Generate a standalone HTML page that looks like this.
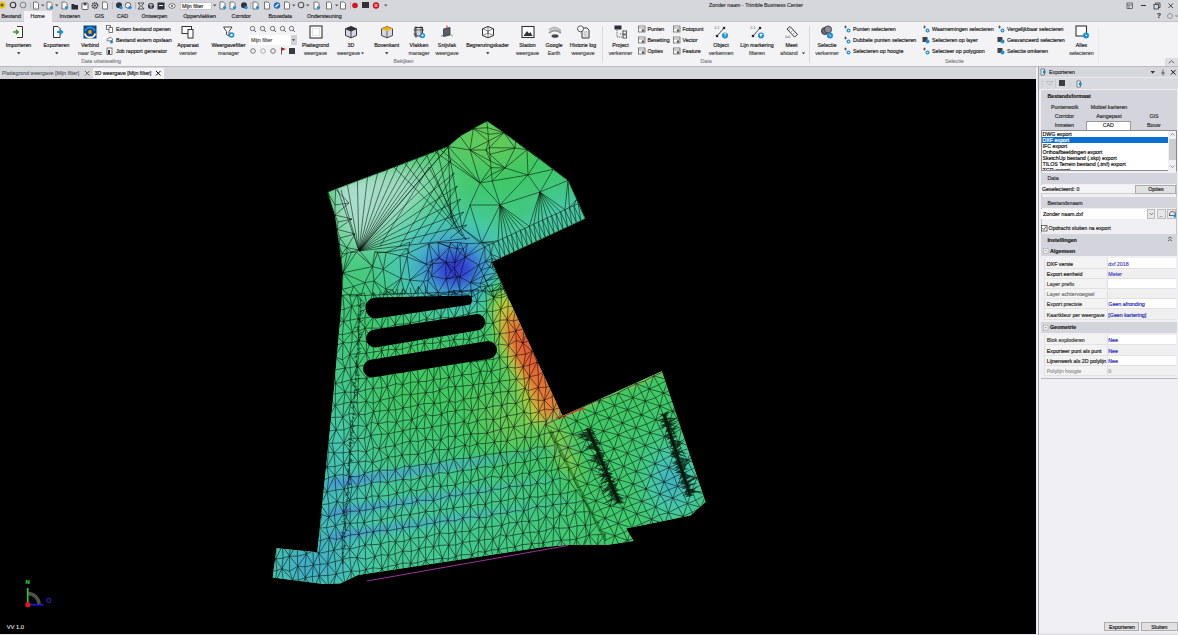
<!DOCTYPE html><html><head><meta charset="utf-8"><style>
html,body{margin:0;padding:0;}
body{width:1178px;height:635px;overflow:hidden;position:relative;background:#d6d7dd;font-family:"Liberation Sans",sans-serif;}
.t{position:absolute;white-space:pre;line-height:8px;height:8px;-webkit-text-stroke:0.18px currentColor;}
.r{position:absolute;}
</style></head><body>

<div class="r" style="left:0px;top:0px;width:1178px;height:22px;background:#d6d7dd;"></div>
<div class="r" style="left:0px;top:21px;width:1178px;height:45px;background:#f3f3f6;"></div>
<div class="r" style="left:0px;top:21px;width:1178px;height:1px;background:#c4c5cc;"></div>
<div class="r" style="left:24px;top:11px;width:28px;height:11px;background:#f3f3f6;"></div>
<div class="r" style="left:0px;top:65.5px;width:1178px;height:1px;background:#c0c1c8;"></div>
<div class="r" style="left:0px;top:66px;width:1038px;height:13px;background:#d6d7dd;"></div>
<div class="r" style="left:93px;top:67.5px;width:71px;height:11.5px;background:#f4f4f7;"></div>
<div class="r" style="left:0px;top:79px;width:1036px;height:555.5px;background:#000;"></div>
<div class="r" style="left:1036px;top:66px;width:2px;height:569px;background:#eeeef2;"></div>
<div class="r" style="left:1038px;top:66px;width:1px;height:569px;background:#a0a1a8;"></div>
<div class="r" style="left:0px;top:634.3px;width:1038px;height:1px;background:#e8e8ec;"></div>
<div class="t" style="left:1.5px;top:12.00px;font-size:5.3px;color:#2a2a2a;">Bestand</div>
<div class="t" style="left:30.6px;top:12.00px;font-size:5.3px;color:#2a2a2a;">Home</div>
<div class="t" style="left:59.6px;top:12.00px;font-size:5.3px;color:#2a2a2a;">Invoeren</div>
<div class="t" style="left:94.8px;top:12.00px;font-size:5.3px;color:#2a2a2a;">GIS</div>
<div class="t" style="left:117px;top:12.00px;font-size:5.3px;color:#2a2a2a;">CAD</div>
<div class="t" style="left:141.4px;top:12.00px;font-size:5.3px;color:#2a2a2a;">Ontwerpen</div>
<div class="t" style="left:183.2px;top:12.00px;font-size:5.3px;color:#2a2a2a;">Oppervlakken</div>
<div class="t" style="left:231.6px;top:12.00px;font-size:5.3px;color:#2a2a2a;">Corridor</div>
<div class="t" style="left:268.5px;top:12.00px;font-size:5.3px;color:#2a2a2a;">Bouwdata</div>
<div class="t" style="left:307px;top:12.00px;font-size:5.3px;color:#2a2a2a;">Ondersteuning</div>
<div class="t" style="left:656px;width:200px;text-align:center;top:1.00px;font-size:5.3px;color:#3a3a3a;">Zonder naam - Trimble Business Center</div>
<svg class="r" style="left:-1px;top:0px;" width="9" height="10" viewBox="0 0 9 10"><circle cx="3" cy="5" r="3.6" fill="#e6c51a"/><circle cx="3" cy="5" r="1.6" fill="#6b5a10"/></svg>
<svg class="r" style="left:9px;top:1px;" width="8" height="8" viewBox="0 0 8 8"><circle cx="4" cy="4" r="2.8" fill="none" stroke="#333" stroke-width="1.1"/></svg>
<svg class="r" style="left:19px;top:1px;" width="8" height="8" viewBox="0 0 8 8"><circle cx="4" cy="4" r="2.8" fill="none" stroke="#888" stroke-width="1.1"/></svg>
<div class="r" style="left:30px;top:2px;width:1px;height:7px;background:#b8b9c0;"></div>
<svg class="r" style="left:31.5px;top:1px;" width="8" height="9" viewBox="0 0 8 9"><path d="M1.5 1H5L6.5 2.5V8H1.5Z" fill="#fff" stroke="#555" stroke-width="0.8"/></svg>
<svg class="r" style="left:41px;top:4px;" width="4" height="3" viewBox="0 0 4 3"><path d="M0 0.5H3.5L1.75 2.5Z" fill="#555"/></svg>
<svg class="r" style="left:46px;top:1px;" width="8" height="9" viewBox="0 0 8 9"><path d="M1 1H4.5L6 2.5V8H1Z" fill="#fff" stroke="#555" stroke-width="0.8"/><circle cx="5.5" cy="6.5" r="1.6" fill="#1a8fd6"/></svg>
<svg class="r" style="left:55px;top:4px;" width="4" height="3" viewBox="0 0 4 3"><path d="M0 0.5H3.5L1.75 2.5Z" fill="#555"/></svg>
<svg class="r" style="left:60.599999999999994px;top:1px;" width="8" height="9" viewBox="0 0 8 9"><path d="M1 1H4.5L6 2.5V8H1Z" fill="#fff" stroke="#555" stroke-width="0.8"/><circle cx="5.5" cy="6.5" r="1.6" fill="#1a8fd6"/></svg>
<svg class="r" style="left:71px;top:2px;" width="8" height="8" viewBox="0 0 8 8"><path d="M0.5 2H3L3.8 3H7V7.5H0.5Z" fill="#2a2c34"/></svg>
<svg class="r" style="left:80.5px;top:1.5px;" width="8" height="8" viewBox="0 0 8 8"><rect x="1" y="1" width="6" height="6.5" rx="0.8" fill="#fff" stroke="#444" stroke-width="0.8"/><rect x="2.5" y="1" width="3" height="2.3" fill="#444"/></svg>
<svg class="r" style="left:90.6px;top:1px;" width="8" height="9" viewBox="0 0 8 9"><circle cx="4" cy="4.5" r="2.6" fill="none" stroke="#333" stroke-width="1.6" stroke-dasharray="1.2 0.6"/><circle cx="4" cy="4.5" r="1" fill="#333"/></svg>
<svg class="r" style="left:100.8px;top:1px;" width="8" height="9" viewBox="0 0 8 9"><path d="M1.5 1H5L6.5 2.5V8H1.5Z" fill="#fff" stroke="#555" stroke-width="0.8"/></svg>
<div class="r" style="left:112px;top:2px;width:1px;height:7px;background:#b8b9c0;"></div>
<svg class="r" style="left:114.6px;top:1px;" width="9" height="9" viewBox="0 0 9 9"><circle cx="4" cy="4.3" r="3" fill="#2d3440"/><circle cx="6" cy="6.5" r="1.7" fill="#1a8fd6"/></svg>
<svg class="r" style="left:124px;top:1px;" width="9" height="9" viewBox="0 0 9 9"><circle cx="4" cy="4.3" r="2.8" fill="#fff" stroke="#444" stroke-width="0.8"/><circle cx="6" cy="6.5" r="1.7" fill="#1a8fd6"/></svg>
<div class="r" style="left:135px;top:2px;width:1px;height:7px;background:#b8b9c0;"></div>
<svg class="r" style="left:137px;top:1.5px;" width="8" height="8" viewBox="0 0 8 8"><path d="M1 1H7L4.5 4L7 7H1L3.5 4Z" fill="#ddd" stroke="#333" stroke-width="0.8"/></svg>
<svg class="r" style="left:147px;top:1.5px;" width="8" height="8" viewBox="0 0 8 8"><circle cx="4" cy="4" r="3" fill="#2d2f38"/><path d="M4 1.5V6.5M2 3H6" stroke="#fff" stroke-width="0.7"/></svg>
<svg class="r" style="left:157.3px;top:1.5px;" width="8" height="8" viewBox="0 0 8 8"><rect x="0.5" y="0.5" width="7" height="7" fill="#2d2f38"/><path d="M2 3.5H6" stroke="#fff" stroke-width="1"/></svg>
<svg class="r" style="left:167.5px;top:1.5px;" width="8" height="8" viewBox="0 0 8 8"><ellipse cx="4" cy="4" rx="3.2" ry="2.3" fill="#fff" stroke="#555" stroke-width="0.8"/><circle cx="4" cy="4" r="1" fill="#555"/></svg>
<div class="r" style="left:180px;top:2px;width:32px;height:8px;background:#fff;border:0.5px solid #c8c8cc;box-sizing:border-box;"></div>
<div class="t" style="left:182px;top:2.00px;font-size:5.3px;color:#333;">Mijn filter</div>
<svg class="r" style="left:213px;top:4px;" width="4" height="3" viewBox="0 0 4 3"><path d="M0 0.5H3.5L1.75 2.5Z" fill="#555"/></svg>
<svg class="r" style="left:219px;top:1px;" width="8" height="9" viewBox="0 0 8 9"><path d="M1 1H4.5L6 2.5V8H1Z" fill="#fff" stroke="#555" stroke-width="0.8"/><circle cx="5.5" cy="6.5" r="1.6" fill="#1a8fd6"/></svg>
<svg class="r" style="left:229px;top:1px;" width="8" height="9" viewBox="0 0 8 9"><path d="M1 1H4.5L6 2.5V8H1Z" fill="#fff" stroke="#555" stroke-width="0.8"/><circle cx="5.5" cy="6.5" r="1.6" fill="#1a8fd6"/></svg>
<svg class="r" style="left:240px;top:1px;" width="9" height="9" viewBox="0 0 9 9"><circle cx="4" cy="4.3" r="3" fill="#2d3440"/><circle cx="6" cy="6.5" r="1.7" fill="#1a8fd6"/></svg>
<div class="r" style="left:250px;top:2px;width:1px;height:7px;background:#b8b9c0;"></div>
<svg class="r" style="left:252px;top:1px;" width="8" height="9" viewBox="0 0 8 9"><path d="M1 1H4.5L6 2.5V8H1Z" fill="#fff" stroke="#555" stroke-width="0.8"/><circle cx="5.5" cy="6.5" r="1.6" fill="#1a8fd6"/></svg>
<svg class="r" style="left:263px;top:1px;" width="8" height="9" viewBox="0 0 8 9"><path d="M1.5 1H5L6.5 2.5V8H1.5Z" fill="#fff" stroke="#555" stroke-width="0.8"/></svg>
<svg class="r" style="left:273px;top:1px;" width="8" height="8" viewBox="0 0 8 8"><circle cx="4" cy="4.5" r="3.2" fill="#1a6fc0"/><path d="M2.5 6L5.5 3" stroke="#fff" stroke-width="1.2"/></svg>
<svg class="r" style="left:283px;top:1px;" width="8" height="9" viewBox="0 0 8 9"><path d="M1.5 1H5L6.5 2.5V8H1.5Z" fill="#fff" stroke="#555" stroke-width="0.8"/></svg>
<svg class="r" style="left:292px;top:4px;" width="4" height="3" viewBox="0 0 4 3"><path d="M0 0.5H3.5L1.75 2.5Z" fill="#555"/></svg>
<svg class="r" style="left:297px;top:1px;" width="8" height="8" viewBox="0 0 8 8"><circle cx="4" cy="4" r="2.8" fill="none" stroke="#555" stroke-width="1.1"/></svg>
<svg class="r" style="left:306px;top:4px;" width="4" height="3" viewBox="0 0 4 3"><path d="M0 0.5H3.5L1.75 2.5Z" fill="#555"/></svg>
<div class="r" style="left:314px;top:2px;width:1px;height:7px;background:#b8b9c0;"></div>
<svg class="r" style="left:313px;top:1px;" width="8" height="9" viewBox="0 0 8 9"><path d="M1 1H4.5L6 2.5V8H1Z" fill="#fff" stroke="#555" stroke-width="0.8"/><circle cx="5.5" cy="6.5" r="1.6" fill="#1a8fd6"/></svg>
<svg class="r" style="left:325px;top:1px;" width="8" height="9" viewBox="0 0 8 9"><path d="M1.5 1H5L6.5 2.5V8H1.5Z" fill="#fff" stroke="#555" stroke-width="0.8"/></svg>
<svg class="r" style="left:335px;top:4px;" width="4" height="3" viewBox="0 0 4 3"><path d="M0 0.5H3.5L1.75 2.5Z" fill="#555"/></svg>
<svg class="r" style="left:339px;top:1px;" width="8" height="9" viewBox="0 0 8 9"><path d="M1.5 1H5L6.5 2.5V8H1.5Z" fill="#fff" stroke="#555" stroke-width="0.8"/></svg>
<div class="r" style="left:350px;top:2px;width:1px;height:7px;background:#b8b9c0;"></div>
<svg class="r" style="left:351px;top:1px;" width="8" height="8" viewBox="0 0 8 8"><circle cx="4" cy="4.5" r="2.8" fill="#d4141e"/></svg>
<div class="r" style="left:361.5px;top:2px;width:7px;height:6px;background:#333;"></div>
<svg class="r" style="left:372px;top:1px;" width="8" height="8" viewBox="0 0 8 8"><circle cx="4" cy="4.5" r="3.2" fill="#d4141e"/><path d="M2.6 3.1L5.4 5.9M5.4 3.1L2.6 5.9" stroke="#fff" stroke-width="0.9"/></svg>
<svg class="r" style="left:384px;top:4px;" width="4" height="3" viewBox="0 0 4 3"><path d="M0 0.5H3.5L1.75 2.5Z" fill="#555"/></svg>
<svg class="r" style="left:1125.5px;top:1.5px;" width="8" height="8" viewBox="0 0 8 8"><rect x="1" y="1" width="5.5" height="5.5" fill="none" stroke="#444" stroke-width="0.7"/><path d="M1 3H6.5M3 3V6.5" stroke="#444" stroke-width="0.6"/></svg>
<div class="r" style="left:1141px;top:5px;width:5px;height:0.8px;background:#333;"></div>
<svg class="r" style="left:1153px;top:1.5px;" width="8" height="8" viewBox="0 0 8 8"><rect x="1" y="2.5" width="4.5" height="4.5" fill="none" stroke="#333" stroke-width="0.8"/><path d="M2.5 2.5V1H7V5.5H5.5" fill="none" stroke="#333" stroke-width="0.8"/></svg>
<svg class="r" style="left:1167px;top:1.5px;" width="8" height="8" viewBox="0 0 8 8"><path d="M1.5 1.5L6 6M6 1.5L1.5 6" stroke="#333" stroke-width="0.9"/></svg>
<div class="t" style="left:1059px;width:200px;text-align:center;top:12.00px;font-size:7px;color:#333;font-weight:bold;">?</div>
<svg class="r" style="left:1166px;top:12px;" width="12" height="8" viewBox="0 0 12 8"><circle cx="4" cy="4" r="2.5" fill="none" stroke="#999" stroke-width="1"/><path d="M9 3.5H11.5L10.25 5Z" fill="#666"/></svg>
<svg class="r" style="left:11.5px;top:24.5px;" width="14" height="14" viewBox="0 0 14 14"><path d="M5 1.5H10.5V12.5H5" fill="#fff" stroke="#333" stroke-width="1"/><path d="M1 7H6M4 4.8L6.3 7L4 9.2" fill="none" stroke="#3f9b2f" stroke-width="1.6"/></svg>
<div class="t" style="left:-81.5px;width:200px;text-align:center;top:41.30px;font-size:5.3px;color:#262626;">Importeren</div>
<svg class="r" style="left:16.75px;top:51.5px;" width="4" height="3" viewBox="0 0 4 3"><path d="M0 0.3H3.5L1.75 2.3Z" fill="#222"/></svg>
<svg class="r" style="left:49.5px;top:24.5px;" width="14" height="14" viewBox="0 0 14 14"><path d="M3.5 1.5H8L10 3.5V12.5H3.5Z" fill="#fff" stroke="#333" stroke-width="1"/><path d="M7 7H12M10 4.8L12.3 7L10 9.2" fill="none" stroke="#1a8fd6" stroke-width="1.8"/></svg>
<div class="t" style="left:-43.5px;width:200px;text-align:center;top:41.30px;font-size:5.3px;color:#262626;">Exporteren</div>
<svg class="r" style="left:54.75px;top:51.5px;" width="4" height="3" viewBox="0 0 4 3"><path d="M0 0.3H3.5L1.75 2.3Z" fill="#222"/></svg>
<svg class="r" style="left:83px;top:24.5px;" width="14" height="14" viewBox="0 0 14 14"><rect x="0.5" y="0.5" width="13" height="13" fill="#0f4d8a"/><path d="M2 8.5A5 4 0 0 0 12 8.5" fill="none" stroke="#fff" stroke-width="1.8"/><path d="M2.5 6A4.5 3.5 0 0 1 11.5 6" fill="none" stroke="#29a3df" stroke-width="1.3"/><circle cx="7" cy="7" r="1.9" fill="#f2a81d"/></svg>
<div class="t" style="left:-10px;width:200px;text-align:center;top:41.30px;font-size:5.3px;color:#262626;">Verbind</div>
<div class="t" style="left:-10px;width:200px;text-align:center;top:48.80px;font-size:5.3px;color:#505050;">naar Sync</div>
<svg class="r" style="left:106px;top:25.3px;" width="8" height="8" viewBox="0 0 8 8"><rect x="0.5" y="0.5" width="4" height="4" fill="#fff" stroke="#444" stroke-width="0.7"/><path d="M3 2.5H6.5V7.5H3Z" fill="#fff" stroke="#444" stroke-width="0.7"/></svg>
<div class="t" style="left:116px;top:25.30px;font-size:5.3px;color:#262626;">Extern bestand openen</div>
<svg class="r" style="left:106px;top:36.2px;" width="8" height="8" viewBox="0 0 8 8"><path d="M1 5Q0.5 2 3 2Q4 0.5 5.5 2Q7 2.5 6.5 4.5Z" fill="#fff" stroke="#555" stroke-width="0.7"/><circle cx="5.5" cy="6" r="1.5" fill="#1a8fd6"/></svg>
<div class="t" style="left:116px;top:36.20px;font-size:5.3px;color:#262626;">Bestand extern opslaan</div>
<svg class="r" style="left:106px;top:47.2px;" width="8" height="8" viewBox="0 0 8 8"><rect x="1" y="1" width="5" height="6.5" fill="#fff" stroke="#444" stroke-width="0.7"/><rect x="2" y="3" width="2" height="4" fill="#333"/></svg>
<div class="t" style="left:116px;top:47.20px;font-size:5.3px;color:#262626;">Job rapport generator</div>
<div class="t" style="left:1px;width:200px;text-align:center;top:57.00px;font-size:5.3px;color:#8a8a90;">Data uitwisseling</div>
<svg class="r" style="left:181px;top:24.5px;" width="14" height="14" viewBox="0 0 14 14"><rect x="1" y="1.5" width="9.5" height="7" fill="#fff" stroke="#333" stroke-width="1"/><rect x="7" y="4.5" width="5" height="8.5" fill="#fff" stroke="#333" stroke-width="1"/></svg>
<div class="t" style="left:88px;width:200px;text-align:center;top:41.30px;font-size:5.3px;color:#262626;">Apparaat</div>
<div class="t" style="left:88px;width:200px;text-align:center;top:48.80px;font-size:5.3px;color:#505050;">venster</div>
<svg class="r" style="left:221.5px;top:24.5px;" width="14" height="14" viewBox="0 0 14 14"><path d="M1.5 2H10L7 6.5V11L4.5 9.5V6.5Z" fill="#fff" stroke="#444" stroke-width="1"/><circle cx="9.5" cy="10" r="2.8" fill="#1a8fd6"/><circle cx="9.5" cy="10" r="1.2" fill="#fff"/></svg>
<div class="t" style="left:128.5px;width:200px;text-align:center;top:41.30px;font-size:5.3px;color:#262626;">Weergavefilter</div>
<div class="t" style="left:128.5px;width:200px;text-align:center;top:48.80px;font-size:5.3px;color:#505050;">manager</div>
<svg class="r" style="left:249px;top:25px;" width="8" height="8" viewBox="0 0 8 8"><circle cx="3.5" cy="3.5" r="2.2" fill="none" stroke="#555" stroke-width="0.8"/><path d="M5 5L7 7" stroke="#555" stroke-width="0.9"/></svg>
<svg class="r" style="left:259px;top:25px;" width="8" height="8" viewBox="0 0 8 8"><circle cx="3.5" cy="3.5" r="2.2" fill="none" stroke="#555" stroke-width="0.8"/><path d="M5 5L7 7" stroke="#555" stroke-width="0.9"/></svg>
<svg class="r" style="left:269px;top:25px;" width="8" height="8" viewBox="0 0 8 8"><circle cx="3.5" cy="3.5" r="2.2" fill="none" stroke="#555" stroke-width="0.8"/><path d="M5 5L7 7" stroke="#555" stroke-width="0.9"/></svg>
<svg class="r" style="left:279px;top:25px;" width="8" height="8" viewBox="0 0 8 8"><circle cx="3.5" cy="3.5" r="2.2" fill="none" stroke="#555" stroke-width="0.8"/><path d="M5 5L7 7" stroke="#555" stroke-width="0.9"/></svg>
<svg class="r" style="left:288px;top:25px;" width="8" height="8" viewBox="0 0 8 8"><circle cx="3.5" cy="3.5" r="2.2" fill="none" stroke="#555" stroke-width="0.8"/><path d="M5 5L7 7" stroke="#555" stroke-width="0.9"/></svg>
<div class="r" style="left:249px;top:35px;width:48px;height:9.5px;background:#fff;"></div>
<div class="r" style="left:291px;top:35px;width:6px;height:9.5px;background:#d0d0d6;"></div>
<svg class="r" style="left:292px;top:38.5px;" width="4" height="3" viewBox="0 0 4 3"><path d="M0 0.3H3L1.5 2Z" fill="#333"/></svg>
<div class="t" style="left:251px;top:35.80px;font-size:5.3px;color:#555;">Mijn filter</div>
<svg class="r" style="left:249px;top:46.5px;" width="8" height="8" viewBox="0 0 8 8"><circle cx="4" cy="4" r="2.3" fill="none" stroke="#555" stroke-width="0.8"/></svg>
<svg class="r" style="left:259px;top:46.5px;" width="8" height="8" viewBox="0 0 8 8"><circle cx="4" cy="4" r="2.3" fill="none" stroke="#999" stroke-width="0.8"/></svg>
<svg class="r" style="left:269px;top:46.5px;" width="8" height="8" viewBox="0 0 8 8"><circle cx="4" cy="4" r="2.3" fill="none" stroke="#555" stroke-width="0.8"/></svg>
<svg class="r" style="left:280px;top:47px;" width="7" height="8" viewBox="0 0 7 8"><path d="M1.5 0.5V7.5" stroke="#333" stroke-width="0.8"/><path d="M1.5 0.5L6 2L1.5 3.8Z" fill="#c0141a"/></svg>
<div class="r" style="left:289px;top:47.5px;width:6px;height:6px;background:#3a3a44;"></div>
<svg class="r" style="left:308.5px;top:24.5px;" width="14" height="14" viewBox="0 0 14 14"><rect x="1" y="1" width="12" height="12" fill="#fff" stroke="#333" stroke-width="1.1"/><path d="M3.5 3.5V10.5H10.5V3.5Z" fill="none" stroke="#888" stroke-width="0.5" stroke-dasharray="1 1"/></svg>
<div class="t" style="left:215.5px;width:200px;text-align:center;top:41.30px;font-size:5.3px;color:#262626;">Plattegrond</div>
<div class="t" style="left:215.5px;width:200px;text-align:center;top:48.80px;font-size:5.3px;color:#505050;">weergave</div>
<svg class="r" style="left:344px;top:24.5px;" width="14" height="14" viewBox="0 0 14 14"><path d="M7 1.5L12.5 3.8V10.5L7 12.8L1.5 10.5V3.8Z" fill="#d6d6e2" stroke="#333" stroke-width="1"/><path d="M1.5 3.8L7 6L12.5 3.8M7 6V12.8" fill="none" stroke="#333" stroke-width="0.9"/><path d="M7 1.5L12.5 3.8L7 6L1.5 3.8Z" fill="#2d2f38"/></svg>
<div class="t" style="left:251px;width:200px;text-align:center;top:41.30px;font-size:5.3px;color:#262626;">3D</div>
<div class="t" style="left:248.5px;width:200px;text-align:center;top:48.80px;font-size:5.3px;color:#505050;">weergave</div>
<svg class="r" style="left:361px;top:51.5px;" width="4" height="3" viewBox="0 0 4 3"><path d="M0 0.5H3L1.5 2.3Z" fill="#222"/></svg>
<svg class="r" style="left:379.7px;top:24.5px;" width="14" height="14" viewBox="0 0 14 14"><path d="M7 1.5L12.5 3.8V10.5L7 12.8L1.5 10.5V3.8Z" fill="#d6d6e2" stroke="#444" stroke-width="1"/><path d="M7 1.5L12.5 3.8L7 6L1.5 3.8Z" fill="#f0b400"/><path d="M7 6V12.8" stroke="#444" stroke-width="0.8"/></svg>
<div class="t" style="left:286.7px;width:200px;text-align:center;top:41.30px;font-size:5.3px;color:#262626;">Bovenkant</div>
<svg class="r" style="left:384.95px;top:51.5px;" width="4" height="3" viewBox="0 0 4 3"><path d="M0 0.3H3.5L1.75 2.3Z" fill="#222"/></svg>
<svg class="r" style="left:412px;top:24.5px;" width="14" height="14" viewBox="0 0 14 14"><rect x="3" y="2.5" width="7.5" height="8.5" fill="#d6d6e2" stroke="#333" stroke-width="1"/><path d="M4 1V13M9 1V13M1.5 5H12M1.5 9H5" stroke="#333" stroke-width="0.7"/><circle cx="10.5" cy="10.5" r="2.6" fill="#1a8fd6"/><circle cx="10.5" cy="10.5" r="1.1" fill="#fff"/></svg>
<div class="t" style="left:319px;width:200px;text-align:center;top:41.30px;font-size:5.3px;color:#262626;">Vlakken</div>
<div class="t" style="left:319px;width:200px;text-align:center;top:48.80px;font-size:5.3px;color:#505050;">manager</div>
<svg class="r" style="left:440px;top:24.5px;" width="14" height="14" viewBox="0 0 14 14"><path d="M3.5 4L10 2.5V10L3.5 11.5Z" fill="#5a5c68" stroke="#333" stroke-width="0.8"/><path d="M7 0.5V3" stroke="#d22" stroke-width="1"/><path d="M1 11.5L3.5 10" stroke="#1a8fd6" stroke-width="1"/><path d="M10.5 9.5L12.5 11" stroke="#3a3" stroke-width="1"/></svg>
<div class="t" style="left:347px;width:200px;text-align:center;top:41.30px;font-size:5.3px;color:#262626;">Snijvlak</div>
<div class="t" style="left:347px;width:200px;text-align:center;top:48.80px;font-size:5.3px;color:#505050;">weergave</div>
<svg class="r" style="left:480.5px;top:24.5px;" width="14" height="14" viewBox="0 0 14 14"><path d="M7 1.5L12.5 3.8V10.5L7 12.8L1.5 10.5V3.8Z" fill="#fff" stroke="#333" stroke-width="1"/><path d="M1.5 3.8L7 6L12.5 3.8M7 6V12.8M1.5 10.5L7 8.2L12.5 10.5M7 1.5V8.2" fill="none" stroke="#333" stroke-width="0.6"/></svg>
<div class="t" style="left:387.5px;width:200px;text-align:center;top:41.30px;font-size:5.3px;color:#262626;">Begrenzingskader</div>
<svg class="r" style="left:485.75px;top:51.5px;" width="4" height="3" viewBox="0 0 4 3"><path d="M0 0.3H3.5L1.75 2.3Z" fill="#222"/></svg>
<svg class="r" style="left:520.5px;top:24.5px;" width="14" height="14" viewBox="0 0 14 14"><rect x="1" y="1.5" width="12" height="11" fill="#fff" stroke="#333" stroke-width="1.1"/><path d="M2.5 11L6 6L8 8.5L9.5 7L11.5 11Z" fill="#2d2f38"/></svg>
<div class="t" style="left:427.5px;width:200px;text-align:center;top:41.30px;font-size:5.3px;color:#262626;">Station</div>
<div class="t" style="left:427.5px;width:200px;text-align:center;top:48.80px;font-size:5.3px;color:#505050;">weergave</div>
<svg class="r" style="left:547px;top:24.5px;" width="16" height="14" viewBox="0 0 16 14"><path d="M2 5Q8 0 14 6" fill="none" stroke="#bbb" stroke-width="2.2"/><path d="M2 8Q8 3 14 8" fill="none" stroke="#999" stroke-width="2"/><ellipse cx="8" cy="11" rx="3.5" ry="1.8" fill="#444"/></svg>
<div class="t" style="left:454px;width:200px;text-align:center;top:41.30px;font-size:5.3px;color:#262626;">Google</div>
<div class="t" style="left:454px;width:200px;text-align:center;top:48.80px;font-size:5.3px;color:#505050;">Earth</div>
<svg class="r" style="left:576px;top:24.5px;" width="16" height="14" viewBox="0 0 16 14"><path d="M6 3H11L13 5V13H6Z" fill="#fff" stroke="#333" stroke-width="1"/><path d="M7.5 7H11.5M7.5 9H11.5M7.5 11H11.5" stroke="#666" stroke-width="0.6"/><circle cx="4.5" cy="3.8" r="3" fill="#fff" stroke="#444" stroke-width="0.9"/></svg>
<div class="t" style="left:483px;width:200px;text-align:center;top:41.30px;font-size:5.3px;color:#262626;">Historie log</div>
<div class="t" style="left:483px;width:200px;text-align:center;top:48.80px;font-size:5.3px;color:#505050;">weergave</div>
<div class="t" style="left:303.5px;width:200px;text-align:center;top:57.00px;font-size:5.3px;color:#8a8a90;">Bekijken</div>
<div class="r" style="left:602px;top:25.5px;width:0.7px;height:37px;background:#d8d8de;"></div>
<svg class="r" style="left:613.5px;top:24.5px;" width="14" height="14" viewBox="0 0 14 14"><rect x="0.5" y="0.5" width="7" height="4" fill="#2d2f38"/><path d="M3 5V12H10M6 9H10V6H8" fill="none" stroke="#333" stroke-width="0.8" stroke-dasharray="1 0.8"/><rect x="9" y="6" width="3.5" height="3" fill="#fff" stroke="#333" stroke-width="0.8"/><rect x="9" y="10" width="3.5" height="3" fill="#fff" stroke="#333" stroke-width="0.8"/></svg>
<div class="t" style="left:520.5px;width:200px;text-align:center;top:41.30px;font-size:5.3px;color:#262626;">Project</div>
<div class="t" style="left:520.5px;width:200px;text-align:center;top:48.80px;font-size:5.3px;color:#505050;">verkenner</div>
<svg class="r" style="left:637.5px;top:25.1px;" width="8" height="8" viewBox="0 0 8 8"><rect x="0.5" y="1" width="6.5" height="6" fill="#fff" stroke="#555" stroke-width="0.7"/><path d="M0.5 3H7" stroke="#555" stroke-width="0.6"/><circle cx="5" cy="5.5" r="1.3" fill="#555"/></svg>
<div class="t" style="left:647.5px;top:25.10px;font-size:5.3px;color:#262626;">Punten</div>
<svg class="r" style="left:637.5px;top:36px;" width="8" height="8" viewBox="0 0 8 8"><rect x="0.5" y="1" width="6.5" height="6" fill="#fff" stroke="#555" stroke-width="0.7"/><path d="M0.5 3H7" stroke="#555" stroke-width="0.6"/><circle cx="5" cy="5.5" r="1.3" fill="#555"/></svg>
<div class="t" style="left:647.5px;top:36.00px;font-size:5.3px;color:#262626;">Besetting</div>
<svg class="r" style="left:637.5px;top:46.8px;" width="8" height="8" viewBox="0 0 8 8"><rect x="0.5" y="1" width="6.5" height="6" fill="#fff" stroke="#555" stroke-width="0.7"/><path d="M0.5 3H7" stroke="#555" stroke-width="0.6"/><circle cx="5" cy="5.5" r="1.3" fill="#555"/></svg>
<div class="t" style="left:647.5px;top:46.80px;font-size:5.3px;color:#262626;">Opties</div>
<svg class="r" style="left:672.5px;top:25.1px;" width="8" height="8" viewBox="0 0 8 8"><rect x="0.5" y="1" width="6.5" height="6" fill="#fff" stroke="#555" stroke-width="0.7"/><path d="M0.5 3H7" stroke="#555" stroke-width="0.6"/><circle cx="5" cy="5.5" r="1.3" fill="#555"/></svg>
<div class="t" style="left:682.5px;top:25.10px;font-size:5.3px;color:#262626;">Fotopunt</div>
<svg class="r" style="left:672.5px;top:36px;" width="8" height="8" viewBox="0 0 8 8"><rect x="0.5" y="1" width="6.5" height="6" fill="#fff" stroke="#555" stroke-width="0.7"/><path d="M0.5 3H7" stroke="#555" stroke-width="0.6"/><circle cx="5" cy="5.5" r="1.3" fill="#555"/></svg>
<div class="t" style="left:682.5px;top:36.00px;font-size:5.3px;color:#262626;">Vector</div>
<svg class="r" style="left:672.5px;top:46.8px;" width="8" height="8" viewBox="0 0 8 8"><rect x="0.5" y="1" width="6.5" height="6" fill="#fff" stroke="#555" stroke-width="0.7"/><path d="M0.5 3H7" stroke="#555" stroke-width="0.6"/><circle cx="5" cy="5.5" r="1.3" fill="#555"/></svg>
<div class="t" style="left:682.5px;top:46.80px;font-size:5.3px;color:#262626;">Feature</div>
<svg class="r" style="left:714px;top:24.5px;" width="15" height="14" viewBox="0 0 15 14"><path d="M3 11L10 3" stroke="#333" stroke-width="0.9"/><circle cx="3" cy="11" r="1.3" fill="#222"/><circle cx="10" cy="3" r="1.3" fill="#222"/><text x="0.5" y="4" font-size="3.5" fill="#555" font-family="Liberation Sans">0.1</text><circle cx="11" cy="10.5" r="3" fill="#1a8fd6"/><text x="9.6" y="12.3" font-size="4.5" font-weight="bold" fill="#fff" font-family="Liberation Sans">?</text></svg>
<div class="t" style="left:621px;width:200px;text-align:center;top:41.30px;font-size:5.3px;color:#262626;">Object</div>
<div class="t" style="left:621px;width:200px;text-align:center;top:48.80px;font-size:5.3px;color:#505050;">verkennen</div>
<svg class="r" style="left:750px;top:24.5px;" width="15" height="14" viewBox="0 0 15 14"><path d="M3 11L10 3" stroke="#333" stroke-width="0.9"/><circle cx="3" cy="11" r="1.3" fill="#222"/><circle cx="10" cy="3" r="1.3" fill="#222"/><text x="0.5" y="4" font-size="3.5" fill="#555" font-family="Liberation Sans">0.1</text><circle cx="11" cy="10.5" r="3" fill="#1a8fd6"/><path d="M9.5 9H12.5L11 11V12.3" fill="#fff" stroke="#fff" stroke-width="0.4"/></svg>
<div class="t" style="left:657px;width:200px;text-align:center;top:41.30px;font-size:5.3px;color:#262626;">Lijn markering</div>
<div class="t" style="left:657px;width:200px;text-align:center;top:48.80px;font-size:5.3px;color:#505050;">filteren</div>
<svg class="r" style="left:784.5px;top:24.5px;" width="14" height="14" viewBox="0 0 14 14"><path d="M2 4L5 1.5L12.5 9.5L9.5 12Z" fill="#fff" stroke="#333" stroke-width="1"/><path d="M4 5L5.5 4M6 7L7.5 6M8 9L9.5 8" stroke="#333" stroke-width="0.6"/><text x="0" y="13" font-size="3" fill="#444" font-family="Liberation Sans">0=0</text></svg>
<div class="t" style="left:691.5px;width:200px;text-align:center;top:41.30px;font-size:5.3px;color:#262626;">Meet</div>
<div class="t" style="left:689.0px;width:200px;text-align:center;top:48.80px;font-size:5.3px;color:#505050;">afstand</div>
<svg class="r" style="left:801.5px;top:51.5px;" width="4" height="3" viewBox="0 0 4 3"><path d="M0 0.5H3L1.5 2.3Z" fill="#222"/></svg>
<div class="t" style="left:606px;width:200px;text-align:center;top:57.00px;font-size:5.3px;color:#8a8a90;">Data</div>
<div class="r" style="left:808.5px;top:25.5px;width:0.7px;height:37px;background:#d8d8de;"></div>
<svg class="r" style="left:820px;top:24.5px;" width="14" height="14" viewBox="0 0 14 14"><circle cx="5" cy="6" r="3.6" fill="#6a6c78" stroke="#333" stroke-width="0.8"/><circle cx="8" cy="4.5" r="3.6" fill="#8a8c98" stroke="#333" stroke-width="0.8"/><circle cx="10" cy="10.5" r="3" fill="#1a8fd6"/><path d="M9 8.8L11.3 11L10 11.3Z" fill="#fff"/></svg>
<div class="t" style="left:727px;width:200px;text-align:center;top:41.30px;font-size:5.3px;color:#262626;">Selectie</div>
<div class="t" style="left:727px;width:200px;text-align:center;top:48.80px;font-size:5.3px;color:#505050;">verkenner</div>
<svg class="r" style="left:843px;top:25.2px;" width="9" height="8" viewBox="0 0 9 8"><path d="M1 2H4M2.5 0.5V3.5" stroke="#333" stroke-width="0.7"/><circle cx="5.5" cy="5.5" r="2" fill="#1a8fd6"/><circle cx="5.5" cy="5.5" r="0.8" fill="#fff"/></svg>
<div class="t" style="left:853px;top:25.20px;font-size:5.3px;color:#262626;">Punten selecteren</div>
<svg class="r" style="left:843px;top:36px;" width="9" height="8" viewBox="0 0 9 8"><path d="M1 2H4M2.5 0.5V3.5" stroke="#333" stroke-width="0.7"/><circle cx="5.5" cy="5.5" r="2" fill="#1a8fd6"/><circle cx="5.5" cy="5.5" r="0.8" fill="#fff"/></svg>
<div class="t" style="left:853px;top:36.00px;font-size:5.3px;color:#262626;">Dubbele punten selecteren</div>
<svg class="r" style="left:843px;top:46.8px;" width="9" height="8" viewBox="0 0 9 8"><path d="M1 2H4M2.5 0.5V3.5" stroke="#333" stroke-width="0.7"/><circle cx="5.5" cy="5.5" r="2" fill="#1a8fd6"/><circle cx="5.5" cy="5.5" r="0.8" fill="#fff"/></svg>
<div class="t" style="left:853px;top:46.80px;font-size:5.3px;color:#262626;">Selecteren op hoogte</div>
<svg class="r" style="left:922px;top:25.2px;" width="9" height="8" viewBox="0 0 9 8"><path d="M1 2H4M2.5 0.5V3.5" stroke="#333" stroke-width="0.7"/><circle cx="5.5" cy="5.5" r="2" fill="#1a8fd6"/><circle cx="5.5" cy="5.5" r="0.8" fill="#fff"/></svg>
<div class="t" style="left:932px;top:25.20px;font-size:5.3px;color:#262626;">Waarnemingen selecteren</div>
<svg class="r" style="left:922px;top:36px;" width="9" height="8" viewBox="0 0 9 8"><rect x="0.5" y="1" width="5" height="5" fill="#444"/><circle cx="5.5" cy="5.5" r="2" fill="#1a8fd6"/></svg>
<div class="t" style="left:932px;top:36.00px;font-size:5.3px;color:#262626;">Selecteren op layer</div>
<svg class="r" style="left:922px;top:46.8px;" width="9" height="8" viewBox="0 0 9 8"><path d="M1 2H4M2.5 0.5V3.5" stroke="#333" stroke-width="0.7"/><circle cx="5.5" cy="5.5" r="2" fill="#1a8fd6"/><circle cx="5.5" cy="5.5" r="0.8" fill="#fff"/></svg>
<div class="t" style="left:932px;top:46.80px;font-size:5.3px;color:#262626;">Selecteer op polygoon</div>
<svg class="r" style="left:997px;top:25.2px;" width="9" height="8" viewBox="0 0 9 8"><path d="M1 2H4M2.5 0.5V3.5" stroke="#333" stroke-width="0.7"/><circle cx="5.5" cy="5.5" r="2" fill="#1a8fd6"/><circle cx="5.5" cy="5.5" r="0.8" fill="#fff"/></svg>
<div class="t" style="left:1007px;top:25.20px;font-size:5.3px;color:#262626;">Vergelijkbaar selecteren</div>
<svg class="r" style="left:997px;top:36px;" width="9" height="8" viewBox="0 0 9 8"><rect x="0.5" y="1" width="5" height="5" fill="#444"/><circle cx="5.5" cy="5.5" r="2" fill="#1a8fd6"/></svg>
<div class="t" style="left:1007px;top:36.00px;font-size:5.3px;color:#262626;">Geavanceerd selecteren</div>
<svg class="r" style="left:997px;top:46.8px;" width="9" height="8" viewBox="0 0 9 8"><rect x="0.5" y="1" width="5" height="5" fill="#444"/><circle cx="5.5" cy="5.5" r="2" fill="#1a8fd6"/></svg>
<div class="t" style="left:1007px;top:46.80px;font-size:5.3px;color:#262626;">Selectie omkeren</div>
<svg class="r" style="left:1074.5px;top:24.5px;" width="14" height="14" viewBox="0 0 14 14"><rect x="1" y="1" width="10.5" height="10" fill="#fff" stroke="#333" stroke-width="1.1"/><circle cx="11" cy="10.5" r="3" fill="#1a8fd6"/><path d="M10 8.8L12.3 11L11 11.3Z" fill="#fff"/></svg>
<div class="t" style="left:981.5px;width:200px;text-align:center;top:41.30px;font-size:5.3px;color:#262626;">Alles</div>
<div class="t" style="left:981.5px;width:200px;text-align:center;top:48.80px;font-size:5.3px;color:#505050;">selecteren</div>
<div class="t" style="left:854.4px;width:200px;text-align:center;top:57.00px;font-size:5.3px;color:#8a8a90;">Selectie</div>
<div class="r" style="left:1098px;top:25.5px;width:0.7px;height:37px;background:#eaeaef;"></div>
<div class="r" style="left:1164.5px;top:58px;width:13.5px;height:7.5px;background:#dcdce2;"></div>
<svg class="r" style="left:1168px;top:59.5px;" width="7" height="4" viewBox="0 0 7 4"><path d="M0.8 3.2L3.5 0.8L6.2 3.2" fill="none" stroke="#444" stroke-width="0.8"/></svg>
<div class="t" style="left:2px;top:69.00px;font-size:5.3px;color:#6a6a70;">Plattegrond weergave [Mijn filter]</div>
<svg class="r" style="left:83.5px;top:70px;" width="7" height="7" viewBox="0 0 7 7"><path d="M1 1L5.5 5.5M5.5 1L1 5.5" stroke="#555" stroke-width="0.9"/></svg>
<div class="t" style="left:94.5px;top:69.00px;font-size:5.3px;color:#222;">3D weergave [Mijn filter]</div>
<svg class="r" style="left:154.5px;top:70px;" width="7" height="7" viewBox="0 0 7 7"><path d="M1 1L5.5 5.5M5.5 1L1 5.5" stroke="#111" stroke-width="1"/></svg>
<div class="r" style="left:1039px;top:66px;width:139px;height:569px;background:#f0f0f4;"></div>
<div class="r" style="left:1039px;top:66px;width:139px;height:11px;background:#d6d7dd;"></div>
<svg class="r" style="left:1039.5px;top:67.5px;" width="7" height="8" viewBox="0 0 7 8"><path d="M1 1H4.5V7H1Z" fill="#fff" stroke="#333" stroke-width="0.6"/><circle cx="4.2" cy="4" r="1.7" fill="#1a8fd6"/></svg>
<div class="t" style="left:1049px;top:67.60px;font-size:5.3px;color:#333;">Exporteren</div>
<svg class="r" style="left:1150px;top:69.5px;" width="6" height="5" viewBox="0 0 6 5"><path d="M0.5 1H5L2.75 3.8Z" fill="#333"/></svg>
<svg class="r" style="left:1160px;top:68.5px;" width="6" height="7" viewBox="0 0 6 7"><path d="M3 0.5V4M1 4H5M3 4V6.5" stroke="#333" stroke-width="0.7"/></svg>
<svg class="r" style="left:1170px;top:68.5px;" width="7" height="7" viewBox="0 0 7 7"><path d="M1 1L5.5 5.5M5.5 1L1 5.5" stroke="#111" stroke-width="1"/></svg>
<div class="r" style="left:1039px;top:77px;width:139px;height:12.5px;background:#d9dae0;"></div>
<div class="r" style="left:1039px;top:77px;width:139px;height:0.8px;background:#e9e9ee;"></div>
<div class="r" style="left:1039px;top:88.6px;width:139px;height:0.8px;background:#eeeef2;"></div>
<svg class="r" style="left:1040.5px;top:78.5px;" width="3" height="9" viewBox="0 0 3 9"><path d="M0.5 0.5V8.5M2 1.5V7.5" stroke="#bbb" stroke-width="0.6" stroke-dasharray="0.8 0.8"/></svg>
<svg class="r" style="left:1069px;top:78.5px;" width="3" height="9" viewBox="0 0 3 9"><path d="M0.5 0.5V8.5M2 1.5V7.5" stroke="#bbb" stroke-width="0.6" stroke-dasharray="0.8 0.8"/></svg>
<svg class="r" style="left:1045.5px;top:79.5px;" width="8" height="7" viewBox="0 0 8 7"><path d="M0.5 1.5H7L3.75 5.5Z" fill="none" stroke="#aaa" stroke-width="0.6"/></svg>
<div class="r" style="left:1055px;top:79px;width:0.6px;height:9px;background:#c8c8ce;"></div>
<div class="r" style="left:1059px;top:80px;width:5.5px;height:6px;background:#3a3c46;"></div>
<svg class="r" style="left:1075.5px;top:79.5px;" width="7" height="8" viewBox="0 0 7 8"><path d="M1 1H4.5V7H1Z" fill="#fff" stroke="#333" stroke-width="0.6"/><circle cx="4.2" cy="4" r="1.7" fill="#1a8fd6"/></svg>
<div class="r" style="left:1041px;top:89.5px;width:136px;height:289px;background:#f0f0f4;border:0.6px solid #c4c5cc;box-sizing:border-box;"></div>
<div class="r" style="left:1041px;top:89.5px;width:136px;height:41px;background:#d4d5dc;"></div>
<div class="t" style="left:1047.4px;top:92.30px;font-size:5.3px;color:#222;font-weight:bold;">Bestandsformaat</div>
<div class="t" style="left:1051px;top:102.80px;font-size:5.3px;color:#333;">Puntenwolk</div>
<div class="t" style="left:1090.8px;top:102.80px;font-size:5.3px;color:#333;">Mobiel karteren</div>
<div class="t" style="left:964.4000000000001px;width:200px;text-align:center;top:112.00px;font-size:5.3px;color:#333;">Corridor</div>
<div class="t" style="left:1009px;width:200px;text-align:center;top:112.00px;font-size:5.3px;color:#333;">Aangepast</div>
<div class="t" style="left:1054px;width:200px;text-align:center;top:112.00px;font-size:5.3px;color:#333;">GIS</div>
<div class="r" style="left:1086px;top:120.6px;width:44.6px;height:9.5px;background:#fff;border:0.6px solid #999;border-bottom:none;box-sizing:border-box;border-radius:1px 1px 0 0;"></div>
<div class="t" style="left:964.4000000000001px;width:200px;text-align:center;top:121.40px;font-size:5.3px;color:#333;">Inmeten</div>
<div class="t" style="left:1008.3px;width:200px;text-align:center;top:121.40px;font-size:5.3px;color:#333;">CAD</div>
<div class="t" style="left:1053.7px;width:200px;text-align:center;top:121.40px;font-size:5.3px;color:#333;">Bouw</div>
<div class="r" style="left:1041px;top:130.3px;width:135.5px;height:40.5px;background:#fff;border:0.6px solid #8a8a90;box-sizing:border-box;"></div>
<div class="r" style="left:1042px;top:137px;width:126px;height:5.8px;background:#0a6fd2;"></div>
<div class="t" style="left:1042.5px;top:130.00px;font-size:5.3px;color:#111;">DWG export</div>
<div class="t" style="left:1042.5px;top:136.00px;font-size:5.3px;color:#fff;">DXF export</div>
<div class="t" style="left:1042.5px;top:142.00px;font-size:5.3px;color:#111;">IFC export</div>
<div class="t" style="left:1042.5px;top:148.00px;font-size:5.3px;color:#111;">Orthoafbeeldingen export</div>
<div class="t" style="left:1042.5px;top:154.00px;font-size:5.3px;color:#111;">SketchUp bestand (.skp) export</div>
<div class="t" style="left:1042.5px;top:160.00px;font-size:5.3px;color:#111;">TILOS Terrein bestand (.tmf) export</div>
<div class="r" style="left:1042px;top:167px;width:120px;height:3.4px;overflow:hidden"><div class="t" style="left:0.5px;top:-1px;font-size:5.3px;color:#111">TGR export</div></div>
<div class="r" style="left:1168px;top:131px;width:8px;height:39.5px;background:#f0f0f0;"></div>
<div class="r" style="left:1169px;top:139px;width:6.5px;height:20.5px;background:#cdcdcd;"></div>
<svg class="r" style="left:1169px;top:132px;" width="7" height="5" viewBox="0 0 7 5"><path d="M1.5 3.5L3.5 1.5L5.5 3.5" fill="none" stroke="#555" stroke-width="0.6"/></svg>
<svg class="r" style="left:1169px;top:163.5px;" width="7" height="5" viewBox="0 0 7 5"><path d="M1.5 1.5L3.5 3.5L5.5 1.5" fill="none" stroke="#555" stroke-width="0.6"/></svg>
<div class="r" style="left:1041px;top:172.5px;width:136px;height:11.5px;background:#d4d5dc;"></div>
<div class="t" style="left:1047.4px;top:174.40px;font-size:5.3px;color:#333;">Data</div>
<div class="r" style="left:1041px;top:184.5px;width:94px;height:9.2px;background:#f4f4f6;border-bottom:0.6px solid #ccc;box-sizing:border-box;"></div>
<div class="t" style="left:1042px;top:185.00px;font-size:5.3px;color:#222;">Geselecteerd: 0</div>
<div class="r" style="left:1135.4px;top:184.5px;width:41px;height:9.2px;background:#e1e1e1;border:0.6px solid #adadad;box-sizing:border-box;"></div>
<div class="t" style="left:1055.9px;width:200px;text-align:center;top:185.20px;font-size:5.3px;color:#222;">Opties</div>
<div class="r" style="left:1041px;top:197.2px;width:136px;height:11.2px;background:#d4d5dc;"></div>
<div class="t" style="left:1047.4px;top:198.60px;font-size:5.3px;color:#333;">Bestandsnaam</div>
<div class="r" style="left:1041px;top:208.7px;width:106px;height:10.3px;background:#fff;"></div>
<div class="t" style="left:1043px;top:210.00px;font-size:5.3px;color:#222;">Zonder naam.dxf</div>
<div class="r" style="left:1147px;top:209px;width:8px;height:10px;background:#e6e6e8;border:0.6px solid #bbb;box-sizing:border-box;"></div>
<svg class="r" style="left:1148.5px;top:212px;" width="5" height="4" viewBox="0 0 5 4"><path d="M0.8 1L2.5 2.8L4.2 1" fill="none" stroke="#444" stroke-width="0.6"/></svg>
<div class="r" style="left:1156.5px;top:209px;width:9px;height:10px;background:#e6e6e8;border:0.6px solid #bbb;box-sizing:border-box;"></div>
<div class="t" style="left:1061px;width:200px;text-align:center;top:211.00px;font-size:5.3px;color:#444;">..</div>
<div class="r" style="left:1166.7px;top:209px;width:9.8px;height:10px;background:#e6e6e8;border:0.6px solid #bbb;box-sizing:border-box;"></div>
<svg class="r" style="left:1167.5px;top:210px;" width="9" height="8" viewBox="0 0 9 8"><path d="M1.5 6Q1 1.5 4.5 1.5Q8 1.5 7.5 5.5H1.5" fill="none" stroke="#333" stroke-width="0.7"/><circle cx="6.8" cy="6" r="1.4" fill="#1a8fd6"/></svg>
<svg class="r" style="left:1041.3px;top:224.6px;" width="7" height="7" viewBox="0 0 7 7"><rect x="0.5" y="0.5" width="5.5" height="5.5" fill="#fff" stroke="#333" stroke-width="0.7"/><path d="M1.5 3.2L2.8 4.6L5.2 1.5" fill="none" stroke="#222" stroke-width="0.8"/></svg>
<div class="t" style="left:1048.6px;top:224.00px;font-size:5.3px;color:#222;">Opdracht sluiten na export</div>
<div class="r" style="left:1041px;top:234px;width:136px;height:11px;background:#d4d5dc;"></div>
<div class="r" style="left:1041px;top:244.6px;width:136px;height:0.8px;background:#b8b9c0;"></div>
<div class="t" style="left:1047.4px;top:235.50px;font-size:5.3px;color:#222;font-weight:bold;">Instellingen</div>
<svg class="r" style="left:1167px;top:236px;" width="6" height="7" viewBox="0 0 6 7"><path d="M1 2.5L3 1L5 2.5M1 5L3 3.5L5 5" fill="none" stroke="#333" stroke-width="0.7"/></svg>
<div class="r" style="left:1041px;top:245.4px;width:136px;height:10.5px;background:#d4d5dc;"></div>
<svg class="r" style="left:1043px;top:247.9px;" width="6" height="6" viewBox="0 0 6 6"><rect x="0.5" y="0.5" width="4.5" height="4.5" fill="#fff" stroke="#999" stroke-width="0.5"/><path d="M1.5 2.75H4" stroke="#333" stroke-width="0.5"/></svg>
<div class="t" style="left:1050px;top:246.60px;font-size:5.3px;color:#222;font-weight:bold;">Algemeen</div>
<div class="r" style="left:1041px;top:255.9px;width:136px;height:66px;background:#f0f0f4;"></div>
<div class="r" style="left:1044.4px;top:258.4px;width:62px;height:10.2px;background:#f3f3f3;border-bottom:0.6px solid #e2e2e2;box-sizing:border-box;"></div>
<div class="r" style="left:1106.5px;top:258.4px;width:69.3px;height:10.2px;background:#ffffff;border-bottom:0.6px solid #e2e2e2;border-left:0.6px solid #e2e2e2;box-sizing:border-box;"></div>
<div class="t" style="left:1046.8px;top:259.50px;font-size:5.3px;color:#222;">DXF versie</div>
<div class="t" style="left:1108.3px;top:259.50px;font-size:5.3px;color:#4a4ac8;">dxf 2018</div>
<div class="r" style="left:1044.4px;top:268.59999999999997px;width:62px;height:10.2px;background:#f3f3f3;border-bottom:0.6px solid #e2e2e2;box-sizing:border-box;"></div>
<div class="r" style="left:1106.5px;top:268.59999999999997px;width:69.3px;height:10.2px;background:#efefef;border-bottom:0.6px solid #e2e2e2;border-left:0.6px solid #e2e2e2;box-sizing:border-box;"></div>
<div class="t" style="left:1046.8px;top:269.70px;font-size:5.3px;color:#222;">Export eenheid</div>
<div class="t" style="left:1108.3px;top:269.70px;font-size:5.3px;color:#4a4ac8;">Meter</div>
<div class="r" style="left:1044.4px;top:278.79999999999995px;width:62px;height:10.2px;background:#f3f3f3;border-bottom:0.6px solid #e2e2e2;box-sizing:border-box;"></div>
<div class="r" style="left:1106.5px;top:278.79999999999995px;width:69.3px;height:10.2px;background:#ffffff;border-bottom:0.6px solid #e2e2e2;border-left:0.6px solid #e2e2e2;box-sizing:border-box;"></div>
<div class="t" style="left:1046.8px;top:279.90px;font-size:5.3px;color:#444;">Layer prefix</div>
<div class="r" style="left:1044.4px;top:289.0px;width:62px;height:10.2px;background:#f3f3f3;border-bottom:0.6px solid #e2e2e2;box-sizing:border-box;"></div>
<div class="r" style="left:1106.5px;top:289.0px;width:69.3px;height:10.2px;background:#efefef;border-bottom:0.6px solid #e2e2e2;border-left:0.6px solid #e2e2e2;box-sizing:border-box;"></div>
<div class="t" style="left:1046.8px;top:290.10px;font-size:5.3px;color:#777;">Layer achtervoegsel</div>
<div class="r" style="left:1044.4px;top:299.2px;width:62px;height:10.2px;background:#f3f3f3;border-bottom:0.6px solid #e2e2e2;box-sizing:border-box;"></div>
<div class="r" style="left:1106.5px;top:299.2px;width:69.3px;height:10.2px;background:#ffffff;border-bottom:0.6px solid #e2e2e2;border-left:0.6px solid #e2e2e2;box-sizing:border-box;"></div>
<div class="t" style="left:1046.8px;top:300.30px;font-size:5.3px;color:#333;">Export precisie</div>
<div class="t" style="left:1108.3px;top:300.30px;font-size:5.3px;color:#2a2ab8;">Geen afronding</div>
<div class="r" style="left:1044.4px;top:309.4px;width:62px;height:10.2px;background:#f3f3f3;border-bottom:0.6px solid #e2e2e2;box-sizing:border-box;"></div>
<div class="r" style="left:1106.5px;top:309.4px;width:69.3px;height:10.2px;background:#efefef;border-bottom:0.6px solid #e2e2e2;border-left:0.6px solid #e2e2e2;box-sizing:border-box;"></div>
<div class="t" style="left:1046.8px;top:310.50px;font-size:5.3px;color:#333;">Kaartkleur per weergave</div>
<div class="t" style="left:1108.3px;top:310.50px;font-size:5.3px;color:#2a2ab8;">[Geen kartering]</div>
<div class="r" style="left:1044.4px;top:258.4px;width:0.6px;height:61.199999999999996px;background:#e0e0e0;"></div>
<div class="r" style="left:1041px;top:322.2px;width:136px;height:10.5px;background:#d4d5dc;"></div>
<svg class="r" style="left:1043px;top:324.7px;" width="6" height="6" viewBox="0 0 6 6"><rect x="0.5" y="0.5" width="4.5" height="4.5" fill="#fff" stroke="#999" stroke-width="0.5"/><path d="M1.5 2.75H4" stroke="#333" stroke-width="0.5"/></svg>
<div class="t" style="left:1050px;top:323.40px;font-size:5.3px;color:#222;font-weight:bold;">Geometrie</div>
<div class="r" style="left:1041px;top:332.7px;width:136px;height:45.5px;background:#f0f0f4;"></div>
<div class="r" style="left:1044.4px;top:335.2px;width:62px;height:10.2px;background:#f3f3f3;border-bottom:0.6px solid #e2e2e2;box-sizing:border-box;"></div>
<div class="r" style="left:1106.5px;top:335.2px;width:69.3px;height:10.2px;background:#ffffff;border-bottom:0.6px solid #e2e2e2;border-left:0.6px solid #e2e2e2;box-sizing:border-box;"></div>
<div class="t" style="left:1046.8px;top:336.30px;font-size:5.3px;color:#444;">Blok exploderen</div>
<div class="t" style="left:1108.3px;top:336.30px;font-size:5.3px;color:#2a2ab8;">Nee</div>
<div class="r" style="left:1044.4px;top:345.4px;width:62px;height:10.2px;background:#f3f3f3;border-bottom:0.6px solid #e2e2e2;box-sizing:border-box;"></div>
<div class="r" style="left:1106.5px;top:345.4px;width:69.3px;height:10.2px;background:#efefef;border-bottom:0.6px solid #e2e2e2;border-left:0.6px solid #e2e2e2;box-sizing:border-box;"></div>
<div class="t" style="left:1046.8px;top:346.50px;font-size:5.3px;color:#222;">Exporteer punt als punt</div>
<div class="t" style="left:1108.3px;top:346.50px;font-size:5.3px;color:#2a2ab8;">Nee</div>
<div class="r" style="left:1044.4px;top:355.59999999999997px;width:62px;height:10.2px;background:#f3f3f3;border-bottom:0.6px solid #e2e2e2;box-sizing:border-box;"></div>
<div class="r" style="left:1106.5px;top:355.59999999999997px;width:69.3px;height:10.2px;background:#ffffff;border-bottom:0.6px solid #e2e2e2;border-left:0.6px solid #e2e2e2;box-sizing:border-box;"></div>
<div class="t" style="left:1046.8px;top:356.70px;font-size:5.3px;color:#222;">Lijnenwerk als 2D polylijn</div>
<div class="t" style="left:1108.3px;top:356.70px;font-size:5.3px;color:#2a2ab8;">Nee</div>
<div class="r" style="left:1044.4px;top:365.8px;width:62px;height:10.2px;background:#f3f3f3;border-bottom:0.6px solid #e2e2e2;box-sizing:border-box;"></div>
<div class="r" style="left:1106.5px;top:365.8px;width:69.3px;height:10.2px;background:#efefef;border-bottom:0.6px solid #e2e2e2;border-left:0.6px solid #e2e2e2;box-sizing:border-box;"></div>
<div class="t" style="left:1046.8px;top:366.90px;font-size:5.3px;color:#999;">Polylijn hoogte</div>
<div class="t" style="left:1108.3px;top:366.90px;font-size:5.3px;color:#999;">0</div>
<div class="r" style="left:1044.4px;top:335.2px;width:0.6px;height:40.8px;background:#e0e0e0;"></div>
<div class="r" style="left:1041px;top:377.6px;width:136px;height:0.8px;background:#b8b9c0;"></div>
<div class="r" style="left:0px;top:65.6px;width:1178px;height:1px;background:#b9bac1;"></div>
<div class="r" style="left:1104.4px;top:622.2px;width:35px;height:9px;background:#e1e1e1;border:0.6px solid #adadad;box-sizing:border-box;"></div>
<div class="t" style="left:1021.9000000000001px;width:200px;text-align:center;top:622.80px;font-size:5.3px;color:#222;">Exporteren</div>
<div class="r" style="left:1141px;top:622.2px;width:36.6px;height:9px;background:#e1e1e1;border:0.6px solid #adadad;box-sizing:border-box;"></div>
<div class="t" style="left:1059.3px;width:200px;text-align:center;top:622.80px;font-size:5.3px;color:#222;">Sluiten</div>
<div class="r" style="left:1039px;top:633px;width:139px;height:2px;background:#e4e4e8;"></div>
<svg class="r" style="left:20px;top:570px;" width="40" height="40" viewBox="0 0 40 40"><path d="M8 23.5A11 11 0 0 1 19 34.5" fill="none" stroke="#505050" stroke-width="3.6"/><path d="M7.7 33V18.5" stroke="#2bd12b" stroke-width="1.6"/><path d="M6.5 19.5L7.7 17.8L8.9 19.5Z" fill="#2bd12b"/><path d="M8 34.7H23.5" stroke="#1a1ad8" stroke-width="1.7"/><rect x="5.3" y="32.2" width="5" height="5" rx="1.6" fill="#e0141a"/></svg>
<div class="t" style="left:-72.3px;width:200px;text-align:center;top:577.60px;font-size:6px;color:#2bd12b;font-weight:bold;">N</div>
<div class="t" style="left:-51.3px;width:200px;text-align:center;top:597.40px;font-size:6.5px;color:#2a2ae0;">O</div>
<div class="t" style="left:6.7px;top:623.30px;font-size:5.8px;color:#d8d8d8;">VV 1.0</div>
<svg class="r" style="left:0;top:0" width="1178" height="635" viewBox="0 0 1178 635">
<defs>
<clipPath id="cp"><polygon points="486.9,121.0 503.9,132.7 538.6,158.2 568.0,180.4 585.3,218.5 491.7,262.0 562.5,416.0 661.8,371.3 705.5,502.0 690.3,515.4 626.0,528.6 633.6,540.9 608.0,544.7 568.4,544.7 540.0,547.5 358.0,575.0 338.9,584.0 323.6,584.0 272.7,577.6 276.5,548.3 317.3,552.2 333.0,400.0 341.4,306.0 343.0,272.8 335.0,215.0 327.6,192.2 448.3,146.5 460.0,136.2"/></clipPath>
<filter id="sm" x="-5%" y="-5%" width="110%" height="110%"><feGaussianBlur stdDeviation="3.5"/></filter>
<filter id="sm2" x="-20%" y="-20%" width="140%" height="140%"><feGaussianBlur stdDeviation="5"/></filter>
<linearGradient id="lg1" x1="0" y1="0" x2="1" y2="0.3"><stop offset="0" stop-color="#b4e0d8"/><stop offset="0.45" stop-color="#a6dcc8" stop-opacity="0.85"/><stop offset="1" stop-color="#7cd0a0" stop-opacity="0"/></linearGradient>
<filter id="sm3" x="-20%" y="-50%" width="140%" height="200%"><feGaussianBlur stdDeviation="2"/></filter>
<linearGradient id="bg1" gradientUnits="userSpaceOnUse" x1="330" y1="0" x2="600" y2="0"><stop offset="0" stop-color="#4a90d8" stop-opacity="0.75"/><stop offset="0.45" stop-color="#4aa0d0" stop-opacity="0.5"/><stop offset="1" stop-color="#48b0c0" stop-opacity="0"/></linearGradient>
</defs>
<g clip-path="url(#cp)">
<rect x="260" y="110" width="460" height="480" fill="#42c850"/>
<g filter="url(#sm)"><rect x="480" y="114" width="6" height="6" fill="#51c95e"/><rect x="486" y="114" width="6" height="6" fill="#52c95e"/><rect x="468" y="120" width="6" height="6" fill="#53c95d"/><rect x="474" y="120" width="6" height="6" fill="#56c95d"/><rect x="480" y="120" width="6" height="6" fill="#57c95c"/><rect x="486" y="120" width="6" height="6" fill="#58c95c"/><rect x="492" y="120" width="6" height="6" fill="#58c95c"/><rect x="498" y="120" width="6" height="6" fill="#56c95c"/><rect x="456" y="126" width="6" height="6" fill="#51c95e"/><rect x="462" y="126" width="6" height="6" fill="#55c95d"/><rect x="468" y="126" width="6" height="6" fill="#58ca5c"/><rect x="474" y="126" width="6" height="6" fill="#5bca5b"/><rect x="480" y="126" width="6" height="6" fill="#5dca5a"/><rect x="486" y="126" width="6" height="6" fill="#5eca5a"/><rect x="492" y="126" width="6" height="6" fill="#5dca5a"/><rect x="498" y="126" width="6" height="6" fill="#5cca5b"/><rect x="504" y="126" width="6" height="6" fill="#59ca5b"/><rect x="450" y="132" width="6" height="6" fill="#50c960"/><rect x="456" y="132" width="6" height="6" fill="#54c95e"/><rect x="462" y="132" width="6" height="6" fill="#58ca5d"/><rect x="468" y="132" width="6" height="6" fill="#5bca5b"/><rect x="474" y="132" width="6" height="6" fill="#5eca5a"/><rect x="480" y="132" width="6" height="6" fill="#61ca59"/><rect x="486" y="132" width="6" height="6" fill="#61ca59"/><rect x="492" y="132" width="6" height="6" fill="#61ca59"/><rect x="498" y="132" width="6" height="6" fill="#5fca5a"/><rect x="504" y="132" width="6" height="6" fill="#5cca5a"/><rect x="510" y="132" width="6" height="6" fill="#59c95c"/><rect x="444" y="138" width="6" height="6" fill="#4ec962"/><rect x="450" y="138" width="6" height="6" fill="#51c961"/><rect x="456" y="138" width="6" height="6" fill="#55ca5f"/><rect x="462" y="138" width="6" height="6" fill="#59ca5d"/><rect x="468" y="138" width="6" height="6" fill="#5dca5c"/><rect x="474" y="138" width="6" height="6" fill="#60ca5a"/><rect x="480" y="138" width="6" height="6" fill="#62ca59"/><rect x="486" y="138" width="6" height="6" fill="#62ca59"/><rect x="492" y="138" width="6" height="6" fill="#62ca59"/><rect x="498" y="138" width="6" height="6" fill="#60ca59"/><rect x="504" y="138" width="6" height="6" fill="#5dca5a"/><rect x="510" y="138" width="6" height="6" fill="#59ca5b"/><rect x="516" y="138" width="6" height="6" fill="#55c95d"/><rect x="522" y="138" width="6" height="6" fill="#51c95e"/><rect x="426" y="144" width="6" height="6" fill="#49c969"/><rect x="432" y="144" width="6" height="6" fill="#4bca68"/><rect x="438" y="144" width="6" height="6" fill="#4dca67"/><rect x="444" y="144" width="6" height="6" fill="#4fca65"/><rect x="450" y="144" width="6" height="6" fill="#52ca64"/><rect x="456" y="144" width="6" height="6" fill="#55ca61"/><rect x="462" y="144" width="6" height="6" fill="#58ca5f"/><rect x="468" y="144" width="6" height="6" fill="#5bca5d"/><rect x="474" y="144" width="6" height="6" fill="#5eca5c"/><rect x="480" y="144" width="6" height="6" fill="#60ca5b"/><rect x="486" y="144" width="6" height="6" fill="#60ca5a"/><rect x="492" y="144" width="6" height="6" fill="#60ca5a"/><rect x="498" y="144" width="6" height="6" fill="#5eca5a"/><rect x="504" y="144" width="6" height="6" fill="#5bca5b"/><rect x="510" y="144" width="6" height="6" fill="#57c95c"/><rect x="516" y="144" width="6" height="6" fill="#53c95d"/><rect x="522" y="144" width="6" height="6" fill="#4fc95e"/><rect x="528" y="144" width="6" height="6" fill="#4cc860"/><rect x="414" y="150" width="6" height="6" fill="#4dcb70"/><rect x="420" y="150" width="6" height="6" fill="#4dcb70"/><rect x="426" y="150" width="6" height="6" fill="#4ecb6f"/><rect x="432" y="150" width="6" height="6" fill="#4fcb6e"/><rect x="438" y="150" width="6" height="6" fill="#50cb6d"/><rect x="444" y="150" width="6" height="6" fill="#51cb6a"/><rect x="450" y="150" width="6" height="6" fill="#52ca68"/><rect x="456" y="150" width="6" height="6" fill="#54ca65"/><rect x="462" y="150" width="6" height="6" fill="#56ca62"/><rect x="468" y="150" width="6" height="6" fill="#58ca60"/><rect x="474" y="150" width="6" height="6" fill="#5aca5e"/><rect x="480" y="150" width="6" height="6" fill="#5bca5d"/><rect x="486" y="150" width="6" height="6" fill="#5bca5c"/><rect x="492" y="150" width="6" height="6" fill="#5bca5b"/><rect x="498" y="150" width="6" height="6" fill="#59ca5c"/><rect x="504" y="150" width="6" height="6" fill="#57c95c"/><rect x="510" y="150" width="6" height="6" fill="#54c95d"/><rect x="516" y="150" width="6" height="6" fill="#50c95e"/><rect x="522" y="150" width="6" height="6" fill="#4cc95f"/><rect x="528" y="150" width="6" height="6" fill="#49c861"/><rect x="534" y="150" width="6" height="6" fill="#46c862"/><rect x="540" y="150" width="6" height="6" fill="#43c862"/><rect x="396" y="156" width="6" height="6" fill="#54cd79"/><rect x="402" y="156" width="6" height="6" fill="#56cd7a"/><rect x="408" y="156" width="6" height="6" fill="#56cd7b"/><rect x="414" y="156" width="6" height="6" fill="#57cd7b"/><rect x="420" y="156" width="6" height="6" fill="#56cd7a"/><rect x="426" y="156" width="6" height="6" fill="#56cd79"/><rect x="432" y="156" width="6" height="6" fill="#55cd77"/><rect x="438" y="156" width="6" height="6" fill="#54cc74"/><rect x="444" y="156" width="6" height="6" fill="#53cc71"/><rect x="450" y="156" width="6" height="6" fill="#52cb6d"/><rect x="456" y="156" width="6" height="6" fill="#52cb69"/><rect x="462" y="156" width="6" height="6" fill="#53ca66"/><rect x="468" y="156" width="6" height="6" fill="#53ca63"/><rect x="474" y="156" width="6" height="6" fill="#54ca61"/><rect x="480" y="156" width="6" height="6" fill="#55c95f"/><rect x="486" y="156" width="6" height="6" fill="#55c95e"/><rect x="492" y="156" width="6" height="6" fill="#54c95e"/><rect x="498" y="156" width="6" height="6" fill="#53c95e"/><rect x="504" y="156" width="6" height="6" fill="#51c95e"/><rect x="510" y="156" width="6" height="6" fill="#4ec95f"/><rect x="516" y="156" width="6" height="6" fill="#4bc860"/><rect x="522" y="156" width="6" height="6" fill="#48c861"/><rect x="528" y="156" width="6" height="6" fill="#45c862"/><rect x="534" y="156" width="6" height="6" fill="#43c863"/><rect x="540" y="156" width="6" height="6" fill="#40c863"/><rect x="546" y="156" width="6" height="6" fill="#40c865"/><rect x="378" y="162" width="6" height="6" fill="#5ace7f"/><rect x="384" y="162" width="6" height="6" fill="#5dcf82"/><rect x="390" y="162" width="6" height="6" fill="#60d084"/><rect x="396" y="162" width="6" height="6" fill="#62d087"/><rect x="402" y="162" width="6" height="6" fill="#64d189"/><rect x="408" y="162" width="6" height="6" fill="#65d18a"/><rect x="414" y="162" width="6" height="6" fill="#65d18a"/><rect x="420" y="162" width="6" height="6" fill="#64d189"/><rect x="426" y="162" width="6" height="6" fill="#61d086"/><rect x="432" y="162" width="6" height="6" fill="#5dcf82"/><rect x="438" y="162" width="6" height="6" fill="#59ce7d"/><rect x="444" y="162" width="6" height="6" fill="#55cd77"/><rect x="450" y="162" width="6" height="6" fill="#52cc72"/><rect x="456" y="162" width="6" height="6" fill="#50cb6d"/><rect x="462" y="162" width="6" height="6" fill="#4eca69"/><rect x="468" y="162" width="6" height="6" fill="#4ec966"/><rect x="474" y="162" width="6" height="6" fill="#4dc963"/><rect x="480" y="162" width="6" height="6" fill="#4dc961"/><rect x="486" y="162" width="6" height="6" fill="#4dc960"/><rect x="492" y="162" width="6" height="6" fill="#4dc960"/><rect x="498" y="162" width="6" height="6" fill="#4cc960"/><rect x="504" y="162" width="6" height="6" fill="#4ac860"/><rect x="510" y="162" width="6" height="6" fill="#48c861"/><rect x="516" y="162" width="6" height="6" fill="#46c861"/><rect x="522" y="162" width="6" height="6" fill="#44c862"/><rect x="528" y="162" width="6" height="6" fill="#41c863"/><rect x="534" y="162" width="6" height="6" fill="#40c864"/><rect x="540" y="162" width="6" height="6" fill="#40c866"/><rect x="546" y="162" width="6" height="6" fill="#40c868"/><rect x="552" y="162" width="6" height="6" fill="#40c869"/><rect x="366" y="168" width="6" height="6" fill="#60d085"/><rect x="372" y="168" width="6" height="6" fill="#64d189"/><rect x="378" y="168" width="6" height="6" fill="#69d28e"/><rect x="384" y="168" width="6" height="6" fill="#6dd392"/><rect x="390" y="168" width="6" height="6" fill="#71d496"/><rect x="396" y="168" width="6" height="6" fill="#74d599"/><rect x="402" y="168" width="6" height="6" fill="#77d59c"/><rect x="408" y="168" width="6" height="6" fill="#77d69c"/><rect x="414" y="168" width="6" height="6" fill="#76d59b"/><rect x="420" y="168" width="6" height="6" fill="#72d498"/><rect x="426" y="168" width="6" height="6" fill="#6dd393"/><rect x="432" y="168" width="6" height="6" fill="#67d18c"/><rect x="438" y="168" width="6" height="6" fill="#5fd085"/><rect x="444" y="168" width="6" height="6" fill="#58ce7d"/><rect x="450" y="168" width="6" height="6" fill="#51cc76"/><rect x="456" y="168" width="6" height="6" fill="#4ccb70"/><rect x="462" y="168" width="6" height="6" fill="#49ca6b"/><rect x="468" y="168" width="6" height="6" fill="#47c968"/><rect x="474" y="168" width="6" height="6" fill="#47c965"/><rect x="480" y="168" width="6" height="6" fill="#46c864"/><rect x="486" y="168" width="6" height="6" fill="#46c863"/><rect x="492" y="168" width="6" height="6" fill="#46c862"/><rect x="498" y="168" width="6" height="6" fill="#45c862"/><rect x="504" y="168" width="6" height="6" fill="#44c862"/><rect x="510" y="168" width="6" height="6" fill="#43c863"/><rect x="516" y="168" width="6" height="6" fill="#41c863"/><rect x="522" y="168" width="6" height="6" fill="#40c864"/><rect x="528" y="168" width="6" height="6" fill="#40c866"/><rect x="534" y="168" width="6" height="6" fill="#40c869"/><rect x="540" y="168" width="6" height="6" fill="#40c86b"/><rect x="546" y="168" width="6" height="6" fill="#40c86c"/><rect x="552" y="168" width="6" height="6" fill="#40c86e"/><rect x="558" y="168" width="6" height="6" fill="#40c86f"/><rect x="564" y="168" width="6" height="6" fill="#41c870"/><rect x="348" y="174" width="6" height="6" fill="#5ccf81"/><rect x="354" y="174" width="6" height="6" fill="#62d087"/><rect x="360" y="174" width="6" height="6" fill="#68d28d"/><rect x="366" y="174" width="6" height="6" fill="#6fd394"/><rect x="372" y="174" width="6" height="6" fill="#75d59a"/><rect x="378" y="174" width="6" height="6" fill="#7bd7a0"/><rect x="384" y="174" width="6" height="6" fill="#81d8a6"/><rect x="390" y="174" width="6" height="6" fill="#86d9ab"/><rect x="396" y="174" width="6" height="6" fill="#89daae"/><rect x="402" y="174" width="6" height="6" fill="#8adab0"/><rect x="408" y="174" width="6" height="6" fill="#89daae"/><rect x="414" y="174" width="6" height="6" fill="#85d9ab"/><rect x="420" y="174" width="6" height="6" fill="#7ed7a4"/><rect x="426" y="174" width="6" height="6" fill="#76d59c"/><rect x="432" y="174" width="6" height="6" fill="#6cd393"/><rect x="438" y="174" width="6" height="6" fill="#62d08a"/><rect x="444" y="174" width="6" height="6" fill="#59ce82"/><rect x="450" y="174" width="6" height="6" fill="#52cc7a"/><rect x="456" y="174" width="6" height="6" fill="#4ccb73"/><rect x="462" y="174" width="6" height="6" fill="#47c96e"/><rect x="468" y="174" width="6" height="6" fill="#44c96b"/><rect x="474" y="174" width="6" height="6" fill="#42c868"/><rect x="480" y="174" width="6" height="6" fill="#41c866"/><rect x="486" y="174" width="6" height="6" fill="#40c865"/><rect x="492" y="174" width="6" height="6" fill="#40c864"/><rect x="498" y="174" width="6" height="6" fill="#40c864"/><rect x="504" y="174" width="6" height="6" fill="#40c865"/><rect x="510" y="174" width="6" height="6" fill="#40c866"/><rect x="516" y="174" width="6" height="6" fill="#40c867"/><rect x="522" y="174" width="6" height="6" fill="#40c869"/><rect x="528" y="174" width="6" height="6" fill="#40c86b"/><rect x="534" y="174" width="6" height="6" fill="#40c86d"/><rect x="540" y="174" width="6" height="6" fill="#41c870"/><rect x="546" y="174" width="6" height="6" fill="#41c872"/><rect x="552" y="174" width="6" height="6" fill="#41c874"/><rect x="558" y="174" width="6" height="6" fill="#41c875"/><rect x="564" y="174" width="6" height="6" fill="#41c876"/><rect x="570" y="174" width="6" height="6" fill="#41c876"/><rect x="330" y="180" width="6" height="6" fill="#53cd79"/><rect x="336" y="180" width="6" height="6" fill="#59ce7f"/><rect x="342" y="180" width="6" height="6" fill="#60d085"/><rect x="348" y="180" width="6" height="6" fill="#68d28d"/><rect x="354" y="180" width="6" height="6" fill="#70d495"/><rect x="360" y="180" width="6" height="6" fill="#78d69d"/><rect x="366" y="180" width="6" height="6" fill="#80d8a5"/><rect x="372" y="180" width="6" height="6" fill="#88daad"/><rect x="378" y="180" width="6" height="6" fill="#90dcb5"/><rect x="384" y="180" width="6" height="6" fill="#96ddbb"/><rect x="390" y="180" width="6" height="6" fill="#9adfbf"/><rect x="396" y="180" width="6" height="6" fill="#9cdfc1"/><rect x="402" y="180" width="6" height="6" fill="#9bdfc0"/><rect x="408" y="180" width="6" height="6" fill="#96ddbb"/><rect x="414" y="180" width="6" height="6" fill="#8edbb4"/><rect x="420" y="180" width="6" height="6" fill="#84d9ab"/><rect x="426" y="180" width="6" height="6" fill="#78d6a1"/><rect x="432" y="180" width="6" height="6" fill="#6cd396"/><rect x="438" y="180" width="6" height="6" fill="#61d08c"/><rect x="444" y="180" width="6" height="6" fill="#58cd83"/><rect x="450" y="180" width="6" height="6" fill="#50cb7c"/><rect x="456" y="180" width="6" height="6" fill="#4aca76"/><rect x="462" y="180" width="6" height="6" fill="#46c972"/><rect x="468" y="180" width="6" height="6" fill="#44c86f"/><rect x="474" y="180" width="6" height="6" fill="#42c86d"/><rect x="480" y="180" width="6" height="6" fill="#41c86b"/><rect x="486" y="180" width="6" height="6" fill="#40c86a"/><rect x="492" y="180" width="6" height="6" fill="#40c869"/><rect x="498" y="180" width="6" height="6" fill="#40c869"/><rect x="504" y="180" width="6" height="6" fill="#40c869"/><rect x="510" y="180" width="6" height="6" fill="#40c86a"/><rect x="516" y="180" width="6" height="6" fill="#40c86b"/><rect x="522" y="180" width="6" height="6" fill="#40c86d"/><rect x="528" y="180" width="6" height="6" fill="#41c870"/><rect x="534" y="180" width="6" height="6" fill="#41c872"/><rect x="540" y="180" width="6" height="6" fill="#41c875"/><rect x="546" y="180" width="6" height="6" fill="#41c878"/><rect x="552" y="180" width="6" height="6" fill="#41c87b"/><rect x="558" y="180" width="6" height="6" fill="#42c87c"/><rect x="564" y="180" width="6" height="6" fill="#42c87d"/><rect x="570" y="180" width="6" height="6" fill="#42c87d"/><rect x="318" y="186" width="6" height="6" fill="#4fcb74"/><rect x="324" y="186" width="6" height="6" fill="#54cd7a"/><rect x="330" y="186" width="6" height="6" fill="#5bce80"/><rect x="336" y="186" width="6" height="6" fill="#62d088"/><rect x="342" y="186" width="6" height="6" fill="#6bd391"/><rect x="348" y="186" width="6" height="6" fill="#75d59a"/><rect x="354" y="186" width="6" height="6" fill="#7ed7a4"/><rect x="360" y="186" width="6" height="6" fill="#89daad"/><rect x="366" y="186" width="6" height="6" fill="#92dcb7"/><rect x="372" y="186" width="6" height="6" fill="#9bdfc0"/><rect x="378" y="186" width="6" height="6" fill="#a3e1c7"/><rect x="384" y="186" width="6" height="6" fill="#a4e1c9"/><rect x="390" y="186" width="6" height="6" fill="#a4e1c9"/><rect x="396" y="186" width="6" height="6" fill="#a4e1c9"/><rect x="402" y="186" width="6" height="6" fill="#a3e1c8"/><rect x="408" y="186" width="6" height="6" fill="#9adec0"/><rect x="414" y="186" width="6" height="6" fill="#8edbb6"/><rect x="420" y="186" width="6" height="6" fill="#81d8ab"/><rect x="426" y="186" width="6" height="6" fill="#74d59f"/><rect x="432" y="186" width="6" height="6" fill="#67d195"/><rect x="438" y="186" width="6" height="6" fill="#5dcf8c"/><rect x="444" y="186" width="6" height="6" fill="#54cc84"/><rect x="450" y="186" width="6" height="6" fill="#4dcb7e"/><rect x="456" y="186" width="6" height="6" fill="#48c97a"/><rect x="462" y="186" width="6" height="6" fill="#45c976"/><rect x="468" y="186" width="6" height="6" fill="#43c873"/><rect x="474" y="186" width="6" height="6" fill="#42c871"/><rect x="480" y="186" width="6" height="6" fill="#41c870"/><rect x="486" y="186" width="6" height="6" fill="#41c86f"/><rect x="492" y="186" width="6" height="6" fill="#41c86e"/><rect x="498" y="186" width="6" height="6" fill="#40c86d"/><rect x="504" y="186" width="6" height="6" fill="#40c86d"/><rect x="510" y="186" width="6" height="6" fill="#40c86e"/><rect x="516" y="186" width="6" height="6" fill="#41c870"/><rect x="522" y="186" width="6" height="6" fill="#41c872"/><rect x="528" y="186" width="6" height="6" fill="#41c875"/><rect x="534" y="186" width="6" height="6" fill="#41c878"/><rect x="540" y="186" width="6" height="6" fill="#42c87c"/><rect x="546" y="186" width="6" height="6" fill="#42c87f"/><rect x="552" y="186" width="6" height="6" fill="#42c882"/><rect x="558" y="186" width="6" height="6" fill="#42c885"/><rect x="564" y="186" width="6" height="6" fill="#42c886"/><rect x="570" y="186" width="6" height="6" fill="#42c886"/><rect x="576" y="186" width="6" height="6" fill="#42c884"/><rect x="324" y="192" width="6" height="6" fill="#5ace80"/><rect x="330" y="192" width="6" height="6" fill="#63d088"/><rect x="336" y="192" width="6" height="6" fill="#6cd392"/><rect x="342" y="192" width="6" height="6" fill="#76d59c"/><rect x="348" y="192" width="6" height="6" fill="#81d8a7"/><rect x="354" y="192" width="6" height="6" fill="#8ddbb2"/><rect x="360" y="192" width="6" height="6" fill="#98debc"/><rect x="366" y="192" width="6" height="6" fill="#a2e0c6"/><rect x="372" y="192" width="6" height="6" fill="#a4e1c9"/><rect x="378" y="192" width="6" height="6" fill="#a4e1c9"/><rect x="384" y="192" width="6" height="6" fill="#a4e1c9"/><rect x="390" y="192" width="6" height="6" fill="#a4e1ca"/><rect x="396" y="192" width="6" height="6" fill="#a5e1ca"/><rect x="402" y="192" width="6" height="6" fill="#a1e0c7"/><rect x="408" y="192" width="6" height="6" fill="#95ddbd"/><rect x="414" y="192" width="6" height="6" fill="#87dab2"/><rect x="420" y="192" width="6" height="6" fill="#79d6a6"/><rect x="426" y="192" width="6" height="6" fill="#6cd39c"/><rect x="432" y="192" width="6" height="6" fill="#61d093"/><rect x="438" y="192" width="6" height="6" fill="#57cd8c"/><rect x="444" y="192" width="6" height="6" fill="#50cb86"/><rect x="450" y="192" width="6" height="6" fill="#4bca81"/><rect x="456" y="192" width="6" height="6" fill="#47c97e"/><rect x="462" y="192" width="6" height="6" fill="#45c87b"/><rect x="468" y="192" width="6" height="6" fill="#43c879"/><rect x="474" y="192" width="6" height="6" fill="#42c877"/><rect x="480" y="192" width="6" height="6" fill="#41c875"/><rect x="486" y="192" width="6" height="6" fill="#41c874"/><rect x="492" y="192" width="6" height="6" fill="#41c873"/><rect x="498" y="192" width="6" height="6" fill="#41c872"/><rect x="504" y="192" width="6" height="6" fill="#41c872"/><rect x="510" y="192" width="6" height="6" fill="#41c873"/><rect x="516" y="192" width="6" height="6" fill="#41c874"/><rect x="522" y="192" width="6" height="6" fill="#41c877"/><rect x="528" y="192" width="6" height="6" fill="#41c87a"/><rect x="534" y="192" width="6" height="6" fill="#42c87e"/><rect x="540" y="192" width="6" height="6" fill="#42c882"/><rect x="546" y="192" width="6" height="6" fill="#43c887"/><rect x="552" y="192" width="6" height="6" fill="#43c88a"/><rect x="558" y="192" width="6" height="6" fill="#43c88d"/><rect x="564" y="192" width="6" height="6" fill="#43c88e"/><rect x="570" y="192" width="6" height="6" fill="#43c88e"/><rect x="576" y="192" width="6" height="6" fill="#43c88c"/><rect x="324" y="198" width="6" height="6" fill="#61d087"/><rect x="330" y="198" width="6" height="6" fill="#6ad290"/><rect x="336" y="198" width="6" height="6" fill="#75d59b"/><rect x="342" y="198" width="6" height="6" fill="#81d8a6"/><rect x="348" y="198" width="6" height="6" fill="#8cdbb2"/><rect x="354" y="198" width="6" height="6" fill="#98debd"/><rect x="360" y="198" width="6" height="6" fill="#a2e1c7"/><rect x="366" y="198" width="6" height="6" fill="#a4e1c9"/><rect x="372" y="198" width="6" height="6" fill="#a4e1c9"/><rect x="378" y="198" width="6" height="6" fill="#a4e1c9"/><rect x="384" y="198" width="6" height="6" fill="#a5e1ca"/><rect x="390" y="198" width="6" height="6" fill="#a5e1ca"/><rect x="396" y="198" width="6" height="6" fill="#a4e1ca"/><rect x="402" y="198" width="6" height="6" fill="#98dec0"/><rect x="408" y="198" width="6" height="6" fill="#8adab6"/><rect x="414" y="198" width="6" height="6" fill="#7dd7ab"/><rect x="420" y="198" width="6" height="6" fill="#6fd3a2"/><rect x="426" y="198" width="6" height="6" fill="#64d09a"/><rect x="432" y="198" width="6" height="6" fill="#5ace93"/><rect x="438" y="198" width="6" height="6" fill="#52cc8e"/><rect x="444" y="198" width="6" height="6" fill="#4dca8a"/><rect x="450" y="198" width="6" height="6" fill="#49c987"/><rect x="456" y="198" width="6" height="6" fill="#46c984"/><rect x="462" y="198" width="6" height="6" fill="#44c882"/><rect x="468" y="198" width="6" height="6" fill="#43c880"/><rect x="474" y="198" width="6" height="6" fill="#42c87e"/><rect x="480" y="198" width="6" height="6" fill="#42c87c"/><rect x="486" y="198" width="6" height="6" fill="#42c87a"/><rect x="492" y="198" width="6" height="6" fill="#41c878"/><rect x="498" y="198" width="6" height="6" fill="#41c877"/><rect x="504" y="198" width="6" height="6" fill="#41c876"/><rect x="510" y="198" width="6" height="6" fill="#41c877"/><rect x="516" y="198" width="6" height="6" fill="#41c879"/><rect x="522" y="198" width="6" height="6" fill="#42c87b"/><rect x="528" y="198" width="6" height="6" fill="#42c87f"/><rect x="534" y="198" width="6" height="6" fill="#42c883"/><rect x="540" y="198" width="6" height="6" fill="#43c888"/><rect x="546" y="198" width="6" height="6" fill="#43c88d"/><rect x="552" y="198" width="6" height="6" fill="#43c891"/><rect x="558" y="198" width="6" height="6" fill="#44c895"/><rect x="564" y="198" width="6" height="6" fill="#44c896"/><rect x="570" y="198" width="6" height="6" fill="#44c896"/><rect x="576" y="198" width="6" height="6" fill="#44c894"/><rect x="582" y="198" width="6" height="6" fill="#43c890"/><rect x="324" y="204" width="6" height="6" fill="#66d18c"/><rect x="330" y="204" width="6" height="6" fill="#70d497"/><rect x="336" y="204" width="6" height="6" fill="#7cd7a2"/><rect x="342" y="204" width="6" height="6" fill="#88daad"/><rect x="348" y="204" width="6" height="6" fill="#94ddb9"/><rect x="354" y="204" width="6" height="6" fill="#9ee0c3"/><rect x="360" y="204" width="6" height="6" fill="#a4e1c9"/><rect x="366" y="204" width="6" height="6" fill="#a4e1c9"/><rect x="372" y="204" width="6" height="6" fill="#a4e1ca"/><rect x="378" y="204" width="6" height="6" fill="#a5e1ca"/><rect x="384" y="204" width="6" height="6" fill="#a5e1cb"/><rect x="390" y="204" width="6" height="6" fill="#a3e1c9"/><rect x="396" y="204" width="6" height="6" fill="#98dec1"/><rect x="402" y="204" width="6" height="6" fill="#8bdab8"/><rect x="408" y="204" width="6" height="6" fill="#7ed7ae"/><rect x="414" y="204" width="6" height="6" fill="#71d4a6"/><rect x="420" y="204" width="6" height="6" fill="#66d19f"/><rect x="426" y="204" width="6" height="6" fill="#5cce9a"/><rect x="432" y="204" width="6" height="6" fill="#55cc96"/><rect x="438" y="204" width="6" height="6" fill="#4fcb93"/><rect x="444" y="204" width="6" height="6" fill="#4bca91"/><rect x="450" y="204" width="6" height="6" fill="#48c98f"/><rect x="456" y="204" width="6" height="6" fill="#46c88d"/><rect x="462" y="204" width="6" height="6" fill="#44c88b"/><rect x="468" y="204" width="6" height="6" fill="#44c888"/><rect x="474" y="204" width="6" height="6" fill="#43c886"/><rect x="480" y="204" width="6" height="6" fill="#42c883"/><rect x="486" y="204" width="6" height="6" fill="#42c881"/><rect x="492" y="204" width="6" height="6" fill="#42c87e"/><rect x="498" y="204" width="6" height="6" fill="#42c87c"/><rect x="504" y="204" width="6" height="6" fill="#42c87b"/><rect x="510" y="204" width="6" height="6" fill="#42c87c"/><rect x="516" y="204" width="6" height="6" fill="#42c87d"/><rect x="522" y="204" width="6" height="6" fill="#42c87f"/><rect x="528" y="204" width="6" height="6" fill="#42c883"/><rect x="534" y="204" width="6" height="6" fill="#43c888"/><rect x="540" y="204" width="6" height="6" fill="#43c88d"/><rect x="546" y="204" width="6" height="6" fill="#44c892"/><rect x="552" y="204" width="6" height="6" fill="#44c897"/><rect x="558" y="204" width="6" height="6" fill="#44c89a"/><rect x="564" y="204" width="6" height="6" fill="#44c89c"/><rect x="570" y="204" width="6" height="6" fill="#44c89c"/><rect x="576" y="204" width="6" height="6" fill="#44c899"/><rect x="582" y="204" width="6" height="6" fill="#44c895"/><rect x="324" y="210" width="6" height="6" fill="#6ad290"/><rect x="330" y="210" width="6" height="6" fill="#74d59b"/><rect x="336" y="210" width="6" height="6" fill="#80d8a6"/><rect x="342" y="210" width="6" height="6" fill="#8bdbb1"/><rect x="348" y="210" width="6" height="6" fill="#96ddbb"/><rect x="354" y="210" width="6" height="6" fill="#9fe0c4"/><rect x="360" y="210" width="6" height="6" fill="#a4e1c9"/><rect x="366" y="210" width="6" height="6" fill="#a4e1ca"/><rect x="372" y="210" width="6" height="6" fill="#a5e1ca"/><rect x="378" y="210" width="6" height="6" fill="#a5e1cb"/><rect x="384" y="210" width="6" height="6" fill="#9fe0c7"/><rect x="390" y="210" width="6" height="6" fill="#95ddc0"/><rect x="396" y="210" width="6" height="6" fill="#8adab8"/><rect x="402" y="210" width="6" height="6" fill="#7ed7b0"/><rect x="408" y="210" width="6" height="6" fill="#72d4aa"/><rect x="414" y="210" width="6" height="6" fill="#68d1a4"/><rect x="420" y="210" width="6" height="6" fill="#5ecfa1"/><rect x="426" y="210" width="6" height="6" fill="#57cd9e"/><rect x="432" y="210" width="6" height="6" fill="#51cb9d"/><rect x="438" y="210" width="6" height="6" fill="#4dca9c"/><rect x="444" y="210" width="6" height="6" fill="#4ac99b"/><rect x="450" y="210" width="6" height="6" fill="#47c89a"/><rect x="456" y="210" width="6" height="6" fill="#46c898"/><rect x="462" y="210" width="6" height="6" fill="#45c896"/><rect x="468" y="210" width="6" height="6" fill="#44c893"/><rect x="474" y="210" width="6" height="6" fill="#44c88f"/><rect x="480" y="210" width="6" height="6" fill="#43c88c"/><rect x="486" y="210" width="6" height="6" fill="#43c888"/><rect x="492" y="210" width="6" height="6" fill="#42c885"/><rect x="498" y="210" width="6" height="6" fill="#42c883"/><rect x="504" y="210" width="6" height="6" fill="#42c881"/><rect x="510" y="210" width="6" height="6" fill="#42c880"/><rect x="516" y="210" width="6" height="6" fill="#42c881"/><rect x="522" y="210" width="6" height="6" fill="#42c883"/><rect x="528" y="210" width="6" height="6" fill="#43c887"/><rect x="534" y="210" width="6" height="6" fill="#43c88b"/><rect x="540" y="210" width="6" height="6" fill="#43c890"/><rect x="546" y="210" width="6" height="6" fill="#44c896"/><rect x="552" y="210" width="6" height="6" fill="#44c89a"/><rect x="558" y="210" width="6" height="6" fill="#44c89e"/><rect x="564" y="210" width="6" height="6" fill="#45c89f"/><rect x="570" y="210" width="6" height="6" fill="#45c89f"/><rect x="576" y="210" width="6" height="6" fill="#44c89c"/><rect x="582" y="210" width="6" height="6" fill="#44c897"/><rect x="330" y="216" width="6" height="6" fill="#76d59d"/><rect x="336" y="216" width="6" height="6" fill="#80d8a7"/><rect x="342" y="216" width="6" height="6" fill="#8adab1"/><rect x="348" y="216" width="6" height="6" fill="#93ddb9"/><rect x="354" y="216" width="6" height="6" fill="#9adec0"/><rect x="360" y="216" width="6" height="6" fill="#9fe0c5"/><rect x="366" y="216" width="6" height="6" fill="#a0e0c6"/><rect x="372" y="216" width="6" height="6" fill="#9edfc5"/><rect x="378" y="216" width="6" height="6" fill="#99dec2"/><rect x="384" y="216" width="6" height="6" fill="#91dcbc"/><rect x="390" y="216" width="6" height="6" fill="#88dab6"/><rect x="396" y="216" width="6" height="6" fill="#7dd7b1"/><rect x="402" y="216" width="6" height="6" fill="#73d4ac"/><rect x="408" y="216" width="6" height="6" fill="#69d1a8"/><rect x="414" y="216" width="6" height="6" fill="#60cfa6"/><rect x="420" y="216" width="6" height="6" fill="#59cda5"/><rect x="426" y="216" width="6" height="6" fill="#53cba6"/><rect x="432" y="216" width="6" height="6" fill="#4fcaa6"/><rect x="438" y="216" width="6" height="6" fill="#4cc9a7"/><rect x="444" y="216" width="6" height="6" fill="#49c9a8"/><rect x="450" y="216" width="6" height="6" fill="#48c8a7"/><rect x="456" y="216" width="6" height="6" fill="#47c8a6"/><rect x="462" y="216" width="6" height="6" fill="#46c8a3"/><rect x="468" y="216" width="6" height="6" fill="#45c89f"/><rect x="474" y="216" width="6" height="6" fill="#45c89b"/><rect x="480" y="216" width="6" height="6" fill="#44c896"/><rect x="486" y="216" width="6" height="6" fill="#44c891"/><rect x="492" y="216" width="6" height="6" fill="#43c88d"/><rect x="498" y="216" width="6" height="6" fill="#43c889"/><rect x="504" y="216" width="6" height="6" fill="#42c886"/><rect x="510" y="216" width="6" height="6" fill="#42c885"/><rect x="516" y="216" width="6" height="6" fill="#42c885"/><rect x="522" y="216" width="6" height="6" fill="#42c886"/><rect x="528" y="216" width="6" height="6" fill="#43c889"/><rect x="534" y="216" width="6" height="6" fill="#43c88d"/><rect x="540" y="216" width="6" height="6" fill="#43c891"/><rect x="546" y="216" width="6" height="6" fill="#44c896"/><rect x="552" y="216" width="6" height="6" fill="#44c89a"/><rect x="558" y="216" width="6" height="6" fill="#44c89e"/><rect x="564" y="216" width="6" height="6" fill="#45c89f"/><rect x="570" y="216" width="6" height="6" fill="#45c89e"/><rect x="576" y="216" width="6" height="6" fill="#44c89c"/><rect x="582" y="216" width="6" height="6" fill="#44c897"/><rect x="588" y="216" width="6" height="6" fill="#43c891"/><rect x="330" y="222" width="6" height="6" fill="#74d59b"/><rect x="336" y="222" width="6" height="6" fill="#7dd7a4"/><rect x="342" y="222" width="6" height="6" fill="#85d9ad"/><rect x="348" y="222" width="6" height="6" fill="#8cdbb4"/><rect x="354" y="222" width="6" height="6" fill="#91dcb9"/><rect x="360" y="222" width="6" height="6" fill="#94ddbb"/><rect x="366" y="222" width="6" height="6" fill="#93ddbc"/><rect x="372" y="222" width="6" height="6" fill="#90dcba"/><rect x="378" y="222" width="6" height="6" fill="#8bdab7"/><rect x="384" y="222" width="6" height="6" fill="#83d8b3"/><rect x="390" y="222" width="6" height="6" fill="#7ad6af"/><rect x="396" y="222" width="6" height="6" fill="#71d4ac"/><rect x="402" y="222" width="6" height="6" fill="#69d1aa"/><rect x="408" y="222" width="6" height="6" fill="#61cfaa"/><rect x="414" y="222" width="6" height="6" fill="#5acdab"/><rect x="420" y="222" width="6" height="6" fill="#55ccad"/><rect x="426" y="222" width="6" height="6" fill="#50caaf"/><rect x="432" y="222" width="6" height="6" fill="#4cc7af"/><rect x="438" y="222" width="6" height="6" fill="#4ac5b0"/><rect x="444" y="222" width="6" height="6" fill="#48c3b0"/><rect x="450" y="222" width="6" height="6" fill="#47c3b0"/><rect x="456" y="222" width="6" height="6" fill="#46c3af"/><rect x="462" y="222" width="6" height="6" fill="#46c4ad"/><rect x="468" y="222" width="6" height="6" fill="#46c6ac"/><rect x="474" y="222" width="6" height="6" fill="#46c8a9"/><rect x="480" y="222" width="6" height="6" fill="#45c8a2"/><rect x="486" y="222" width="6" height="6" fill="#44c89c"/><rect x="492" y="222" width="6" height="6" fill="#44c896"/><rect x="498" y="222" width="6" height="6" fill="#43c890"/><rect x="504" y="222" width="6" height="6" fill="#43c88c"/><rect x="510" y="222" width="6" height="6" fill="#43c889"/><rect x="516" y="222" width="6" height="6" fill="#43c888"/><rect x="522" y="222" width="6" height="6" fill="#43c888"/><rect x="528" y="222" width="6" height="6" fill="#43c88a"/><rect x="534" y="222" width="6" height="6" fill="#43c88d"/><rect x="540" y="222" width="6" height="6" fill="#43c890"/><rect x="546" y="222" width="6" height="6" fill="#44c894"/><rect x="552" y="222" width="6" height="6" fill="#44c898"/><rect x="558" y="222" width="6" height="6" fill="#44c89b"/><rect x="564" y="222" width="6" height="6" fill="#44c89c"/><rect x="570" y="222" width="6" height="6" fill="#44c89b"/><rect x="576" y="222" width="6" height="6" fill="#44c898"/><rect x="582" y="222" width="6" height="6" fill="#44c894"/><rect x="330" y="228" width="6" height="6" fill="#6fd398"/><rect x="336" y="228" width="6" height="6" fill="#77d59f"/><rect x="342" y="228" width="6" height="6" fill="#7dd7a6"/><rect x="348" y="228" width="6" height="6" fill="#83d8ab"/><rect x="354" y="228" width="6" height="6" fill="#86d9af"/><rect x="360" y="228" width="6" height="6" fill="#87d9b1"/><rect x="366" y="228" width="6" height="6" fill="#85d9b1"/><rect x="372" y="228" width="6" height="6" fill="#82d8b0"/><rect x="378" y="228" width="6" height="6" fill="#7cd7ae"/><rect x="384" y="228" width="6" height="6" fill="#76d5ab"/><rect x="390" y="228" width="6" height="6" fill="#6ed3aa"/><rect x="396" y="228" width="6" height="6" fill="#67d1aa"/><rect x="402" y="228" width="6" height="6" fill="#60cfab"/><rect x="408" y="228" width="6" height="6" fill="#5acdae"/><rect x="414" y="228" width="6" height="6" fill="#55cbb1"/><rect x="420" y="228" width="6" height="6" fill="#50c7b2"/><rect x="426" y="228" width="6" height="6" fill="#4cc3b4"/><rect x="432" y="228" width="6" height="6" fill="#49c0b5"/><rect x="438" y="228" width="6" height="6" fill="#47bdb7"/><rect x="444" y="228" width="6" height="6" fill="#46bbb8"/><rect x="450" y="228" width="6" height="6" fill="#45bab8"/><rect x="456" y="228" width="6" height="6" fill="#44bab7"/><rect x="462" y="228" width="6" height="6" fill="#44bcb6"/><rect x="468" y="228" width="6" height="6" fill="#44beb3"/><rect x="474" y="228" width="6" height="6" fill="#45c1b0"/><rect x="480" y="228" width="6" height="6" fill="#45c5ac"/><rect x="486" y="228" width="6" height="6" fill="#45c8a8"/><rect x="492" y="228" width="6" height="6" fill="#45c89f"/><rect x="498" y="228" width="6" height="6" fill="#44c898"/><rect x="504" y="228" width="6" height="6" fill="#43c892"/><rect x="510" y="228" width="6" height="6" fill="#43c88d"/><rect x="516" y="228" width="6" height="6" fill="#43c88a"/><rect x="522" y="228" width="6" height="6" fill="#43c889"/><rect x="528" y="228" width="6" height="6" fill="#43c88a"/><rect x="534" y="228" width="6" height="6" fill="#43c88b"/><rect x="540" y="228" width="6" height="6" fill="#43c88e"/><rect x="546" y="228" width="6" height="6" fill="#43c891"/><rect x="552" y="228" width="6" height="6" fill="#44c893"/><rect x="558" y="228" width="6" height="6" fill="#44c895"/><rect x="564" y="228" width="6" height="6" fill="#44c896"/><rect x="570" y="228" width="6" height="6" fill="#44c895"/><rect x="330" y="234" width="6" height="6" fill="#69d292"/><rect x="336" y="234" width="6" height="6" fill="#6fd398"/><rect x="342" y="234" width="6" height="6" fill="#74d59e"/><rect x="348" y="234" width="6" height="6" fill="#77d5a2"/><rect x="354" y="234" width="6" height="6" fill="#79d6a4"/><rect x="360" y="234" width="6" height="6" fill="#79d6a6"/><rect x="366" y="234" width="6" height="6" fill="#77d5a6"/><rect x="372" y="234" width="6" height="6" fill="#74d4a6"/><rect x="378" y="234" width="6" height="6" fill="#6fd3a6"/><rect x="384" y="234" width="6" height="6" fill="#6ad2a6"/><rect x="390" y="234" width="6" height="6" fill="#64d0a7"/><rect x="396" y="234" width="6" height="6" fill="#5ecea9"/><rect x="402" y="234" width="6" height="6" fill="#59cdae"/><rect x="408" y="234" width="6" height="6" fill="#55cab2"/><rect x="414" y="234" width="6" height="6" fill="#50c5b4"/><rect x="420" y="234" width="6" height="6" fill="#4cc0b7"/><rect x="426" y="234" width="6" height="6" fill="#49bbba"/><rect x="432" y="234" width="6" height="6" fill="#46b6bd"/><rect x="438" y="234" width="6" height="6" fill="#45b2c0"/><rect x="444" y="234" width="6" height="6" fill="#43b0c2"/><rect x="450" y="234" width="6" height="6" fill="#43aec3"/><rect x="456" y="234" width="6" height="6" fill="#42afc3"/><rect x="462" y="234" width="6" height="6" fill="#42b1c0"/><rect x="468" y="234" width="6" height="6" fill="#43b5bd"/><rect x="474" y="234" width="6" height="6" fill="#43b9b8"/><rect x="480" y="234" width="6" height="6" fill="#44beb3"/><rect x="486" y="234" width="6" height="6" fill="#45c3ae"/><rect x="492" y="234" width="6" height="6" fill="#45c7aa"/><rect x="498" y="234" width="6" height="6" fill="#45c8a0"/><rect x="504" y="234" width="6" height="6" fill="#44c898"/><rect x="510" y="234" width="6" height="6" fill="#43c891"/><rect x="516" y="234" width="6" height="6" fill="#43c88d"/><rect x="522" y="234" width="6" height="6" fill="#43c88a"/><rect x="528" y="234" width="6" height="6" fill="#43c889"/><rect x="534" y="234" width="6" height="6" fill="#43c889"/><rect x="540" y="234" width="6" height="6" fill="#43c88a"/><rect x="546" y="234" width="6" height="6" fill="#43c88b"/><rect x="552" y="234" width="6" height="6" fill="#43c88d"/><rect x="558" y="234" width="6" height="6" fill="#43c88e"/><rect x="330" y="240" width="6" height="6" fill="#61d08c"/><rect x="336" y="240" width="6" height="6" fill="#66d191"/><rect x="342" y="240" width="6" height="6" fill="#69d295"/><rect x="348" y="240" width="6" height="6" fill="#6bd298"/><rect x="354" y="240" width="6" height="6" fill="#6cd39a"/><rect x="360" y="240" width="6" height="6" fill="#6cd29c"/><rect x="366" y="240" width="6" height="6" fill="#6ad29d"/><rect x="372" y="240" width="6" height="6" fill="#67d19e"/><rect x="378" y="240" width="6" height="6" fill="#63d09f"/><rect x="384" y="240" width="6" height="6" fill="#5fcfa1"/><rect x="390" y="240" width="6" height="6" fill="#5bcea5"/><rect x="396" y="240" width="6" height="6" fill="#57ccaa"/><rect x="402" y="240" width="6" height="6" fill="#53cab1"/><rect x="408" y="240" width="6" height="6" fill="#4fc5b3"/><rect x="414" y="240" width="6" height="6" fill="#4cbfb7"/><rect x="420" y="240" width="6" height="6" fill="#48b9bc"/><rect x="426" y="240" width="6" height="6" fill="#46b2c1"/><rect x="432" y="240" width="6" height="6" fill="#44acc7"/><rect x="438" y="240" width="6" height="6" fill="#42a6cc"/><rect x="444" y="240" width="6" height="6" fill="#41a2d0"/><rect x="450" y="240" width="6" height="6" fill="#40a0d2"/><rect x="456" y="240" width="6" height="6" fill="#40a0d1"/><rect x="462" y="240" width="6" height="6" fill="#40a3ce"/><rect x="468" y="240" width="6" height="6" fill="#41a9c8"/><rect x="474" y="240" width="6" height="6" fill="#42afc2"/><rect x="480" y="240" width="6" height="6" fill="#43b6bb"/><rect x="486" y="240" width="6" height="6" fill="#44bdb4"/><rect x="492" y="240" width="6" height="6" fill="#45c3ae"/><rect x="498" y="240" width="6" height="6" fill="#45c8a8"/><rect x="504" y="240" width="6" height="6" fill="#44c89d"/><rect x="510" y="240" width="6" height="6" fill="#44c895"/><rect x="516" y="240" width="6" height="6" fill="#43c88e"/><rect x="522" y="240" width="6" height="6" fill="#43c88a"/><rect x="528" y="240" width="6" height="6" fill="#43c887"/><rect x="534" y="240" width="6" height="6" fill="#42c886"/><rect x="540" y="240" width="6" height="6" fill="#42c886"/><rect x="546" y="240" width="6" height="6" fill="#42c886"/><rect x="330" y="246" width="6" height="6" fill="#5ace86"/><rect x="336" y="246" width="6" height="6" fill="#5dcf8a"/><rect x="342" y="246" width="6" height="6" fill="#5fcf8d"/><rect x="348" y="246" width="6" height="6" fill="#61d090"/><rect x="354" y="246" width="6" height="6" fill="#61d092"/><rect x="360" y="246" width="6" height="6" fill="#60cf93"/><rect x="366" y="246" width="6" height="6" fill="#5ecf95"/><rect x="372" y="246" width="6" height="6" fill="#5cce97"/><rect x="378" y="246" width="6" height="6" fill="#59cd9a"/><rect x="384" y="246" width="6" height="6" fill="#57cc9f"/><rect x="390" y="246" width="6" height="6" fill="#54cca4"/><rect x="396" y="246" width="6" height="6" fill="#51cbac"/><rect x="402" y="246" width="6" height="6" fill="#4ec6b1"/><rect x="408" y="246" width="6" height="6" fill="#4bc0b6"/><rect x="414" y="246" width="6" height="6" fill="#48b9bb"/><rect x="420" y="246" width="6" height="6" fill="#45b1c2"/><rect x="426" y="246" width="6" height="6" fill="#43a8ca"/><rect x="432" y="246" width="6" height="6" fill="#419fd2"/><rect x="438" y="246" width="6" height="6" fill="#3e8fd2"/><rect x="444" y="246" width="6" height="6" fill="#3c83d2"/><rect x="450" y="246" width="6" height="6" fill="#3b7dd2"/><rect x="456" y="246" width="6" height="6" fill="#3b7fd2"/><rect x="462" y="246" width="6" height="6" fill="#3c87d2"/><rect x="468" y="246" width="6" height="6" fill="#3e96d2"/><rect x="474" y="246" width="6" height="6" fill="#40a4cd"/><rect x="480" y="246" width="6" height="6" fill="#42adc4"/><rect x="486" y="246" width="6" height="6" fill="#43b6bb"/><rect x="492" y="246" width="6" height="6" fill="#44beb3"/><rect x="498" y="246" width="6" height="6" fill="#45c5ac"/><rect x="504" y="246" width="6" height="6" fill="#45c8a3"/><rect x="510" y="246" width="6" height="6" fill="#44c898"/><rect x="516" y="246" width="6" height="6" fill="#43c890"/><rect x="522" y="246" width="6" height="6" fill="#43c88a"/><rect x="528" y="246" width="6" height="6" fill="#42c886"/><rect x="336" y="252" width="6" height="6" fill="#55cd84"/><rect x="342" y="252" width="6" height="6" fill="#57cd86"/><rect x="348" y="252" width="6" height="6" fill="#57cd88"/><rect x="354" y="252" width="6" height="6" fill="#57cd8a"/><rect x="360" y="252" width="6" height="6" fill="#57cd8c"/><rect x="366" y="252" width="6" height="6" fill="#55cd8f"/><rect x="372" y="252" width="6" height="6" fill="#54cc92"/><rect x="378" y="252" width="6" height="6" fill="#52cb97"/><rect x="384" y="252" width="6" height="6" fill="#50cb9d"/><rect x="390" y="252" width="6" height="6" fill="#4ecaa4"/><rect x="396" y="252" width="6" height="6" fill="#4dc9ae"/><rect x="402" y="252" width="6" height="6" fill="#4ac3b2"/><rect x="408" y="252" width="6" height="6" fill="#48bcb8"/><rect x="414" y="252" width="6" height="6" fill="#45b4bf"/><rect x="420" y="252" width="6" height="6" fill="#43aac9"/><rect x="426" y="252" width="6" height="6" fill="#409dd2"/><rect x="432" y="252" width="6" height="6" fill="#3d86d2"/><rect x="438" y="252" width="6" height="6" fill="#3a72d2"/><rect x="444" y="252" width="6" height="6" fill="#3762d2"/><rect x="450" y="252" width="6" height="6" fill="#365ad2"/><rect x="456" y="252" width="6" height="6" fill="#365cd2"/><rect x="462" y="252" width="6" height="6" fill="#3867d2"/><rect x="468" y="252" width="6" height="6" fill="#3a79d2"/><rect x="474" y="252" width="6" height="6" fill="#3d91d2"/><rect x="480" y="252" width="6" height="6" fill="#40a4cd"/><rect x="486" y="252" width="6" height="6" fill="#42b0c1"/><rect x="492" y="252" width="6" height="6" fill="#43bab7"/><rect x="498" y="252" width="6" height="6" fill="#45c2af"/><rect x="504" y="252" width="6" height="6" fill="#45c8a7"/><rect x="510" y="252" width="6" height="6" fill="#44c89a"/><rect x="516" y="252" width="6" height="6" fill="#43c891"/><rect x="336" y="258" width="6" height="6" fill="#4fcb7f"/><rect x="342" y="258" width="6" height="6" fill="#50cb81"/><rect x="348" y="258" width="6" height="6" fill="#50cb83"/><rect x="354" y="258" width="6" height="6" fill="#50cb85"/><rect x="360" y="258" width="6" height="6" fill="#4fcb87"/><rect x="366" y="258" width="6" height="6" fill="#4ecb8a"/><rect x="372" y="258" width="6" height="6" fill="#4dca8e"/><rect x="378" y="258" width="6" height="6" fill="#4cca94"/><rect x="384" y="258" width="6" height="6" fill="#4bc99b"/><rect x="390" y="258" width="6" height="6" fill="#4bc9a4"/><rect x="396" y="258" width="6" height="6" fill="#4ac7ad"/><rect x="402" y="258" width="6" height="6" fill="#48c1b2"/><rect x="408" y="258" width="6" height="6" fill="#46b9ba"/><rect x="414" y="258" width="6" height="6" fill="#44b0c2"/><rect x="420" y="258" width="6" height="6" fill="#41a4cd"/><rect x="426" y="258" width="6" height="6" fill="#3e8fd2"/><rect x="432" y="258" width="6" height="6" fill="#3a73d2"/><rect x="438" y="258" width="6" height="6" fill="#365ad2"/><rect x="444" y="258" width="6" height="6" fill="#3347d2"/><rect x="450" y="258" width="6" height="6" fill="#323dd2"/><rect x="456" y="258" width="6" height="6" fill="#323fd2"/><rect x="462" y="258" width="6" height="6" fill="#344cd2"/><rect x="468" y="258" width="6" height="6" fill="#3762d2"/><rect x="474" y="258" width="6" height="6" fill="#3b7ed2"/><rect x="480" y="258" width="6" height="6" fill="#3f9bd2"/><rect x="486" y="258" width="6" height="6" fill="#41abc6"/><rect x="492" y="258" width="6" height="6" fill="#43b6bb"/><rect x="498" y="258" width="6" height="6" fill="#44c0b1"/><rect x="504" y="258" width="6" height="6" fill="#45c7aa"/><rect x="336" y="264" width="6" height="6" fill="#4aca7c"/><rect x="342" y="264" width="6" height="6" fill="#4aca7d"/><rect x="348" y="264" width="6" height="6" fill="#4aca7f"/><rect x="354" y="264" width="6" height="6" fill="#4aca81"/><rect x="360" y="264" width="6" height="6" fill="#4aca83"/><rect x="366" y="264" width="6" height="6" fill="#49c987"/><rect x="372" y="264" width="6" height="6" fill="#49c98b"/><rect x="378" y="264" width="6" height="6" fill="#49c991"/><rect x="384" y="264" width="6" height="6" fill="#48c999"/><rect x="390" y="264" width="6" height="6" fill="#48c8a2"/><rect x="396" y="264" width="6" height="6" fill="#48c7ac"/><rect x="402" y="264" width="6" height="6" fill="#46c0b2"/><rect x="408" y="264" width="6" height="6" fill="#45b8ba"/><rect x="414" y="264" width="6" height="6" fill="#43aec4"/><rect x="420" y="264" width="6" height="6" fill="#40a2d0"/><rect x="426" y="264" width="6" height="6" fill="#3d88d2"/><rect x="432" y="264" width="6" height="6" fill="#386ad2"/><rect x="438" y="264" width="6" height="6" fill="#344ed2"/><rect x="444" y="264" width="6" height="6" fill="#323cd2"/><rect x="450" y="264" width="6" height="6" fill="#323cd2"/><rect x="456" y="264" width="6" height="6" fill="#323cd2"/><rect x="462" y="264" width="6" height="6" fill="#323ed2"/><rect x="468" y="264" width="6" height="6" fill="#3556d2"/><rect x="474" y="264" width="6" height="6" fill="#3974d2"/><rect x="480" y="264" width="6" height="6" fill="#3e94d2"/><rect x="486" y="264" width="6" height="6" fill="#41a9c8"/><rect x="492" y="264" width="6" height="6" fill="#43b5bc"/><rect x="498" y="264" width="6" height="6" fill="#45c2af"/><rect x="336" y="270" width="6" height="6" fill="#46c979"/><rect x="342" y="270" width="6" height="6" fill="#47c97b"/><rect x="348" y="270" width="6" height="6" fill="#47c97c"/><rect x="354" y="270" width="6" height="6" fill="#47c97e"/><rect x="360" y="270" width="6" height="6" fill="#46c980"/><rect x="366" y="270" width="6" height="6" fill="#46c984"/><rect x="372" y="270" width="6" height="6" fill="#46c888"/><rect x="378" y="270" width="6" height="6" fill="#46c88e"/><rect x="384" y="270" width="6" height="6" fill="#46c896"/><rect x="390" y="270" width="6" height="6" fill="#46c8a0"/><rect x="396" y="270" width="6" height="6" fill="#47c7ab"/><rect x="402" y="270" width="6" height="6" fill="#45c1b1"/><rect x="408" y="270" width="6" height="6" fill="#44b9b8"/><rect x="414" y="270" width="6" height="6" fill="#42afc2"/><rect x="420" y="270" width="6" height="6" fill="#40a3ce"/><rect x="426" y="270" width="6" height="6" fill="#3d8bd2"/><rect x="432" y="270" width="6" height="6" fill="#396dd2"/><rect x="438" y="270" width="6" height="6" fill="#3552d2"/><rect x="444" y="270" width="6" height="6" fill="#323dd2"/><rect x="450" y="270" width="6" height="6" fill="#323cd2"/><rect x="456" y="270" width="6" height="6" fill="#323cd2"/><rect x="462" y="270" width="6" height="6" fill="#3241d2"/><rect x="468" y="270" width="6" height="6" fill="#3659d2"/><rect x="474" y="270" width="6" height="6" fill="#3a78d2"/><rect x="480" y="270" width="6" height="6" fill="#3e97d2"/><rect x="486" y="270" width="6" height="6" fill="#41adc4"/><rect x="492" y="270" width="6" height="6" fill="#44bdb4"/><rect x="498" y="270" width="6" height="6" fill="#45c8a2"/><rect x="336" y="276" width="6" height="6" fill="#44c878"/><rect x="342" y="276" width="6" height="6" fill="#44c879"/><rect x="348" y="276" width="6" height="6" fill="#44c87a"/><rect x="354" y="276" width="6" height="6" fill="#44c87c"/><rect x="360" y="276" width="6" height="6" fill="#44c87e"/><rect x="366" y="276" width="6" height="6" fill="#44c881"/><rect x="372" y="276" width="6" height="6" fill="#44c885"/><rect x="378" y="276" width="6" height="6" fill="#44c88b"/><rect x="384" y="276" width="6" height="6" fill="#45c892"/><rect x="390" y="276" width="6" height="6" fill="#45c89b"/><rect x="396" y="276" width="6" height="6" fill="#46c8a7"/><rect x="402" y="276" width="6" height="6" fill="#45c3ae"/><rect x="408" y="276" width="6" height="6" fill="#44bcb5"/><rect x="414" y="276" width="6" height="6" fill="#43b3be"/><rect x="420" y="276" width="6" height="6" fill="#41a8c9"/><rect x="426" y="276" width="6" height="6" fill="#3e97d2"/><rect x="432" y="276" width="6" height="6" fill="#3b7dd2"/><rect x="438" y="276" width="6" height="6" fill="#3764d2"/><rect x="444" y="276" width="6" height="6" fill="#3551d2"/><rect x="450" y="276" width="6" height="6" fill="#3348d2"/><rect x="456" y="276" width="6" height="6" fill="#3349d2"/><rect x="462" y="276" width="6" height="6" fill="#3556d2"/><rect x="468" y="276" width="6" height="6" fill="#386cd2"/><rect x="474" y="276" width="6" height="6" fill="#3c8ad2"/><rect x="480" y="276" width="6" height="6" fill="#41a7ca"/><rect x="486" y="276" width="6" height="6" fill="#43b8b9"/><rect x="492" y="276" width="6" height="6" fill="#45c7aa"/><rect x="498" y="276" width="6" height="6" fill="#43c887"/><rect x="504" y="276" width="6" height="6" fill="#40c86a"/><rect x="336" y="282" width="6" height="6" fill="#43c877"/><rect x="342" y="282" width="6" height="6" fill="#43c878"/><rect x="348" y="282" width="6" height="6" fill="#43c879"/><rect x="354" y="282" width="6" height="6" fill="#43c87a"/><rect x="360" y="282" width="6" height="6" fill="#43c87c"/><rect x="366" y="282" width="6" height="6" fill="#43c87f"/><rect x="372" y="282" width="6" height="6" fill="#43c882"/><rect x="378" y="282" width="6" height="6" fill="#43c887"/><rect x="384" y="282" width="6" height="6" fill="#44c88e"/><rect x="390" y="282" width="6" height="6" fill="#44c896"/><rect x="396" y="282" width="6" height="6" fill="#45c8a0"/><rect x="402" y="282" width="6" height="6" fill="#46c6ab"/><rect x="408" y="282" width="6" height="6" fill="#45c0b1"/><rect x="414" y="282" width="6" height="6" fill="#43b9b8"/><rect x="420" y="282" width="6" height="6" fill="#42b0c2"/><rect x="426" y="282" width="6" height="6" fill="#40a5cc"/><rect x="432" y="282" width="6" height="6" fill="#3e95d2"/><rect x="438" y="282" width="6" height="6" fill="#3b81d2"/><rect x="444" y="282" width="6" height="6" fill="#3972d2"/><rect x="450" y="282" width="6" height="6" fill="#386ad2"/><rect x="456" y="282" width="6" height="6" fill="#386cd2"/><rect x="462" y="282" width="6" height="6" fill="#3a76d2"/><rect x="468" y="282" width="6" height="6" fill="#3c88d2"/><rect x="474" y="282" width="6" height="6" fill="#40a1d0"/><rect x="480" y="282" width="6" height="6" fill="#43b4bd"/><rect x="486" y="282" width="6" height="6" fill="#45c5ac"/><rect x="492" y="282" width="6" height="6" fill="#43c889"/><rect x="498" y="282" width="6" height="6" fill="#40c867"/><rect x="504" y="282" width="6" height="6" fill="#5cca5a"/><rect x="336" y="288" width="6" height="6" fill="#42c877"/><rect x="342" y="288" width="6" height="6" fill="#42c878"/><rect x="348" y="288" width="6" height="6" fill="#42c878"/><rect x="354" y="288" width="6" height="6" fill="#42c879"/><rect x="360" y="288" width="6" height="6" fill="#42c87a"/><rect x="366" y="288" width="6" height="6" fill="#42c87c"/><rect x="372" y="288" width="6" height="6" fill="#42c87f"/><rect x="378" y="288" width="6" height="6" fill="#43c884"/><rect x="384" y="288" width="6" height="6" fill="#43c889"/><rect x="390" y="288" width="6" height="6" fill="#44c890"/><rect x="396" y="288" width="6" height="6" fill="#44c899"/><rect x="402" y="288" width="6" height="6" fill="#45c8a3"/><rect x="408" y="288" width="6" height="6" fill="#45c5ac"/><rect x="414" y="288" width="6" height="6" fill="#44bfb2"/><rect x="420" y="288" width="6" height="6" fill="#43b8b9"/><rect x="426" y="288" width="6" height="6" fill="#42b0c1"/><rect x="432" y="288" width="6" height="6" fill="#41a8c9"/><rect x="438" y="288" width="6" height="6" fill="#40a1d0"/><rect x="444" y="288" width="6" height="6" fill="#3e98d2"/><rect x="450" y="288" width="6" height="6" fill="#3e92d2"/><rect x="456" y="288" width="6" height="6" fill="#3e93d2"/><rect x="462" y="288" width="6" height="6" fill="#3f9cd2"/><rect x="468" y="288" width="6" height="6" fill="#40a4cd"/><rect x="474" y="288" width="6" height="6" fill="#42aec3"/><rect x="480" y="288" width="6" height="6" fill="#44bfb2"/><rect x="486" y="288" width="6" height="6" fill="#43c88c"/><rect x="492" y="288" width="6" height="6" fill="#40c867"/><rect x="498" y="288" width="6" height="6" fill="#64ca58"/><rect x="504" y="288" width="6" height="6" fill="#84cd4e"/><rect x="336" y="294" width="6" height="6" fill="#42c878"/><rect x="342" y="294" width="6" height="6" fill="#42c878"/><rect x="348" y="294" width="6" height="6" fill="#42c878"/><rect x="354" y="294" width="6" height="6" fill="#42c878"/><rect x="360" y="294" width="6" height="6" fill="#42c879"/><rect x="366" y="294" width="6" height="6" fill="#42c87a"/><rect x="372" y="294" width="6" height="6" fill="#42c87c"/><rect x="378" y="294" width="6" height="6" fill="#42c880"/><rect x="384" y="294" width="6" height="6" fill="#42c884"/><rect x="390" y="294" width="6" height="6" fill="#43c88a"/><rect x="396" y="294" width="6" height="6" fill="#43c891"/><rect x="402" y="294" width="6" height="6" fill="#44c899"/><rect x="408" y="294" width="6" height="6" fill="#45c8a3"/><rect x="414" y="294" width="6" height="6" fill="#45c6ab"/><rect x="420" y="294" width="6" height="6" fill="#44c1b0"/><rect x="426" y="294" width="6" height="6" fill="#44bbb6"/><rect x="432" y="294" width="6" height="6" fill="#43b6bb"/><rect x="438" y="294" width="6" height="6" fill="#42b1c0"/><rect x="444" y="294" width="6" height="6" fill="#42adc4"/><rect x="450" y="294" width="6" height="6" fill="#41abc6"/><rect x="456" y="294" width="6" height="6" fill="#41acc5"/><rect x="462" y="294" width="6" height="6" fill="#42afc2"/><rect x="468" y="294" width="6" height="6" fill="#42b3be"/><rect x="474" y="294" width="6" height="6" fill="#43bab7"/><rect x="480" y="294" width="6" height="6" fill="#45c6ab"/><rect x="486" y="294" width="6" height="6" fill="#40c86e"/><rect x="492" y="294" width="6" height="6" fill="#64ca58"/><rect x="498" y="294" width="6" height="6" fill="#8cce4b"/><rect x="504" y="294" width="6" height="6" fill="#afd040"/><rect x="510" y="294" width="6" height="6" fill="#bdd13c"/><rect x="336" y="300" width="6" height="6" fill="#41c878"/><rect x="342" y="300" width="6" height="6" fill="#41c878"/><rect x="348" y="300" width="6" height="6" fill="#41c878"/><rect x="354" y="300" width="6" height="6" fill="#41c877"/><rect x="360" y="300" width="6" height="6" fill="#41c877"/><rect x="366" y="300" width="6" height="6" fill="#41c878"/><rect x="372" y="300" width="6" height="6" fill="#41c879"/><rect x="378" y="300" width="6" height="6" fill="#42c87c"/><rect x="384" y="300" width="6" height="6" fill="#42c87f"/><rect x="390" y="300" width="6" height="6" fill="#42c884"/><rect x="396" y="300" width="6" height="6" fill="#43c889"/><rect x="402" y="300" width="6" height="6" fill="#43c88f"/><rect x="408" y="300" width="6" height="6" fill="#44c896"/><rect x="414" y="300" width="6" height="6" fill="#45c89f"/><rect x="420" y="300" width="6" height="6" fill="#45c8a8"/><rect x="426" y="300" width="6" height="6" fill="#45c5ac"/><rect x="432" y="300" width="6" height="6" fill="#45c1b0"/><rect x="438" y="300" width="6" height="6" fill="#44beb3"/><rect x="444" y="300" width="6" height="6" fill="#44bcb5"/><rect x="450" y="300" width="6" height="6" fill="#44bbb6"/><rect x="456" y="300" width="6" height="6" fill="#44bbb6"/><rect x="462" y="300" width="6" height="6" fill="#44bdb4"/><rect x="468" y="300" width="6" height="6" fill="#44c0b1"/><rect x="474" y="300" width="6" height="6" fill="#45c4ad"/><rect x="480" y="300" width="6" height="6" fill="#45c89f"/><rect x="486" y="300" width="6" height="6" fill="#44c862"/><rect x="492" y="300" width="6" height="6" fill="#88cd4c"/><rect x="498" y="300" width="6" height="6" fill="#a6d043"/><rect x="504" y="300" width="6" height="6" fill="#bed13b"/><rect x="510" y="300" width="6" height="6" fill="#c3c43b"/><rect x="336" y="306" width="6" height="6" fill="#41c879"/><rect x="342" y="306" width="6" height="6" fill="#41c878"/><rect x="348" y="306" width="6" height="6" fill="#41c878"/><rect x="354" y="306" width="6" height="6" fill="#41c877"/><rect x="360" y="306" width="6" height="6" fill="#41c876"/><rect x="366" y="306" width="6" height="6" fill="#41c876"/><rect x="372" y="306" width="6" height="6" fill="#41c877"/><rect x="378" y="306" width="6" height="6" fill="#41c878"/><rect x="384" y="306" width="6" height="6" fill="#42c87b"/><rect x="390" y="306" width="6" height="6" fill="#42c87e"/><rect x="396" y="306" width="6" height="6" fill="#42c882"/><rect x="402" y="306" width="6" height="6" fill="#43c887"/><rect x="408" y="306" width="6" height="6" fill="#43c88c"/><rect x="414" y="306" width="6" height="6" fill="#43c891"/><rect x="420" y="306" width="6" height="6" fill="#44c897"/><rect x="426" y="306" width="6" height="6" fill="#44c89e"/><rect x="432" y="306" width="6" height="6" fill="#45c8a3"/><rect x="438" y="306" width="6" height="6" fill="#45c8a8"/><rect x="444" y="306" width="6" height="6" fill="#45c7aa"/><rect x="450" y="306" width="6" height="6" fill="#45c6ab"/><rect x="456" y="306" width="6" height="6" fill="#45c7aa"/><rect x="462" y="306" width="6" height="6" fill="#45c8a9"/><rect x="468" y="306" width="6" height="6" fill="#45c8a4"/><rect x="474" y="306" width="6" height="6" fill="#44c89d"/><rect x="480" y="306" width="6" height="6" fill="#44c893"/><rect x="486" y="306" width="6" height="6" fill="#40c86b"/><rect x="492" y="306" width="6" height="6" fill="#8fce4a"/><rect x="498" y="306" width="6" height="6" fill="#b5d13e"/><rect x="504" y="306" width="6" height="6" fill="#c5c13b"/><rect x="510" y="306" width="6" height="6" fill="#cdae3a"/><rect x="516" y="306" width="6" height="6" fill="#d3a239"/><rect x="336" y="312" width="6" height="6" fill="#41c87a"/><rect x="342" y="312" width="6" height="6" fill="#41c879"/><rect x="348" y="312" width="6" height="6" fill="#41c878"/><rect x="354" y="312" width="6" height="6" fill="#41c876"/><rect x="360" y="312" width="6" height="6" fill="#41c875"/><rect x="366" y="312" width="6" height="6" fill="#41c874"/><rect x="372" y="312" width="6" height="6" fill="#41c874"/><rect x="378" y="312" width="6" height="6" fill="#41c875"/><rect x="384" y="312" width="6" height="6" fill="#41c877"/><rect x="390" y="312" width="6" height="6" fill="#41c879"/><rect x="396" y="312" width="6" height="6" fill="#42c87c"/><rect x="402" y="312" width="6" height="6" fill="#42c87f"/><rect x="408" y="312" width="6" height="6" fill="#42c883"/><rect x="414" y="312" width="6" height="6" fill="#43c887"/><rect x="420" y="312" width="6" height="6" fill="#43c88b"/><rect x="426" y="312" width="6" height="6" fill="#43c88f"/><rect x="432" y="312" width="6" height="6" fill="#43c892"/><rect x="438" y="312" width="6" height="6" fill="#44c895"/><rect x="444" y="312" width="6" height="6" fill="#44c897"/><rect x="450" y="312" width="6" height="6" fill="#44c897"/><rect x="456" y="312" width="6" height="6" fill="#44c897"/><rect x="462" y="312" width="6" height="6" fill="#44c895"/><rect x="468" y="312" width="6" height="6" fill="#43c891"/><rect x="474" y="312" width="6" height="6" fill="#43c88d"/><rect x="480" y="312" width="6" height="6" fill="#43c888"/><rect x="486" y="312" width="6" height="6" fill="#41c873"/><rect x="492" y="312" width="6" height="6" fill="#89cd4c"/><rect x="498" y="312" width="6" height="6" fill="#c2c83b"/><rect x="504" y="312" width="6" height="6" fill="#cdaf3a"/><rect x="510" y="312" width="6" height="6" fill="#d69a38"/><rect x="516" y="312" width="6" height="6" fill="#dc8d38"/><rect x="336" y="318" width="6" height="6" fill="#42c87b"/><rect x="342" y="318" width="6" height="6" fill="#41c87a"/><rect x="348" y="318" width="6" height="6" fill="#41c878"/><rect x="354" y="318" width="6" height="6" fill="#41c876"/><rect x="360" y="318" width="6" height="6" fill="#41c874"/><rect x="366" y="318" width="6" height="6" fill="#41c873"/><rect x="372" y="318" width="6" height="6" fill="#41c872"/><rect x="378" y="318" width="6" height="6" fill="#41c872"/><rect x="384" y="318" width="6" height="6" fill="#41c873"/><rect x="390" y="318" width="6" height="6" fill="#41c874"/><rect x="396" y="318" width="6" height="6" fill="#41c876"/><rect x="402" y="318" width="6" height="6" fill="#41c879"/><rect x="408" y="318" width="6" height="6" fill="#42c87b"/><rect x="414" y="318" width="6" height="6" fill="#42c87e"/><rect x="420" y="318" width="6" height="6" fill="#42c881"/><rect x="426" y="318" width="6" height="6" fill="#42c883"/><rect x="432" y="318" width="6" height="6" fill="#42c885"/><rect x="438" y="318" width="6" height="6" fill="#43c887"/><rect x="444" y="318" width="6" height="6" fill="#43c888"/><rect x="450" y="318" width="6" height="6" fill="#43c888"/><rect x="456" y="318" width="6" height="6" fill="#43c888"/><rect x="462" y="318" width="6" height="6" fill="#42c886"/><rect x="468" y="318" width="6" height="6" fill="#42c884"/><rect x="474" y="318" width="6" height="6" fill="#42c882"/><rect x="480" y="318" width="6" height="6" fill="#42c87c"/><rect x="486" y="318" width="6" height="6" fill="#40c86e"/><rect x="492" y="318" width="6" height="6" fill="#73cc53"/><rect x="498" y="318" width="6" height="6" fill="#c6be3a"/><rect x="504" y="318" width="6" height="6" fill="#d49e39"/><rect x="510" y="318" width="6" height="6" fill="#de8937"/><rect x="516" y="318" width="6" height="6" fill="#e57937"/><rect x="522" y="318" width="6" height="6" fill="#e57336"/><rect x="330" y="324" width="6" height="6" fill="#42c87d"/><rect x="336" y="324" width="6" height="6" fill="#42c87d"/><rect x="342" y="324" width="6" height="6" fill="#42c87b"/><rect x="348" y="324" width="6" height="6" fill="#41c879"/><rect x="354" y="324" width="6" height="6" fill="#41c876"/><rect x="360" y="324" width="6" height="6" fill="#41c874"/><rect x="366" y="324" width="6" height="6" fill="#41c872"/><rect x="372" y="324" width="6" height="6" fill="#41c871"/><rect x="378" y="324" width="6" height="6" fill="#41c870"/><rect x="384" y="324" width="6" height="6" fill="#41c870"/><rect x="390" y="324" width="6" height="6" fill="#41c871"/><rect x="396" y="324" width="6" height="6" fill="#41c872"/><rect x="402" y="324" width="6" height="6" fill="#41c874"/><rect x="408" y="324" width="6" height="6" fill="#41c875"/><rect x="414" y="324" width="6" height="6" fill="#41c877"/><rect x="420" y="324" width="6" height="6" fill="#41c879"/><rect x="426" y="324" width="6" height="6" fill="#41c87b"/><rect x="432" y="324" width="6" height="6" fill="#42c87c"/><rect x="438" y="324" width="6" height="6" fill="#42c87d"/><rect x="444" y="324" width="6" height="6" fill="#42c87e"/><rect x="450" y="324" width="6" height="6" fill="#42c87e"/><rect x="456" y="324" width="6" height="6" fill="#42c87d"/><rect x="462" y="324" width="6" height="6" fill="#42c87c"/><rect x="468" y="324" width="6" height="6" fill="#42c87b"/><rect x="474" y="324" width="6" height="6" fill="#41c879"/><rect x="480" y="324" width="6" height="6" fill="#41c873"/><rect x="486" y="324" width="6" height="6" fill="#40c868"/><rect x="492" y="324" width="6" height="6" fill="#61ca59"/><rect x="498" y="324" width="6" height="6" fill="#c4c43b"/><rect x="504" y="324" width="6" height="6" fill="#db9038"/><rect x="510" y="324" width="6" height="6" fill="#e57937"/><rect x="516" y="324" width="6" height="6" fill="#e56e36"/><rect x="522" y="324" width="6" height="6" fill="#e46935"/><rect x="330" y="330" width="6" height="6" fill="#42c87f"/><rect x="336" y="330" width="6" height="6" fill="#42c87e"/><rect x="342" y="330" width="6" height="6" fill="#42c87c"/><rect x="348" y="330" width="6" height="6" fill="#41c879"/><rect x="354" y="330" width="6" height="6" fill="#41c877"/><rect x="360" y="330" width="6" height="6" fill="#41c874"/><rect x="366" y="330" width="6" height="6" fill="#41c871"/><rect x="372" y="330" width="6" height="6" fill="#41c86f"/><rect x="378" y="330" width="6" height="6" fill="#40c86e"/><rect x="384" y="330" width="6" height="6" fill="#40c86e"/><rect x="390" y="330" width="6" height="6" fill="#40c86e"/><rect x="396" y="330" width="6" height="6" fill="#40c86e"/><rect x="402" y="330" width="6" height="6" fill="#41c86f"/><rect x="408" y="330" width="6" height="6" fill="#41c871"/><rect x="414" y="330" width="6" height="6" fill="#41c872"/><rect x="420" y="330" width="6" height="6" fill="#41c873"/><rect x="426" y="330" width="6" height="6" fill="#41c874"/><rect x="432" y="330" width="6" height="6" fill="#41c875"/><rect x="438" y="330" width="6" height="6" fill="#41c876"/><rect x="444" y="330" width="6" height="6" fill="#41c876"/><rect x="450" y="330" width="6" height="6" fill="#41c876"/><rect x="456" y="330" width="6" height="6" fill="#41c876"/><rect x="462" y="330" width="6" height="6" fill="#41c875"/><rect x="468" y="330" width="6" height="6" fill="#41c874"/><rect x="474" y="330" width="6" height="6" fill="#41c873"/><rect x="480" y="330" width="6" height="6" fill="#41c872"/><rect x="486" y="330" width="6" height="6" fill="#40c863"/><rect x="492" y="330" width="6" height="6" fill="#5aca5b"/><rect x="498" y="330" width="6" height="6" fill="#aed040"/><rect x="504" y="330" width="6" height="6" fill="#de8837"/><rect x="510" y="330" width="6" height="6" fill="#e57136"/><rect x="516" y="330" width="6" height="6" fill="#e46735"/><rect x="522" y="330" width="6" height="6" fill="#e36034"/><rect x="528" y="330" width="6" height="6" fill="#e35f34"/><rect x="330" y="336" width="6" height="6" fill="#42c880"/><rect x="336" y="336" width="6" height="6" fill="#42c87f"/><rect x="342" y="336" width="6" height="6" fill="#42c87d"/><rect x="348" y="336" width="6" height="6" fill="#41c87a"/><rect x="354" y="336" width="6" height="6" fill="#41c877"/><rect x="360" y="336" width="6" height="6" fill="#41c874"/><rect x="366" y="336" width="6" height="6" fill="#41c871"/><rect x="372" y="336" width="6" height="6" fill="#40c86f"/><rect x="378" y="336" width="6" height="6" fill="#40c86d"/><rect x="384" y="336" width="6" height="6" fill="#40c86c"/><rect x="390" y="336" width="6" height="6" fill="#40c86c"/><rect x="396" y="336" width="6" height="6" fill="#40c86c"/><rect x="402" y="336" width="6" height="6" fill="#40c86c"/><rect x="408" y="336" width="6" height="6" fill="#40c86d"/><rect x="414" y="336" width="6" height="6" fill="#40c86e"/><rect x="420" y="336" width="6" height="6" fill="#40c86f"/><rect x="426" y="336" width="6" height="6" fill="#41c86f"/><rect x="432" y="336" width="6" height="6" fill="#41c870"/><rect x="438" y="336" width="6" height="6" fill="#41c870"/><rect x="444" y="336" width="6" height="6" fill="#41c871"/><rect x="450" y="336" width="6" height="6" fill="#41c871"/><rect x="456" y="336" width="6" height="6" fill="#41c870"/><rect x="462" y="336" width="6" height="6" fill="#41c870"/><rect x="468" y="336" width="6" height="6" fill="#41c86f"/><rect x="474" y="336" width="6" height="6" fill="#40c86e"/><rect x="480" y="336" width="6" height="6" fill="#40c86d"/><rect x="486" y="336" width="6" height="6" fill="#43c863"/><rect x="492" y="336" width="6" height="6" fill="#59ca5b"/><rect x="498" y="336" width="6" height="6" fill="#8dce4b"/><rect x="504" y="336" width="6" height="6" fill="#da9138"/><rect x="510" y="336" width="6" height="6" fill="#e46d35"/><rect x="516" y="336" width="6" height="6" fill="#e46435"/><rect x="522" y="336" width="6" height="6" fill="#e35d34"/><rect x="528" y="336" width="6" height="6" fill="#e35c34"/><rect x="330" y="342" width="6" height="6" fill="#42c882"/><rect x="336" y="342" width="6" height="6" fill="#42c881"/><rect x="342" y="342" width="6" height="6" fill="#42c87f"/><rect x="348" y="342" width="6" height="6" fill="#42c87b"/><rect x="354" y="342" width="6" height="6" fill="#41c878"/><rect x="360" y="342" width="6" height="6" fill="#41c874"/><rect x="366" y="342" width="6" height="6" fill="#41c871"/><rect x="372" y="342" width="6" height="6" fill="#40c86e"/><rect x="378" y="342" width="6" height="6" fill="#40c86c"/><rect x="384" y="342" width="6" height="6" fill="#40c86b"/><rect x="390" y="342" width="6" height="6" fill="#40c86a"/><rect x="396" y="342" width="6" height="6" fill="#40c86a"/><rect x="402" y="342" width="6" height="6" fill="#40c86a"/><rect x="408" y="342" width="6" height="6" fill="#40c86a"/><rect x="414" y="342" width="6" height="6" fill="#40c86b"/><rect x="420" y="342" width="6" height="6" fill="#40c86b"/><rect x="426" y="342" width="6" height="6" fill="#40c86c"/><rect x="432" y="342" width="6" height="6" fill="#40c86c"/><rect x="438" y="342" width="6" height="6" fill="#40c86c"/><rect x="444" y="342" width="6" height="6" fill="#40c86c"/><rect x="450" y="342" width="6" height="6" fill="#40c86c"/><rect x="456" y="342" width="6" height="6" fill="#40c86c"/><rect x="462" y="342" width="6" height="6" fill="#40c86c"/><rect x="468" y="342" width="6" height="6" fill="#40c86c"/><rect x="474" y="342" width="6" height="6" fill="#40c86b"/><rect x="480" y="342" width="6" height="6" fill="#40c86a"/><rect x="486" y="342" width="6" height="6" fill="#40c86a"/><rect x="492" y="342" width="6" height="6" fill="#57c95c"/><rect x="498" y="342" width="6" height="6" fill="#79cc51"/><rect x="504" y="342" width="6" height="6" fill="#c8b93a"/><rect x="510" y="342" width="6" height="6" fill="#e56f36"/><rect x="516" y="342" width="6" height="6" fill="#e46435"/><rect x="522" y="342" width="6" height="6" fill="#e35d34"/><rect x="528" y="342" width="6" height="6" fill="#e35a34"/><rect x="534" y="342" width="6" height="6" fill="#e35a34"/><rect x="330" y="348" width="6" height="6" fill="#42c884"/><rect x="336" y="348" width="6" height="6" fill="#42c883"/><rect x="342" y="348" width="6" height="6" fill="#42c880"/><rect x="348" y="348" width="6" height="6" fill="#42c87d"/><rect x="354" y="348" width="6" height="6" fill="#41c879"/><rect x="360" y="348" width="6" height="6" fill="#41c875"/><rect x="366" y="348" width="6" height="6" fill="#41c871"/><rect x="372" y="348" width="6" height="6" fill="#40c86e"/><rect x="378" y="348" width="6" height="6" fill="#40c86c"/><rect x="384" y="348" width="6" height="6" fill="#40c86a"/><rect x="390" y="348" width="6" height="6" fill="#40c869"/><rect x="396" y="348" width="6" height="6" fill="#40c868"/><rect x="402" y="348" width="6" height="6" fill="#40c868"/><rect x="408" y="348" width="6" height="6" fill="#40c868"/><rect x="414" y="348" width="6" height="6" fill="#40c868"/><rect x="420" y="348" width="6" height="6" fill="#40c869"/><rect x="426" y="348" width="6" height="6" fill="#40c869"/><rect x="432" y="348" width="6" height="6" fill="#40c869"/><rect x="438" y="348" width="6" height="6" fill="#40c869"/><rect x="444" y="348" width="6" height="6" fill="#40c86a"/><rect x="450" y="348" width="6" height="6" fill="#40c869"/><rect x="456" y="348" width="6" height="6" fill="#40c869"/><rect x="462" y="348" width="6" height="6" fill="#40c869"/><rect x="468" y="348" width="6" height="6" fill="#40c869"/><rect x="474" y="348" width="6" height="6" fill="#40c868"/><rect x="480" y="348" width="6" height="6" fill="#40c868"/><rect x="486" y="348" width="6" height="6" fill="#40c867"/><rect x="492" y="348" width="6" height="6" fill="#50c95e"/><rect x="498" y="348" width="6" height="6" fill="#69cb56"/><rect x="504" y="348" width="6" height="6" fill="#a5d043"/><rect x="510" y="348" width="6" height="6" fill="#e37d37"/><rect x="516" y="348" width="6" height="6" fill="#e46635"/><rect x="522" y="348" width="6" height="6" fill="#e35f34"/><rect x="528" y="348" width="6" height="6" fill="#e35a34"/><rect x="534" y="348" width="6" height="6" fill="#e35b34"/><rect x="330" y="354" width="6" height="6" fill="#42c886"/><rect x="336" y="354" width="6" height="6" fill="#42c884"/><rect x="342" y="354" width="6" height="6" fill="#42c882"/><rect x="348" y="354" width="6" height="6" fill="#42c87e"/><rect x="354" y="354" width="6" height="6" fill="#41c87a"/><rect x="360" y="354" width="6" height="6" fill="#41c875"/><rect x="366" y="354" width="6" height="6" fill="#41c871"/><rect x="372" y="354" width="6" height="6" fill="#40c86e"/><rect x="378" y="354" width="6" height="6" fill="#40c86b"/><rect x="384" y="354" width="6" height="6" fill="#40c869"/><rect x="390" y="354" width="6" height="6" fill="#40c868"/><rect x="396" y="354" width="6" height="6" fill="#40c867"/><rect x="402" y="354" width="6" height="6" fill="#40c867"/><rect x="408" y="354" width="6" height="6" fill="#40c867"/><rect x="414" y="354" width="6" height="6" fill="#40c867"/><rect x="420" y="354" width="6" height="6" fill="#40c867"/><rect x="426" y="354" width="6" height="6" fill="#40c867"/><rect x="432" y="354" width="6" height="6" fill="#40c867"/><rect x="438" y="354" width="6" height="6" fill="#40c867"/><rect x="444" y="354" width="6" height="6" fill="#40c867"/><rect x="450" y="354" width="6" height="6" fill="#40c867"/><rect x="456" y="354" width="6" height="6" fill="#40c867"/><rect x="462" y="354" width="6" height="6" fill="#40c867"/><rect x="468" y="354" width="6" height="6" fill="#40c867"/><rect x="474" y="354" width="6" height="6" fill="#40c866"/><rect x="480" y="354" width="6" height="6" fill="#40c866"/><rect x="486" y="354" width="6" height="6" fill="#40c866"/><rect x="492" y="354" width="6" height="6" fill="#4ac860"/><rect x="498" y="354" width="6" height="6" fill="#5fca5a"/><rect x="504" y="354" width="6" height="6" fill="#83cd4e"/><rect x="510" y="354" width="6" height="6" fill="#d0a839"/><rect x="516" y="354" width="6" height="6" fill="#e46b35"/><rect x="522" y="354" width="6" height="6" fill="#e36234"/><rect x="528" y="354" width="6" height="6" fill="#e35d34"/><rect x="534" y="354" width="6" height="6" fill="#e35c34"/><rect x="540" y="354" width="6" height="6" fill="#e35e34"/><rect x="330" y="360" width="6" height="6" fill="#43c888"/><rect x="336" y="360" width="6" height="6" fill="#42c886"/><rect x="342" y="360" width="6" height="6" fill="#42c883"/><rect x="348" y="360" width="6" height="6" fill="#42c87f"/><rect x="354" y="360" width="6" height="6" fill="#41c87b"/><rect x="360" y="360" width="6" height="6" fill="#41c876"/><rect x="366" y="360" width="6" height="6" fill="#41c872"/><rect x="372" y="360" width="6" height="6" fill="#40c86e"/><rect x="378" y="360" width="6" height="6" fill="#40c86b"/><rect x="384" y="360" width="6" height="6" fill="#40c869"/><rect x="390" y="360" width="6" height="6" fill="#40c868"/><rect x="396" y="360" width="6" height="6" fill="#40c867"/><rect x="402" y="360" width="6" height="6" fill="#40c866"/><rect x="408" y="360" width="6" height="6" fill="#40c866"/><rect x="414" y="360" width="6" height="6" fill="#40c866"/><rect x="420" y="360" width="6" height="6" fill="#40c866"/><rect x="426" y="360" width="6" height="6" fill="#40c866"/><rect x="432" y="360" width="6" height="6" fill="#40c866"/><rect x="438" y="360" width="6" height="6" fill="#40c866"/><rect x="444" y="360" width="6" height="6" fill="#40c866"/><rect x="450" y="360" width="6" height="6" fill="#40c866"/><rect x="456" y="360" width="6" height="6" fill="#40c866"/><rect x="462" y="360" width="6" height="6" fill="#40c865"/><rect x="468" y="360" width="6" height="6" fill="#40c865"/><rect x="474" y="360" width="6" height="6" fill="#40c865"/><rect x="480" y="360" width="6" height="6" fill="#40c864"/><rect x="486" y="360" width="6" height="6" fill="#40c864"/><rect x="492" y="360" width="6" height="6" fill="#40c864"/><rect x="498" y="360" width="6" height="6" fill="#56c95c"/><rect x="504" y="360" width="6" height="6" fill="#71cb54"/><rect x="510" y="360" width="6" height="6" fill="#b2d13f"/><rect x="516" y="360" width="6" height="6" fill="#e57736"/><rect x="522" y="360" width="6" height="6" fill="#e46735"/><rect x="528" y="360" width="6" height="6" fill="#e36234"/><rect x="534" y="360" width="6" height="6" fill="#e35f34"/><rect x="540" y="360" width="6" height="6" fill="#e36134"/><rect x="330" y="366" width="6" height="6" fill="#43c88a"/><rect x="336" y="366" width="6" height="6" fill="#43c888"/><rect x="342" y="366" width="6" height="6" fill="#42c885"/><rect x="348" y="366" width="6" height="6" fill="#42c881"/><rect x="354" y="366" width="6" height="6" fill="#42c87c"/><rect x="360" y="366" width="6" height="6" fill="#41c877"/><rect x="366" y="366" width="6" height="6" fill="#41c872"/><rect x="372" y="366" width="6" height="6" fill="#40c86e"/><rect x="378" y="366" width="6" height="6" fill="#40c86b"/><rect x="384" y="366" width="6" height="6" fill="#40c869"/><rect x="390" y="366" width="6" height="6" fill="#40c867"/><rect x="396" y="366" width="6" height="6" fill="#40c866"/><rect x="402" y="366" width="6" height="6" fill="#40c865"/><rect x="408" y="366" width="6" height="6" fill="#40c865"/><rect x="414" y="366" width="6" height="6" fill="#40c865"/><rect x="420" y="366" width="6" height="6" fill="#40c865"/><rect x="426" y="366" width="6" height="6" fill="#40c865"/><rect x="432" y="366" width="6" height="6" fill="#40c865"/><rect x="438" y="366" width="6" height="6" fill="#40c865"/><rect x="444" y="366" width="6" height="6" fill="#40c865"/><rect x="450" y="366" width="6" height="6" fill="#40c865"/><rect x="456" y="366" width="6" height="6" fill="#40c864"/><rect x="462" y="366" width="6" height="6" fill="#40c864"/><rect x="468" y="366" width="6" height="6" fill="#40c864"/><rect x="474" y="366" width="6" height="6" fill="#40c863"/><rect x="480" y="366" width="6" height="6" fill="#40c863"/><rect x="486" y="366" width="6" height="6" fill="#41c863"/><rect x="492" y="366" width="6" height="6" fill="#42c863"/><rect x="498" y="366" width="6" height="6" fill="#50c95e"/><rect x="504" y="366" width="6" height="6" fill="#65ca58"/><rect x="510" y="366" width="6" height="6" fill="#8bce4b"/><rect x="516" y="366" width="6" height="6" fill="#d3a039"/><rect x="522" y="366" width="6" height="6" fill="#e56e36"/><rect x="528" y="366" width="6" height="6" fill="#e46735"/><rect x="534" y="366" width="6" height="6" fill="#e46435"/><rect x="540" y="366" width="6" height="6" fill="#e46535"/><rect x="648" y="366" width="6" height="6" fill="#d99538"/><rect x="654" y="366" width="6" height="6" fill="#d89638"/><rect x="660" y="366" width="6" height="6" fill="#40c864"/><rect x="330" y="372" width="6" height="6" fill="#43c88b"/><rect x="336" y="372" width="6" height="6" fill="#43c88a"/><rect x="342" y="372" width="6" height="6" fill="#42c886"/><rect x="348" y="372" width="6" height="6" fill="#42c882"/><rect x="354" y="372" width="6" height="6" fill="#42c87d"/><rect x="360" y="372" width="6" height="6" fill="#41c878"/><rect x="366" y="372" width="6" height="6" fill="#41c873"/><rect x="372" y="372" width="6" height="6" fill="#40c86f"/><rect x="378" y="372" width="6" height="6" fill="#40c86b"/><rect x="384" y="372" width="6" height="6" fill="#40c869"/><rect x="390" y="372" width="6" height="6" fill="#40c867"/><rect x="396" y="372" width="6" height="6" fill="#40c866"/><rect x="402" y="372" width="6" height="6" fill="#40c865"/><rect x="408" y="372" width="6" height="6" fill="#40c865"/><rect x="414" y="372" width="6" height="6" fill="#40c865"/><rect x="420" y="372" width="6" height="6" fill="#40c864"/><rect x="426" y="372" width="6" height="6" fill="#40c864"/><rect x="432" y="372" width="6" height="6" fill="#40c864"/><rect x="438" y="372" width="6" height="6" fill="#40c864"/><rect x="444" y="372" width="6" height="6" fill="#40c864"/><rect x="450" y="372" width="6" height="6" fill="#40c864"/><rect x="456" y="372" width="6" height="6" fill="#40c863"/><rect x="462" y="372" width="6" height="6" fill="#40c863"/><rect x="468" y="372" width="6" height="6" fill="#41c863"/><rect x="474" y="372" width="6" height="6" fill="#42c863"/><rect x="480" y="372" width="6" height="6" fill="#42c863"/><rect x="486" y="372" width="6" height="6" fill="#43c862"/><rect x="492" y="372" width="6" height="6" fill="#44c862"/><rect x="498" y="372" width="6" height="6" fill="#45c862"/><rect x="504" y="372" width="6" height="6" fill="#5dca5a"/><rect x="510" y="372" width="6" height="6" fill="#79cc51"/><rect x="516" y="372" width="6" height="6" fill="#bcd13c"/><rect x="522" y="372" width="6" height="6" fill="#e47b37"/><rect x="528" y="372" width="6" height="6" fill="#e46d35"/><rect x="534" y="372" width="6" height="6" fill="#e46a35"/><rect x="540" y="372" width="6" height="6" fill="#e46835"/><rect x="546" y="372" width="6" height="6" fill="#e46b35"/><rect x="636" y="372" width="6" height="6" fill="#d89538"/><rect x="642" y="372" width="6" height="6" fill="#d89738"/><rect x="648" y="372" width="6" height="6" fill="#40c864"/><rect x="654" y="372" width="6" height="6" fill="#40c865"/><rect x="660" y="372" width="6" height="6" fill="#40c865"/><rect x="666" y="372" width="6" height="6" fill="#40c865"/><rect x="330" y="378" width="6" height="6" fill="#43c88d"/><rect x="336" y="378" width="6" height="6" fill="#43c88b"/><rect x="342" y="378" width="6" height="6" fill="#43c888"/><rect x="348" y="378" width="6" height="6" fill="#42c883"/><rect x="354" y="378" width="6" height="6" fill="#42c87e"/><rect x="360" y="378" width="6" height="6" fill="#41c879"/><rect x="366" y="378" width="6" height="6" fill="#41c874"/><rect x="372" y="378" width="6" height="6" fill="#41c86f"/><rect x="378" y="378" width="6" height="6" fill="#40c86c"/><rect x="384" y="378" width="6" height="6" fill="#40c869"/><rect x="390" y="378" width="6" height="6" fill="#40c867"/><rect x="396" y="378" width="6" height="6" fill="#40c866"/><rect x="402" y="378" width="6" height="6" fill="#40c865"/><rect x="408" y="378" width="6" height="6" fill="#40c864"/><rect x="414" y="378" width="6" height="6" fill="#40c864"/><rect x="420" y="378" width="6" height="6" fill="#40c864"/><rect x="426" y="378" width="6" height="6" fill="#40c864"/><rect x="432" y="378" width="6" height="6" fill="#40c864"/><rect x="438" y="378" width="6" height="6" fill="#40c864"/><rect x="444" y="378" width="6" height="6" fill="#40c863"/><rect x="450" y="378" width="6" height="6" fill="#40c863"/><rect x="456" y="378" width="6" height="6" fill="#41c863"/><rect x="462" y="378" width="6" height="6" fill="#41c863"/><rect x="468" y="378" width="6" height="6" fill="#42c863"/><rect x="474" y="378" width="6" height="6" fill="#44c862"/><rect x="480" y="378" width="6" height="6" fill="#45c862"/><rect x="486" y="378" width="6" height="6" fill="#46c861"/><rect x="492" y="378" width="6" height="6" fill="#47c861"/><rect x="498" y="378" width="6" height="6" fill="#48c861"/><rect x="504" y="378" width="6" height="6" fill="#59ca5b"/><rect x="510" y="378" width="6" height="6" fill="#6fcb55"/><rect x="516" y="378" width="6" height="6" fill="#96ce48"/><rect x="522" y="378" width="6" height="6" fill="#d49e39"/><rect x="528" y="378" width="6" height="6" fill="#e57436"/><rect x="534" y="378" width="6" height="6" fill="#e57036"/><rect x="540" y="378" width="6" height="6" fill="#e46d35"/><rect x="546" y="378" width="6" height="6" fill="#e56f36"/><rect x="624" y="378" width="6" height="6" fill="#d89538"/><rect x="630" y="378" width="6" height="6" fill="#d79738"/><rect x="636" y="378" width="6" height="6" fill="#40c864"/><rect x="642" y="378" width="6" height="6" fill="#40c865"/><rect x="648" y="378" width="6" height="6" fill="#40c865"/><rect x="654" y="378" width="6" height="6" fill="#40c865"/><rect x="660" y="378" width="6" height="6" fill="#40c865"/><rect x="666" y="378" width="6" height="6" fill="#40c866"/><rect x="330" y="384" width="6" height="6" fill="#43c88f"/><rect x="336" y="384" width="6" height="6" fill="#43c88d"/><rect x="342" y="384" width="6" height="6" fill="#43c88a"/><rect x="348" y="384" width="6" height="6" fill="#42c885"/><rect x="354" y="384" width="6" height="6" fill="#42c87f"/><rect x="360" y="384" width="6" height="6" fill="#41c879"/><rect x="366" y="384" width="6" height="6" fill="#41c874"/><rect x="372" y="384" width="6" height="6" fill="#41c870"/><rect x="378" y="384" width="6" height="6" fill="#40c86c"/><rect x="384" y="384" width="6" height="6" fill="#40c869"/><rect x="390" y="384" width="6" height="6" fill="#40c867"/><rect x="396" y="384" width="6" height="6" fill="#40c866"/><rect x="402" y="384" width="6" height="6" fill="#40c865"/><rect x="408" y="384" width="6" height="6" fill="#40c864"/><rect x="414" y="384" width="6" height="6" fill="#40c864"/><rect x="420" y="384" width="6" height="6" fill="#40c864"/><rect x="426" y="384" width="6" height="6" fill="#40c864"/><rect x="432" y="384" width="6" height="6" fill="#40c863"/><rect x="438" y="384" width="6" height="6" fill="#40c863"/><rect x="444" y="384" width="6" height="6" fill="#40c863"/><rect x="450" y="384" width="6" height="6" fill="#41c863"/><rect x="456" y="384" width="6" height="6" fill="#42c863"/><rect x="462" y="384" width="6" height="6" fill="#43c862"/><rect x="468" y="384" width="6" height="6" fill="#44c862"/><rect x="474" y="384" width="6" height="6" fill="#46c861"/><rect x="480" y="384" width="6" height="6" fill="#48c861"/><rect x="486" y="384" width="6" height="6" fill="#4ac860"/><rect x="492" y="384" width="6" height="6" fill="#4cc860"/><rect x="498" y="384" width="6" height="6" fill="#4dc95f"/><rect x="504" y="384" width="6" height="6" fill="#4ec95f"/><rect x="510" y="384" width="6" height="6" fill="#69cb56"/><rect x="516" y="384" width="6" height="6" fill="#84cd4e"/><rect x="522" y="384" width="6" height="6" fill="#c1cb3b"/><rect x="528" y="384" width="6" height="6" fill="#e08337"/><rect x="534" y="384" width="6" height="6" fill="#e57536"/><rect x="540" y="384" width="6" height="6" fill="#e57336"/><rect x="546" y="384" width="6" height="6" fill="#e57236"/><rect x="552" y="384" width="6" height="6" fill="#e57636"/><rect x="612" y="384" width="6" height="6" fill="#d89538"/><rect x="618" y="384" width="6" height="6" fill="#40c864"/><rect x="624" y="384" width="6" height="6" fill="#40c864"/><rect x="630" y="384" width="6" height="6" fill="#40c864"/><rect x="636" y="384" width="6" height="6" fill="#40c865"/><rect x="642" y="384" width="6" height="6" fill="#40c865"/><rect x="648" y="384" width="6" height="6" fill="#40c865"/><rect x="654" y="384" width="6" height="6" fill="#40c866"/><rect x="660" y="384" width="6" height="6" fill="#40c866"/><rect x="666" y="384" width="6" height="6" fill="#40c866"/><rect x="324" y="390" width="6" height="6" fill="#43c891"/><rect x="330" y="390" width="6" height="6" fill="#43c891"/><rect x="336" y="390" width="6" height="6" fill="#43c88f"/><rect x="342" y="390" width="6" height="6" fill="#43c88b"/><rect x="348" y="390" width="6" height="6" fill="#42c886"/><rect x="354" y="390" width="6" height="6" fill="#42c880"/><rect x="360" y="390" width="6" height="6" fill="#41c87a"/><rect x="366" y="390" width="6" height="6" fill="#41c875"/><rect x="372" y="390" width="6" height="6" fill="#41c870"/><rect x="378" y="390" width="6" height="6" fill="#40c86c"/><rect x="384" y="390" width="6" height="6" fill="#40c869"/><rect x="390" y="390" width="6" height="6" fill="#40c867"/><rect x="396" y="390" width="6" height="6" fill="#40c866"/><rect x="402" y="390" width="6" height="6" fill="#40c865"/><rect x="408" y="390" width="6" height="6" fill="#40c864"/><rect x="414" y="390" width="6" height="6" fill="#40c864"/><rect x="420" y="390" width="6" height="6" fill="#40c864"/><rect x="426" y="390" width="6" height="6" fill="#40c863"/><rect x="432" y="390" width="6" height="6" fill="#40c863"/><rect x="438" y="390" width="6" height="6" fill="#40c863"/><rect x="444" y="390" width="6" height="6" fill="#41c863"/><rect x="450" y="390" width="6" height="6" fill="#42c863"/><rect x="456" y="390" width="6" height="6" fill="#43c862"/><rect x="462" y="390" width="6" height="6" fill="#45c862"/><rect x="468" y="390" width="6" height="6" fill="#47c861"/><rect x="474" y="390" width="6" height="6" fill="#49c860"/><rect x="480" y="390" width="6" height="6" fill="#4cc860"/><rect x="486" y="390" width="6" height="6" fill="#4ec95f"/><rect x="492" y="390" width="6" height="6" fill="#51c95e"/><rect x="498" y="390" width="6" height="6" fill="#53c95d"/><rect x="504" y="390" width="6" height="6" fill="#54c95d"/><rect x="510" y="390" width="6" height="6" fill="#66cb57"/><rect x="516" y="390" width="6" height="6" fill="#7ccc50"/><rect x="522" y="390" width="6" height="6" fill="#a2cf44"/><rect x="528" y="390" width="6" height="6" fill="#d49e39"/><rect x="534" y="390" width="6" height="6" fill="#e37e37"/><rect x="540" y="390" width="6" height="6" fill="#e57736"/><rect x="546" y="390" width="6" height="6" fill="#e57536"/><rect x="552" y="390" width="6" height="6" fill="#e57937"/><rect x="594" y="390" width="6" height="6" fill="#d99338"/><rect x="600" y="390" width="6" height="6" fill="#d89538"/><rect x="606" y="390" width="6" height="6" fill="#40c864"/><rect x="612" y="390" width="6" height="6" fill="#40c864"/><rect x="618" y="390" width="6" height="6" fill="#40c864"/><rect x="624" y="390" width="6" height="6" fill="#40c864"/><rect x="630" y="390" width="6" height="6" fill="#40c865"/><rect x="636" y="390" width="6" height="6" fill="#40c865"/><rect x="642" y="390" width="6" height="6" fill="#40c866"/><rect x="648" y="390" width="6" height="6" fill="#40c866"/><rect x="654" y="390" width="6" height="6" fill="#40c867"/><rect x="660" y="390" width="6" height="6" fill="#40c867"/><rect x="666" y="390" width="6" height="6" fill="#40c868"/><rect x="672" y="390" width="6" height="6" fill="#40c868"/><rect x="324" y="396" width="6" height="6" fill="#44c893"/><rect x="330" y="396" width="6" height="6" fill="#44c893"/><rect x="336" y="396" width="6" height="6" fill="#43c890"/><rect x="342" y="396" width="6" height="6" fill="#43c88d"/><rect x="348" y="396" width="6" height="6" fill="#43c887"/><rect x="354" y="396" width="6" height="6" fill="#42c881"/><rect x="360" y="396" width="6" height="6" fill="#42c87b"/><rect x="366" y="396" width="6" height="6" fill="#41c875"/><rect x="372" y="396" width="6" height="6" fill="#41c871"/><rect x="378" y="396" width="6" height="6" fill="#40c86d"/><rect x="384" y="396" width="6" height="6" fill="#40c869"/><rect x="390" y="396" width="6" height="6" fill="#40c867"/><rect x="396" y="396" width="6" height="6" fill="#40c866"/><rect x="402" y="396" width="6" height="6" fill="#40c865"/><rect x="408" y="396" width="6" height="6" fill="#40c864"/><rect x="414" y="396" width="6" height="6" fill="#40c864"/><rect x="420" y="396" width="6" height="6" fill="#40c864"/><rect x="426" y="396" width="6" height="6" fill="#40c863"/><rect x="432" y="396" width="6" height="6" fill="#40c863"/><rect x="438" y="396" width="6" height="6" fill="#41c863"/><rect x="444" y="396" width="6" height="6" fill="#42c863"/><rect x="450" y="396" width="6" height="6" fill="#43c862"/><rect x="456" y="396" width="6" height="6" fill="#44c862"/><rect x="462" y="396" width="6" height="6" fill="#47c861"/><rect x="468" y="396" width="6" height="6" fill="#49c860"/><rect x="474" y="396" width="6" height="6" fill="#4cc95f"/><rect x="480" y="396" width="6" height="6" fill="#50c95e"/><rect x="486" y="396" width="6" height="6" fill="#53c95d"/><rect x="492" y="396" width="6" height="6" fill="#56c95c"/><rect x="498" y="396" width="6" height="6" fill="#59ca5b"/><rect x="504" y="396" width="6" height="6" fill="#5bca5b"/><rect x="510" y="396" width="6" height="6" fill="#5cca5a"/><rect x="516" y="396" width="6" height="6" fill="#78cc52"/><rect x="522" y="396" width="6" height="6" fill="#92ce49"/><rect x="528" y="396" width="6" height="6" fill="#c4c23b"/><rect x="534" y="396" width="6" height="6" fill="#dd8a38"/><rect x="540" y="396" width="6" height="6" fill="#e27f37"/><rect x="546" y="396" width="6" height="6" fill="#e47b37"/><rect x="552" y="396" width="6" height="6" fill="#e37d37"/><rect x="558" y="396" width="6" height="6" fill="#e08337"/><rect x="582" y="396" width="6" height="6" fill="#da9238"/><rect x="588" y="396" width="6" height="6" fill="#d89538"/><rect x="594" y="396" width="6" height="6" fill="#40c863"/><rect x="600" y="396" width="6" height="6" fill="#40c863"/><rect x="606" y="396" width="6" height="6" fill="#40c864"/><rect x="612" y="396" width="6" height="6" fill="#40c864"/><rect x="618" y="396" width="6" height="6" fill="#40c864"/><rect x="624" y="396" width="6" height="6" fill="#40c865"/><rect x="630" y="396" width="6" height="6" fill="#40c865"/><rect x="636" y="396" width="6" height="6" fill="#40c866"/><rect x="642" y="396" width="6" height="6" fill="#40c867"/><rect x="648" y="396" width="6" height="6" fill="#40c867"/><rect x="654" y="396" width="6" height="6" fill="#40c868"/><rect x="660" y="396" width="6" height="6" fill="#40c869"/><rect x="666" y="396" width="6" height="6" fill="#40c869"/><rect x="672" y="396" width="6" height="6" fill="#40c869"/><rect x="324" y="402" width="6" height="6" fill="#44c897"/><rect x="330" y="402" width="6" height="6" fill="#44c897"/><rect x="336" y="402" width="6" height="6" fill="#44c894"/><rect x="342" y="402" width="6" height="6" fill="#43c890"/><rect x="348" y="402" width="6" height="6" fill="#43c88b"/><rect x="354" y="402" width="6" height="6" fill="#42c885"/><rect x="360" y="402" width="6" height="6" fill="#42c87e"/><rect x="366" y="402" width="6" height="6" fill="#41c878"/><rect x="372" y="402" width="6" height="6" fill="#41c873"/><rect x="378" y="402" width="6" height="6" fill="#41c86f"/><rect x="384" y="402" width="6" height="6" fill="#40c86c"/><rect x="390" y="402" width="6" height="6" fill="#40c86a"/><rect x="396" y="402" width="6" height="6" fill="#40c868"/><rect x="402" y="402" width="6" height="6" fill="#40c867"/><rect x="408" y="402" width="6" height="6" fill="#40c867"/><rect x="414" y="402" width="6" height="6" fill="#40c866"/><rect x="420" y="402" width="6" height="6" fill="#40c866"/><rect x="426" y="402" width="6" height="6" fill="#40c865"/><rect x="432" y="402" width="6" height="6" fill="#40c865"/><rect x="438" y="402" width="6" height="6" fill="#40c864"/><rect x="444" y="402" width="6" height="6" fill="#40c864"/><rect x="450" y="402" width="6" height="6" fill="#41c863"/><rect x="456" y="402" width="6" height="6" fill="#43c862"/><rect x="462" y="402" width="6" height="6" fill="#46c861"/><rect x="468" y="402" width="6" height="6" fill="#49c860"/><rect x="474" y="402" width="6" height="6" fill="#4dc95f"/><rect x="480" y="402" width="6" height="6" fill="#51c95e"/><rect x="486" y="402" width="6" height="6" fill="#56c95c"/><rect x="492" y="402" width="6" height="6" fill="#5aca5b"/><rect x="498" y="402" width="6" height="6" fill="#5dca5a"/><rect x="504" y="402" width="6" height="6" fill="#60ca59"/><rect x="510" y="402" width="6" height="6" fill="#61ca59"/><rect x="516" y="402" width="6" height="6" fill="#74cc53"/><rect x="522" y="402" width="6" height="6" fill="#89cd4c"/><rect x="528" y="402" width="6" height="6" fill="#aed040"/><rect x="534" y="402" width="6" height="6" fill="#d49f39"/><rect x="540" y="402" width="6" height="6" fill="#df8637"/><rect x="546" y="402" width="6" height="6" fill="#e18137"/><rect x="552" y="402" width="6" height="6" fill="#e28037"/><rect x="558" y="402" width="6" height="6" fill="#df8737"/><rect x="570" y="402" width="6" height="6" fill="#da9038"/><rect x="576" y="402" width="6" height="6" fill="#d99438"/><rect x="582" y="402" width="6" height="6" fill="#41c863"/><rect x="588" y="402" width="6" height="6" fill="#40c863"/><rect x="594" y="402" width="6" height="6" fill="#40c863"/><rect x="600" y="402" width="6" height="6" fill="#40c864"/><rect x="606" y="402" width="6" height="6" fill="#40c864"/><rect x="612" y="402" width="6" height="6" fill="#40c864"/><rect x="618" y="402" width="6" height="6" fill="#40c865"/><rect x="624" y="402" width="6" height="6" fill="#40c865"/><rect x="630" y="402" width="6" height="6" fill="#40c866"/><rect x="636" y="402" width="6" height="6" fill="#40c867"/><rect x="642" y="402" width="6" height="6" fill="#40c868"/><rect x="648" y="402" width="6" height="6" fill="#40c869"/><rect x="654" y="402" width="6" height="6" fill="#40c86a"/><rect x="660" y="402" width="6" height="6" fill="#40c86a"/><rect x="666" y="402" width="6" height="6" fill="#40c86b"/><rect x="672" y="402" width="6" height="6" fill="#40c86b"/><rect x="324" y="408" width="6" height="6" fill="#44c89b"/><rect x="330" y="408" width="6" height="6" fill="#44c89b"/><rect x="336" y="408" width="6" height="6" fill="#44c899"/><rect x="342" y="408" width="6" height="6" fill="#44c894"/><rect x="348" y="408" width="6" height="6" fill="#43c88f"/><rect x="354" y="408" width="6" height="6" fill="#43c888"/><rect x="360" y="408" width="6" height="6" fill="#42c882"/><rect x="366" y="408" width="6" height="6" fill="#42c87c"/><rect x="372" y="408" width="6" height="6" fill="#41c877"/><rect x="378" y="408" width="6" height="6" fill="#41c872"/><rect x="384" y="408" width="6" height="6" fill="#40c86f"/><rect x="390" y="408" width="6" height="6" fill="#40c86d"/><rect x="396" y="408" width="6" height="6" fill="#40c86b"/><rect x="402" y="408" width="6" height="6" fill="#40c86a"/><rect x="408" y="408" width="6" height="6" fill="#40c869"/><rect x="414" y="408" width="6" height="6" fill="#40c869"/><rect x="420" y="408" width="6" height="6" fill="#40c869"/><rect x="426" y="408" width="6" height="6" fill="#40c868"/><rect x="432" y="408" width="6" height="6" fill="#40c868"/><rect x="438" y="408" width="6" height="6" fill="#40c867"/><rect x="444" y="408" width="6" height="6" fill="#40c866"/><rect x="450" y="408" width="6" height="6" fill="#40c864"/><rect x="456" y="408" width="6" height="6" fill="#41c863"/><rect x="462" y="408" width="6" height="6" fill="#45c862"/><rect x="468" y="408" width="6" height="6" fill="#49c861"/><rect x="474" y="408" width="6" height="6" fill="#4dc95f"/><rect x="480" y="408" width="6" height="6" fill="#52c95e"/><rect x="486" y="408" width="6" height="6" fill="#58c95c"/><rect x="492" y="408" width="6" height="6" fill="#5dca5a"/><rect x="498" y="408" width="6" height="6" fill="#61ca59"/><rect x="504" y="408" width="6" height="6" fill="#64ca58"/><rect x="510" y="408" width="6" height="6" fill="#65cb57"/><rect x="516" y="408" width="6" height="6" fill="#65cb57"/><rect x="522" y="408" width="6" height="6" fill="#82cd4e"/><rect x="528" y="408" width="6" height="6" fill="#9ccf46"/><rect x="534" y="408" width="6" height="6" fill="#c7bd3a"/><rect x="540" y="408" width="6" height="6" fill="#db8f38"/><rect x="546" y="408" width="6" height="6" fill="#df8537"/><rect x="552" y="408" width="6" height="6" fill="#e08437"/><rect x="558" y="408" width="6" height="6" fill="#de8937"/><rect x="564" y="408" width="6" height="6" fill="#db9038"/><rect x="570" y="408" width="6" height="6" fill="#44c862"/><rect x="576" y="408" width="6" height="6" fill="#42c863"/><rect x="582" y="408" width="6" height="6" fill="#40c863"/><rect x="588" y="408" width="6" height="6" fill="#40c863"/><rect x="594" y="408" width="6" height="6" fill="#40c864"/><rect x="600" y="408" width="6" height="6" fill="#40c864"/><rect x="606" y="408" width="6" height="6" fill="#40c865"/><rect x="612" y="408" width="6" height="6" fill="#40c865"/><rect x="618" y="408" width="6" height="6" fill="#40c865"/><rect x="624" y="408" width="6" height="6" fill="#40c866"/><rect x="630" y="408" width="6" height="6" fill="#40c867"/><rect x="636" y="408" width="6" height="6" fill="#40c868"/><rect x="642" y="408" width="6" height="6" fill="#40c869"/><rect x="648" y="408" width="6" height="6" fill="#40c86a"/><rect x="654" y="408" width="6" height="6" fill="#40c86b"/><rect x="660" y="408" width="6" height="6" fill="#40c86d"/><rect x="666" y="408" width="6" height="6" fill="#40c86d"/><rect x="672" y="408" width="6" height="6" fill="#40c86e"/><rect x="678" y="408" width="6" height="6" fill="#40c86e"/><rect x="324" y="414" width="6" height="6" fill="#45c89f"/><rect x="330" y="414" width="6" height="6" fill="#45c89f"/><rect x="336" y="414" width="6" height="6" fill="#44c89d"/><rect x="342" y="414" width="6" height="6" fill="#44c898"/><rect x="348" y="414" width="6" height="6" fill="#44c893"/><rect x="354" y="414" width="6" height="6" fill="#43c88c"/><rect x="360" y="414" width="6" height="6" fill="#42c885"/><rect x="366" y="414" width="6" height="6" fill="#42c87f"/><rect x="372" y="414" width="6" height="6" fill="#41c87a"/><rect x="378" y="414" width="6" height="6" fill="#41c875"/><rect x="384" y="414" width="6" height="6" fill="#41c872"/><rect x="390" y="414" width="6" height="6" fill="#41c870"/><rect x="396" y="414" width="6" height="6" fill="#40c86e"/><rect x="402" y="414" width="6" height="6" fill="#40c86d"/><rect x="408" y="414" width="6" height="6" fill="#40c86c"/><rect x="414" y="414" width="6" height="6" fill="#40c86c"/><rect x="420" y="414" width="6" height="6" fill="#40c86b"/><rect x="426" y="414" width="6" height="6" fill="#40c86b"/><rect x="432" y="414" width="6" height="6" fill="#40c86a"/><rect x="438" y="414" width="6" height="6" fill="#40c86a"/><rect x="444" y="414" width="6" height="6" fill="#40c868"/><rect x="450" y="414" width="6" height="6" fill="#40c866"/><rect x="456" y="414" width="6" height="6" fill="#40c864"/><rect x="462" y="414" width="6" height="6" fill="#43c862"/><rect x="468" y="414" width="6" height="6" fill="#47c861"/><rect x="474" y="414" width="6" height="6" fill="#4dc95f"/><rect x="480" y="414" width="6" height="6" fill="#52c95e"/><rect x="486" y="414" width="6" height="6" fill="#58c95c"/><rect x="492" y="414" width="6" height="6" fill="#5eca5a"/><rect x="498" y="414" width="6" height="6" fill="#63ca58"/><rect x="504" y="414" width="6" height="6" fill="#66cb57"/><rect x="510" y="414" width="6" height="6" fill="#68cb57"/><rect x="516" y="414" width="6" height="6" fill="#68cb57"/><rect x="522" y="414" width="6" height="6" fill="#7bcc51"/><rect x="528" y="414" width="6" height="6" fill="#90ce4a"/><rect x="534" y="414" width="6" height="6" fill="#b6d13e"/><rect x="540" y="414" width="6" height="6" fill="#d59e39"/><rect x="546" y="414" width="6" height="6" fill="#de8837"/><rect x="552" y="414" width="6" height="6" fill="#5dca5a"/><rect x="558" y="414" width="6" height="6" fill="#51c95e"/><rect x="564" y="414" width="6" height="6" fill="#49c861"/><rect x="570" y="414" width="6" height="6" fill="#44c862"/><rect x="576" y="414" width="6" height="6" fill="#41c863"/><rect x="582" y="414" width="6" height="6" fill="#40c863"/><rect x="588" y="414" width="6" height="6" fill="#40c864"/><rect x="594" y="414" width="6" height="6" fill="#40c865"/><rect x="600" y="414" width="6" height="6" fill="#40c865"/><rect x="606" y="414" width="6" height="6" fill="#40c865"/><rect x="612" y="414" width="6" height="6" fill="#40c866"/><rect x="618" y="414" width="6" height="6" fill="#40c866"/><rect x="624" y="414" width="6" height="6" fill="#40c867"/><rect x="630" y="414" width="6" height="6" fill="#40c868"/><rect x="636" y="414" width="6" height="6" fill="#40c869"/><rect x="642" y="414" width="6" height="6" fill="#40c86a"/><rect x="648" y="414" width="6" height="6" fill="#40c86c"/><rect x="654" y="414" width="6" height="6" fill="#40c86e"/><rect x="660" y="414" width="6" height="6" fill="#41c86f"/><rect x="666" y="414" width="6" height="6" fill="#41c871"/><rect x="672" y="414" width="6" height="6" fill="#41c871"/><rect x="678" y="414" width="6" height="6" fill="#41c871"/><rect x="324" y="420" width="6" height="6" fill="#45c8a3"/><rect x="330" y="420" width="6" height="6" fill="#45c8a3"/><rect x="336" y="420" width="6" height="6" fill="#45c8a1"/><rect x="342" y="420" width="6" height="6" fill="#44c89c"/><rect x="348" y="420" width="6" height="6" fill="#44c896"/><rect x="354" y="420" width="6" height="6" fill="#43c890"/><rect x="360" y="420" width="6" height="6" fill="#43c889"/><rect x="366" y="420" width="6" height="6" fill="#42c882"/><rect x="372" y="420" width="6" height="6" fill="#42c87d"/><rect x="378" y="420" width="6" height="6" fill="#41c878"/><rect x="384" y="420" width="6" height="6" fill="#41c875"/><rect x="390" y="420" width="6" height="6" fill="#41c872"/><rect x="396" y="420" width="6" height="6" fill="#41c871"/><rect x="402" y="420" width="6" height="6" fill="#41c870"/><rect x="408" y="420" width="6" height="6" fill="#40c86f"/><rect x="414" y="420" width="6" height="6" fill="#40c86e"/><rect x="420" y="420" width="6" height="6" fill="#40c86e"/><rect x="426" y="420" width="6" height="6" fill="#40c86e"/><rect x="432" y="420" width="6" height="6" fill="#40c86d"/><rect x="438" y="420" width="6" height="6" fill="#40c86c"/><rect x="444" y="420" width="6" height="6" fill="#40c86b"/><rect x="450" y="420" width="6" height="6" fill="#40c869"/><rect x="456" y="420" width="6" height="6" fill="#40c866"/><rect x="462" y="420" width="6" height="6" fill="#40c863"/><rect x="468" y="420" width="6" height="6" fill="#45c862"/><rect x="474" y="420" width="6" height="6" fill="#4bc860"/><rect x="480" y="420" width="6" height="6" fill="#51c95e"/><rect x="486" y="420" width="6" height="6" fill="#57c95c"/><rect x="492" y="420" width="6" height="6" fill="#5dca5a"/><rect x="498" y="420" width="6" height="6" fill="#62ca58"/><rect x="504" y="420" width="6" height="6" fill="#66cb57"/><rect x="510" y="420" width="6" height="6" fill="#68cb57"/><rect x="516" y="420" width="6" height="6" fill="#68cb57"/><rect x="522" y="420" width="6" height="6" fill="#73cc53"/><rect x="528" y="420" width="6" height="6" fill="#84cd4e"/><rect x="534" y="420" width="6" height="6" fill="#a0cf45"/><rect x="540" y="420" width="6" height="6" fill="#69cb56"/><rect x="546" y="420" width="6" height="6" fill="#6ccb55"/><rect x="552" y="420" width="6" height="6" fill="#67cb57"/><rect x="558" y="420" width="6" height="6" fill="#59ca5b"/><rect x="564" y="420" width="6" height="6" fill="#4cc860"/><rect x="570" y="420" width="6" height="6" fill="#44c862"/><rect x="576" y="420" width="6" height="6" fill="#41c863"/><rect x="582" y="420" width="6" height="6" fill="#40c864"/><rect x="588" y="420" width="6" height="6" fill="#40c865"/><rect x="594" y="420" width="6" height="6" fill="#40c865"/><rect x="600" y="420" width="6" height="6" fill="#40c866"/><rect x="606" y="420" width="6" height="6" fill="#40c866"/><rect x="612" y="420" width="6" height="6" fill="#40c866"/><rect x="618" y="420" width="6" height="6" fill="#40c867"/><rect x="624" y="420" width="6" height="6" fill="#40c868"/><rect x="630" y="420" width="6" height="6" fill="#40c869"/><rect x="636" y="420" width="6" height="6" fill="#40c86a"/><rect x="642" y="420" width="6" height="6" fill="#40c86c"/><rect x="648" y="420" width="6" height="6" fill="#40c86e"/><rect x="654" y="420" width="6" height="6" fill="#41c871"/><rect x="660" y="420" width="6" height="6" fill="#41c873"/><rect x="666" y="420" width="6" height="6" fill="#41c874"/><rect x="672" y="420" width="6" height="6" fill="#41c875"/><rect x="678" y="420" width="6" height="6" fill="#41c875"/><rect x="324" y="426" width="6" height="6" fill="#45c8a7"/><rect x="330" y="426" width="6" height="6" fill="#45c8a7"/><rect x="336" y="426" width="6" height="6" fill="#45c8a5"/><rect x="342" y="426" width="6" height="6" fill="#45c8a0"/><rect x="348" y="426" width="6" height="6" fill="#44c89a"/><rect x="354" y="426" width="6" height="6" fill="#44c893"/><rect x="360" y="426" width="6" height="6" fill="#43c88c"/><rect x="366" y="426" width="6" height="6" fill="#42c886"/><rect x="372" y="426" width="6" height="6" fill="#42c880"/><rect x="378" y="426" width="6" height="6" fill="#42c87b"/><rect x="384" y="426" width="6" height="6" fill="#41c878"/><rect x="390" y="426" width="6" height="6" fill="#41c875"/><rect x="396" y="426" width="6" height="6" fill="#41c874"/><rect x="402" y="426" width="6" height="6" fill="#41c872"/><rect x="408" y="426" width="6" height="6" fill="#41c872"/><rect x="414" y="426" width="6" height="6" fill="#41c871"/><rect x="420" y="426" width="6" height="6" fill="#41c871"/><rect x="426" y="426" width="6" height="6" fill="#41c870"/><rect x="432" y="426" width="6" height="6" fill="#41c870"/><rect x="438" y="426" width="6" height="6" fill="#40c86f"/><rect x="444" y="426" width="6" height="6" fill="#40c86d"/><rect x="450" y="426" width="6" height="6" fill="#40c86b"/><rect x="456" y="426" width="6" height="6" fill="#40c869"/><rect x="462" y="426" width="6" height="6" fill="#40c865"/><rect x="468" y="426" width="6" height="6" fill="#42c863"/><rect x="474" y="426" width="6" height="6" fill="#48c861"/><rect x="480" y="426" width="6" height="6" fill="#4ec95f"/><rect x="486" y="426" width="6" height="6" fill="#54c95d"/><rect x="492" y="426" width="6" height="6" fill="#5aca5b"/><rect x="498" y="426" width="6" height="6" fill="#60ca59"/><rect x="504" y="426" width="6" height="6" fill="#63ca58"/><rect x="510" y="426" width="6" height="6" fill="#65cb57"/><rect x="516" y="426" width="6" height="6" fill="#66cb57"/><rect x="522" y="426" width="6" height="6" fill="#64ca58"/><rect x="528" y="426" width="6" height="6" fill="#62ca59"/><rect x="534" y="426" width="6" height="6" fill="#61ca59"/><rect x="540" y="426" width="6" height="6" fill="#67cb57"/><rect x="546" y="426" width="6" height="6" fill="#70cb54"/><rect x="552" y="426" width="6" height="6" fill="#71cb54"/><rect x="558" y="426" width="6" height="6" fill="#64ca58"/><rect x="564" y="426" width="6" height="6" fill="#51c95e"/><rect x="570" y="426" width="6" height="6" fill="#45c862"/><rect x="576" y="426" width="6" height="6" fill="#40c863"/><rect x="582" y="426" width="6" height="6" fill="#40c865"/><rect x="588" y="426" width="6" height="6" fill="#40c865"/><rect x="594" y="426" width="6" height="6" fill="#40c866"/><rect x="600" y="426" width="6" height="6" fill="#40c866"/><rect x="606" y="426" width="6" height="6" fill="#40c867"/><rect x="612" y="426" width="6" height="6" fill="#40c867"/><rect x="618" y="426" width="6" height="6" fill="#40c868"/><rect x="624" y="426" width="6" height="6" fill="#40c869"/><rect x="630" y="426" width="6" height="6" fill="#40c86a"/><rect x="636" y="426" width="6" height="6" fill="#40c86c"/><rect x="642" y="426" width="6" height="6" fill="#40c86e"/><rect x="648" y="426" width="6" height="6" fill="#41c871"/><rect x="654" y="426" width="6" height="6" fill="#41c874"/><rect x="660" y="426" width="6" height="6" fill="#41c877"/><rect x="666" y="426" width="6" height="6" fill="#41c879"/><rect x="672" y="426" width="6" height="6" fill="#41c87a"/><rect x="678" y="426" width="6" height="6" fill="#41c87a"/><rect x="684" y="426" width="6" height="6" fill="#41c879"/><rect x="324" y="432" width="6" height="6" fill="#45c7aa"/><rect x="330" y="432" width="6" height="6" fill="#45c7aa"/><rect x="336" y="432" width="6" height="6" fill="#45c8a8"/><rect x="342" y="432" width="6" height="6" fill="#45c8a4"/><rect x="348" y="432" width="6" height="6" fill="#44c89e"/><rect x="354" y="432" width="6" height="6" fill="#44c897"/><rect x="360" y="432" width="6" height="6" fill="#43c890"/><rect x="366" y="432" width="6" height="6" fill="#43c889"/><rect x="372" y="432" width="6" height="6" fill="#42c883"/><rect x="378" y="432" width="6" height="6" fill="#42c87e"/><rect x="384" y="432" width="6" height="6" fill="#41c87b"/><rect x="390" y="432" width="6" height="6" fill="#41c878"/><rect x="396" y="432" width="6" height="6" fill="#41c876"/><rect x="402" y="432" width="6" height="6" fill="#41c875"/><rect x="408" y="432" width="6" height="6" fill="#41c875"/><rect x="414" y="432" width="6" height="6" fill="#41c874"/><rect x="420" y="432" width="6" height="6" fill="#41c874"/><rect x="426" y="432" width="6" height="6" fill="#41c873"/><rect x="432" y="432" width="6" height="6" fill="#41c873"/><rect x="438" y="432" width="6" height="6" fill="#41c872"/><rect x="444" y="432" width="6" height="6" fill="#41c870"/><rect x="450" y="432" width="6" height="6" fill="#40c86e"/><rect x="456" y="432" width="6" height="6" fill="#40c86c"/><rect x="462" y="432" width="6" height="6" fill="#40c868"/><rect x="468" y="432" width="6" height="6" fill="#40c864"/><rect x="474" y="432" width="6" height="6" fill="#44c862"/><rect x="480" y="432" width="6" height="6" fill="#4ac860"/><rect x="486" y="432" width="6" height="6" fill="#50c95e"/><rect x="492" y="432" width="6" height="6" fill="#56c95d"/><rect x="498" y="432" width="6" height="6" fill="#5aca5b"/><rect x="504" y="432" width="6" height="6" fill="#5eca5a"/><rect x="510" y="432" width="6" height="6" fill="#60ca59"/><rect x="516" y="432" width="6" height="6" fill="#60ca59"/><rect x="522" y="432" width="6" height="6" fill="#5fca59"/><rect x="528" y="432" width="6" height="6" fill="#5dca5a"/><rect x="534" y="432" width="6" height="6" fill="#5cca5b"/><rect x="540" y="432" width="6" height="6" fill="#61ca59"/><rect x="546" y="432" width="6" height="6" fill="#6ecb55"/><rect x="552" y="432" width="6" height="6" fill="#79cc51"/><rect x="558" y="432" width="6" height="6" fill="#70cb54"/><rect x="564" y="432" width="6" height="6" fill="#5bca5b"/><rect x="570" y="432" width="6" height="6" fill="#48c861"/><rect x="576" y="432" width="6" height="6" fill="#40c863"/><rect x="582" y="432" width="6" height="6" fill="#40c865"/><rect x="588" y="432" width="6" height="6" fill="#40c866"/><rect x="594" y="432" width="6" height="6" fill="#40c867"/><rect x="600" y="432" width="6" height="6" fill="#40c867"/><rect x="606" y="432" width="6" height="6" fill="#40c867"/><rect x="612" y="432" width="6" height="6" fill="#40c868"/><rect x="618" y="432" width="6" height="6" fill="#40c869"/><rect x="624" y="432" width="6" height="6" fill="#40c86a"/><rect x="630" y="432" width="6" height="6" fill="#40c86c"/><rect x="636" y="432" width="6" height="6" fill="#40c86e"/><rect x="642" y="432" width="6" height="6" fill="#41c871"/><rect x="648" y="432" width="6" height="6" fill="#41c875"/><rect x="654" y="432" width="6" height="6" fill="#41c879"/><rect x="660" y="432" width="6" height="6" fill="#42c87d"/><rect x="666" y="432" width="6" height="6" fill="#42c880"/><rect x="672" y="432" width="6" height="6" fill="#42c881"/><rect x="678" y="432" width="6" height="6" fill="#42c880"/><rect x="684" y="432" width="6" height="6" fill="#42c87e"/><rect x="324" y="438" width="6" height="6" fill="#45c6ab"/><rect x="330" y="438" width="6" height="6" fill="#45c6ab"/><rect x="336" y="438" width="6" height="6" fill="#45c6ab"/><rect x="342" y="438" width="6" height="6" fill="#45c8a7"/><rect x="348" y="438" width="6" height="6" fill="#45c8a1"/><rect x="354" y="438" width="6" height="6" fill="#44c89a"/><rect x="360" y="438" width="6" height="6" fill="#44c893"/><rect x="366" y="438" width="6" height="6" fill="#43c88c"/><rect x="372" y="438" width="6" height="6" fill="#42c886"/><rect x="378" y="438" width="6" height="6" fill="#42c881"/><rect x="384" y="438" width="6" height="6" fill="#42c87e"/><rect x="390" y="438" width="6" height="6" fill="#42c87b"/><rect x="396" y="438" width="6" height="6" fill="#41c879"/><rect x="402" y="438" width="6" height="6" fill="#41c878"/><rect x="408" y="438" width="6" height="6" fill="#41c877"/><rect x="414" y="438" width="6" height="6" fill="#41c877"/><rect x="420" y="438" width="6" height="6" fill="#41c877"/><rect x="426" y="438" width="6" height="6" fill="#41c876"/><rect x="432" y="438" width="6" height="6" fill="#41c876"/><rect x="438" y="438" width="6" height="6" fill="#41c875"/><rect x="444" y="438" width="6" height="6" fill="#41c873"/><rect x="450" y="438" width="6" height="6" fill="#41c871"/><rect x="456" y="438" width="6" height="6" fill="#40c86f"/><rect x="462" y="438" width="6" height="6" fill="#40c86c"/><rect x="468" y="438" width="6" height="6" fill="#40c868"/><rect x="474" y="438" width="6" height="6" fill="#40c864"/><rect x="480" y="438" width="6" height="6" fill="#44c862"/><rect x="486" y="438" width="6" height="6" fill="#4ac860"/><rect x="492" y="438" width="6" height="6" fill="#4fc95f"/><rect x="498" y="438" width="6" height="6" fill="#53c95d"/><rect x="504" y="438" width="6" height="6" fill="#57c95c"/><rect x="510" y="438" width="6" height="6" fill="#59ca5b"/><rect x="516" y="438" width="6" height="6" fill="#59ca5b"/><rect x="522" y="438" width="6" height="6" fill="#58c95c"/><rect x="528" y="438" width="6" height="6" fill="#56c95c"/><rect x="534" y="438" width="6" height="6" fill="#54c95d"/><rect x="540" y="438" width="6" height="6" fill="#58c95c"/><rect x="546" y="438" width="6" height="6" fill="#67cb57"/><rect x="552" y="438" width="6" height="6" fill="#7acc51"/><rect x="558" y="438" width="6" height="6" fill="#7bcc50"/><rect x="564" y="438" width="6" height="6" fill="#67cb57"/><rect x="570" y="438" width="6" height="6" fill="#4ec95f"/><rect x="576" y="438" width="6" height="6" fill="#40c863"/><rect x="582" y="438" width="6" height="6" fill="#40c867"/><rect x="588" y="438" width="6" height="6" fill="#40c868"/><rect x="594" y="438" width="6" height="6" fill="#40c869"/><rect x="600" y="438" width="6" height="6" fill="#40c869"/><rect x="606" y="438" width="6" height="6" fill="#40c86a"/><rect x="612" y="438" width="6" height="6" fill="#40c86a"/><rect x="618" y="438" width="6" height="6" fill="#40c86b"/><rect x="624" y="438" width="6" height="6" fill="#40c86c"/><rect x="630" y="438" width="6" height="6" fill="#40c86e"/><rect x="636" y="438" width="6" height="6" fill="#41c870"/><rect x="642" y="438" width="6" height="6" fill="#41c874"/><rect x="648" y="438" width="6" height="6" fill="#41c879"/><rect x="654" y="438" width="6" height="6" fill="#42c87f"/><rect x="660" y="438" width="6" height="6" fill="#42c884"/><rect x="666" y="438" width="6" height="6" fill="#43c888"/><rect x="672" y="438" width="6" height="6" fill="#43c889"/><rect x="678" y="438" width="6" height="6" fill="#43c888"/><rect x="684" y="438" width="6" height="6" fill="#42c885"/><rect x="324" y="444" width="6" height="6" fill="#45c4ad"/><rect x="330" y="444" width="6" height="6" fill="#45c4ad"/><rect x="336" y="444" width="6" height="6" fill="#45c5ac"/><rect x="342" y="444" width="6" height="6" fill="#45c7aa"/><rect x="348" y="444" width="6" height="6" fill="#45c8a5"/><rect x="354" y="444" width="6" height="6" fill="#44c89d"/><rect x="360" y="444" width="6" height="6" fill="#44c896"/><rect x="366" y="444" width="6" height="6" fill="#43c88f"/><rect x="372" y="444" width="6" height="6" fill="#43c889"/><rect x="378" y="444" width="6" height="6" fill="#42c884"/><rect x="384" y="444" width="6" height="6" fill="#42c881"/><rect x="390" y="444" width="6" height="6" fill="#42c87e"/><rect x="396" y="444" width="6" height="6" fill="#42c87c"/><rect x="402" y="444" width="6" height="6" fill="#42c87b"/><rect x="408" y="444" width="6" height="6" fill="#41c87a"/><rect x="414" y="444" width="6" height="6" fill="#41c87a"/><rect x="420" y="444" width="6" height="6" fill="#41c879"/><rect x="426" y="444" width="6" height="6" fill="#41c879"/><rect x="432" y="444" width="6" height="6" fill="#41c879"/><rect x="438" y="444" width="6" height="6" fill="#41c878"/><rect x="444" y="444" width="6" height="6" fill="#41c877"/><rect x="450" y="444" width="6" height="6" fill="#41c875"/><rect x="456" y="444" width="6" height="6" fill="#41c872"/><rect x="462" y="444" width="6" height="6" fill="#41c870"/><rect x="468" y="444" width="6" height="6" fill="#40c86d"/><rect x="474" y="444" width="6" height="6" fill="#40c869"/><rect x="480" y="444" width="6" height="6" fill="#40c865"/><rect x="486" y="444" width="6" height="6" fill="#42c863"/><rect x="492" y="444" width="6" height="6" fill="#47c861"/><rect x="498" y="444" width="6" height="6" fill="#4bc860"/><rect x="504" y="444" width="6" height="6" fill="#4ec95f"/><rect x="510" y="444" width="6" height="6" fill="#50c95e"/><rect x="516" y="444" width="6" height="6" fill="#50c95e"/><rect x="522" y="444" width="6" height="6" fill="#4fc95f"/><rect x="528" y="444" width="6" height="6" fill="#4dc95f"/><rect x="534" y="444" width="6" height="6" fill="#4bc860"/><rect x="540" y="444" width="6" height="6" fill="#4dc95f"/><rect x="546" y="444" width="6" height="6" fill="#59ca5b"/><rect x="552" y="444" width="6" height="6" fill="#6fcb54"/><rect x="558" y="444" width="6" height="6" fill="#7dcc50"/><rect x="564" y="444" width="6" height="6" fill="#6fcb54"/><rect x="570" y="444" width="6" height="6" fill="#54c95d"/><rect x="576" y="444" width="6" height="6" fill="#40c864"/><rect x="582" y="444" width="6" height="6" fill="#40c86a"/><rect x="588" y="444" width="6" height="6" fill="#40c86b"/><rect x="594" y="444" width="6" height="6" fill="#40c86a"/><rect x="600" y="444" width="6" height="6" fill="#40c86a"/><rect x="606" y="444" width="6" height="6" fill="#40c86a"/><rect x="612" y="444" width="6" height="6" fill="#40c86a"/><rect x="618" y="444" width="6" height="6" fill="#40c86b"/><rect x="624" y="444" width="6" height="6" fill="#40c86c"/><rect x="630" y="444" width="6" height="6" fill="#40c86f"/><rect x="636" y="444" width="6" height="6" fill="#41c872"/><rect x="642" y="444" width="6" height="6" fill="#41c877"/><rect x="648" y="444" width="6" height="6" fill="#42c87e"/><rect x="654" y="444" width="6" height="6" fill="#42c886"/><rect x="660" y="444" width="6" height="6" fill="#43c88e"/><rect x="666" y="444" width="6" height="6" fill="#44c893"/><rect x="672" y="444" width="6" height="6" fill="#44c894"/><rect x="678" y="444" width="6" height="6" fill="#43c891"/><rect x="684" y="444" width="6" height="6" fill="#43c88c"/><rect x="690" y="444" width="6" height="6" fill="#43c887"/><rect x="318" y="450" width="6" height="6" fill="#45c4ad"/><rect x="324" y="450" width="6" height="6" fill="#45c3ae"/><rect x="330" y="450" width="6" height="6" fill="#45c3ae"/><rect x="336" y="450" width="6" height="6" fill="#45c4ad"/><rect x="342" y="450" width="6" height="6" fill="#45c6ab"/><rect x="348" y="450" width="6" height="6" fill="#45c8a8"/><rect x="354" y="450" width="6" height="6" fill="#45c8a0"/><rect x="360" y="450" width="6" height="6" fill="#44c899"/><rect x="366" y="450" width="6" height="6" fill="#43c892"/><rect x="372" y="450" width="6" height="6" fill="#43c88c"/><rect x="378" y="450" width="6" height="6" fill="#43c887"/><rect x="384" y="450" width="6" height="6" fill="#42c883"/><rect x="390" y="450" width="6" height="6" fill="#42c881"/><rect x="396" y="450" width="6" height="6" fill="#42c87f"/><rect x="402" y="450" width="6" height="6" fill="#42c87e"/><rect x="408" y="450" width="6" height="6" fill="#42c87d"/><rect x="414" y="450" width="6" height="6" fill="#42c87d"/><rect x="420" y="450" width="6" height="6" fill="#42c87c"/><rect x="426" y="450" width="6" height="6" fill="#42c87c"/><rect x="432" y="450" width="6" height="6" fill="#42c87c"/><rect x="438" y="450" width="6" height="6" fill="#42c87b"/><rect x="444" y="450" width="6" height="6" fill="#41c87a"/><rect x="450" y="450" width="6" height="6" fill="#41c878"/><rect x="456" y="450" width="6" height="6" fill="#41c876"/><rect x="462" y="450" width="6" height="6" fill="#41c874"/><rect x="468" y="450" width="6" height="6" fill="#41c871"/><rect x="474" y="450" width="6" height="6" fill="#40c86e"/><rect x="480" y="450" width="6" height="6" fill="#40c86b"/><rect x="486" y="450" width="6" height="6" fill="#40c868"/><rect x="492" y="450" width="6" height="6" fill="#40c866"/><rect x="498" y="450" width="6" height="6" fill="#40c864"/><rect x="504" y="450" width="6" height="6" fill="#40c863"/><rect x="510" y="450" width="6" height="6" fill="#40c863"/><rect x="516" y="450" width="6" height="6" fill="#40c864"/><rect x="522" y="450" width="6" height="6" fill="#40c865"/><rect x="528" y="450" width="6" height="6" fill="#40c867"/><rect x="534" y="450" width="6" height="6" fill="#40c868"/><rect x="540" y="450" width="6" height="6" fill="#40c866"/><rect x="546" y="450" width="6" height="6" fill="#47c861"/><rect x="552" y="450" width="6" height="6" fill="#5fca5a"/><rect x="558" y="450" width="6" height="6" fill="#78cc52"/><rect x="564" y="450" width="6" height="6" fill="#79cc51"/><rect x="570" y="450" width="6" height="6" fill="#61ca59"/><rect x="576" y="450" width="6" height="6" fill="#48c861"/><rect x="582" y="450" width="6" height="6" fill="#40c866"/><rect x="588" y="450" width="6" height="6" fill="#40c869"/><rect x="594" y="450" width="6" height="6" fill="#40c869"/><rect x="600" y="450" width="6" height="6" fill="#40c869"/><rect x="606" y="450" width="6" height="6" fill="#40c869"/><rect x="612" y="450" width="6" height="6" fill="#40c86a"/><rect x="618" y="450" width="6" height="6" fill="#40c86b"/><rect x="624" y="450" width="6" height="6" fill="#40c86d"/><rect x="630" y="450" width="6" height="6" fill="#41c870"/><rect x="636" y="450" width="6" height="6" fill="#41c874"/><rect x="642" y="450" width="6" height="6" fill="#42c87b"/><rect x="648" y="450" width="6" height="6" fill="#42c884"/><rect x="654" y="450" width="6" height="6" fill="#43c88f"/><rect x="660" y="450" width="6" height="6" fill="#44c89a"/><rect x="666" y="450" width="6" height="6" fill="#45c8a0"/><rect x="672" y="450" width="6" height="6" fill="#45c8a2"/><rect x="678" y="450" width="6" height="6" fill="#44c89d"/><rect x="684" y="450" width="6" height="6" fill="#44c895"/><rect x="690" y="450" width="6" height="6" fill="#43c88d"/><rect x="318" y="456" width="6" height="6" fill="#45c3ae"/><rect x="324" y="456" width="6" height="6" fill="#45c2af"/><rect x="330" y="456" width="6" height="6" fill="#45c2af"/><rect x="336" y="456" width="6" height="6" fill="#45c3ae"/><rect x="342" y="456" width="6" height="6" fill="#45c5ac"/><rect x="348" y="456" width="6" height="6" fill="#45c7aa"/><rect x="354" y="456" width="6" height="6" fill="#45c8a3"/><rect x="360" y="456" width="6" height="6" fill="#44c89c"/><rect x="366" y="456" width="6" height="6" fill="#44c895"/><rect x="372" y="456" width="6" height="6" fill="#43c88f"/><rect x="378" y="456" width="6" height="6" fill="#43c88a"/><rect x="384" y="456" width="6" height="6" fill="#42c886"/><rect x="390" y="456" width="6" height="6" fill="#42c884"/><rect x="396" y="456" width="6" height="6" fill="#42c882"/><rect x="402" y="456" width="6" height="6" fill="#42c881"/><rect x="408" y="456" width="6" height="6" fill="#42c880"/><rect x="414" y="456" width="6" height="6" fill="#42c87f"/><rect x="420" y="456" width="6" height="6" fill="#42c87f"/><rect x="426" y="456" width="6" height="6" fill="#42c87f"/><rect x="432" y="456" width="6" height="6" fill="#42c87f"/><rect x="438" y="456" width="6" height="6" fill="#42c87f"/><rect x="444" y="456" width="6" height="6" fill="#42c87e"/><rect x="450" y="456" width="6" height="6" fill="#42c87e"/><rect x="456" y="456" width="6" height="6" fill="#42c87e"/><rect x="462" y="456" width="6" height="6" fill="#42c87e"/><rect x="468" y="456" width="6" height="6" fill="#42c87e"/><rect x="474" y="456" width="6" height="6" fill="#42c87e"/><rect x="480" y="456" width="6" height="6" fill="#42c87d"/><rect x="486" y="456" width="6" height="6" fill="#42c87c"/><rect x="492" y="456" width="6" height="6" fill="#41c87a"/><rect x="498" y="456" width="6" height="6" fill="#41c878"/><rect x="504" y="456" width="6" height="6" fill="#41c874"/><rect x="510" y="456" width="6" height="6" fill="#41c871"/><rect x="516" y="456" width="6" height="6" fill="#40c86e"/><rect x="522" y="456" width="6" height="6" fill="#40c86b"/><rect x="528" y="456" width="6" height="6" fill="#40c869"/><rect x="534" y="456" width="6" height="6" fill="#40c868"/><rect x="540" y="456" width="6" height="6" fill="#40c867"/><rect x="546" y="456" width="6" height="6" fill="#42c863"/><rect x="552" y="456" width="6" height="6" fill="#55c95d"/><rect x="558" y="456" width="6" height="6" fill="#70cb54"/><rect x="564" y="456" width="6" height="6" fill="#7ccc50"/><rect x="570" y="456" width="6" height="6" fill="#6ccb55"/><rect x="576" y="456" width="6" height="6" fill="#51c95e"/><rect x="582" y="456" width="6" height="6" fill="#40c864"/><rect x="588" y="456" width="6" height="6" fill="#40c869"/><rect x="594" y="456" width="6" height="6" fill="#40c86a"/><rect x="600" y="456" width="6" height="6" fill="#40c86a"/><rect x="606" y="456" width="6" height="6" fill="#40c86a"/><rect x="612" y="456" width="6" height="6" fill="#40c86b"/><rect x="618" y="456" width="6" height="6" fill="#40c86c"/><rect x="624" y="456" width="6" height="6" fill="#40c86e"/><rect x="630" y="456" width="6" height="6" fill="#41c871"/><rect x="636" y="456" width="6" height="6" fill="#41c877"/><rect x="642" y="456" width="6" height="6" fill="#42c87f"/><rect x="648" y="456" width="6" height="6" fill="#43c88b"/><rect x="654" y="456" width="6" height="6" fill="#44c89a"/><rect x="660" y="456" width="6" height="6" fill="#45c8a7"/><rect x="666" y="456" width="6" height="6" fill="#45c5ac"/><rect x="672" y="456" width="6" height="6" fill="#45c5ac"/><rect x="678" y="456" width="6" height="6" fill="#45c7aa"/><rect x="684" y="456" width="6" height="6" fill="#45c8a0"/><rect x="690" y="456" width="6" height="6" fill="#44c894"/><rect x="318" y="462" width="6" height="6" fill="#45c2af"/><rect x="324" y="462" width="6" height="6" fill="#44c1b0"/><rect x="330" y="462" width="6" height="6" fill="#44c1b0"/><rect x="336" y="462" width="6" height="6" fill="#45c2af"/><rect x="342" y="462" width="6" height="6" fill="#45c3ae"/><rect x="348" y="462" width="6" height="6" fill="#45c6ab"/><rect x="354" y="462" width="6" height="6" fill="#45c8a6"/><rect x="360" y="462" width="6" height="6" fill="#45c89f"/><rect x="366" y="462" width="6" height="6" fill="#44c898"/><rect x="372" y="462" width="6" height="6" fill="#43c892"/><rect x="378" y="462" width="6" height="6" fill="#43c88d"/><rect x="384" y="462" width="6" height="6" fill="#43c889"/><rect x="390" y="462" width="6" height="6" fill="#43c887"/><rect x="396" y="462" width="6" height="6" fill="#42c885"/><rect x="402" y="462" width="6" height="6" fill="#42c885"/><rect x="408" y="462" width="6" height="6" fill="#42c886"/><rect x="414" y="462" width="6" height="6" fill="#43c887"/><rect x="420" y="462" width="6" height="6" fill="#43c889"/><rect x="426" y="462" width="6" height="6" fill="#43c88c"/><rect x="432" y="462" width="6" height="6" fill="#43c890"/><rect x="438" y="462" width="6" height="6" fill="#44c893"/><rect x="444" y="462" width="6" height="6" fill="#44c895"/><rect x="450" y="462" width="6" height="6" fill="#44c896"/><rect x="456" y="462" width="6" height="6" fill="#44c895"/><rect x="462" y="462" width="6" height="6" fill="#44c893"/><rect x="468" y="462" width="6" height="6" fill="#43c88e"/><rect x="474" y="462" width="6" height="6" fill="#43c889"/><rect x="480" y="462" width="6" height="6" fill="#42c883"/><rect x="486" y="462" width="6" height="6" fill="#42c87d"/><rect x="492" y="462" width="6" height="6" fill="#41c877"/><rect x="498" y="462" width="6" height="6" fill="#41c873"/><rect x="504" y="462" width="6" height="6" fill="#41c86f"/><rect x="510" y="462" width="6" height="6" fill="#40c86d"/><rect x="516" y="462" width="6" height="6" fill="#40c86b"/><rect x="522" y="462" width="6" height="6" fill="#40c86b"/><rect x="528" y="462" width="6" height="6" fill="#40c86a"/><rect x="534" y="462" width="6" height="6" fill="#40c86a"/><rect x="540" y="462" width="6" height="6" fill="#40c86a"/><rect x="546" y="462" width="6" height="6" fill="#40c868"/><rect x="552" y="462" width="6" height="6" fill="#47c861"/><rect x="558" y="462" width="6" height="6" fill="#5fca5a"/><rect x="564" y="462" width="6" height="6" fill="#73cc53"/><rect x="570" y="462" width="6" height="6" fill="#6fcb54"/><rect x="576" y="462" width="6" height="6" fill="#57c95c"/><rect x="582" y="462" width="6" height="6" fill="#42c863"/><rect x="588" y="462" width="6" height="6" fill="#40c869"/><rect x="594" y="462" width="6" height="6" fill="#40c86a"/><rect x="600" y="462" width="6" height="6" fill="#40c86b"/><rect x="606" y="462" width="6" height="6" fill="#40c86b"/><rect x="612" y="462" width="6" height="6" fill="#40c86c"/><rect x="618" y="462" width="6" height="6" fill="#40c86d"/><rect x="624" y="462" width="6" height="6" fill="#41c86f"/><rect x="630" y="462" width="6" height="6" fill="#41c873"/><rect x="636" y="462" width="6" height="6" fill="#41c879"/><rect x="642" y="462" width="6" height="6" fill="#42c883"/><rect x="648" y="462" width="6" height="6" fill="#44c892"/><rect x="654" y="462" width="6" height="6" fill="#45c8a4"/><rect x="660" y="462" width="6" height="6" fill="#45c3ae"/><rect x="666" y="462" width="6" height="6" fill="#44bfb2"/><rect x="672" y="462" width="6" height="6" fill="#44beb3"/><rect x="678" y="462" width="6" height="6" fill="#45c2af"/><rect x="684" y="462" width="6" height="6" fill="#45c8a9"/><rect x="690" y="462" width="6" height="6" fill="#44c89b"/><rect x="696" y="462" width="6" height="6" fill="#43c88e"/><rect x="318" y="468" width="6" height="6" fill="#44c0b1"/><rect x="324" y="468" width="6" height="6" fill="#44bfb2"/><rect x="330" y="468" width="6" height="6" fill="#44bfb2"/><rect x="336" y="468" width="6" height="6" fill="#44c0b1"/><rect x="342" y="468" width="6" height="6" fill="#45c2af"/><rect x="348" y="468" width="6" height="6" fill="#45c5ac"/><rect x="354" y="468" width="6" height="6" fill="#45c7aa"/><rect x="360" y="468" width="6" height="6" fill="#45c8a3"/><rect x="366" y="468" width="6" height="6" fill="#44c89d"/><rect x="372" y="468" width="6" height="6" fill="#44c899"/><rect x="378" y="468" width="6" height="6" fill="#44c897"/><rect x="384" y="468" width="6" height="6" fill="#44c897"/><rect x="390" y="468" width="6" height="6" fill="#44c898"/><rect x="396" y="468" width="6" height="6" fill="#44c89c"/><rect x="402" y="468" width="6" height="6" fill="#45c89f"/><rect x="408" y="468" width="6" height="6" fill="#45c8a2"/><rect x="414" y="468" width="6" height="6" fill="#45c8a4"/><rect x="420" y="468" width="6" height="6" fill="#45c8a4"/><rect x="426" y="468" width="6" height="6" fill="#45c8a2"/><rect x="432" y="468" width="6" height="6" fill="#45c89f"/><rect x="438" y="468" width="6" height="6" fill="#44c89a"/><rect x="444" y="468" width="6" height="6" fill="#44c893"/><rect x="450" y="468" width="6" height="6" fill="#43c88d"/><rect x="456" y="468" width="6" height="6" fill="#43c888"/><rect x="462" y="468" width="6" height="6" fill="#42c884"/><rect x="468" y="468" width="6" height="6" fill="#42c880"/><rect x="474" y="468" width="6" height="6" fill="#42c87d"/><rect x="480" y="468" width="6" height="6" fill="#41c87a"/><rect x="486" y="468" width="6" height="6" fill="#41c878"/><rect x="492" y="468" width="6" height="6" fill="#41c876"/><rect x="498" y="468" width="6" height="6" fill="#41c874"/><rect x="504" y="468" width="6" height="6" fill="#41c872"/><rect x="510" y="468" width="6" height="6" fill="#41c871"/><rect x="516" y="468" width="6" height="6" fill="#41c870"/><rect x="522" y="468" width="6" height="6" fill="#41c86f"/><rect x="528" y="468" width="6" height="6" fill="#40c86f"/><rect x="534" y="468" width="6" height="6" fill="#40c86f"/><rect x="540" y="468" width="6" height="6" fill="#40c86f"/><rect x="546" y="468" width="6" height="6" fill="#40c86d"/><rect x="552" y="468" width="6" height="6" fill="#40c867"/><rect x="558" y="468" width="6" height="6" fill="#4dc95f"/><rect x="564" y="468" width="6" height="6" fill="#62ca58"/><rect x="570" y="468" width="6" height="6" fill="#69cb56"/><rect x="576" y="468" width="6" height="6" fill="#59ca5b"/><rect x="582" y="468" width="6" height="6" fill="#44c862"/><rect x="588" y="468" width="6" height="6" fill="#40c869"/><rect x="594" y="468" width="6" height="6" fill="#40c86c"/><rect x="600" y="468" width="6" height="6" fill="#40c86d"/><rect x="606" y="468" width="6" height="6" fill="#40c86d"/><rect x="612" y="468" width="6" height="6" fill="#40c86e"/><rect x="618" y="468" width="6" height="6" fill="#40c86f"/><rect x="624" y="468" width="6" height="6" fill="#41c871"/><rect x="630" y="468" width="6" height="6" fill="#41c875"/><rect x="636" y="468" width="6" height="6" fill="#42c87b"/><rect x="642" y="468" width="6" height="6" fill="#43c887"/><rect x="648" y="468" width="6" height="6" fill="#44c898"/><rect x="654" y="468" width="6" height="6" fill="#45c6ab"/><rect x="660" y="468" width="6" height="6" fill="#44beb3"/><rect x="666" y="468" width="6" height="6" fill="#43b9b8"/><rect x="672" y="468" width="6" height="6" fill="#43b9b8"/><rect x="678" y="468" width="6" height="6" fill="#44beb3"/><rect x="684" y="468" width="6" height="6" fill="#45c4ad"/><rect x="690" y="468" width="6" height="6" fill="#45c8a0"/><rect x="696" y="468" width="6" height="6" fill="#43c892"/><rect x="318" y="474" width="6" height="6" fill="#44bfb2"/><rect x="324" y="474" width="6" height="6" fill="#44beb3"/><rect x="330" y="474" width="6" height="6" fill="#44bdb4"/><rect x="336" y="474" width="6" height="6" fill="#44bdb4"/><rect x="342" y="474" width="6" height="6" fill="#44beb3"/><rect x="348" y="474" width="6" height="6" fill="#44bfb2"/><rect x="354" y="474" width="6" height="6" fill="#44c0b1"/><rect x="360" y="474" width="6" height="6" fill="#44c0b1"/><rect x="366" y="474" width="6" height="6" fill="#45c1b0"/><rect x="372" y="474" width="6" height="6" fill="#45c2af"/><rect x="378" y="474" width="6" height="6" fill="#45c3ae"/><rect x="384" y="474" width="6" height="6" fill="#45c5ac"/><rect x="390" y="474" width="6" height="6" fill="#45c7aa"/><rect x="396" y="474" width="6" height="6" fill="#45c8a6"/><rect x="402" y="474" width="6" height="6" fill="#45c89f"/><rect x="408" y="474" width="6" height="6" fill="#44c899"/><rect x="414" y="474" width="6" height="6" fill="#44c894"/><rect x="420" y="474" width="6" height="6" fill="#43c88f"/><rect x="426" y="474" width="6" height="6" fill="#43c88c"/><rect x="432" y="474" width="6" height="6" fill="#43c88a"/><rect x="438" y="474" width="6" height="6" fill="#43c888"/><rect x="444" y="474" width="6" height="6" fill="#43c887"/><rect x="450" y="474" width="6" height="6" fill="#42c885"/><rect x="456" y="474" width="6" height="6" fill="#42c883"/><rect x="462" y="474" width="6" height="6" fill="#42c882"/><rect x="468" y="474" width="6" height="6" fill="#42c880"/><rect x="474" y="474" width="6" height="6" fill="#42c87f"/><rect x="480" y="474" width="6" height="6" fill="#42c87d"/><rect x="486" y="474" width="6" height="6" fill="#42c87b"/><rect x="492" y="474" width="6" height="6" fill="#41c87a"/><rect x="498" y="474" width="6" height="6" fill="#41c878"/><rect x="504" y="474" width="6" height="6" fill="#41c877"/><rect x="510" y="474" width="6" height="6" fill="#41c876"/><rect x="516" y="474" width="6" height="6" fill="#41c875"/><rect x="522" y="474" width="6" height="6" fill="#41c874"/><rect x="528" y="474" width="6" height="6" fill="#41c874"/><rect x="534" y="474" width="6" height="6" fill="#41c874"/><rect x="540" y="474" width="6" height="6" fill="#41c874"/><rect x="546" y="474" width="6" height="6" fill="#41c873"/><rect x="552" y="474" width="6" height="6" fill="#41c871"/><rect x="558" y="474" width="6" height="6" fill="#40c868"/><rect x="564" y="474" width="6" height="6" fill="#4cc95f"/><rect x="570" y="474" width="6" height="6" fill="#59ca5b"/><rect x="576" y="474" width="6" height="6" fill="#54c95d"/><rect x="582" y="474" width="6" height="6" fill="#44c862"/><rect x="588" y="474" width="6" height="6" fill="#40c86a"/><rect x="594" y="474" width="6" height="6" fill="#40c86d"/><rect x="600" y="474" width="6" height="6" fill="#40c86d"/><rect x="606" y="474" width="6" height="6" fill="#40c86d"/><rect x="612" y="474" width="6" height="6" fill="#40c86d"/><rect x="618" y="474" width="6" height="6" fill="#40c86e"/><rect x="624" y="474" width="6" height="6" fill="#41c870"/><rect x="630" y="474" width="6" height="6" fill="#41c874"/><rect x="636" y="474" width="6" height="6" fill="#42c87b"/><rect x="642" y="474" width="6" height="6" fill="#43c888"/><rect x="648" y="474" width="6" height="6" fill="#44c89b"/><rect x="654" y="474" width="6" height="6" fill="#45c4ad"/><rect x="660" y="474" width="6" height="6" fill="#44bbb6"/><rect x="666" y="474" width="6" height="6" fill="#43b6bb"/><rect x="672" y="474" width="6" height="6" fill="#43b6bb"/><rect x="678" y="474" width="6" height="6" fill="#44bbb6"/><rect x="684" y="474" width="6" height="6" fill="#45c2af"/><rect x="690" y="474" width="6" height="6" fill="#45c8a3"/><rect x="696" y="474" width="6" height="6" fill="#44c894"/><rect x="318" y="480" width="6" height="6" fill="#43b7ba"/><rect x="324" y="480" width="6" height="6" fill="#43b4bd"/><rect x="330" y="480" width="6" height="6" fill="#42b3be"/><rect x="336" y="480" width="6" height="6" fill="#42b3be"/><rect x="342" y="480" width="6" height="6" fill="#43b4bd"/><rect x="348" y="480" width="6" height="6" fill="#43b7ba"/><rect x="354" y="480" width="6" height="6" fill="#44bbb6"/><rect x="360" y="480" width="6" height="6" fill="#44bfb2"/><rect x="366" y="480" width="6" height="6" fill="#45c4ad"/><rect x="372" y="480" width="6" height="6" fill="#45c8a8"/><rect x="378" y="480" width="6" height="6" fill="#45c89f"/><rect x="384" y="480" width="6" height="6" fill="#44c898"/><rect x="390" y="480" width="6" height="6" fill="#44c893"/><rect x="396" y="480" width="6" height="6" fill="#43c88f"/><rect x="402" y="480" width="6" height="6" fill="#43c88d"/><rect x="408" y="480" width="6" height="6" fill="#43c88c"/><rect x="414" y="480" width="6" height="6" fill="#43c88b"/><rect x="420" y="480" width="6" height="6" fill="#43c88b"/><rect x="426" y="480" width="6" height="6" fill="#43c88a"/><rect x="432" y="480" width="6" height="6" fill="#43c88a"/><rect x="438" y="480" width="6" height="6" fill="#43c88a"/><rect x="444" y="480" width="6" height="6" fill="#43c889"/><rect x="450" y="480" width="6" height="6" fill="#43c887"/><rect x="456" y="480" width="6" height="6" fill="#42c886"/><rect x="462" y="480" width="6" height="6" fill="#42c885"/><rect x="468" y="480" width="6" height="6" fill="#42c883"/><rect x="474" y="480" width="6" height="6" fill="#42c882"/><rect x="480" y="480" width="6" height="6" fill="#42c881"/><rect x="486" y="480" width="6" height="6" fill="#42c880"/><rect x="492" y="480" width="6" height="6" fill="#42c87f"/><rect x="498" y="480" width="6" height="6" fill="#42c87f"/><rect x="504" y="480" width="6" height="6" fill="#42c87f"/><rect x="510" y="480" width="6" height="6" fill="#42c87f"/><rect x="516" y="480" width="6" height="6" fill="#42c87f"/><rect x="522" y="480" width="6" height="6" fill="#42c87f"/><rect x="528" y="480" width="6" height="6" fill="#42c87f"/><rect x="534" y="480" width="6" height="6" fill="#42c87e"/><rect x="540" y="480" width="6" height="6" fill="#42c87d"/><rect x="546" y="480" width="6" height="6" fill="#41c87a"/><rect x="552" y="480" width="6" height="6" fill="#41c877"/><rect x="558" y="480" width="6" height="6" fill="#41c871"/><rect x="564" y="480" width="6" height="6" fill="#40c865"/><rect x="570" y="480" width="6" height="6" fill="#4dc95f"/><rect x="576" y="480" width="6" height="6" fill="#50c95e"/><rect x="582" y="480" width="6" height="6" fill="#46c861"/><rect x="588" y="480" width="6" height="6" fill="#40c867"/><rect x="594" y="480" width="6" height="6" fill="#40c86b"/><rect x="600" y="480" width="6" height="6" fill="#40c86c"/><rect x="606" y="480" width="6" height="6" fill="#40c86c"/><rect x="612" y="480" width="6" height="6" fill="#40c86d"/><rect x="618" y="480" width="6" height="6" fill="#40c86e"/><rect x="624" y="480" width="6" height="6" fill="#41c870"/><rect x="630" y="480" width="6" height="6" fill="#41c874"/><rect x="636" y="480" width="6" height="6" fill="#42c87c"/><rect x="642" y="480" width="6" height="6" fill="#43c889"/><rect x="648" y="480" width="6" height="6" fill="#44c89c"/><rect x="654" y="480" width="6" height="6" fill="#45c3ae"/><rect x="660" y="480" width="6" height="6" fill="#44bbb6"/><rect x="666" y="480" width="6" height="6" fill="#43b5bc"/><rect x="672" y="480" width="6" height="6" fill="#43b5bc"/><rect x="678" y="480" width="6" height="6" fill="#43bab7"/><rect x="684" y="480" width="6" height="6" fill="#45c2af"/><rect x="690" y="480" width="6" height="6" fill="#45c8a4"/><rect x="696" y="480" width="6" height="6" fill="#44c894"/><rect x="702" y="480" width="6" height="6" fill="#43c888"/><rect x="318" y="486" width="6" height="6" fill="#43b5bc"/><rect x="324" y="486" width="6" height="6" fill="#43b6bb"/><rect x="330" y="486" width="6" height="6" fill="#43b7ba"/><rect x="336" y="486" width="6" height="6" fill="#43bab7"/><rect x="342" y="486" width="6" height="6" fill="#44bdb4"/><rect x="348" y="486" width="6" height="6" fill="#44c0b1"/><rect x="354" y="486" width="6" height="6" fill="#45c4ad"/><rect x="360" y="486" width="6" height="6" fill="#45c7aa"/><rect x="366" y="486" width="6" height="6" fill="#45c8a4"/><rect x="372" y="486" width="6" height="6" fill="#44c89d"/><rect x="378" y="486" width="6" height="6" fill="#44c898"/><rect x="384" y="486" width="6" height="6" fill="#44c894"/><rect x="390" y="486" width="6" height="6" fill="#43c892"/><rect x="396" y="486" width="6" height="6" fill="#43c890"/><rect x="402" y="486" width="6" height="6" fill="#43c88f"/><rect x="408" y="486" width="6" height="6" fill="#43c88e"/><rect x="414" y="486" width="6" height="6" fill="#43c88e"/><rect x="420" y="486" width="6" height="6" fill="#43c88d"/><rect x="426" y="486" width="6" height="6" fill="#43c88d"/><rect x="432" y="486" width="6" height="6" fill="#43c88d"/><rect x="438" y="486" width="6" height="6" fill="#43c88e"/><rect x="444" y="486" width="6" height="6" fill="#43c88d"/><rect x="450" y="486" width="6" height="6" fill="#43c88d"/><rect x="456" y="486" width="6" height="6" fill="#43c88d"/><rect x="462" y="486" width="6" height="6" fill="#43c88e"/><rect x="468" y="486" width="6" height="6" fill="#43c88f"/><rect x="474" y="486" width="6" height="6" fill="#43c890"/><rect x="480" y="486" width="6" height="6" fill="#43c891"/><rect x="486" y="486" width="6" height="6" fill="#43c891"/><rect x="492" y="486" width="6" height="6" fill="#43c890"/><rect x="498" y="486" width="6" height="6" fill="#43c88e"/><rect x="504" y="486" width="6" height="6" fill="#43c88c"/><rect x="510" y="486" width="6" height="6" fill="#43c888"/><rect x="516" y="486" width="6" height="6" fill="#42c885"/><rect x="522" y="486" width="6" height="6" fill="#42c881"/><rect x="528" y="486" width="6" height="6" fill="#42c87e"/><rect x="534" y="486" width="6" height="6" fill="#42c87b"/><rect x="540" y="486" width="6" height="6" fill="#41c879"/><rect x="546" y="486" width="6" height="6" fill="#41c877"/><rect x="552" y="486" width="6" height="6" fill="#41c875"/><rect x="558" y="486" width="6" height="6" fill="#41c871"/><rect x="564" y="486" width="6" height="6" fill="#40c86b"/><rect x="570" y="486" width="6" height="6" fill="#41c863"/><rect x="576" y="486" width="6" height="6" fill="#48c861"/><rect x="582" y="486" width="6" height="6" fill="#44c862"/><rect x="588" y="486" width="6" height="6" fill="#40c867"/><rect x="594" y="486" width="6" height="6" fill="#40c86b"/><rect x="600" y="486" width="6" height="6" fill="#40c86d"/><rect x="606" y="486" width="6" height="6" fill="#40c86d"/><rect x="612" y="486" width="6" height="6" fill="#40c86d"/><rect x="618" y="486" width="6" height="6" fill="#40c86e"/><rect x="624" y="486" width="6" height="6" fill="#41c871"/><rect x="630" y="486" width="6" height="6" fill="#41c875"/><rect x="636" y="486" width="6" height="6" fill="#42c87b"/><rect x="642" y="486" width="6" height="6" fill="#43c888"/><rect x="648" y="486" width="6" height="6" fill="#44c89a"/><rect x="654" y="486" width="6" height="6" fill="#45c5ac"/><rect x="660" y="486" width="6" height="6" fill="#44bcb5"/><rect x="666" y="486" width="6" height="6" fill="#43b7ba"/><rect x="672" y="486" width="6" height="6" fill="#43b7ba"/><rect x="678" y="486" width="6" height="6" fill="#44bcb5"/><rect x="684" y="486" width="6" height="6" fill="#45c3ae"/><rect x="690" y="486" width="6" height="6" fill="#45c8a2"/><rect x="696" y="486" width="6" height="6" fill="#44c892"/><rect x="702" y="486" width="6" height="6" fill="#43c887"/><rect x="318" y="492" width="6" height="6" fill="#44bcb5"/><rect x="324" y="492" width="6" height="6" fill="#44bbb6"/><rect x="330" y="492" width="6" height="6" fill="#44bcb5"/><rect x="336" y="492" width="6" height="6" fill="#44bdb4"/><rect x="342" y="492" width="6" height="6" fill="#44beb3"/><rect x="348" y="492" width="6" height="6" fill="#45c1b0"/><rect x="354" y="492" width="6" height="6" fill="#45c4ad"/><rect x="360" y="492" width="6" height="6" fill="#45c6ab"/><rect x="366" y="492" width="6" height="6" fill="#45c8a5"/><rect x="372" y="492" width="6" height="6" fill="#45c89f"/><rect x="378" y="492" width="6" height="6" fill="#44c89b"/><rect x="384" y="492" width="6" height="6" fill="#44c897"/><rect x="390" y="492" width="6" height="6" fill="#44c895"/><rect x="396" y="492" width="6" height="6" fill="#44c893"/><rect x="402" y="492" width="6" height="6" fill="#44c893"/><rect x="408" y="492" width="6" height="6" fill="#44c894"/><rect x="414" y="492" width="6" height="6" fill="#44c895"/><rect x="420" y="492" width="6" height="6" fill="#44c897"/><rect x="426" y="492" width="6" height="6" fill="#44c89b"/><rect x="432" y="492" width="6" height="6" fill="#45c89e"/><rect x="438" y="492" width="6" height="6" fill="#45c8a2"/><rect x="444" y="492" width="6" height="6" fill="#45c8a4"/><rect x="450" y="492" width="6" height="6" fill="#45c8a5"/><rect x="456" y="492" width="6" height="6" fill="#45c8a4"/><rect x="462" y="492" width="6" height="6" fill="#45c8a1"/><rect x="468" y="492" width="6" height="6" fill="#44c89e"/><rect x="474" y="492" width="6" height="6" fill="#44c899"/><rect x="480" y="492" width="6" height="6" fill="#44c894"/><rect x="486" y="492" width="6" height="6" fill="#43c88e"/><rect x="492" y="492" width="6" height="6" fill="#43c88a"/><rect x="498" y="492" width="6" height="6" fill="#42c886"/><rect x="504" y="492" width="6" height="6" fill="#42c883"/><rect x="510" y="492" width="6" height="6" fill="#42c880"/><rect x="516" y="492" width="6" height="6" fill="#42c87e"/><rect x="522" y="492" width="6" height="6" fill="#42c87d"/><rect x="528" y="492" width="6" height="6" fill="#42c87b"/><rect x="534" y="492" width="6" height="6" fill="#41c87a"/><rect x="540" y="492" width="6" height="6" fill="#41c879"/><rect x="546" y="492" width="6" height="6" fill="#41c877"/><rect x="552" y="492" width="6" height="6" fill="#41c876"/><rect x="558" y="492" width="6" height="6" fill="#41c874"/><rect x="564" y="492" width="6" height="6" fill="#41c871"/><rect x="570" y="492" width="6" height="6" fill="#40c86b"/><rect x="576" y="492" width="6" height="6" fill="#40c866"/><rect x="582" y="492" width="6" height="6" fill="#40c865"/><rect x="588" y="492" width="6" height="6" fill="#40c869"/><rect x="594" y="492" width="6" height="6" fill="#40c86d"/><rect x="600" y="492" width="6" height="6" fill="#40c86e"/><rect x="606" y="492" width="6" height="6" fill="#40c86f"/><rect x="612" y="492" width="6" height="6" fill="#40c86f"/><rect x="618" y="492" width="6" height="6" fill="#41c86f"/><rect x="624" y="492" width="6" height="6" fill="#41c871"/><rect x="630" y="492" width="6" height="6" fill="#41c874"/><rect x="636" y="492" width="6" height="6" fill="#41c87a"/><rect x="642" y="492" width="6" height="6" fill="#42c885"/><rect x="648" y="492" width="6" height="6" fill="#44c895"/><rect x="654" y="492" width="6" height="6" fill="#45c8a9"/><rect x="660" y="492" width="6" height="6" fill="#44c0b1"/><rect x="666" y="492" width="6" height="6" fill="#44bcb5"/><rect x="672" y="492" width="6" height="6" fill="#44bbb6"/><rect x="678" y="492" width="6" height="6" fill="#44bfb2"/><rect x="684" y="492" width="6" height="6" fill="#45c6ab"/><rect x="690" y="492" width="6" height="6" fill="#44c89d"/><rect x="696" y="492" width="6" height="6" fill="#43c88f"/><rect x="702" y="492" width="6" height="6" fill="#42c885"/><rect x="318" y="498" width="6" height="6" fill="#44bcb5"/><rect x="324" y="498" width="6" height="6" fill="#44bbb6"/><rect x="330" y="498" width="6" height="6" fill="#44bbb6"/><rect x="336" y="498" width="6" height="6" fill="#44bcb5"/><rect x="342" y="498" width="6" height="6" fill="#44beb3"/><rect x="348" y="498" width="6" height="6" fill="#44c0b1"/><rect x="354" y="498" width="6" height="6" fill="#45c3ae"/><rect x="360" y="498" width="6" height="6" fill="#45c5ac"/><rect x="366" y="498" width="6" height="6" fill="#45c7aa"/><rect x="372" y="498" width="6" height="6" fill="#45c8a6"/><rect x="378" y="498" width="6" height="6" fill="#45c8a4"/><rect x="384" y="498" width="6" height="6" fill="#45c8a4"/><rect x="390" y="498" width="6" height="6" fill="#45c8a6"/><rect x="396" y="498" width="6" height="6" fill="#45c8a9"/><rect x="402" y="498" width="6" height="6" fill="#45c6ab"/><rect x="408" y="498" width="6" height="6" fill="#45c5ac"/><rect x="414" y="498" width="6" height="6" fill="#45c4ad"/><rect x="420" y="498" width="6" height="6" fill="#45c4ad"/><rect x="426" y="498" width="6" height="6" fill="#45c5ac"/><rect x="432" y="498" width="6" height="6" fill="#45c6ab"/><rect x="438" y="498" width="6" height="6" fill="#45c8a7"/><rect x="444" y="498" width="6" height="6" fill="#45c8a1"/><rect x="450" y="498" width="6" height="6" fill="#44c89b"/><rect x="456" y="498" width="6" height="6" fill="#44c896"/><rect x="462" y="498" width="6" height="6" fill="#43c891"/><rect x="468" y="498" width="6" height="6" fill="#43c88e"/><rect x="474" y="498" width="6" height="6" fill="#43c88b"/><rect x="480" y="498" width="6" height="6" fill="#43c889"/><rect x="486" y="498" width="6" height="6" fill="#43c887"/><rect x="492" y="498" width="6" height="6" fill="#42c885"/><rect x="498" y="498" width="6" height="6" fill="#42c884"/><rect x="504" y="498" width="6" height="6" fill="#42c882"/><rect x="510" y="498" width="6" height="6" fill="#42c881"/><rect x="516" y="498" width="6" height="6" fill="#42c880"/><rect x="522" y="498" width="6" height="6" fill="#42c87e"/><rect x="528" y="498" width="6" height="6" fill="#42c87d"/><rect x="534" y="498" width="6" height="6" fill="#42c87d"/><rect x="540" y="498" width="6" height="6" fill="#42c87c"/><rect x="546" y="498" width="6" height="6" fill="#42c87b"/><rect x="552" y="498" width="6" height="6" fill="#41c87a"/><rect x="558" y="498" width="6" height="6" fill="#41c879"/><rect x="564" y="498" width="6" height="6" fill="#41c877"/><rect x="570" y="498" width="6" height="6" fill="#41c874"/><rect x="576" y="498" width="6" height="6" fill="#40c86f"/><rect x="582" y="498" width="6" height="6" fill="#40c86c"/><rect x="588" y="498" width="6" height="6" fill="#40c86d"/><rect x="594" y="498" width="6" height="6" fill="#40c86e"/><rect x="600" y="498" width="6" height="6" fill="#40c86f"/><rect x="606" y="498" width="6" height="6" fill="#40c86e"/><rect x="612" y="498" width="6" height="6" fill="#40c86e"/><rect x="618" y="498" width="6" height="6" fill="#40c86e"/><rect x="624" y="498" width="6" height="6" fill="#41c870"/><rect x="630" y="498" width="6" height="6" fill="#41c872"/><rect x="636" y="498" width="6" height="6" fill="#41c877"/><rect x="642" y="498" width="6" height="6" fill="#42c881"/><rect x="648" y="498" width="6" height="6" fill="#43c88e"/><rect x="654" y="498" width="6" height="6" fill="#45c89f"/><rect x="660" y="498" width="6" height="6" fill="#45c5ac"/><rect x="666" y="498" width="6" height="6" fill="#45c1b0"/><rect x="672" y="498" width="6" height="6" fill="#45c1b0"/><rect x="678" y="498" width="6" height="6" fill="#45c4ad"/><rect x="684" y="498" width="6" height="6" fill="#45c8a4"/><rect x="690" y="498" width="6" height="6" fill="#44c897"/><rect x="696" y="498" width="6" height="6" fill="#43c88b"/><rect x="702" y="498" width="6" height="6" fill="#42c883"/><rect x="708" y="498" width="6" height="6" fill="#42c87c"/><rect x="312" y="504" width="6" height="6" fill="#44beb3"/><rect x="318" y="504" width="6" height="6" fill="#44bcb5"/><rect x="324" y="504" width="6" height="6" fill="#44bbb6"/><rect x="330" y="504" width="6" height="6" fill="#44bab7"/><rect x="336" y="504" width="6" height="6" fill="#44bab7"/><rect x="342" y="504" width="6" height="6" fill="#44bbb6"/><rect x="348" y="504" width="6" height="6" fill="#44bcb5"/><rect x="354" y="504" width="6" height="6" fill="#44bcb5"/><rect x="360" y="504" width="6" height="6" fill="#44bdb4"/><rect x="366" y="504" width="6" height="6" fill="#44bdb4"/><rect x="372" y="504" width="6" height="6" fill="#44beb3"/><rect x="378" y="504" width="6" height="6" fill="#44bfb2"/><rect x="384" y="504" width="6" height="6" fill="#44c1b0"/><rect x="390" y="504" width="6" height="6" fill="#45c3ae"/><rect x="396" y="504" width="6" height="6" fill="#45c5ac"/><rect x="402" y="504" width="6" height="6" fill="#45c7aa"/><rect x="408" y="504" width="6" height="6" fill="#45c8a4"/><rect x="414" y="504" width="6" height="6" fill="#45c89e"/><rect x="420" y="504" width="6" height="6" fill="#44c89a"/><rect x="426" y="504" width="6" height="6" fill="#44c897"/><rect x="432" y="504" width="6" height="6" fill="#44c895"/><rect x="438" y="504" width="6" height="6" fill="#44c893"/><rect x="444" y="504" width="6" height="6" fill="#43c891"/><rect x="450" y="504" width="6" height="6" fill="#43c88f"/><rect x="456" y="504" width="6" height="6" fill="#43c88e"/><rect x="462" y="504" width="6" height="6" fill="#43c88c"/><rect x="468" y="504" width="6" height="6" fill="#43c88b"/><rect x="474" y="504" width="6" height="6" fill="#43c88a"/><rect x="480" y="504" width="6" height="6" fill="#43c889"/><rect x="486" y="504" width="6" height="6" fill="#43c888"/><rect x="492" y="504" width="6" height="6" fill="#43c887"/><rect x="498" y="504" width="6" height="6" fill="#43c887"/><rect x="504" y="504" width="6" height="6" fill="#43c887"/><rect x="510" y="504" width="6" height="6" fill="#43c887"/><rect x="516" y="504" width="6" height="6" fill="#43c887"/><rect x="522" y="504" width="6" height="6" fill="#42c886"/><rect x="528" y="504" width="6" height="6" fill="#42c885"/><rect x="534" y="504" width="6" height="6" fill="#42c884"/><rect x="540" y="504" width="6" height="6" fill="#42c882"/><rect x="546" y="504" width="6" height="6" fill="#42c880"/><rect x="552" y="504" width="6" height="6" fill="#42c87d"/><rect x="558" y="504" width="6" height="6" fill="#41c87a"/><rect x="564" y="504" width="6" height="6" fill="#41c877"/><rect x="570" y="504" width="6" height="6" fill="#41c874"/><rect x="576" y="504" width="6" height="6" fill="#41c870"/><rect x="582" y="504" width="6" height="6" fill="#40c86d"/><rect x="588" y="504" width="6" height="6" fill="#40c86c"/><rect x="594" y="504" width="6" height="6" fill="#40c86c"/><rect x="600" y="504" width="6" height="6" fill="#40c86d"/><rect x="606" y="504" width="6" height="6" fill="#40c86d"/><rect x="612" y="504" width="6" height="6" fill="#40c86d"/><rect x="618" y="504" width="6" height="6" fill="#40c86d"/><rect x="624" y="504" width="6" height="6" fill="#40c86f"/><rect x="630" y="504" width="6" height="6" fill="#41c871"/><rect x="636" y="504" width="6" height="6" fill="#41c875"/><rect x="642" y="504" width="6" height="6" fill="#42c87d"/><rect x="648" y="504" width="6" height="6" fill="#43c887"/><rect x="654" y="504" width="6" height="6" fill="#44c894"/><rect x="660" y="504" width="6" height="6" fill="#45c8a1"/><rect x="666" y="504" width="6" height="6" fill="#45c8a9"/><rect x="672" y="504" width="6" height="6" fill="#45c8a9"/><rect x="678" y="504" width="6" height="6" fill="#45c8a4"/><rect x="684" y="504" width="6" height="6" fill="#44c89a"/><rect x="690" y="504" width="6" height="6" fill="#43c88f"/><rect x="696" y="504" width="6" height="6" fill="#43c887"/><rect x="702" y="504" width="6" height="6" fill="#42c880"/><rect x="312" y="510" width="6" height="6" fill="#43b9b8"/><rect x="318" y="510" width="6" height="6" fill="#43b6bb"/><rect x="324" y="510" width="6" height="6" fill="#42b3be"/><rect x="330" y="510" width="6" height="6" fill="#42b1c0"/><rect x="336" y="510" width="6" height="6" fill="#42b1c0"/><rect x="342" y="510" width="6" height="6" fill="#42b2bf"/><rect x="348" y="510" width="6" height="6" fill="#43b5bc"/><rect x="354" y="510" width="6" height="6" fill="#43b9b8"/><rect x="360" y="510" width="6" height="6" fill="#44bdb4"/><rect x="366" y="510" width="6" height="6" fill="#45c1b0"/><rect x="372" y="510" width="6" height="6" fill="#45c5ac"/><rect x="378" y="510" width="6" height="6" fill="#45c8a6"/><rect x="384" y="510" width="6" height="6" fill="#45c89f"/><rect x="390" y="510" width="6" height="6" fill="#44c89a"/><rect x="396" y="510" width="6" height="6" fill="#44c897"/><rect x="402" y="510" width="6" height="6" fill="#44c895"/><rect x="408" y="510" width="6" height="6" fill="#44c894"/><rect x="414" y="510" width="6" height="6" fill="#44c893"/><rect x="420" y="510" width="6" height="6" fill="#44c893"/><rect x="426" y="510" width="6" height="6" fill="#44c893"/><rect x="432" y="510" width="6" height="6" fill="#44c893"/><rect x="438" y="510" width="6" height="6" fill="#44c893"/><rect x="444" y="510" width="6" height="6" fill="#43c892"/><rect x="450" y="510" width="6" height="6" fill="#43c892"/><rect x="456" y="510" width="6" height="6" fill="#43c892"/><rect x="462" y="510" width="6" height="6" fill="#44c893"/><rect x="468" y="510" width="6" height="6" fill="#44c894"/><rect x="474" y="510" width="6" height="6" fill="#44c895"/><rect x="480" y="510" width="6" height="6" fill="#44c895"/><rect x="486" y="510" width="6" height="6" fill="#44c896"/><rect x="492" y="510" width="6" height="6" fill="#44c895"/><rect x="498" y="510" width="6" height="6" fill="#44c893"/><rect x="504" y="510" width="6" height="6" fill="#43c891"/><rect x="510" y="510" width="6" height="6" fill="#43c88d"/><rect x="516" y="510" width="6" height="6" fill="#43c889"/><rect x="522" y="510" width="6" height="6" fill="#42c885"/><rect x="528" y="510" width="6" height="6" fill="#42c882"/><rect x="534" y="510" width="6" height="6" fill="#42c87f"/><rect x="540" y="510" width="6" height="6" fill="#42c87c"/><rect x="546" y="510" width="6" height="6" fill="#41c87a"/><rect x="552" y="510" width="6" height="6" fill="#41c878"/><rect x="558" y="510" width="6" height="6" fill="#41c876"/><rect x="564" y="510" width="6" height="6" fill="#41c875"/><rect x="570" y="510" width="6" height="6" fill="#41c873"/><rect x="576" y="510" width="6" height="6" fill="#41c871"/><rect x="582" y="510" width="6" height="6" fill="#40c86e"/><rect x="588" y="510" width="6" height="6" fill="#40c86d"/><rect x="594" y="510" width="6" height="6" fill="#40c86d"/><rect x="600" y="510" width="6" height="6" fill="#40c86d"/><rect x="606" y="510" width="6" height="6" fill="#40c86d"/><rect x="612" y="510" width="6" height="6" fill="#40c86c"/><rect x="618" y="510" width="6" height="6" fill="#40c86d"/><rect x="624" y="510" width="6" height="6" fill="#40c86e"/><rect x="630" y="510" width="6" height="6" fill="#41c86f"/><rect x="636" y="510" width="6" height="6" fill="#41c872"/><rect x="642" y="510" width="6" height="6" fill="#41c878"/><rect x="648" y="510" width="6" height="6" fill="#42c881"/><rect x="654" y="510" width="6" height="6" fill="#43c88a"/><rect x="660" y="510" width="6" height="6" fill="#44c893"/><rect x="666" y="510" width="6" height="6" fill="#44c899"/><rect x="672" y="510" width="6" height="6" fill="#44c89a"/><rect x="678" y="510" width="6" height="6" fill="#44c896"/><rect x="684" y="510" width="6" height="6" fill="#43c890"/><rect x="690" y="510" width="6" height="6" fill="#43c888"/><rect x="696" y="510" width="6" height="6" fill="#42c882"/><rect x="312" y="516" width="6" height="6" fill="#43b5bc"/><rect x="318" y="516" width="6" height="6" fill="#43b5bc"/><rect x="324" y="516" width="6" height="6" fill="#43b5bc"/><rect x="330" y="516" width="6" height="6" fill="#43b7ba"/><rect x="336" y="516" width="6" height="6" fill="#43b9b8"/><rect x="342" y="516" width="6" height="6" fill="#44bcb5"/><rect x="348" y="516" width="6" height="6" fill="#44c0b1"/><rect x="354" y="516" width="6" height="6" fill="#45c3ae"/><rect x="360" y="516" width="6" height="6" fill="#45c6ab"/><rect x="366" y="516" width="6" height="6" fill="#45c8a7"/><rect x="372" y="516" width="6" height="6" fill="#45c8a1"/><rect x="378" y="516" width="6" height="6" fill="#44c89c"/><rect x="384" y="516" width="6" height="6" fill="#44c899"/><rect x="390" y="516" width="6" height="6" fill="#44c897"/><rect x="396" y="516" width="6" height="6" fill="#44c896"/><rect x="402" y="516" width="6" height="6" fill="#44c895"/><rect x="408" y="516" width="6" height="6" fill="#44c896"/><rect x="414" y="516" width="6" height="6" fill="#44c897"/><rect x="420" y="516" width="6" height="6" fill="#44c89a"/><rect x="426" y="516" width="6" height="6" fill="#44c89d"/><rect x="432" y="516" width="6" height="6" fill="#45c8a1"/><rect x="438" y="516" width="6" height="6" fill="#45c8a4"/><rect x="444" y="516" width="6" height="6" fill="#45c8a6"/><rect x="450" y="516" width="6" height="6" fill="#45c8a7"/><rect x="456" y="516" width="6" height="6" fill="#45c8a6"/><rect x="462" y="516" width="6" height="6" fill="#45c8a4"/><rect x="468" y="516" width="6" height="6" fill="#45c8a0"/><rect x="474" y="516" width="6" height="6" fill="#44c89b"/><rect x="480" y="516" width="6" height="6" fill="#44c896"/><rect x="486" y="516" width="6" height="6" fill="#43c891"/><rect x="492" y="516" width="6" height="6" fill="#43c88c"/><rect x="498" y="516" width="6" height="6" fill="#43c888"/><rect x="504" y="516" width="6" height="6" fill="#42c885"/><rect x="510" y="516" width="6" height="6" fill="#42c883"/><rect x="516" y="516" width="6" height="6" fill="#42c880"/><rect x="522" y="516" width="6" height="6" fill="#42c87f"/><rect x="528" y="516" width="6" height="6" fill="#42c87d"/><rect x="534" y="516" width="6" height="6" fill="#42c87c"/><rect x="540" y="516" width="6" height="6" fill="#41c87a"/><rect x="546" y="516" width="6" height="6" fill="#41c879"/><rect x="552" y="516" width="6" height="6" fill="#41c877"/><rect x="558" y="516" width="6" height="6" fill="#41c876"/><rect x="564" y="516" width="6" height="6" fill="#41c875"/><rect x="570" y="516" width="6" height="6" fill="#41c873"/><rect x="576" y="516" width="6" height="6" fill="#41c871"/><rect x="582" y="516" width="6" height="6" fill="#41c870"/><rect x="588" y="516" width="6" height="6" fill="#40c86e"/><rect x="594" y="516" width="6" height="6" fill="#40c86d"/><rect x="600" y="516" width="6" height="6" fill="#40c86d"/><rect x="606" y="516" width="6" height="6" fill="#40c86c"/><rect x="612" y="516" width="6" height="6" fill="#40c86c"/><rect x="618" y="516" width="6" height="6" fill="#40c86c"/><rect x="624" y="516" width="6" height="6" fill="#40c86d"/><rect x="630" y="516" width="6" height="6" fill="#40c86e"/><rect x="636" y="516" width="6" height="6" fill="#41c870"/><rect x="642" y="516" width="6" height="6" fill="#41c875"/><rect x="648" y="516" width="6" height="6" fill="#41c87b"/><rect x="654" y="516" width="6" height="6" fill="#42c881"/><rect x="660" y="516" width="6" height="6" fill="#43c888"/><rect x="666" y="516" width="6" height="6" fill="#43c88c"/><rect x="672" y="516" width="6" height="6" fill="#43c88d"/><rect x="678" y="516" width="6" height="6" fill="#43c88b"/><rect x="684" y="516" width="6" height="6" fill="#43c887"/><rect x="690" y="516" width="6" height="6" fill="#42c882"/><rect x="312" y="522" width="6" height="6" fill="#44beb3"/><rect x="318" y="522" width="6" height="6" fill="#44bdb4"/><rect x="324" y="522" width="6" height="6" fill="#44bcb5"/><rect x="330" y="522" width="6" height="6" fill="#44bcb5"/><rect x="336" y="522" width="6" height="6" fill="#44bdb4"/><rect x="342" y="522" width="6" height="6" fill="#44bfb2"/><rect x="348" y="522" width="6" height="6" fill="#45c1b0"/><rect x="354" y="522" width="6" height="6" fill="#45c4ad"/><rect x="360" y="522" width="6" height="6" fill="#45c6ab"/><rect x="366" y="522" width="6" height="6" fill="#45c8a8"/><rect x="372" y="522" width="6" height="6" fill="#45c8a5"/><rect x="378" y="522" width="6" height="6" fill="#45c8a3"/><rect x="384" y="522" width="6" height="6" fill="#45c8a3"/><rect x="390" y="522" width="6" height="6" fill="#45c8a5"/><rect x="396" y="522" width="6" height="6" fill="#45c8a9"/><rect x="402" y="522" width="6" height="6" fill="#45c6ab"/><rect x="408" y="522" width="6" height="6" fill="#45c5ac"/><rect x="414" y="522" width="6" height="6" fill="#45c4ad"/><rect x="420" y="522" width="6" height="6" fill="#45c4ad"/><rect x="426" y="522" width="6" height="6" fill="#45c5ac"/><rect x="432" y="522" width="6" height="6" fill="#45c6ab"/><rect x="438" y="522" width="6" height="6" fill="#45c8a7"/><rect x="444" y="522" width="6" height="6" fill="#45c8a1"/><rect x="450" y="522" width="6" height="6" fill="#44c89b"/><rect x="456" y="522" width="6" height="6" fill="#44c896"/><rect x="462" y="522" width="6" height="6" fill="#43c891"/><rect x="468" y="522" width="6" height="6" fill="#43c88e"/><rect x="474" y="522" width="6" height="6" fill="#43c88b"/><rect x="480" y="522" width="6" height="6" fill="#43c889"/><rect x="486" y="522" width="6" height="6" fill="#43c887"/><rect x="492" y="522" width="6" height="6" fill="#42c885"/><rect x="498" y="522" width="6" height="6" fill="#42c884"/><rect x="504" y="522" width="6" height="6" fill="#42c883"/><rect x="510" y="522" width="6" height="6" fill="#42c881"/><rect x="516" y="522" width="6" height="6" fill="#42c880"/><rect x="522" y="522" width="6" height="6" fill="#42c87e"/><rect x="528" y="522" width="6" height="6" fill="#42c87d"/><rect x="534" y="522" width="6" height="6" fill="#42c87c"/><rect x="540" y="522" width="6" height="6" fill="#41c87a"/><rect x="546" y="522" width="6" height="6" fill="#41c879"/><rect x="552" y="522" width="6" height="6" fill="#41c877"/><rect x="558" y="522" width="6" height="6" fill="#41c876"/><rect x="564" y="522" width="6" height="6" fill="#41c875"/><rect x="570" y="522" width="6" height="6" fill="#41c873"/><rect x="576" y="522" width="6" height="6" fill="#41c872"/><rect x="582" y="522" width="6" height="6" fill="#41c870"/><rect x="588" y="522" width="6" height="6" fill="#40c86f"/><rect x="594" y="522" width="6" height="6" fill="#40c86e"/><rect x="600" y="522" width="6" height="6" fill="#40c86d"/><rect x="606" y="522" width="6" height="6" fill="#40c86c"/><rect x="612" y="522" width="6" height="6" fill="#40c86c"/><rect x="618" y="522" width="6" height="6" fill="#40c86c"/><rect x="624" y="522" width="6" height="6" fill="#40c86c"/><rect x="630" y="522" width="6" height="6" fill="#40c86d"/><rect x="636" y="522" width="6" height="6" fill="#40c86e"/><rect x="642" y="522" width="6" height="6" fill="#41c871"/><rect x="648" y="522" width="6" height="6" fill="#41c876"/><rect x="654" y="522" width="6" height="6" fill="#41c87b"/><rect x="660" y="522" width="6" height="6" fill="#42c87f"/><rect x="666" y="522" width="6" height="6" fill="#42c882"/><rect x="672" y="522" width="6" height="6" fill="#42c883"/><rect x="312" y="528" width="6" height="6" fill="#44beb3"/><rect x="318" y="528" width="6" height="6" fill="#44bdb4"/><rect x="324" y="528" width="6" height="6" fill="#44bcb5"/><rect x="330" y="528" width="6" height="6" fill="#44bbb6"/><rect x="336" y="528" width="6" height="6" fill="#44bcb5"/><rect x="342" y="528" width="6" height="6" fill="#44bcb5"/><rect x="348" y="528" width="6" height="6" fill="#44bdb4"/><rect x="354" y="528" width="6" height="6" fill="#44bdb4"/><rect x="360" y="528" width="6" height="6" fill="#44beb3"/><rect x="366" y="528" width="6" height="6" fill="#44beb3"/><rect x="372" y="528" width="6" height="6" fill="#44bfb2"/><rect x="378" y="528" width="6" height="6" fill="#44bfb2"/><rect x="384" y="528" width="6" height="6" fill="#45c1b0"/><rect x="390" y="528" width="6" height="6" fill="#45c3ae"/><rect x="396" y="528" width="6" height="6" fill="#45c5ac"/><rect x="402" y="528" width="6" height="6" fill="#45c7aa"/><rect x="408" y="528" width="6" height="6" fill="#45c8a4"/><rect x="414" y="528" width="6" height="6" fill="#45c89e"/><rect x="420" y="528" width="6" height="6" fill="#44c89a"/><rect x="426" y="528" width="6" height="6" fill="#44c897"/><rect x="432" y="528" width="6" height="6" fill="#44c895"/><rect x="438" y="528" width="6" height="6" fill="#44c893"/><rect x="444" y="528" width="6" height="6" fill="#43c891"/><rect x="450" y="528" width="6" height="6" fill="#43c88f"/><rect x="456" y="528" width="6" height="6" fill="#43c88e"/><rect x="462" y="528" width="6" height="6" fill="#43c88c"/><rect x="468" y="528" width="6" height="6" fill="#43c88b"/><rect x="474" y="528" width="6" height="6" fill="#43c88a"/><rect x="480" y="528" width="6" height="6" fill="#43c888"/><rect x="486" y="528" width="6" height="6" fill="#43c887"/><rect x="492" y="528" width="6" height="6" fill="#42c885"/><rect x="498" y="528" width="6" height="6" fill="#42c884"/><rect x="504" y="528" width="6" height="6" fill="#42c883"/><rect x="510" y="528" width="6" height="6" fill="#42c881"/><rect x="516" y="528" width="6" height="6" fill="#42c880"/><rect x="522" y="528" width="6" height="6" fill="#42c87e"/><rect x="528" y="528" width="6" height="6" fill="#42c87d"/><rect x="534" y="528" width="6" height="6" fill="#42c87c"/><rect x="540" y="528" width="6" height="6" fill="#41c87a"/><rect x="546" y="528" width="6" height="6" fill="#41c879"/><rect x="552" y="528" width="6" height="6" fill="#41c877"/><rect x="558" y="528" width="6" height="6" fill="#41c876"/><rect x="564" y="528" width="6" height="6" fill="#41c875"/><rect x="570" y="528" width="6" height="6" fill="#41c873"/><rect x="576" y="528" width="6" height="6" fill="#41c872"/><rect x="582" y="528" width="6" height="6" fill="#41c870"/><rect x="588" y="528" width="6" height="6" fill="#40c86f"/><rect x="594" y="528" width="6" height="6" fill="#40c86e"/><rect x="600" y="528" width="6" height="6" fill="#40c86d"/><rect x="606" y="528" width="6" height="6" fill="#40c86c"/><rect x="612" y="528" width="6" height="6" fill="#40c86b"/><rect x="618" y="528" width="6" height="6" fill="#40c86b"/><rect x="624" y="528" width="6" height="6" fill="#40c86b"/><rect x="630" y="528" width="6" height="6" fill="#40c86b"/><rect x="636" y="528" width="6" height="6" fill="#40c86c"/><rect x="642" y="528" width="6" height="6" fill="#40c86f"/><rect x="312" y="534" width="6" height="6" fill="#43b7ba"/><rect x="318" y="534" width="6" height="6" fill="#43b5bc"/><rect x="324" y="534" width="6" height="6" fill="#42b2bf"/><rect x="330" y="534" width="6" height="6" fill="#42b1c0"/><rect x="336" y="534" width="6" height="6" fill="#42b2bf"/><rect x="342" y="534" width="6" height="6" fill="#42b3be"/><rect x="348" y="534" width="6" height="6" fill="#43b6bb"/><rect x="354" y="534" width="6" height="6" fill="#43bab7"/><rect x="360" y="534" width="6" height="6" fill="#44beb3"/><rect x="366" y="534" width="6" height="6" fill="#45c2af"/><rect x="372" y="534" width="6" height="6" fill="#45c6ab"/><rect x="378" y="534" width="6" height="6" fill="#45c8a5"/><rect x="384" y="534" width="6" height="6" fill="#45c89f"/><rect x="390" y="534" width="6" height="6" fill="#44c89a"/><rect x="396" y="534" width="6" height="6" fill="#44c897"/><rect x="402" y="534" width="6" height="6" fill="#44c895"/><rect x="408" y="534" width="6" height="6" fill="#44c893"/><rect x="414" y="534" width="6" height="6" fill="#44c893"/><rect x="420" y="534" width="6" height="6" fill="#44c892"/><rect x="426" y="534" width="6" height="6" fill="#44c892"/><rect x="432" y="534" width="6" height="6" fill="#44c892"/><rect x="438" y="534" width="6" height="6" fill="#43c892"/><rect x="444" y="534" width="6" height="6" fill="#43c891"/><rect x="450" y="534" width="6" height="6" fill="#43c88f"/><rect x="456" y="534" width="6" height="6" fill="#43c88e"/><rect x="462" y="534" width="6" height="6" fill="#43c88c"/><rect x="468" y="534" width="6" height="6" fill="#43c88b"/><rect x="474" y="534" width="6" height="6" fill="#43c88a"/><rect x="480" y="534" width="6" height="6" fill="#43c888"/><rect x="486" y="534" width="6" height="6" fill="#43c887"/><rect x="492" y="534" width="6" height="6" fill="#42c885"/><rect x="498" y="534" width="6" height="6" fill="#42c884"/><rect x="504" y="534" width="6" height="6" fill="#42c883"/><rect x="510" y="534" width="6" height="6" fill="#42c881"/><rect x="516" y="534" width="6" height="6" fill="#42c880"/><rect x="522" y="534" width="6" height="6" fill="#42c87e"/><rect x="528" y="534" width="6" height="6" fill="#42c87d"/><rect x="534" y="534" width="6" height="6" fill="#42c87c"/><rect x="540" y="534" width="6" height="6" fill="#41c87a"/><rect x="546" y="534" width="6" height="6" fill="#41c879"/><rect x="552" y="534" width="6" height="6" fill="#41c877"/><rect x="558" y="534" width="6" height="6" fill="#41c876"/><rect x="564" y="534" width="6" height="6" fill="#41c875"/><rect x="570" y="534" width="6" height="6" fill="#41c873"/><rect x="576" y="534" width="6" height="6" fill="#41c872"/><rect x="582" y="534" width="6" height="6" fill="#41c870"/><rect x="588" y="534" width="6" height="6" fill="#40c86f"/><rect x="594" y="534" width="6" height="6" fill="#40c86e"/><rect x="600" y="534" width="6" height="6" fill="#40c86d"/><rect x="606" y="534" width="6" height="6" fill="#40c86c"/><rect x="612" y="534" width="6" height="6" fill="#40c86b"/><rect x="618" y="534" width="6" height="6" fill="#40c86a"/><rect x="624" y="534" width="6" height="6" fill="#40c86a"/><rect x="630" y="534" width="6" height="6" fill="#40c86a"/><rect x="636" y="534" width="6" height="6" fill="#40c86b"/><rect x="270" y="540" width="6" height="6" fill="#45c6ab"/><rect x="276" y="540" width="6" height="6" fill="#45c2af"/><rect x="282" y="540" width="6" height="6" fill="#44beb3"/><rect x="288" y="540" width="6" height="6" fill="#43bab7"/><rect x="312" y="540" width="6" height="6" fill="#42b0c1"/><rect x="318" y="540" width="6" height="6" fill="#42b1c0"/><rect x="324" y="540" width="6" height="6" fill="#42b3be"/><rect x="330" y="540" width="6" height="6" fill="#43b6bb"/><rect x="336" y="540" width="6" height="6" fill="#43b9b8"/><rect x="342" y="540" width="6" height="6" fill="#44bdb4"/><rect x="348" y="540" width="6" height="6" fill="#44c0b1"/><rect x="354" y="540" width="6" height="6" fill="#45c4ad"/><rect x="360" y="540" width="6" height="6" fill="#45c7aa"/><rect x="366" y="540" width="6" height="6" fill="#45c8a5"/><rect x="372" y="540" width="6" height="6" fill="#45c8a0"/><rect x="378" y="540" width="6" height="6" fill="#44c89b"/><rect x="384" y="540" width="6" height="6" fill="#44c898"/><rect x="390" y="540" width="6" height="6" fill="#44c896"/><rect x="396" y="540" width="6" height="6" fill="#44c894"/><rect x="402" y="540" width="6" height="6" fill="#44c893"/><rect x="408" y="540" width="6" height="6" fill="#44c893"/><rect x="414" y="540" width="6" height="6" fill="#44c893"/><rect x="420" y="540" width="6" height="6" fill="#44c892"/><rect x="426" y="540" width="6" height="6" fill="#44c892"/><rect x="432" y="540" width="6" height="6" fill="#44c892"/><rect x="438" y="540" width="6" height="6" fill="#43c892"/><rect x="444" y="540" width="6" height="6" fill="#43c891"/><rect x="450" y="540" width="6" height="6" fill="#43c88f"/><rect x="456" y="540" width="6" height="6" fill="#43c88e"/><rect x="462" y="540" width="6" height="6" fill="#43c88c"/><rect x="468" y="540" width="6" height="6" fill="#43c88b"/><rect x="474" y="540" width="6" height="6" fill="#43c88a"/><rect x="480" y="540" width="6" height="6" fill="#43c888"/><rect x="486" y="540" width="6" height="6" fill="#43c887"/><rect x="492" y="540" width="6" height="6" fill="#42c885"/><rect x="498" y="540" width="6" height="6" fill="#42c884"/><rect x="504" y="540" width="6" height="6" fill="#42c883"/><rect x="510" y="540" width="6" height="6" fill="#42c881"/><rect x="516" y="540" width="6" height="6" fill="#42c880"/><rect x="522" y="540" width="6" height="6" fill="#42c87e"/><rect x="528" y="540" width="6" height="6" fill="#42c87d"/><rect x="534" y="540" width="6" height="6" fill="#42c87c"/><rect x="540" y="540" width="6" height="6" fill="#41c87a"/><rect x="546" y="540" width="6" height="6" fill="#41c879"/><rect x="552" y="540" width="6" height="6" fill="#41c877"/><rect x="558" y="540" width="6" height="6" fill="#41c876"/><rect x="564" y="540" width="6" height="6" fill="#41c875"/><rect x="570" y="540" width="6" height="6" fill="#41c873"/><rect x="576" y="540" width="6" height="6" fill="#41c872"/><rect x="582" y="540" width="6" height="6" fill="#41c870"/><rect x="588" y="540" width="6" height="6" fill="#40c86f"/><rect x="594" y="540" width="6" height="6" fill="#40c86e"/><rect x="600" y="540" width="6" height="6" fill="#40c86d"/><rect x="606" y="540" width="6" height="6" fill="#40c86c"/><rect x="612" y="540" width="6" height="6" fill="#40c86b"/><rect x="618" y="540" width="6" height="6" fill="#40c86a"/><rect x="624" y="540" width="6" height="6" fill="#40c869"/><rect x="630" y="540" width="6" height="6" fill="#40c869"/><rect x="636" y="540" width="6" height="6" fill="#40c869"/><rect x="270" y="546" width="6" height="6" fill="#44bfb2"/><rect x="276" y="546" width="6" height="6" fill="#44bcb5"/><rect x="282" y="546" width="6" height="6" fill="#43bab7"/><rect x="288" y="546" width="6" height="6" fill="#43b7ba"/><rect x="294" y="546" width="6" height="6" fill="#43b6bb"/><rect x="300" y="546" width="6" height="6" fill="#43b4bd"/><rect x="306" y="546" width="6" height="6" fill="#43b4bd"/><rect x="312" y="546" width="6" height="6" fill="#43b4bd"/><rect x="318" y="546" width="6" height="6" fill="#43b5bc"/><rect x="324" y="546" width="6" height="6" fill="#43b7ba"/><rect x="330" y="546" width="6" height="6" fill="#43b9b8"/><rect x="336" y="546" width="6" height="6" fill="#44bcb5"/><rect x="342" y="546" width="6" height="6" fill="#44beb3"/><rect x="348" y="546" width="6" height="6" fill="#45c2af"/><rect x="354" y="546" width="6" height="6" fill="#45c4ad"/><rect x="360" y="546" width="6" height="6" fill="#45c7aa"/><rect x="366" y="546" width="6" height="6" fill="#45c8a4"/><rect x="372" y="546" width="6" height="6" fill="#45c89f"/><rect x="378" y="546" width="6" height="6" fill="#44c89b"/><rect x="384" y="546" width="6" height="6" fill="#44c898"/><rect x="390" y="546" width="6" height="6" fill="#44c896"/><rect x="396" y="546" width="6" height="6" fill="#44c894"/><rect x="402" y="546" width="6" height="6" fill="#44c893"/><rect x="408" y="546" width="6" height="6" fill="#44c893"/><rect x="414" y="546" width="6" height="6" fill="#44c893"/><rect x="420" y="546" width="6" height="6" fill="#44c892"/><rect x="426" y="546" width="6" height="6" fill="#44c892"/><rect x="432" y="546" width="6" height="6" fill="#44c892"/><rect x="438" y="546" width="6" height="6" fill="#43c892"/><rect x="444" y="546" width="6" height="6" fill="#43c891"/><rect x="450" y="546" width="6" height="6" fill="#43c88f"/><rect x="456" y="546" width="6" height="6" fill="#43c88e"/><rect x="462" y="546" width="6" height="6" fill="#43c88c"/><rect x="468" y="546" width="6" height="6" fill="#43c88b"/><rect x="474" y="546" width="6" height="6" fill="#43c88a"/><rect x="480" y="546" width="6" height="6" fill="#43c888"/><rect x="486" y="546" width="6" height="6" fill="#43c887"/><rect x="492" y="546" width="6" height="6" fill="#42c885"/><rect x="498" y="546" width="6" height="6" fill="#42c884"/><rect x="504" y="546" width="6" height="6" fill="#42c883"/><rect x="510" y="546" width="6" height="6" fill="#42c881"/><rect x="516" y="546" width="6" height="6" fill="#42c880"/><rect x="522" y="546" width="6" height="6" fill="#42c87e"/><rect x="528" y="546" width="6" height="6" fill="#42c87d"/><rect x="534" y="546" width="6" height="6" fill="#42c87c"/><rect x="540" y="546" width="6" height="6" fill="#41c87a"/><rect x="546" y="546" width="6" height="6" fill="#41c879"/><rect x="552" y="546" width="6" height="6" fill="#41c877"/><rect x="558" y="546" width="6" height="6" fill="#41c876"/><rect x="564" y="546" width="6" height="6" fill="#41c875"/><rect x="570" y="546" width="6" height="6" fill="#41c873"/><rect x="576" y="546" width="6" height="6" fill="#41c872"/><rect x="582" y="546" width="6" height="6" fill="#41c870"/><rect x="588" y="546" width="6" height="6" fill="#40c86f"/><rect x="594" y="546" width="6" height="6" fill="#40c86e"/><rect x="600" y="546" width="6" height="6" fill="#40c86d"/><rect x="606" y="546" width="6" height="6" fill="#40c86b"/><rect x="612" y="546" width="6" height="6" fill="#40c86a"/><rect x="618" y="546" width="6" height="6" fill="#40c869"/><rect x="270" y="552" width="6" height="6" fill="#45c2af"/><rect x="276" y="552" width="6" height="6" fill="#44beb3"/><rect x="282" y="552" width="6" height="6" fill="#43bab7"/><rect x="288" y="552" width="6" height="6" fill="#43b6bb"/><rect x="294" y="552" width="6" height="6" fill="#42b3be"/><rect x="300" y="552" width="6" height="6" fill="#42b1c0"/><rect x="306" y="552" width="6" height="6" fill="#42b0c1"/><rect x="312" y="552" width="6" height="6" fill="#42b0c1"/><rect x="318" y="552" width="6" height="6" fill="#42b2bf"/><rect x="324" y="552" width="6" height="6" fill="#43b4bd"/><rect x="330" y="552" width="6" height="6" fill="#43b7ba"/><rect x="336" y="552" width="6" height="6" fill="#44bab7"/><rect x="342" y="552" width="6" height="6" fill="#44beb3"/><rect x="348" y="552" width="6" height="6" fill="#45c1b0"/><rect x="354" y="552" width="6" height="6" fill="#45c4ad"/><rect x="360" y="552" width="6" height="6" fill="#45c7aa"/><rect x="366" y="552" width="6" height="6" fill="#45c8a4"/><rect x="372" y="552" width="6" height="6" fill="#45c89f"/><rect x="378" y="552" width="6" height="6" fill="#44c89b"/><rect x="384" y="552" width="6" height="6" fill="#44c898"/><rect x="390" y="552" width="6" height="6" fill="#44c896"/><rect x="396" y="552" width="6" height="6" fill="#44c894"/><rect x="402" y="552" width="6" height="6" fill="#44c893"/><rect x="408" y="552" width="6" height="6" fill="#44c893"/><rect x="414" y="552" width="6" height="6" fill="#44c893"/><rect x="420" y="552" width="6" height="6" fill="#44c892"/><rect x="426" y="552" width="6" height="6" fill="#44c892"/><rect x="432" y="552" width="6" height="6" fill="#44c892"/><rect x="438" y="552" width="6" height="6" fill="#43c892"/><rect x="444" y="552" width="6" height="6" fill="#43c891"/><rect x="450" y="552" width="6" height="6" fill="#43c88f"/><rect x="456" y="552" width="6" height="6" fill="#43c88e"/><rect x="462" y="552" width="6" height="6" fill="#43c88c"/><rect x="468" y="552" width="6" height="6" fill="#43c88b"/><rect x="474" y="552" width="6" height="6" fill="#43c88a"/><rect x="480" y="552" width="6" height="6" fill="#43c888"/><rect x="486" y="552" width="6" height="6" fill="#43c887"/><rect x="492" y="552" width="6" height="6" fill="#42c885"/><rect x="498" y="552" width="6" height="6" fill="#42c884"/><rect x="504" y="552" width="6" height="6" fill="#42c883"/><rect x="510" y="552" width="6" height="6" fill="#42c881"/><rect x="516" y="552" width="6" height="6" fill="#42c880"/><rect x="522" y="552" width="6" height="6" fill="#42c87e"/><rect x="528" y="552" width="6" height="6" fill="#42c87d"/><rect x="534" y="552" width="6" height="6" fill="#42c87c"/><rect x="270" y="558" width="6" height="6" fill="#44c0b1"/><rect x="276" y="558" width="6" height="6" fill="#44bbb6"/><rect x="282" y="558" width="6" height="6" fill="#43b7ba"/><rect x="288" y="558" width="6" height="6" fill="#42b2bf"/><rect x="294" y="558" width="6" height="6" fill="#42afc2"/><rect x="300" y="558" width="6" height="6" fill="#42adc4"/><rect x="306" y="558" width="6" height="6" fill="#41acc5"/><rect x="312" y="558" width="6" height="6" fill="#42adc4"/><rect x="318" y="558" width="6" height="6" fill="#42afc2"/><rect x="324" y="558" width="6" height="6" fill="#42b2bf"/><rect x="330" y="558" width="6" height="6" fill="#43b6bb"/><rect x="336" y="558" width="6" height="6" fill="#43bab7"/><rect x="342" y="558" width="6" height="6" fill="#44beb3"/><rect x="348" y="558" width="6" height="6" fill="#45c1b0"/><rect x="354" y="558" width="6" height="6" fill="#45c5ac"/><rect x="360" y="558" width="6" height="6" fill="#45c7aa"/><rect x="366" y="558" width="6" height="6" fill="#45c8a3"/><rect x="372" y="558" width="6" height="6" fill="#45c89e"/><rect x="378" y="558" width="6" height="6" fill="#44c89a"/><rect x="384" y="558" width="6" height="6" fill="#44c898"/><rect x="390" y="558" width="6" height="6" fill="#44c896"/><rect x="396" y="558" width="6" height="6" fill="#44c894"/><rect x="402" y="558" width="6" height="6" fill="#44c893"/><rect x="408" y="558" width="6" height="6" fill="#44c893"/><rect x="414" y="558" width="6" height="6" fill="#44c892"/><rect x="420" y="558" width="6" height="6" fill="#44c892"/><rect x="426" y="558" width="6" height="6" fill="#44c892"/><rect x="432" y="558" width="6" height="6" fill="#44c892"/><rect x="438" y="558" width="6" height="6" fill="#43c892"/><rect x="444" y="558" width="6" height="6" fill="#43c891"/><rect x="450" y="558" width="6" height="6" fill="#43c88f"/><rect x="456" y="558" width="6" height="6" fill="#43c88e"/><rect x="462" y="558" width="6" height="6" fill="#43c88c"/><rect x="468" y="558" width="6" height="6" fill="#43c88b"/><rect x="474" y="558" width="6" height="6" fill="#43c88a"/><rect x="480" y="558" width="6" height="6" fill="#43c888"/><rect x="486" y="558" width="6" height="6" fill="#43c887"/><rect x="492" y="558" width="6" height="6" fill="#42c885"/><rect x="270" y="564" width="6" height="6" fill="#44c0b1"/><rect x="276" y="564" width="6" height="6" fill="#44bbb6"/><rect x="282" y="564" width="6" height="6" fill="#43b6bb"/><rect x="288" y="564" width="6" height="6" fill="#42b2bf"/><rect x="294" y="564" width="6" height="6" fill="#42afc2"/><rect x="300" y="564" width="6" height="6" fill="#41adc4"/><rect x="306" y="564" width="6" height="6" fill="#41acc5"/><rect x="312" y="564" width="6" height="6" fill="#42adc4"/><rect x="318" y="564" width="6" height="6" fill="#42b0c1"/><rect x="324" y="564" width="6" height="6" fill="#42b3be"/><rect x="330" y="564" width="6" height="6" fill="#43b6bb"/><rect x="336" y="564" width="6" height="6" fill="#44bab7"/><rect x="342" y="564" width="6" height="6" fill="#44beb3"/><rect x="348" y="564" width="6" height="6" fill="#45c2af"/><rect x="354" y="564" width="6" height="6" fill="#45c5ac"/><rect x="360" y="564" width="6" height="6" fill="#45c8a9"/><rect x="366" y="564" width="6" height="6" fill="#45c8a3"/><rect x="372" y="564" width="6" height="6" fill="#44c89e"/><rect x="378" y="564" width="6" height="6" fill="#44c89a"/><rect x="384" y="564" width="6" height="6" fill="#44c897"/><rect x="390" y="564" width="6" height="6" fill="#44c895"/><rect x="396" y="564" width="6" height="6" fill="#44c894"/><rect x="402" y="564" width="6" height="6" fill="#44c893"/><rect x="408" y="564" width="6" height="6" fill="#44c893"/><rect x="414" y="564" width="6" height="6" fill="#44c892"/><rect x="420" y="564" width="6" height="6" fill="#44c892"/><rect x="426" y="564" width="6" height="6" fill="#44c892"/><rect x="432" y="564" width="6" height="6" fill="#44c892"/><rect x="438" y="564" width="6" height="6" fill="#43c892"/><rect x="444" y="564" width="6" height="6" fill="#43c891"/><rect x="450" y="564" width="6" height="6" fill="#43c88f"/><rect x="264" y="570" width="6" height="6" fill="#45c6ab"/><rect x="270" y="570" width="6" height="6" fill="#45c2af"/><rect x="276" y="570" width="6" height="6" fill="#44bdb4"/><rect x="282" y="570" width="6" height="6" fill="#43b9b8"/><rect x="288" y="570" width="6" height="6" fill="#43b5bc"/><rect x="294" y="570" width="6" height="6" fill="#42b2bf"/><rect x="300" y="570" width="6" height="6" fill="#42b0c1"/><rect x="306" y="570" width="6" height="6" fill="#42b0c1"/><rect x="312" y="570" width="6" height="6" fill="#42b1c0"/><rect x="318" y="570" width="6" height="6" fill="#42b3be"/><rect x="324" y="570" width="6" height="6" fill="#43b5bc"/><rect x="330" y="570" width="6" height="6" fill="#43b8b9"/><rect x="336" y="570" width="6" height="6" fill="#44bcb5"/><rect x="342" y="570" width="6" height="6" fill="#44bfb2"/><rect x="348" y="570" width="6" height="6" fill="#45c3ae"/><rect x="354" y="570" width="6" height="6" fill="#45c6ab"/><rect x="360" y="570" width="6" height="6" fill="#45c8a7"/><rect x="366" y="570" width="6" height="6" fill="#45c8a2"/><rect x="372" y="570" width="6" height="6" fill="#44c89d"/><rect x="378" y="570" width="6" height="6" fill="#44c89a"/><rect x="384" y="570" width="6" height="6" fill="#44c897"/><rect x="390" y="570" width="6" height="6" fill="#44c895"/><rect x="396" y="570" width="6" height="6" fill="#44c894"/><rect x="402" y="570" width="6" height="6" fill="#44c893"/><rect x="408" y="570" width="6" height="6" fill="#44c893"/><rect x="414" y="570" width="6" height="6" fill="#44c892"/><rect x="264" y="576" width="6" height="6" fill="#45c8a8"/><rect x="270" y="576" width="6" height="6" fill="#45c5ac"/><rect x="276" y="576" width="6" height="6" fill="#45c2af"/><rect x="282" y="576" width="6" height="6" fill="#44beb3"/><rect x="288" y="576" width="6" height="6" fill="#44bbb6"/><rect x="294" y="576" width="6" height="6" fill="#43b8b9"/><rect x="300" y="576" width="6" height="6" fill="#43b7ba"/><rect x="306" y="576" width="6" height="6" fill="#43b6bb"/><rect x="312" y="576" width="6" height="6" fill="#43b6bb"/><rect x="318" y="576" width="6" height="6" fill="#43b7ba"/><rect x="324" y="576" width="6" height="6" fill="#43b9b8"/><rect x="330" y="576" width="6" height="6" fill="#44bcb5"/><rect x="336" y="576" width="6" height="6" fill="#44beb3"/><rect x="342" y="576" width="6" height="6" fill="#45c1b0"/><rect x="348" y="576" width="6" height="6" fill="#45c4ad"/><rect x="354" y="576" width="6" height="6" fill="#45c7aa"/><rect x="360" y="576" width="6" height="6" fill="#45c8a6"/><rect x="366" y="576" width="6" height="6" fill="#45c8a1"/><rect x="372" y="576" width="6" height="6" fill="#44c89c"/><rect x="276" y="582" width="6" height="6" fill="#45c6ab"/><rect x="282" y="582" width="6" height="6" fill="#45c4ad"/><rect x="288" y="582" width="6" height="6" fill="#45c1b0"/><rect x="294" y="582" width="6" height="6" fill="#44bfb2"/><rect x="300" y="582" width="6" height="6" fill="#44bdb4"/><rect x="306" y="582" width="6" height="6" fill="#44bcb5"/><rect x="312" y="582" width="6" height="6" fill="#44bcb5"/><rect x="318" y="582" width="6" height="6" fill="#44bcb5"/><rect x="324" y="582" width="6" height="6" fill="#44bdb4"/><rect x="330" y="582" width="6" height="6" fill="#44bfb2"/><rect x="336" y="582" width="6" height="6" fill="#45c1b0"/><rect x="342" y="582" width="6" height="6" fill="#45c3ae"/><rect x="348" y="582" width="6" height="6" fill="#45c5ac"/><rect x="324" y="588" width="6" height="6" fill="#45c1b0"/><rect x="330" y="588" width="6" height="6" fill="#45c2af"/><rect x="336" y="588" width="6" height="6" fill="#45c3ae"/></g>
<g filter="url(#sm2)"><polygon points="334,186 438,160 362,252" fill="url(#lg1)"/><polygon points="590,216 493,264 490,236 575,196" fill="#4cc8a8" opacity="0.7"/></g>
<g filter="url(#sm3)" fill="none" stroke="url(#bg1)"><path d="M330,484 L600,443" stroke-width="9"/><path d="M330,513 L600,472" stroke-width="6"/><path d="M330,537 L600,496" stroke-width="6"/></g>
<path d="M503.8 288.6L503.5 287.7M400.0 164.8L408.1 161.7M505.1 255.8L497.6 274.8M327.6 192.2L339.0 243.9M491.0 167.7L480.0 183.0M351.7 183.1L354.4 182.0M569.4 207.6L576.4 222.6M498.1 240.8L505.1 255.8M488.1 134.3L473.4 128.6M451.4 270.8L446.0 262.2M486.9 121.0L367.8 177.0M501.2 283.2L488.5 286.2M448.3 146.5L470.0 150.0M463.2 249.0L456.9 248.6M481.7 242.5L470.0 205.0M542.6 220.1L540.0 192.0M556.0 213.9L563.0 228.9M520.4 230.4L515.9 232.5M439.3 258.0L432.7 263.8M341.4 306.0L339.0 243.9M515.0 148.0L527.0 149.7M383.9 170.9L381.2 171.9M394.9 293.2L394.0 294.2M578.3 203.5L580.8 220.6M465.2 257.3L467.3 243.7M500.6 257.9L496.8 272.6M496.8 272.6L486.0 280.9M342.0 254.0L341.0 258.4M327.6 192.2L340.0 321.7M416.1 158.7L460.0 136.2M486.9 121.0L487.5 127.7M347.1 253.2L346.7 247.6M490.9 254.2L493.6 242.9M490.4 161.0L470.0 150.0M538.2 222.1L545.2 237.1M449.3 247.2L438.1 242.7M560.5 211.8L540.0 192.0M430.3 265.3L432.7 263.8M439.3 258.0L428.8 243.7M487.5 127.7L503.9 132.7M491.0 167.7L491.6 174.3M372.5 266.6L359.0 250.0M564.9 209.7L571.9 224.7M484.7 247.0L478.7 265.0M432.7 263.8L445.7 262.5M531.8 243.4L527.4 245.4M547.1 218.0L549.6 235.1M438.3 297.1L438.0 292.5M480.0 183.0L434.9 151.6M392.4 290.0L394.0 294.2M515.5 141.2L538.6 158.2M470.5 282.5L471.0 291.2M375.9 173.9L473.4 128.6M509.5 253.7L498.7 277.9M480.0 183.0L500.0 205.0M449.3 247.2L439.3 258.0M439.3 258.0L446.0 262.2M573.8 205.6L576.6 199.4M481.1 270.3L483.6 275.6M531.8 243.4L509.4 300.5M485.9 281.2L480.4 283.3M578.3 203.5L573.8 205.6M507.0 236.6L502.5 238.7M489.3 147.7L503.9 132.7M401.0 278.4L405.0 293.8M381.2 171.9L473.4 128.6M465.2 257.3L454.9 262.7M485.3 261.7L491.7 262.0M432.2 152.6L460.0 136.2M492.2 181.0L500.0 205.0M356.4 252.2L359.0 250.0M377.6 252.7L374.8 251.8M432.7 263.8L431.6 276.1M514.0 251.6L509.5 253.7M341.0 258.4L339.0 243.9M459.8 277.1L478.7 265.0M470.0 150.0L473.4 128.6M564.9 209.7L560.5 211.8M490.4 161.0L491.0 167.7M503.8 288.6L505.3 293.9M409.9 280.1L428.5 269.4M536.3 241.3L515.3 309.8M440.3 149.5L460.0 136.2M485.9 281.2L486.0 280.9M394.9 293.2L392.4 290.0M394.0 294.2L405.0 293.8M500.6 257.9L496.2 259.9M433.3 295.0L438.0 292.5M490.9 291.6L493.3 296.9M528.0 175.0L500.0 205.0M514.0 251.6L503.5 287.7M340.0 238.0L337.0 229.4M465.2 257.3L463.2 249.0M405.0 293.8L416.0 293.4M489.2 244.9L484.7 247.0M524.8 228.4L531.8 243.4M500.0 205.0L470.0 205.0M502.5 238.7L500.0 205.0M456.7 293.8L447.9 295.0M374.8 251.8L386.1 252.4M481.7 242.5L493.6 242.9M449.1 246.5L450.8 242.6M547.1 218.0L542.6 220.1M392.4 290.0L388.4 292.4M471.0 291.2L482.0 290.7M359.8 180.0L367.8 177.0M409.7 242.0L408.2 253.1M439.3 258.0L432.0 260.4M459.8 277.1L465.2 257.3M515.5 141.2L527.0 149.7M489.8 267.0L481.1 270.3M533.7 224.2L536.3 241.3M554.1 233.0L515.3 309.8M338.0 222.0L337.0 229.4M409.9 280.1L416.0 293.4M343.0 272.8L341.0 258.4M438.1 242.7L428.8 243.7M489.8 154.3L486.0 150.0M507.0 236.6L514.0 251.6M408.1 161.7L416.1 158.7M470.5 282.5L481.1 270.3M437.7 298.9L427.0 292.9M374.0 281.0L383.0 294.7M492.2 181.0L528.0 175.0M456.7 293.8L472.2 296.8M470.5 282.5L480.4 283.3M408.2 253.1L428.8 243.7M350.0 296.0L342.2 289.4M472.2 296.8L482.0 290.7M470.0 150.0L486.0 150.0M491.8 258.3L491.7 262.0M503.8 288.6L490.9 291.6M407.2 248.5L408.2 253.1M430.3 265.3L432.0 260.4M558.6 230.9L521.2 326.2M364.9 282.6L372.0 295.1M515.9 232.5L518.4 249.6M433.3 295.0L427.0 292.9M489.8 154.3L505.0 168.0M454.9 262.7L446.0 262.2M454.9 262.7L454.4 268.3M558.6 230.9L554.1 233.0M352.0 219.0L335.0 215.0M573.8 205.6L576.4 222.6M486.9 121.0L473.4 128.6M450.8 242.6L457.9 242.4M498.7 277.9L488.5 286.2M480.4 283.3L488.5 286.2M496.8 272.6L497.6 274.8M567.5 226.8L571.9 224.7M327.6 192.2L335.0 205.0M426.2 264.3L428.8 243.7M514.0 251.6L501.2 283.2M480.2 243.1L481.7 242.5M460.0 136.2L473.4 128.6M459.8 277.1L456.9 277.2M549.6 235.1L515.3 309.8M392.0 167.8L460.0 136.2M353.6 286.4L361.0 295.6M489.8 267.0L492.9 267.3M533.7 224.2L529.3 226.3M346.7 247.6L342.0 254.0M440.3 149.5L480.0 183.0M522.9 247.5L503.8 288.6M540.7 239.2L536.3 241.3M496.2 259.9L492.9 267.3M446.0 262.2L454.4 268.3M432.2 152.6L434.9 151.6M374.0 281.0L372.0 295.1M493.6 242.9L500.6 257.9M486.0 280.9L497.6 274.8M527.4 245.4L522.9 247.5M472.2 296.8L471.0 291.2M392.0 167.8L394.7 166.8M501.2 283.2L503.5 287.7M564.9 209.7L540.0 192.0M551.6 215.9L558.6 230.9M364.9 282.6L361.0 295.6M346.7 247.6L359.0 250.0M449.3 247.2L454.9 262.7M515.9 232.5L511.4 234.6M522.9 247.5L508.7 299.2M401.0 278.4L392.4 290.0M538.6 158.2L568.0 180.4M585.3 218.5L580.8 220.6M502.5 238.7L505.1 255.8M374.0 281.0L364.9 282.6M483.6 275.6L486.0 280.9M374.0 281.0L385.7 289.1M482.0 290.7L488.5 286.2M408.2 253.1L407.0 256.8M335.6 189.2L341.0 187.1M573.8 205.6L569.4 207.6M386.1 252.4L400.0 255.7M451.4 270.8L454.4 268.3M424.2 155.6L421.5 156.7M498.7 277.9L501.2 283.2M488.1 134.3L488.7 141.0M490.9 254.2L491.8 258.3M491.6 174.3L505.0 168.0M560.5 211.8L563.0 228.9M350.0 296.0L361.0 295.6M509.5 253.7L505.1 255.8M470.0 150.0L480.0 183.0M488.7 141.0L473.4 128.6M456.9 248.6L457.9 242.4M505.1 255.8L496.8 272.6M346.7 247.6L340.0 238.0M533.7 224.2L540.7 239.2M347.1 253.2L341.0 258.4M351.5 252.1L356.4 252.2M401.0 278.4L407.0 256.8M416.0 293.4L427.0 292.9M423.6 281.3L427.0 292.9M388.4 292.4L383.0 294.7M490.9 254.2L485.3 261.7M528.0 175.0L553.3 169.3M426.2 264.3L432.0 260.4M427.0 292.9L438.0 292.5M426.2 264.3L407.0 256.8M485.3 261.7L478.7 265.0M487.5 127.7L488.1 134.3M460.7 242.9L456.9 248.6M542.6 220.1L545.2 237.1M335.0 205.0L335.0 215.0M428.0 280.4L423.6 281.3M383.3 269.4L372.5 266.6M563.0 228.9L527.1 339.0M438.1 242.7L449.1 246.5M456.9 248.6L454.9 262.7M489.3 147.7L515.0 148.0M449.3 247.2L456.9 248.6M569.4 207.6L571.9 224.7M374.0 281.0L383.3 269.4M538.6 158.2L553.3 169.3M529.3 226.3L531.8 243.4M456.9 277.2L455.5 275.3M538.2 222.1L540.0 192.0M446.2 279.1L449.0 292.0M339.0 243.9L337.0 229.4M491.0 167.7L470.0 150.0M408.2 253.1L426.2 264.3M502.5 238.7L498.1 240.8M490.9 291.6L503.5 287.7M491.6 174.3L492.2 181.0M507.0 236.6L500.0 205.0M426.2 264.3L430.3 265.3M351.5 252.1L359.0 250.0M451.4 270.8L445.7 262.5M491.6 174.3L480.0 183.0M359.8 180.0L354.4 182.0M489.8 267.0L491.7 262.0M560.5 211.8L556.0 213.9M578.3 203.5L576.6 199.4M481.7 242.5L500.0 205.0M490.9 254.2L484.7 247.0M520.4 230.4L527.4 245.4M488.1 134.3L503.9 132.7M515.0 148.0L515.5 141.2M485.3 261.7L491.8 258.3M347.1 253.2L343.0 272.8M438.1 242.7L450.8 242.6M488.7 141.0L486.0 150.0M449.3 247.2L446.0 262.2M428.5 269.4L431.6 276.1M503.9 132.7L538.6 158.2M511.4 234.6L514.0 251.6M423.6 281.3L416.0 293.4M342.2 289.4L339.0 243.9M480.1 286.8L488.5 286.2M528.0 175.0L538.6 158.2M491.7 262.0L492.7 262.0M554.1 233.0L549.6 235.1M524.8 228.4L500.0 205.0M540.7 239.2L515.3 309.8M424.2 155.6L460.0 136.2M385.7 289.1L383.0 294.7M383.3 269.4L401.0 278.4M563.0 228.9L521.2 326.2M356.4 252.2L372.5 266.6M335.0 205.0L349.0 203.0M485.3 261.7L489.8 267.0M459.8 277.1L454.4 268.3M505.0 168.0L528.0 175.0M388.4 292.4L385.7 289.1M533.7 224.2L540.0 192.0M529.3 226.3L524.8 228.4M460.3 252.9L454.9 262.7M338.0 222.0L352.0 219.0M446.2 279.1L438.0 292.5M502.5 238.7L509.5 253.7M540.0 192.0L500.0 205.0M347.1 253.2L351.5 252.1M470.5 282.5L460.0 291.6M490.9 254.2L496.2 259.9M505.3 293.9L493.3 296.9M367.8 177.0L375.9 173.9M439.3 258.0L445.7 262.5M515.0 148.0L503.9 132.7M527.0 149.7L538.6 158.2M372.5 266.6L343.0 272.8M478.7 265.0L481.1 270.3M578.3 203.5L585.3 218.5M383.9 170.9L473.4 128.6M505.0 168.0L515.0 148.0M455.5 275.3L446.2 279.1M460.3 252.9L463.2 249.0M496.8 272.6L483.6 275.6M511.4 234.6L507.0 236.6M485.3 261.7L484.7 247.0M551.6 215.9L540.0 192.0M327.6 192.2L335.0 215.0M528.0 175.0L527.0 149.7M377.6 252.7L386.1 252.4M498.1 240.8L500.6 257.9M456.7 293.8L460.0 291.6M470.0 150.0L460.0 136.2M481.7 242.5L484.7 247.0M335.6 189.2L335.0 205.0M501.2 283.2L490.9 291.6M424.2 155.6L432.2 152.6M465.2 257.3L478.7 265.0M463.2 249.0L467.3 243.7M489.3 147.7L489.8 154.3M481.7 242.5L462.0 228.0M490.4 161.0L486.0 150.0M556.0 213.9L558.6 230.9M372.0 295.1L383.0 294.7M430.3 265.3L428.5 269.4M480.2 243.1L484.7 247.0M491.8 258.3L492.7 262.0M340.0 238.0L339.0 243.9M527.4 245.4L508.7 299.2M465.2 257.3L480.2 243.1M407.2 248.5L400.0 255.7M356.4 252.2L343.0 272.8M480.2 243.1L462.0 228.0M529.3 226.3L536.3 241.3M421.5 156.7L460.0 136.2M460.3 252.9L456.9 248.6M455.5 275.3L454.4 268.3M377.6 252.7L383.3 269.4M465.2 257.3L454.4 268.3M451.4 270.8L455.5 275.3M447.9 295.0L449.0 292.0M492.7 262.0L492.9 267.3M547.1 218.0L554.1 233.0M346.7 247.6L339.0 243.9M374.8 251.8L372.5 266.6M522.9 247.5L518.4 249.6M463.2 249.0L460.7 242.9M409.9 280.1L405.0 293.8M488.7 141.0L489.3 147.7M490.4 161.0L505.0 168.0M538.2 222.1L540.7 239.2M383.9 170.9L460.0 136.2M580.8 220.6L576.4 222.6M439.9 298.4L438.0 292.5M486.0 280.9L488.5 286.2M408.2 253.1L400.0 255.7M498.1 240.8L493.6 242.9M456.7 293.8L449.0 292.0M540.0 192.0L568.0 180.4M392.4 290.0L385.7 289.1M470.5 282.5L480.1 286.8M440.3 149.5L434.9 151.6M375.9 173.9L381.2 171.9M448.3 146.5L480.0 183.0M409.7 242.0L386.1 252.4M485.9 281.2L483.6 275.6M556.0 213.9L551.6 215.9M509.5 253.7L501.2 283.2M460.3 252.9L465.2 257.3M401.0 278.4L400.0 255.7M352.0 219.0L337.0 229.4M564.9 209.7L568.0 180.4M456.9 277.2L460.0 291.6M511.4 234.6L500.0 205.0M447.9 295.0L438.0 292.5M518.4 249.6L503.5 287.7M481.7 242.5L498.1 240.8M487.5 127.7L473.4 128.6M503.8 288.6L508.7 299.2M353.6 286.4L350.0 296.0M361.0 295.6L372.0 295.1M409.9 280.1L423.6 281.3M486.9 121.0L503.9 132.7M407.2 248.5L386.1 252.4M400.0 164.8L460.0 136.2M576.4 222.6L571.9 224.7M446.0 262.2L445.7 262.5M340.0 321.7L339.0 243.9M568.0 180.4L576.6 199.4M524.8 228.4L527.4 245.4M470.5 282.5L478.7 265.0M340.0 238.0L355.0 234.0M407.0 256.8L400.0 255.7M482.0 290.7L493.3 296.9M492.2 181.0L505.0 168.0M450.8 242.6L456.9 248.6M327.6 192.2L335.6 189.2M529.3 226.3L500.0 205.0M465.2 257.3L484.7 247.0M426.2 264.3L428.5 269.4M540.0 192.0L553.3 169.3M438.0 292.5L449.0 292.0M567.5 226.8L527.1 339.0M481.7 242.5L489.2 244.9M409.9 280.1L401.0 278.4M480.1 286.8L482.0 290.7M472.2 296.8L460.0 291.6M459.8 277.1L470.5 282.5M491.8 258.3L496.2 259.9M585.3 218.5L576.6 199.4M364.9 282.6L372.5 266.6M515.9 232.5L522.9 247.5M489.8 267.0L483.6 275.6M346.7 247.6L355.0 234.0M459.8 277.1L455.5 275.3M400.0 164.8L394.7 166.8M480.0 183.0L470.0 205.0M401.0 278.4L385.7 289.1M383.9 170.9L392.0 167.8M507.0 236.6L509.5 253.7M470.5 282.5L483.6 275.6M553.3 169.3L568.0 180.4M573.8 205.6L580.8 220.6M431.6 276.1L438.0 292.5M337.0 229.4L335.0 215.0M456.9 277.2L449.0 292.0M498.7 277.9L486.0 280.9M549.6 235.1L545.2 237.1M343.7 186.1L341.0 187.1M564.9 209.7L567.5 226.8M439.3 258.0L438.1 242.7M428.0 280.4L438.0 292.5M503.8 288.6L493.3 296.9M567.5 226.8L563.0 228.9M394.9 293.2L401.0 278.4M440.3 149.5L448.3 146.5M353.6 286.4L343.0 272.8M496.2 259.9L492.7 262.0M556.0 213.9L540.0 192.0M524.8 228.4L520.4 230.4M374.0 281.0L372.5 266.6M505.0 168.0L527.0 149.7M488.7 141.0L503.9 132.7M492.2 181.0L480.0 183.0M542.6 220.1L538.2 222.1M480.1 286.8L471.0 291.2M489.3 147.7L486.0 150.0M480.4 283.3L480.1 286.8M489.8 267.0L496.8 272.6M338.0 222.0L335.0 215.0M518.4 249.6L514.0 251.6M364.9 282.6L343.0 272.8M489.8 154.3L515.0 148.0M456.9 277.2L446.2 279.1M394.7 166.8L460.0 136.2M496.2 259.9L496.8 272.6M527.4 245.4L509.4 300.5M536.3 241.3L531.8 243.4M346.7 247.6L351.5 252.1M448.3 146.5L460.0 136.2M560.5 211.8L567.5 226.8M409.9 280.1L407.0 256.8M428.0 280.4L427.0 292.9M551.6 215.9L554.1 233.0M353.6 286.4L342.2 289.4M349.0 203.0L335.0 215.0M342.2 289.4L341.0 258.4M351.5 252.1L343.0 272.8M492.9 267.3L496.8 272.6M431.6 276.1L445.7 262.5M482.0 290.7L490.9 291.6M529.3 226.3L540.0 192.0M542.6 220.1L549.6 235.1M498.1 240.8L500.0 205.0M428.0 280.4L428.5 269.4M383.3 269.4L400.0 255.7M364.9 282.6L353.6 286.4M489.8 154.3L490.4 161.0M505.1 255.8L498.7 277.9M488.5 286.2L490.9 291.6M569.4 207.6L576.6 199.4M383.0 294.7L394.0 294.2M520.4 230.4L500.0 205.0M540.0 192.0L528.0 175.0M485.3 261.7L481.1 270.3M480.4 283.3L483.6 275.6M335.6 189.2L349.0 203.0M493.6 242.9L489.2 244.9M460.7 242.9L467.3 243.7M480.2 243.1L467.3 243.7M409.9 280.1L426.2 264.3M343.7 186.1L351.7 183.1M428.0 280.4L431.6 276.1M490.9 254.2L489.2 244.9M531.8 243.4L515.3 309.8M460.0 291.6L471.0 291.2M449.3 247.2L449.1 246.5M551.6 215.9L547.1 218.0M503.9 132.7L515.5 141.2M428.5 269.4L432.7 263.8M428.5 269.4L423.6 281.3M446.2 279.1L445.7 262.5M511.4 234.6L518.4 249.6M554.1 233.0L521.2 326.2M342.2 289.4L343.0 272.8M355.0 234.0L337.0 229.4M327.6 192.2L337.0 229.4M416.1 158.7L421.5 156.7M491.0 167.7L505.0 168.0M569.4 207.6L564.9 209.7M432.0 260.4L432.7 263.8M486.9 121.0L375.9 173.9M377.6 252.7L372.5 266.6M505.1 255.8L500.6 257.9M460.7 242.9L457.9 242.4M498.7 277.9L497.6 274.8M545.2 237.1L540.7 239.2M383.3 269.4L385.7 289.1M520.4 230.4L522.9 247.5M547.1 218.0L540.0 192.0M462.0 228.0L470.0 205.0M488.7 141.0L470.0 150.0M394.9 293.2L405.0 293.8M449.3 247.2L450.8 242.6M545.2 237.1L515.3 309.8M569.4 207.6L568.0 180.4M408.1 161.7L460.0 136.2M446.2 279.1L431.6 276.1M459.8 277.1L460.0 291.6M563.0 228.9L558.6 230.9M515.9 232.5L500.0 205.0M347.1 253.2L342.0 254.0M342.0 254.0L339.0 243.9M388.4 292.4L394.0 294.2M522.9 247.5L503.5 287.7M449.0 292.0L460.0 291.6M451.4 270.8L446.2 279.1M434.9 151.6L460.0 136.2M491.7 262.0L492.9 267.3M432.0 260.4L428.8 243.7M383.3 269.4L386.1 252.4M485.9 281.2L488.5 286.2M490.9 254.2L500.6 257.9M538.2 222.1L533.7 224.2M267.2 594.7L276.3 595.7M267.2 594.7L267.8 584.4M267.2 594.7L274.9 582.8M267.8 584.4L274.9 582.8M267.8 584.4L269.1 572.1M274.9 582.8L269.1 572.1M269.1 572.1L276.9 570.5M269.1 572.1L267.4 559.2M269.1 572.1L275.7 558.9M267.4 559.2L275.7 558.9M267.4 559.2L268.7 549.6M275.7 558.9L268.7 549.6M268.7 549.6L276.1 546.5M268.7 549.6L268.3 534.8M268.7 549.6L275.3 535.1M268.3 534.8L275.3 535.1M268.3 534.8L267.0 525.6M275.3 535.1L267.0 525.6M267.0 525.6L275.6 522.0M267.0 525.6L268.2 510.3M267.0 525.6L276.4 509.6M268.2 510.3L276.4 509.6M268.2 510.3L267.9 498.8M276.4 509.6L267.9 498.8M267.9 498.8L274.3 497.6M267.9 498.8L267.4 487.5M267.9 498.8L276.5 486.5M267.4 487.5L276.5 486.5M267.4 487.5L267.3 476.6M276.5 486.5L267.3 476.6M267.3 476.6L274.5 473.7M267.3 476.6L267.9 463.4M267.3 476.6L275.9 461.8M267.9 463.4L275.9 461.8M267.9 463.4L268.4 452.8M275.9 461.8L268.4 452.8M268.4 452.8L274.2 451.5M268.4 452.8L266.4 439.7M268.4 452.8L274.3 438.6M266.4 439.7L274.3 438.6M266.4 439.7L267.0 427.8M274.3 438.6L267.0 427.8M267.0 427.8L275.5 426.4M267.0 427.8L266.7 416.0M267.0 427.8L275.4 416.2M266.7 416.0L275.4 416.2M266.7 416.0L268.0 403.7M275.4 416.2L268.0 403.7M268.0 403.7L275.0 401.6M268.0 403.7L267.0 391.6M268.0 403.7L273.7 390.7M267.0 391.6L273.7 390.7M267.0 391.6L266.9 378.6M273.7 390.7L266.9 378.6M266.9 378.6L275.1 379.1M266.9 378.6L268.2 366.9M266.9 378.6L275.0 366.4M268.2 366.9L275.0 366.4M268.2 366.9L269.2 356.7M275.0 366.4L269.2 356.7M269.2 356.7L274.8 354.4M269.2 356.7L266.0 344.3M269.2 356.7L275.7 342.5M266.0 344.3L275.7 342.5M266.0 344.3L266.9 332.0M275.7 342.5L266.9 332.0M266.9 332.0L275.6 332.8M266.9 332.0L268.0 318.0M266.9 332.0L276.0 317.3M268.0 318.0L276.0 317.3M268.0 318.0L267.8 307.7M276.0 317.3L267.8 307.7M267.8 307.7L277.2 307.2M267.8 307.7L269.0 294.8M267.8 307.7L274.6 295.8M276.3 595.7L284.9 592.5M276.3 595.7L274.9 582.8M284.9 592.5L274.9 582.8M274.9 582.8L283.3 581.4M274.9 582.8L276.9 570.5M274.9 582.8L281.9 568.7M276.9 570.5L281.9 568.7M276.9 570.5L275.7 558.9M281.9 568.7L275.7 558.9M275.7 558.9L283.0 558.2M275.7 558.9L276.1 546.5M275.7 558.9L282.5 545.8M276.1 546.5L282.5 545.8M276.1 546.5L275.3 535.1M282.5 545.8L275.3 535.1M275.3 535.1L283.7 534.0M275.3 535.1L275.6 522.0M275.3 535.1L283.9 522.2M275.6 522.0L283.9 522.2M275.6 522.0L276.4 509.6M283.9 522.2L276.4 509.6M276.4 509.6L283.5 511.6M276.4 509.6L274.3 497.6M276.4 509.6L283.6 497.9M274.3 497.6L283.6 497.9M274.3 497.6L276.5 486.5M283.6 497.9L276.5 486.5M276.5 486.5L283.7 484.8M276.5 486.5L274.5 473.7M276.5 486.5L282.7 474.5M274.5 473.7L282.7 474.5M274.5 473.7L275.9 461.8M282.7 474.5L275.9 461.8M275.9 461.8L283.6 463.3M275.9 461.8L274.2 451.5M275.9 461.8L283.0 448.3M274.2 451.5L283.0 448.3M274.2 451.5L274.3 438.6M283.0 448.3L274.3 438.6M274.3 438.6L284.9 438.8M274.3 438.6L275.5 426.4M274.3 438.6L281.9 427.1M275.5 426.4L281.9 427.1M275.5 426.4L275.4 416.2M281.9 427.1L275.4 416.2M275.4 416.2L283.0 411.9M275.4 416.2L275.0 401.6M275.4 416.2L282.6 401.2M275.0 401.6L282.6 401.2M275.0 401.6L273.7 390.7M282.6 401.2L273.7 390.7M273.7 390.7L284.6 389.0M273.7 390.7L275.1 379.1M273.7 390.7L282.7 377.5M275.1 379.1L282.7 377.5M275.1 379.1L275.0 366.4M282.7 377.5L275.0 366.4M275.0 366.4L282.6 364.8M275.0 366.4L274.8 354.4M275.0 366.4L283.2 354.8M274.8 354.4L283.2 354.8M274.8 354.4L275.7 342.5M283.2 354.8L275.7 342.5M275.7 342.5L283.6 340.8M275.7 342.5L275.6 332.8M275.7 342.5L281.9 329.9M275.6 332.8L281.9 329.9M275.6 332.8L276.0 317.3M281.9 329.9L276.0 317.3M276.0 317.3L282.3 317.1M276.0 317.3L277.2 307.2M276.0 317.3L281.3 307.7M277.2 307.2L281.3 307.7M277.2 307.2L274.6 295.8M281.3 307.7L274.6 295.8M284.9 592.5L290.4 594.5M284.9 592.5L283.3 581.4M284.9 592.5L292.7 580.1M283.3 581.4L292.7 580.1M283.3 581.4L281.9 568.7M292.7 580.1L281.9 568.7M281.9 568.7L289.6 571.3M281.9 568.7L283.0 558.2M281.9 568.7L289.5 556.1M283.0 558.2L289.5 556.1M283.0 558.2L282.5 545.8M289.5 556.1L282.5 545.8M282.5 545.8L290.5 545.1M282.5 545.8L283.7 534.0M282.5 545.8L291.5 533.0M283.7 534.0L291.5 533.0M283.7 534.0L283.9 522.2M291.5 533.0L283.9 522.2M283.9 522.2L289.6 521.1M283.9 522.2L283.5 511.6M283.9 522.2L290.7 510.5M283.5 511.6L290.7 510.5M283.5 511.6L283.6 497.9M290.7 510.5L283.6 497.9M283.6 497.9L290.5 495.3M283.6 497.9L283.7 484.8M283.6 497.9L289.5 486.1M283.7 484.8L289.5 486.1M283.7 484.8L282.7 474.5M289.5 486.1L282.7 474.5M282.7 474.5L290.0 470.5M282.7 474.5L283.6 463.3M282.7 474.5L289.9 460.6M283.6 463.3L289.9 460.6M283.6 463.3L283.0 448.3M289.9 460.6L283.0 448.3M283.0 448.3L291.7 447.6M283.0 448.3L284.9 438.8M283.0 448.3L291.2 437.4M284.9 438.8L291.2 437.4M284.9 438.8L281.9 427.1M291.2 437.4L281.9 427.1M281.9 427.1L289.8 424.4M281.9 427.1L283.0 411.9M281.9 427.1L292.3 414.3M283.0 411.9L292.3 414.3M283.0 411.9L282.6 401.2M292.3 414.3L282.6 401.2M282.6 401.2L291.4 401.0M282.6 401.2L284.6 389.0M282.6 401.2L291.6 388.5M284.6 389.0L291.6 388.5M284.6 389.0L282.7 377.5M291.6 388.5L282.7 377.5M282.7 377.5L290.4 375.8M282.7 377.5L282.6 364.8M282.7 377.5L290.5 364.5M282.6 364.8L290.5 364.5M282.6 364.8L283.2 354.8M290.5 364.5L283.2 354.8M283.2 354.8L293.3 352.4M283.2 354.8L283.6 340.8M283.2 354.8L291.8 341.9M283.6 340.8L291.8 341.9M283.6 340.8L281.9 329.9M291.8 341.9L281.9 329.9M281.9 329.9L290.3 329.8M281.9 329.9L282.3 317.1M281.9 329.9L288.3 316.7M282.3 317.1L288.3 316.7M282.3 317.1L281.3 307.7M288.3 316.7L281.3 307.7M281.3 307.7L291.4 302.2M281.3 307.7L283.9 292.8M281.3 307.7L289.3 293.7M290.4 594.5L297.9 592.8M290.4 594.5L292.7 580.1M297.9 592.8L292.7 580.1M292.7 580.1L298.3 580.1M292.7 580.1L289.6 571.3M292.7 580.1L297.8 566.2M289.6 571.3L297.8 566.2M289.6 571.3L289.5 556.1M297.8 566.2L289.5 556.1M289.5 556.1L297.3 556.2M289.5 556.1L290.5 545.1M289.5 556.1L298.1 542.6M290.5 545.1L298.1 542.6M290.5 545.1L291.5 533.0M298.1 542.6L291.5 533.0M291.5 533.0L296.4 531.6M291.5 533.0L289.6 521.1M291.5 533.0L297.7 519.1M289.6 521.1L297.7 519.1M289.6 521.1L290.7 510.5M297.7 519.1L290.7 510.5M290.7 510.5L297.7 507.8M290.7 510.5L290.5 495.3M290.7 510.5L298.3 496.5M290.5 495.3L298.3 496.5M290.5 495.3L289.5 486.1M298.3 496.5L289.5 486.1M289.5 486.1L298.9 484.8M289.5 486.1L290.0 470.5M289.5 486.1L298.8 471.2M290.0 470.5L298.8 471.2M290.0 470.5L289.9 460.6M298.8 471.2L289.9 460.6M289.9 460.6L297.9 460.0M289.9 460.6L291.7 447.6M289.9 460.6L297.7 448.0M291.7 447.6L297.7 448.0M291.7 447.6L291.2 437.4M297.7 448.0L291.2 437.4M291.2 437.4L299.2 434.7M291.2 437.4L289.8 424.4M291.2 437.4L296.2 424.7M289.8 424.4L296.2 424.7M289.8 424.4L292.3 414.3M296.2 424.7L292.3 414.3M292.3 414.3L298.0 412.2M292.3 414.3L291.4 401.0M292.3 414.3L296.7 401.2M291.4 401.0L296.7 401.2M291.4 401.0L291.6 388.5M296.7 401.2L291.6 388.5M291.6 388.5L298.7 387.4M291.6 388.5L290.4 375.8M291.6 388.5L297.6 375.6M290.4 375.8L297.6 375.6M290.4 375.8L290.5 364.5M297.6 375.6L290.5 364.5M290.5 364.5L297.8 363.2M290.5 364.5L293.3 352.4M290.5 364.5L296.9 352.8M293.3 352.4L296.9 352.8M293.3 352.4L291.8 341.9M296.9 352.8L291.8 341.9M291.8 341.9L298.0 339.6M291.8 341.9L290.3 329.8M291.8 341.9L298.1 325.1M290.3 329.8L298.1 325.1M290.3 329.8L288.3 316.7M298.1 325.1L288.3 316.7M288.3 316.7L298.5 315.2M288.3 316.7L291.4 302.2M288.3 316.7L297.7 303.6M291.4 302.2L297.7 303.6M291.4 302.2L289.3 293.7M297.7 303.6L289.3 293.7M297.9 592.8L304.4 591.6M297.9 592.8L298.3 580.1M297.9 592.8L305.4 577.7M298.3 580.1L305.4 577.7M298.3 580.1L297.8 566.2M305.4 577.7L297.8 566.2M297.8 566.2L304.9 566.8M297.8 566.2L297.3 556.2M297.8 566.2L306.4 554.2M297.3 556.2L306.4 554.2M297.3 556.2L298.1 542.6M306.4 554.2L298.1 542.6M298.1 542.6L306.4 544.5M298.1 542.6L296.4 531.6M298.1 542.6L305.3 529.2M296.4 531.6L305.3 529.2M296.4 531.6L297.7 519.1M305.3 529.2L297.7 519.1M297.7 519.1L304.4 517.0M297.7 519.1L297.7 507.8M297.7 519.1L304.9 505.7M297.7 507.8L304.9 505.7M297.7 507.8L298.3 496.5M304.9 505.7L298.3 496.5M298.3 496.5L304.2 494.9M298.3 496.5L298.9 484.8M298.3 496.5L302.9 481.1M298.9 484.8L302.9 481.1M298.9 484.8L298.8 471.2M302.9 481.1L298.8 471.2M298.8 471.2L307.5 471.4M298.8 471.2L297.9 460.0M298.8 471.2L306.0 458.8M297.9 460.0L306.0 458.8M297.9 460.0L297.7 448.0M306.0 458.8L297.7 448.0M297.7 448.0L307.3 446.9M297.7 448.0L299.2 434.7M297.7 448.0L305.6 433.1M299.2 434.7L305.6 433.1M299.2 434.7L296.2 424.7M305.6 433.1L296.2 424.7M296.2 424.7L305.4 421.6M296.2 424.7L298.0 412.2M296.2 424.7L304.8 409.7M298.0 412.2L304.8 409.7M298.0 412.2L296.7 401.2M304.8 409.7L296.7 401.2M296.7 401.2L305.5 398.0M296.7 401.2L298.7 387.4M296.7 401.2L306.4 385.0M298.7 387.4L306.4 385.0M298.7 387.4L297.6 375.6M306.4 385.0L297.6 375.6M297.6 375.6L305.3 376.2M297.6 375.6L297.8 363.2M297.6 375.6L305.5 363.6M297.8 363.2L305.5 363.6M297.8 363.2L296.9 352.8M305.5 363.6L296.9 352.8M296.9 352.8L306.6 351.7M296.9 352.8L298.0 339.6M296.9 352.8L306.2 337.0M298.0 339.6L306.2 337.0M298.0 339.6L298.1 325.1M306.2 337.0L298.1 325.1M298.1 325.1L305.2 326.0M298.1 325.1L298.5 315.2M298.1 325.1L304.0 313.9M298.5 315.2L304.0 313.9M298.5 315.2L297.7 303.6M304.0 313.9L297.7 303.6M297.7 303.6L304.2 300.7M297.7 303.6L297.0 292.3M297.7 303.6L305.7 290.3M304.4 591.6L313.5 589.6M304.4 591.6L305.4 577.7M313.5 589.6L305.4 577.7M305.4 577.7L312.3 576.6M305.4 577.7L304.9 566.8M305.4 577.7L313.4 565.1M304.9 566.8L313.4 565.1M304.9 566.8L306.4 554.2M313.4 565.1L306.4 554.2M306.4 554.2L313.0 550.8M306.4 554.2L306.4 544.5M306.4 554.2L310.3 541.6M306.4 544.5L310.3 541.6M306.4 544.5L305.3 529.2M310.3 541.6L305.3 529.2M305.3 529.2L313.3 530.6M305.3 529.2L304.4 517.0M305.3 529.2L313.7 517.5M304.4 517.0L313.7 517.5M304.4 517.0L304.9 505.7M313.7 517.5L304.9 505.7M304.9 505.7L313.0 503.8M304.9 505.7L304.2 494.9M304.9 505.7L313.9 492.6M304.2 494.9L313.9 492.6M304.2 494.9L302.9 481.1M313.9 492.6L302.9 481.1M302.9 481.1L313.5 481.5M302.9 481.1L307.5 471.4M302.9 481.1L313.3 470.1M307.5 471.4L313.3 470.1M307.5 471.4L306.0 458.8M313.3 470.1L306.0 458.8M306.0 458.8L312.5 456.9M306.0 458.8L307.3 446.9M306.0 458.8L312.1 444.9M307.3 446.9L312.1 444.9M307.3 446.9L305.6 433.1M312.1 444.9L305.6 433.1M305.6 433.1L314.7 432.9M305.6 433.1L305.4 421.6M305.6 433.1L314.2 422.1M305.4 421.6L314.2 422.1M305.4 421.6L304.8 409.7M314.2 422.1L304.8 409.7M304.8 409.7L313.7 410.1M304.8 409.7L305.5 398.0M304.8 409.7L312.0 397.6M305.5 398.0L312.0 397.6M305.5 398.0L306.4 385.0M312.0 397.6L306.4 385.0M306.4 385.0L314.6 384.6M306.4 385.0L305.3 376.2M306.4 385.0L313.0 372.6M305.3 376.2L313.0 372.6M305.3 376.2L305.5 363.6M313.0 372.6L305.5 363.6M305.5 363.6L313.3 360.2M305.5 363.6L306.6 351.7M305.5 363.6L314.6 348.9M306.6 351.7L314.6 348.9M306.6 351.7L306.2 337.0M314.6 348.9L306.2 337.0M306.2 337.0L311.5 339.0M306.2 337.0L305.2 326.0M306.2 337.0L314.0 325.8M305.2 326.0L314.0 325.8M305.2 326.0L304.0 313.9M314.0 325.8L304.0 313.9M304.0 313.9L313.5 312.9M304.0 313.9L304.2 300.7M304.0 313.9L312.8 302.0M304.2 300.7L312.8 302.0M312.8 302.0L305.7 290.3M313.5 589.6L321.2 588.8M313.5 589.6L312.3 576.6M313.5 589.6L319.2 575.8M312.3 576.6L319.2 575.8M312.3 576.6L313.4 565.1M319.2 575.8L313.4 565.1M313.4 565.1L320.0 564.3M313.4 565.1L313.0 550.8M313.4 565.1L318.8 553.4M313.0 550.8L318.8 553.4M313.0 550.8L310.3 541.6M318.8 553.4L310.3 541.6M310.3 541.6L320.8 540.6M310.3 541.6L313.3 530.6M310.3 541.6L319.3 528.1M313.3 530.6L319.3 528.1M313.3 530.6L313.7 517.5M319.3 528.1L313.7 517.5M313.7 517.5L321.8 514.6M313.7 517.5L313.0 503.8M313.7 517.5L320.8 504.8M313.0 503.8L320.8 504.8M313.0 503.8L313.9 492.6M320.8 504.8L313.9 492.6M313.9 492.6L319.8 492.9M313.9 492.6L313.5 481.5M313.9 492.6L320.2 481.4M313.5 481.5L320.2 481.4M313.5 481.5L313.3 470.1M320.2 481.4L313.3 470.1M313.3 470.1L321.0 468.3M313.3 470.1L312.5 456.9M313.3 470.1L322.5 457.0M312.5 456.9L322.5 457.0M312.5 456.9L312.1 444.9M322.5 457.0L312.1 444.9M312.1 444.9L321.8 442.9M312.1 444.9L314.7 432.9M312.1 444.9L319.9 433.0M314.7 432.9L319.9 433.0M314.7 432.9L314.2 422.1M319.9 433.0L314.2 422.1M314.2 422.1L321.4 420.1M314.2 422.1L313.7 410.1M314.2 422.1L321.3 407.1M313.7 410.1L321.3 407.1M313.7 410.1L312.0 397.6M321.3 407.1L312.0 397.6M312.0 397.6L320.7 395.0M312.0 397.6L314.6 384.6M312.0 397.6L320.8 383.6M314.6 384.6L320.8 383.6M314.6 384.6L313.0 372.6M320.8 383.6L313.0 372.6M313.0 372.6L319.9 372.2M313.0 372.6L313.3 360.2M313.0 372.6L322.3 359.1M313.3 360.2L322.3 359.1M313.3 360.2L314.6 348.9M322.3 359.1L314.6 348.9M314.6 348.9L319.9 349.2M314.6 348.9L311.5 339.0M314.6 348.9L320.1 337.9M311.5 339.0L320.1 337.9M311.5 339.0L314.0 325.8M320.1 337.9L314.0 325.8M314.0 325.8L320.7 324.2M314.0 325.8L313.5 312.9M314.0 325.8L320.9 313.9M313.5 312.9L320.9 313.9M313.5 312.9L312.8 302.0M320.9 313.9L312.8 302.0M312.8 302.0L321.2 300.6M312.8 302.0L313.9 290.2M321.2 588.8L328.4 586.3M321.2 588.8L319.2 575.8M328.4 586.3L319.2 575.8M319.2 575.8L327.8 575.5M319.2 575.8L320.0 564.3M319.2 575.8L327.7 563.6M320.0 564.3L327.7 563.6M320.0 564.3L318.8 553.4M327.7 563.6L318.8 553.4M318.8 553.4L328.5 551.4M318.8 553.4L320.8 540.6M318.8 553.4L329.3 537.5M320.8 540.6L329.3 537.5M320.8 540.6L319.3 528.1M329.3 537.5L319.3 528.1M319.3 528.1L326.4 527.6M319.3 528.1L321.8 514.6M319.3 528.1L328.9 517.0M321.8 514.6L328.9 517.0M321.8 514.6L320.8 504.8M328.9 517.0L320.8 504.8M320.8 504.8L328.8 503.8M320.8 504.8L319.8 492.9M320.8 504.8L327.1 491.8M319.8 492.9L327.1 491.8M319.8 492.9L320.2 481.4M327.1 491.8L320.2 481.4M320.2 481.4L328.7 477.9M320.2 481.4L321.0 468.3M320.2 481.4L327.1 466.9M321.0 468.3L327.1 466.9M321.0 468.3L322.5 457.0M327.1 466.9L322.5 457.0M322.5 457.0L328.3 452.1M322.5 457.0L321.8 442.9M322.5 457.0L328.1 443.2M321.8 442.9L328.1 443.2M321.8 442.9L319.9 433.0M328.1 443.2L319.9 433.0M319.9 433.0L327.8 431.3M319.9 433.0L321.4 420.1M319.9 433.0L328.5 418.0M321.4 420.1L328.5 418.0M321.4 420.1L321.3 407.1M328.5 418.0L321.3 407.1M321.3 407.1L328.4 406.7M321.3 407.1L320.7 395.0M321.3 407.1L327.1 395.2M320.7 395.0L327.1 395.2M320.7 395.0L320.8 383.6M327.1 395.2L320.8 383.6M320.8 383.6L329.5 381.5M320.8 383.6L319.9 372.2M320.8 383.6L326.3 369.3M319.9 372.2L326.3 369.3M319.9 372.2L322.3 359.1M326.3 369.3L322.3 359.1M322.3 359.1L330.0 358.7M322.3 359.1L319.9 349.2M322.3 359.1L327.9 346.2M319.9 349.2L327.9 346.2M319.9 349.2L320.1 337.9M327.9 346.2L320.1 337.9M320.1 337.9L327.1 333.0M320.1 337.9L320.7 324.2M320.1 337.9L328.2 323.3M320.7 324.2L328.2 323.3M320.7 324.2L320.9 313.9M328.2 323.3L320.9 313.9M320.9 313.9L326.0 310.0M320.9 313.9L321.2 300.6M320.9 313.9L327.3 299.0M321.2 300.6L327.3 299.0M328.4 586.3L333.5 584.0M328.4 586.3L327.8 575.5M328.4 586.3L336.2 574.2M327.8 575.5L336.2 574.2M327.8 575.5L327.7 563.6M336.2 574.2L327.7 563.6M327.7 563.6L335.2 561.5M327.7 563.6L328.5 551.4M327.7 563.6L333.8 550.2M328.5 551.4L333.8 550.2M328.5 551.4L329.3 537.5M333.8 550.2L329.3 537.5M329.3 537.5L336.5 539.5M329.3 537.5L326.4 527.6M329.3 537.5L335.5 525.7M326.4 527.6L335.5 525.7M326.4 527.6L328.9 517.0M335.5 525.7L328.9 517.0M328.9 517.0L334.4 515.1M328.9 517.0L328.8 503.8M328.9 517.0L337.2 501.3M328.8 503.8L337.2 501.3M328.8 503.8L327.1 491.8M337.2 501.3L327.1 491.8M327.1 491.8L335.8 490.0M327.1 491.8L328.7 477.9M327.1 491.8L334.9 475.4M328.7 477.9L334.9 475.4M328.7 477.9L327.1 466.9M334.9 475.4L327.1 466.9M327.1 466.9L335.1 466.5M327.1 466.9L328.3 452.1M327.1 466.9L334.1 453.0M328.3 452.1L334.1 453.0M328.3 452.1L328.1 443.2M334.1 453.0L328.1 443.2M328.1 443.2L332.2 443.2M328.1 443.2L327.8 431.3M328.1 443.2L336.0 429.9M327.8 431.3L336.0 429.9M327.8 431.3L328.5 418.0M336.0 429.9L328.5 418.0M328.5 418.0L335.2 417.2M328.5 418.0L328.4 406.7M328.5 418.0L335.4 405.6M328.4 406.7L335.4 405.6M328.4 406.7L327.1 395.2M335.4 405.6L327.1 395.2M327.1 395.2L335.3 393.8M327.1 395.2L329.5 381.5M327.1 395.2L335.6 383.4M329.5 381.5L335.6 383.4M329.5 381.5L326.3 369.3M335.6 383.4L326.3 369.3M326.3 369.3L334.1 370.1M326.3 369.3L330.0 358.7M326.3 369.3L334.9 356.7M330.0 358.7L334.9 356.7M330.0 358.7L327.9 346.2M334.9 356.7L327.9 346.2M327.9 346.2L333.1 346.5M327.9 346.2L327.1 333.0M327.9 346.2L334.5 333.1M327.1 333.0L334.5 333.1M327.1 333.0L328.2 323.3M334.5 333.1L328.2 323.3M328.2 323.3L336.0 320.8M328.2 323.3L326.0 310.0M328.2 323.3L335.5 309.8M326.0 310.0L335.5 309.8M326.0 310.0L327.3 299.0M335.5 309.8L327.3 299.0M327.3 299.0L336.3 298.9M333.5 584.0L345.0 584.0M333.5 584.0L336.2 574.2M345.0 584.0L336.2 574.2M336.2 574.2L343.2 572.3M336.2 574.2L335.2 561.5M336.2 574.2L342.4 559.6M335.2 561.5L342.4 559.6M335.2 561.5L333.8 550.2M342.4 559.6L333.8 550.2M333.8 550.2L342.4 548.7M333.8 550.2L336.5 539.5M333.8 550.2L342.2 537.6M336.5 539.5L342.2 537.6M336.5 539.5L335.5 525.7M342.2 537.6L335.5 525.7M335.5 525.7L344.5 523.2M335.5 525.7L334.4 515.1M335.5 525.7L343.8 512.9M334.4 515.1L343.8 512.9M334.4 515.1L337.2 501.3M343.8 512.9L337.2 501.3M337.2 501.3L343.2 503.2M337.2 501.3L335.8 490.0M337.2 501.3L344.2 489.1M335.8 490.0L344.2 489.1M335.8 490.0L334.9 475.4M344.2 489.1L334.9 475.4M334.9 475.4L343.2 474.6M334.9 475.4L335.1 466.5M334.9 475.4L343.8 464.0M335.1 466.5L343.8 464.0M335.1 466.5L334.1 453.0M343.8 464.0L334.1 453.0M334.1 453.0L343.2 452.8M334.1 453.0L332.2 443.2M334.1 453.0L344.0 442.8M332.2 443.2L344.0 442.8M332.2 443.2L336.0 429.9M344.0 442.8L336.0 429.9M336.0 429.9L344.0 430.0M336.0 429.9L335.2 417.2M336.0 429.9L342.8 417.2M335.2 417.2L342.8 417.2M335.2 417.2L335.4 405.6M342.8 417.2L335.4 405.6M335.4 405.6L343.8 403.3M335.4 405.6L335.3 393.8M335.4 405.6L345.0 392.0M335.3 393.8L345.0 392.0M335.3 393.8L335.6 383.4M345.0 392.0L335.6 383.4M335.6 383.4L341.7 382.4M335.6 383.4L334.1 370.1M335.6 383.4L345.1 368.0M334.1 370.1L345.1 368.0M334.1 370.1L334.9 356.7M345.1 368.0L334.9 356.7M334.9 356.7L342.4 359.9M334.9 356.7L333.1 346.5M334.9 356.7L343.1 342.8M333.1 346.5L343.1 342.8M333.1 346.5L334.5 333.1M343.1 342.8L334.5 333.1M334.5 333.1L342.4 334.8M334.5 333.1L336.0 320.8M334.5 333.1L343.7 321.5M336.0 320.8L343.7 321.5M336.0 320.8L335.5 309.8M343.7 321.5L335.5 309.8M335.5 309.8L344.2 309.4M335.5 309.8L336.3 298.9M335.5 309.8L342.7 295.2M336.3 298.9L342.7 295.2M345.0 584.0L350.7 585.3M345.0 584.0L343.2 572.3M345.0 584.0L351.3 570.9M343.2 572.3L351.3 570.9M343.2 572.3L342.4 559.6M351.3 570.9L342.4 559.6M342.4 559.6L349.8 557.6M342.4 559.6L342.4 548.7M342.4 559.6L349.7 549.2M342.4 548.7L349.7 549.2M342.4 548.7L342.2 537.6M349.7 549.2L342.2 537.6M342.2 537.6L350.4 534.8M342.2 537.6L344.5 523.2M342.2 537.6L349.9 523.5M344.5 523.2L349.9 523.5M344.5 523.2L343.8 512.9M349.9 523.5L343.8 512.9M343.8 512.9L350.4 511.3M343.8 512.9L343.2 503.2M343.8 512.9L349.7 500.3M343.2 503.2L349.7 500.3M343.2 503.2L344.2 489.1M349.7 500.3L344.2 489.1M344.2 489.1L352.0 487.1M344.2 489.1L343.2 474.6M344.2 489.1L350.0 476.8M343.2 474.6L350.0 476.8M343.2 474.6L343.8 464.0M350.0 476.8L343.8 464.0M343.8 464.0L349.0 463.0M343.8 464.0L343.2 452.8M343.8 464.0L350.1 451.8M343.2 452.8L350.1 451.8M343.2 452.8L344.0 442.8M350.1 451.8L344.0 442.8M344.0 442.8L350.2 438.7M344.0 442.8L344.0 430.0M344.0 442.8L350.8 426.4M344.0 430.0L350.8 426.4M344.0 430.0L342.8 417.2M350.8 426.4L342.8 417.2M342.8 417.2L348.8 413.6M342.8 417.2L343.8 403.3M342.8 417.2L351.2 401.9M343.8 403.3L351.2 401.9M343.8 403.3L345.0 392.0M351.2 401.9L345.0 392.0M345.0 392.0L350.9 392.3M345.0 392.0L341.7 382.4M345.0 392.0L351.3 379.5M341.7 382.4L351.3 379.5M341.7 382.4L345.1 368.0M351.3 379.5L345.1 368.0M345.1 368.0L350.0 367.7M345.1 368.0L342.4 359.9M345.1 368.0L349.9 354.3M342.4 359.9L349.9 354.3M342.4 359.9L343.1 342.8M349.9 354.3L343.1 342.8M343.1 342.8L351.8 342.7M343.1 342.8L342.4 334.8M343.1 342.8L352.3 332.1M342.4 334.8L352.3 332.1M342.4 334.8L343.7 321.5M352.3 332.1L343.7 321.5M343.7 321.5L350.0 320.1M343.7 321.5L344.2 309.4M343.7 321.5L351.7 306.2M344.2 309.4L351.7 306.2M344.2 309.4L342.7 295.2M351.7 306.2L342.7 295.2M342.7 295.2L349.6 294.6M350.7 585.3L358.3 582.8M350.7 585.3L351.3 570.9M358.3 582.8L351.3 570.9M351.3 570.9L359.7 571.3M351.3 570.9L349.8 557.6M351.3 570.9L357.0 557.5M349.8 557.6L357.0 557.5M349.8 557.6L349.7 549.2M357.0 557.5L349.7 549.2M349.7 549.2L359.4 546.7M349.7 549.2L350.4 534.8M349.7 549.2L358.9 534.4M350.4 534.8L358.9 534.4M350.4 534.8L349.9 523.5M358.9 534.4L349.9 523.5M349.9 523.5L357.1 522.8M349.9 523.5L350.4 511.3M349.9 523.5L359.6 510.9M350.4 511.3L359.6 510.9M350.4 511.3L349.7 500.3M359.6 510.9L349.7 500.3M349.7 500.3L356.9 498.3M349.7 500.3L352.0 487.1M349.7 500.3L357.6 486.7M352.0 487.1L357.6 486.7M352.0 487.1L350.0 476.8M357.6 486.7L350.0 476.8M350.0 476.8L359.1 476.6M350.0 476.8L349.0 463.0M350.0 476.8L358.3 462.2M349.0 463.0L358.3 462.2M349.0 463.0L350.1 451.8M358.3 462.2L350.1 451.8M350.1 451.8L358.2 450.6M350.1 451.8L350.2 438.7M350.1 451.8L357.7 438.6M350.2 438.7L357.7 438.6M350.2 438.7L350.8 426.4M357.7 438.6L350.8 426.4M350.8 426.4L358.1 425.4M350.8 426.4L348.8 413.6M350.8 426.4L358.6 414.2M348.8 413.6L358.6 414.2M348.8 413.6L351.2 401.9M358.6 414.2L351.2 401.9M351.2 401.9L357.1 403.1M351.2 401.9L350.9 392.3M351.2 401.9L357.6 392.3M350.9 392.3L357.6 392.3M350.9 392.3L351.3 379.5M357.6 392.3L351.3 379.5M351.3 379.5L358.6 378.7M351.3 379.5L350.0 367.7M351.3 379.5L357.3 366.2M350.0 367.7L357.3 366.2M350.0 367.7L349.9 354.3M357.3 366.2L349.9 354.3M349.9 354.3L358.9 353.9M349.9 354.3L351.8 342.7M349.9 354.3L358.8 340.5M351.8 342.7L358.8 340.5M351.8 342.7L352.3 332.1M358.8 340.5L352.3 332.1M352.3 332.1L358.3 331.4M352.3 332.1L350.0 320.1M352.3 332.1L358.4 318.6M350.0 320.1L358.4 318.6M350.0 320.1L351.7 306.2M358.4 318.6L351.7 306.2M351.7 306.2L359.1 305.7M351.7 306.2L349.6 294.6M351.7 306.2L357.1 294.7M349.6 294.6L357.1 294.7M358.3 582.8L364.4 580.6M358.3 582.8L359.7 571.3M358.3 582.8L366.0 569.5M359.7 571.3L366.0 569.5M359.7 571.3L357.0 557.5M366.0 569.5L357.0 557.5M357.0 557.5L365.6 559.1M357.0 557.5L359.4 546.7M357.0 557.5L365.1 545.1M359.4 546.7L365.1 545.1M359.4 546.7L358.9 534.4M365.1 545.1L358.9 534.4M358.9 534.4L366.9 532.3M358.9 534.4L357.1 522.8M358.9 534.4L364.0 522.8M357.1 522.8L364.0 522.8M357.1 522.8L359.6 510.9M364.0 522.8L359.6 510.9M359.6 510.9L365.9 510.1M359.6 510.9L356.9 498.3M359.6 510.9L366.2 498.4M356.9 498.3L366.2 498.4M356.9 498.3L357.6 486.7M366.2 498.4L357.6 486.7M357.6 486.7L365.1 485.4M357.6 486.7L359.1 476.6M357.6 486.7L364.5 473.6M359.1 476.6L364.5 473.6M359.1 476.6L358.3 462.2M364.5 473.6L358.3 462.2M358.3 462.2L365.8 461.0M358.3 462.2L358.2 450.6M358.3 462.2L366.3 452.4M358.2 450.6L366.3 452.4M358.2 450.6L357.7 438.6M366.3 452.4L357.7 438.6M357.7 438.6L364.5 438.3M357.7 438.6L358.1 425.4M357.7 438.6L366.6 426.6M358.1 425.4L366.6 426.6M358.1 425.4L358.6 414.2M366.6 426.6L358.6 414.2M358.6 414.2L364.8 414.7M358.6 414.2L357.1 403.1M358.6 414.2L366.3 401.4M357.1 403.1L366.3 401.4M357.1 403.1L357.6 392.3M366.3 401.4L357.6 392.3M357.6 392.3L365.3 389.8M357.6 392.3L358.6 378.7M357.6 392.3L366.6 378.4M358.6 378.7L366.6 378.4M358.6 378.7L357.3 366.2M366.6 378.4L357.3 366.2M357.3 366.2L367.9 365.2M357.3 366.2L358.9 353.9M357.3 366.2L366.3 353.1M358.9 353.9L366.3 353.1M358.9 353.9L358.8 340.5M366.3 353.1L358.8 340.5M358.8 340.5L366.4 341.7M358.8 340.5L358.3 331.4M358.8 340.5L365.1 328.2M358.3 331.4L365.1 328.2M358.3 331.4L358.4 318.6M365.1 328.2L358.4 318.6M358.4 318.6L364.9 317.8M358.4 318.6L359.1 305.7M358.4 318.6L367.1 306.3M359.1 305.7L367.1 306.3M359.1 305.7L357.1 294.7M367.1 306.3L357.1 294.7M357.1 294.7L364.5 293.0M364.4 580.6L373.4 579.0M364.4 580.6L366.0 569.5M373.4 579.0L366.0 569.5M366.0 569.5L372.9 567.9M366.0 569.5L365.6 559.1M366.0 569.5L374.9 556.7M365.6 559.1L374.9 556.7M365.6 559.1L365.1 545.1M374.9 556.7L365.1 545.1M365.1 545.1L371.1 544.7M365.1 545.1L366.9 532.3M365.1 545.1L373.4 532.0M366.9 532.3L373.4 532.0M366.9 532.3L364.0 522.8M373.4 532.0L364.0 522.8M364.0 522.8L372.6 520.8M364.0 522.8L365.9 510.1M364.0 522.8L373.6 508.6M365.9 510.1L373.6 508.6M365.9 510.1L366.2 498.4M373.6 508.6L366.2 498.4M366.2 498.4L371.9 495.9M366.2 498.4L365.1 485.4M366.2 498.4L371.4 482.7M365.1 485.4L371.4 482.7M365.1 485.4L364.5 473.6M371.4 482.7L364.5 473.6M364.5 473.6L372.4 471.1M364.5 473.6L365.8 461.0M364.5 473.6L372.5 462.6M365.8 461.0L372.5 462.6M365.8 461.0L366.3 452.4M372.5 462.6L366.3 452.4M366.3 452.4L373.4 447.3M366.3 452.4L364.5 438.3M366.3 452.4L370.7 435.3M364.5 438.3L370.7 435.3M364.5 438.3L366.6 426.6M370.7 435.3L366.6 426.6M366.6 426.6L371.5 421.9M366.6 426.6L364.8 414.7M366.6 426.6L373.6 411.6M364.8 414.7L373.6 411.6M364.8 414.7L366.3 401.4M373.6 411.6L366.3 401.4M366.3 401.4L373.3 403.2M366.3 401.4L365.3 389.8M366.3 401.4L373.1 388.2M365.3 389.8L373.1 388.2M365.3 389.8L366.6 378.4M373.1 388.2L366.6 378.4M366.6 378.4L373.2 375.9M366.6 378.4L367.9 365.2M366.6 378.4L372.0 363.9M367.9 365.2L372.0 363.9M367.9 365.2L366.3 353.1M372.0 363.9L366.3 353.1M366.3 353.1L374.0 351.9M366.3 353.1L366.4 341.7M366.3 353.1L371.5 338.9M366.4 341.7L371.5 338.9M366.4 341.7L365.1 328.2M371.5 338.9L365.1 328.2M365.1 328.2L371.9 328.1M365.1 328.2L364.9 317.8M365.1 328.2L373.4 316.6M364.9 317.8L373.4 316.6M364.9 317.8L367.1 306.3M373.4 316.6L367.1 306.3M367.1 306.3L374.1 303.9M367.1 306.3L364.5 293.0M367.1 306.3L373.7 292.5M373.4 579.0L380.6 578.7M373.4 579.0L372.9 567.9M373.4 579.0L382.0 568.7M372.9 567.9L382.0 568.7M372.9 567.9L374.9 556.7M382.0 568.7L374.9 556.7M374.9 556.7L381.2 554.7M374.9 556.7L371.1 544.7M374.9 556.7L380.6 544.2M371.1 544.7L380.6 544.2M371.1 544.7L373.4 532.0M380.6 544.2L373.4 532.0M373.4 532.0L379.7 530.3M373.4 532.0L372.6 520.8M373.4 532.0L381.3 519.9M372.6 520.8L381.3 519.9M372.6 520.8L373.6 508.6M381.3 519.9L373.6 508.6M373.6 508.6L380.3 506.8M373.6 508.6L371.9 495.9M373.6 508.6L378.5 496.3M371.9 495.9L378.5 496.3M371.9 495.9L371.4 482.7M378.5 496.3L371.4 482.7M371.4 482.7L380.4 481.7M371.4 482.7L372.4 471.1M371.4 482.7L379.4 470.2M372.4 471.1L379.4 470.2M372.4 471.1L372.5 462.6M379.4 470.2L372.5 462.6M372.5 462.6L382.2 459.8M372.5 462.6L373.4 447.3M372.5 462.6L379.2 449.0M373.4 447.3L379.2 449.0M373.4 447.3L370.7 435.3M379.2 449.0L370.7 435.3M370.7 435.3L381.8 434.1M370.7 435.3L371.5 421.9M370.7 435.3L377.8 424.1M371.5 421.9L377.8 424.1M371.5 421.9L373.6 411.6M377.8 424.1L373.6 411.6M373.6 411.6L379.9 411.0M373.6 411.6L373.3 403.2M373.6 411.6L380.0 400.4M373.3 403.2L380.0 400.4M373.3 403.2L373.1 388.2M380.0 400.4L373.1 388.2M373.1 388.2L382.0 387.9M373.1 388.2L373.2 375.9M373.1 388.2L380.3 375.4M373.2 375.9L380.3 375.4M373.2 375.9L372.0 363.9M380.3 375.4L372.0 363.9M372.0 363.9L381.1 361.6M372.0 363.9L374.0 351.9M372.0 363.9L381.7 350.8M374.0 351.9L381.7 350.8M374.0 351.9L371.5 338.9M381.7 350.8L371.5 338.9M371.5 338.9L380.8 339.3M371.5 338.9L371.9 328.1M371.5 338.9L381.4 328.2M371.9 328.1L381.4 328.2M371.9 328.1L373.4 316.6M381.4 328.2L373.4 316.6M373.4 316.6L382.7 314.8M373.4 316.6L374.1 303.9M373.4 316.6L379.6 303.3M374.1 303.9L379.6 303.3M374.1 303.9L373.7 292.5M379.6 303.3L373.7 292.5M380.6 578.7L387.7 577.4M380.6 578.7L382.0 568.7M387.7 577.4L382.0 568.7M382.0 568.7L388.1 566.4M382.0 568.7L381.2 554.7M382.0 568.7L388.3 555.4M381.2 554.7L388.3 555.4M381.2 554.7L380.6 544.2M388.3 555.4L380.6 544.2M380.6 544.2L389.0 541.4M380.6 544.2L379.7 530.3M380.6 544.2L387.3 530.9M379.7 530.3L387.3 530.9M379.7 530.3L381.3 519.9M387.3 530.9L381.3 519.9M381.3 519.9L387.3 518.2M381.3 519.9L380.3 506.8M381.3 519.9L388.5 507.1M380.3 506.8L388.5 507.1M380.3 506.8L378.5 496.3M388.5 507.1L378.5 496.3M378.5 496.3L388.6 495.5M378.5 496.3L380.4 481.7M378.5 496.3L387.6 482.7M380.4 481.7L387.6 482.7M380.4 481.7L379.4 470.2M387.6 482.7L379.4 470.2M379.4 470.2L387.4 470.2M379.4 470.2L382.2 459.8M379.4 470.2L388.2 457.1M382.2 459.8L388.2 457.1M382.2 459.8L379.2 449.0M388.2 457.1L379.2 449.0M379.2 449.0L385.4 447.0M379.2 449.0L381.8 434.1M379.2 449.0L388.4 434.2M381.8 434.1L388.4 434.2M381.8 434.1L377.8 424.1M388.4 434.2L377.8 424.1M377.8 424.1L387.3 421.7M377.8 424.1L379.9 411.0M377.8 424.1L388.5 410.1M379.9 411.0L388.5 410.1M379.9 411.0L380.0 400.4M388.5 410.1L380.0 400.4M380.0 400.4L389.2 398.2M380.0 400.4L382.0 387.9M380.0 400.4L387.2 386.7M382.0 387.9L387.2 386.7M382.0 387.9L380.3 375.4M387.2 386.7L380.3 375.4M380.3 375.4L387.4 374.3M380.3 375.4L381.1 361.6M380.3 375.4L386.2 361.7M381.1 361.6L386.2 361.7M381.1 361.6L381.7 350.8M386.2 361.7L381.7 350.8M381.7 350.8L388.6 349.4M381.7 350.8L380.8 339.3M381.7 350.8L388.0 338.6M380.8 339.3L388.0 338.6M380.8 339.3L381.4 328.2M388.0 338.6L381.4 328.2M381.4 328.2L388.1 327.8M381.4 328.2L382.7 314.8M381.4 328.2L387.8 313.8M382.7 314.8L387.8 313.8M382.7 314.8L379.6 303.3M387.8 313.8L379.6 303.3M379.6 303.3L387.9 300.1M379.6 303.3L379.9 292.0M379.6 303.3L386.5 290.6M387.7 577.4L396.1 578.1M387.7 577.4L388.1 566.4M387.7 577.4L396.6 564.9M388.1 566.4L396.6 564.9M388.1 566.4L388.3 555.4M396.6 564.9L388.3 555.4M388.3 555.4L395.0 553.9M388.3 555.4L389.0 541.4M388.3 555.4L395.6 541.9M389.0 541.4L395.6 541.9M389.0 541.4L387.3 530.9M395.6 541.9L387.3 530.9M387.3 530.9L396.9 529.1M387.3 530.9L387.3 518.2M387.3 530.9L394.7 516.7M387.3 518.2L394.7 516.7M387.3 518.2L388.5 507.1M394.7 516.7L388.5 507.1M388.5 507.1L396.4 504.7M388.5 507.1L388.6 495.5M388.5 507.1L396.8 493.0M388.6 495.5L396.8 493.0M388.6 495.5L387.6 482.7M396.8 493.0L387.6 482.7M387.6 482.7L395.7 480.3M387.6 482.7L387.4 470.2M387.6 482.7L395.5 470.1M387.4 470.2L395.5 470.1M387.4 470.2L388.2 457.1M395.5 470.1L388.2 457.1M388.2 457.1L395.2 456.6M388.2 457.1L385.4 447.0M388.2 457.1L394.8 445.7M385.4 447.0L394.8 445.7M385.4 447.0L388.4 434.2M394.8 445.7L388.4 434.2M388.4 434.2L394.1 432.3M388.4 434.2L387.3 421.7M388.4 434.2L396.5 422.4M387.3 421.7L396.5 422.4M387.3 421.7L388.5 410.1M396.5 422.4L388.5 410.1M388.5 410.1L395.4 409.9M388.5 410.1L389.2 398.2M388.5 410.1L393.6 397.7M389.2 398.2L393.6 397.7M389.2 398.2L387.2 386.7M393.6 397.7L387.2 386.7M387.2 386.7L395.9 383.7M387.2 386.7L387.4 374.3M387.2 386.7L393.8 372.4M387.4 374.3L393.8 372.4M387.4 374.3L386.2 361.7M393.8 372.4L386.2 361.7M386.2 361.7L395.8 361.3M386.2 361.7L388.6 349.4M386.2 361.7L395.7 349.7M388.6 349.4L395.7 349.7M388.6 349.4L388.0 338.6M395.7 349.7L388.0 338.6M388.0 338.6L396.3 335.5M388.0 338.6L388.1 327.8M388.0 338.6L395.2 324.4M388.1 327.8L395.2 324.4M388.1 327.8L387.8 313.8M395.2 324.4L387.8 313.8M387.8 313.8L396.6 312.4M387.8 313.8L387.9 300.1M387.8 313.8L396.6 301.0M387.9 300.1L396.6 301.0M387.9 300.1L386.5 290.6M396.6 301.0L386.5 290.6M396.1 578.1L403.8 575.6M396.1 578.1L396.6 564.9M403.8 575.6L396.6 564.9M396.6 564.9L402.8 563.0M396.6 564.9L395.0 553.9M396.6 564.9L402.8 551.0M395.0 553.9L402.8 551.0M395.0 553.9L395.6 541.9M402.8 551.0L395.6 541.9M395.6 541.9L404.3 541.4M395.6 541.9L396.9 529.1M395.6 541.9L402.8 527.8M396.9 529.1L402.8 527.8M396.9 529.1L394.7 516.7M402.8 527.8L394.7 516.7M394.7 516.7L401.1 515.3M394.7 516.7L396.4 504.7M394.7 516.7L403.4 504.1M396.4 504.7L403.4 504.1M396.4 504.7L396.8 493.0M403.4 504.1L396.8 493.0M396.8 493.0L403.2 492.6M396.8 493.0L395.7 480.3M396.8 493.0L403.1 479.4M395.7 480.3L403.1 479.4M395.7 480.3L395.5 470.1M403.1 479.4L395.5 470.1M395.5 470.1L404.6 465.9M395.5 470.1L395.2 456.6M395.5 470.1L401.9 455.0M395.2 456.6L401.9 455.0M395.2 456.6L394.8 445.7M401.9 455.0L394.8 445.7M394.8 445.7L402.3 443.0M394.8 445.7L394.1 432.3M394.8 445.7L402.8 431.1M394.1 432.3L402.8 431.1M394.1 432.3L396.5 422.4M402.8 431.1L396.5 422.4M396.5 422.4L403.0 420.4M396.5 422.4L395.4 409.9M396.5 422.4L403.0 407.9M395.4 409.9L403.0 407.9M395.4 409.9L393.6 397.7M403.0 407.9L393.6 397.7M393.6 397.7L402.1 394.6M393.6 397.7L395.9 383.7M393.6 397.7L402.7 384.7M395.9 383.7L402.7 384.7M395.9 383.7L393.8 372.4M402.7 384.7L393.8 372.4M393.8 372.4L403.4 372.8M393.8 372.4L395.8 361.3M393.8 372.4L404.0 360.9M395.8 361.3L404.0 360.9M395.8 361.3L395.7 349.7M404.0 360.9L395.7 349.7M395.7 349.7L402.2 349.0M395.7 349.7L396.3 335.5M395.7 349.7L403.8 337.8M396.3 335.5L403.8 337.8M396.3 335.5L395.2 324.4M403.8 337.8L395.2 324.4M395.2 324.4L403.6 324.1M395.2 324.4L396.6 312.4M395.2 324.4L402.9 311.9M396.6 312.4L402.9 311.9M396.6 312.4L396.6 301.0M402.9 311.9L396.6 301.0M396.6 301.0L401.4 299.5M396.6 301.0L397.9 288.9M396.6 301.0L403.0 288.7M403.8 575.6L409.5 576.1M403.8 575.6L402.8 563.0M403.8 575.6L410.7 563.4M402.8 563.0L410.7 563.4M402.8 563.0L402.8 551.0M410.7 563.4L402.8 551.0M402.8 551.0L411.4 551.4M402.8 551.0L404.3 541.4M402.8 551.0L410.3 538.5M404.3 541.4L410.3 538.5M404.3 541.4L402.8 527.8M410.3 538.5L402.8 527.8M402.8 527.8L409.0 526.8M402.8 527.8L401.1 515.3M402.8 527.8L410.0 514.6M401.1 515.3L410.0 514.6M401.1 515.3L403.4 504.1M410.0 514.6L403.4 504.1M403.4 504.1L412.4 503.3M403.4 504.1L403.2 492.6M403.4 504.1L410.6 489.3M403.2 492.6L410.6 489.3M403.2 492.6L403.1 479.4M410.6 489.3L403.1 479.4M403.1 479.4L411.2 480.1M403.1 479.4L404.6 465.9M403.1 479.4L409.7 467.1M404.6 465.9L409.7 467.1M404.6 465.9L401.9 455.0M409.7 467.1L401.9 455.0M401.9 455.0L410.0 454.5M401.9 455.0L402.3 443.0M401.9 455.0L410.2 441.0M402.3 443.0L410.2 441.0M402.3 443.0L402.8 431.1M410.2 441.0L402.8 431.1M402.8 431.1L410.0 429.0M402.8 431.1L403.0 420.4M402.8 431.1L411.9 419.7M403.0 420.4L411.9 419.7M403.0 420.4L403.0 407.9M411.9 419.7L403.0 407.9M403.0 407.9L410.6 406.9M403.0 407.9L402.1 394.6M403.0 407.9L410.6 394.8M402.1 394.6L410.6 394.8M402.1 394.6L402.7 384.7M410.6 394.8L402.7 384.7M402.7 384.7L410.7 382.4M402.7 384.7L403.4 372.8M402.7 384.7L410.3 369.3M403.4 372.8L410.3 369.3M403.4 372.8L404.0 360.9M410.3 369.3L404.0 360.9M404.0 360.9L409.5 358.0M404.0 360.9L402.2 349.0M404.0 360.9L410.7 346.3M402.2 349.0L410.7 346.3M402.2 349.0L403.8 337.8M410.7 346.3L403.8 337.8M403.8 337.8L412.4 334.5M403.8 337.8L403.6 324.1M403.8 337.8L410.2 323.1M403.6 324.1L410.2 323.1M403.6 324.1L402.9 311.9M410.2 323.1L402.9 311.9M402.9 311.9L411.5 312.5M402.9 311.9L401.4 299.5M402.9 311.9L411.5 298.1M401.4 299.5L411.5 298.1M401.4 299.5L403.0 288.7M411.5 298.1L403.0 288.7M409.5 576.1L418.7 570.7M409.5 576.1L410.7 563.4M418.7 570.7L410.7 563.4M410.7 563.4L417.6 562.7M410.7 563.4L411.4 551.4M410.7 563.4L419.0 549.0M411.4 551.4L419.0 549.0M411.4 551.4L410.3 538.5M419.0 549.0L410.3 538.5M410.3 538.5L418.7 537.6M410.3 538.5L409.0 526.8M410.3 538.5L417.8 526.6M409.0 526.8L417.8 526.6M409.0 526.8L410.0 514.6M417.8 526.6L410.0 514.6M410.0 514.6L419.1 513.0M410.0 514.6L412.4 503.3M410.0 514.6L417.1 500.3M412.4 503.3L417.1 500.3M412.4 503.3L410.6 489.3M417.1 500.3L410.6 489.3M410.6 489.3L416.6 490.8M410.6 489.3L411.2 480.1M410.6 489.3L419.9 477.7M411.2 480.1L419.9 477.7M411.2 480.1L409.7 467.1M419.9 477.7L409.7 467.1M409.7 467.1L419.1 464.9M409.7 467.1L410.0 454.5M409.7 467.1L418.0 454.4M410.0 454.5L418.0 454.4M410.0 454.5L410.2 441.0M418.0 454.4L410.2 441.0M410.2 441.0L418.3 441.5M410.2 441.0L410.0 429.0M410.2 441.0L416.4 428.1M410.0 429.0L416.4 428.1M410.0 429.0L411.9 419.7M416.4 428.1L411.9 419.7M411.9 419.7L417.6 417.0M411.9 419.7L410.6 406.9M411.9 419.7L418.0 404.9M410.6 406.9L418.0 404.9M410.6 406.9L410.6 394.8M418.0 404.9L410.6 394.8M410.6 394.8L417.8 393.6M410.6 394.8L410.7 382.4M410.6 394.8L418.5 381.6M410.7 382.4L418.5 381.6M410.7 382.4L410.3 369.3M418.5 381.6L410.3 369.3M410.3 369.3L417.5 369.3M410.3 369.3L409.5 358.0M410.3 369.3L418.9 357.3M409.5 358.0L418.9 357.3M409.5 358.0L410.7 346.3M418.9 357.3L410.7 346.3M410.7 346.3L417.1 344.6M410.7 346.3L412.4 334.5M410.7 346.3L418.3 334.1M412.4 334.5L418.3 334.1M412.4 334.5L410.2 323.1M418.3 334.1L410.2 323.1M410.2 323.1L419.2 321.2M410.2 323.1L411.5 312.5M410.2 323.1L419.4 309.2M411.5 312.5L419.4 309.2M411.5 312.5L411.5 298.1M419.4 309.2L411.5 298.1M411.5 298.1L417.8 297.0M411.5 298.1L410.3 287.7M411.5 298.1L418.5 286.6M418.7 570.7L426.5 572.4M418.7 570.7L417.6 562.7M418.7 570.7L425.8 560.2M417.6 562.7L425.8 560.2M417.6 562.7L419.0 549.0M425.8 560.2L419.0 549.0M419.0 549.0L425.4 547.1M419.0 549.0L418.7 537.6M419.0 549.0L426.4 537.0M418.7 537.6L426.4 537.0M418.7 537.6L417.8 526.6M426.4 537.0L417.8 526.6M417.8 526.6L426.9 523.8M417.8 526.6L419.1 513.0M417.8 526.6L425.6 511.5M419.1 513.0L425.6 511.5M419.1 513.0L417.1 500.3M425.6 511.5L417.1 500.3M417.1 500.3L425.8 500.3M417.1 500.3L416.6 490.8M417.1 500.3L426.2 488.3M416.6 490.8L426.2 488.3M416.6 490.8L419.9 477.7M426.2 488.3L419.9 477.7M419.9 477.7L426.1 475.9M419.9 477.7L419.1 464.9M419.9 477.7L426.1 464.1M419.1 464.9L426.1 464.1M419.1 464.9L418.0 454.4M426.1 464.1L418.0 454.4M418.0 454.4L425.1 452.5M418.0 454.4L418.3 441.5M418.0 454.4L425.9 439.0M418.3 441.5L425.9 439.0M418.3 441.5L416.4 428.1M425.9 439.0L416.4 428.1M416.4 428.1L424.1 428.6M416.4 428.1L417.6 417.0M416.4 428.1L425.5 414.4M417.6 417.0L425.5 414.4M417.6 417.0L418.0 404.9M425.5 414.4L418.0 404.9M418.0 404.9L423.9 403.7M418.0 404.9L417.8 393.6M418.0 404.9L425.8 392.6M417.8 393.6L425.8 392.6M417.8 393.6L418.5 381.6M425.8 392.6L418.5 381.6M418.5 381.6L426.5 381.5M418.5 381.6L417.5 369.3M418.5 381.6L427.8 367.0M417.5 369.3L427.8 367.0M417.5 369.3L418.9 357.3M427.8 367.0L418.9 357.3M418.9 357.3L425.5 357.4M418.9 357.3L417.1 344.6M418.9 357.3L424.3 343.0M417.1 344.6L424.3 343.0M417.1 344.6L418.3 334.1M424.3 343.0L418.3 334.1M418.3 334.1L425.7 333.5M418.3 334.1L419.2 321.2M418.3 334.1L426.7 318.7M419.2 321.2L426.7 318.7M419.2 321.2L419.4 309.2M426.7 318.7L419.4 309.2M419.4 309.2L424.3 308.3M419.4 309.2L417.8 297.0M419.4 309.2L425.0 296.7M417.8 297.0L425.0 296.7M417.8 297.0L418.5 286.6M425.0 296.7L418.5 286.6M426.5 572.4L434.4 571.5M426.5 572.4L425.8 560.2M434.4 571.5L425.8 560.2M425.8 560.2L433.7 559.4M425.8 560.2L425.4 547.1M425.8 560.2L433.6 546.9M425.4 547.1L433.6 546.9M425.4 547.1L426.4 537.0M433.6 546.9L426.4 537.0M426.4 537.0L434.7 534.4M426.4 537.0L426.9 523.8M426.4 537.0L434.7 523.1M426.9 523.8L434.7 523.1M426.9 523.8L425.6 511.5M434.7 523.1L425.6 511.5M425.6 511.5L433.9 511.4M425.6 511.5L425.8 500.3M425.6 511.5L433.5 500.7M425.8 500.3L433.5 500.7M425.8 500.3L426.2 488.3M433.5 500.7L426.2 488.3M426.2 488.3L433.2 486.4M426.2 488.3L426.1 475.9M426.2 488.3L433.3 475.9M426.1 475.9L433.3 475.9M426.1 475.9L426.1 464.1M433.3 475.9L426.1 464.1M426.1 464.1L430.7 464.3M426.1 464.1L425.1 452.5M426.1 464.1L434.1 449.6M425.1 452.5L434.1 449.6M425.1 452.5L425.9 439.0M434.1 449.6L425.9 439.0M425.9 439.0L432.9 440.1M425.9 439.0L424.1 428.6M425.9 439.0L431.9 426.9M424.1 428.6L431.9 426.9M424.1 428.6L425.5 414.4M431.9 426.9L425.5 414.4M425.5 414.4L432.7 415.9M425.5 414.4L423.9 403.7M425.5 414.4L434.1 403.3M423.9 403.7L434.1 403.3M423.9 403.7L425.8 392.6M434.1 403.3L425.8 392.6M425.8 392.6L433.1 392.2M425.8 392.6L426.5 381.5M425.8 392.6L433.6 379.2M426.5 381.5L433.6 379.2M426.5 381.5L427.8 367.0M433.6 379.2L427.8 367.0M427.8 367.0L434.4 365.9M427.8 367.0L425.5 357.4M427.8 367.0L433.2 354.9M425.5 357.4L433.2 354.9M425.5 357.4L424.3 343.0M433.2 354.9L424.3 343.0M424.3 343.0L432.6 343.5M424.3 343.0L425.7 333.5M424.3 343.0L433.1 333.7M425.7 333.5L433.1 333.7M425.7 333.5L426.7 318.7M433.1 333.7L426.7 318.7M426.7 318.7L433.7 319.6M426.7 318.7L424.3 308.3M426.7 318.7L434.7 308.3M424.3 308.3L434.7 308.3M424.3 308.3L425.0 296.7M434.7 308.3L425.0 296.7M425.0 296.7L431.2 295.4M425.0 296.7L425.7 286.1M434.4 571.5L441.4 570.2M434.4 571.5L433.7 559.4M434.4 571.5L442.3 558.1M433.7 559.4L442.3 558.1M433.7 559.4L433.6 546.9M442.3 558.1L433.6 546.9M433.6 546.9L438.6 545.4M433.6 546.9L434.7 534.4M433.6 546.9L439.6 532.8M434.7 534.4L439.6 532.8M434.7 534.4L434.7 523.1M439.6 532.8L434.7 523.1M434.7 523.1L439.8 521.5M434.7 523.1L433.9 511.4M434.7 523.1L440.2 509.6M433.9 511.4L440.2 509.6M433.9 511.4L433.5 500.7M440.2 509.6L433.5 500.7M433.5 500.7L440.9 498.6M433.5 500.7L433.2 486.4M433.5 500.7L440.7 486.3M433.2 486.4L440.7 486.3M433.2 486.4L433.3 475.9M440.7 486.3L433.3 475.9M433.3 475.9L438.7 472.5M433.3 475.9L430.7 464.3M433.3 475.9L439.7 462.4M430.7 464.3L439.7 462.4M430.7 464.3L434.1 449.6M439.7 462.4L434.1 449.6M434.1 449.6L439.1 449.7M434.1 449.6L432.9 440.1M434.1 449.6L440.8 440.1M432.9 440.1L440.8 440.1M432.9 440.1L431.9 426.9M440.8 440.1L431.9 426.9M431.9 426.9L440.8 425.6M431.9 426.9L432.7 415.9M431.9 426.9L441.6 414.3M432.7 415.9L441.6 414.3M432.7 415.9L434.1 403.3M441.6 414.3L434.1 403.3M434.1 403.3L440.2 403.2M434.1 403.3L433.1 392.2M434.1 403.3L439.6 390.3M433.1 392.2L439.6 390.3M433.1 392.2L433.6 379.2M439.6 390.3L433.6 379.2M433.6 379.2L440.6 379.0M433.6 379.2L434.4 365.9M433.6 379.2L439.4 364.9M434.4 365.9L439.4 364.9M434.4 365.9L433.2 354.9M439.4 364.9L433.2 354.9M433.2 354.9L440.1 353.9M433.2 354.9L432.6 343.5M433.2 354.9L440.5 341.8M432.6 343.5L440.5 341.8M432.6 343.5L433.1 333.7M440.5 341.8L433.1 333.7M433.1 333.7L440.9 330.8M433.1 333.7L433.7 319.6M433.1 333.7L440.7 317.1M433.7 319.6L440.7 317.1M433.7 319.6L434.7 308.3M440.7 317.1L434.7 308.3M434.7 308.3L441.6 304.6M434.7 308.3L431.2 295.4M434.7 308.3L440.3 295.0M431.2 295.4L440.3 295.0M441.4 570.2L446.0 569.4M441.4 570.2L442.3 558.1M446.0 569.4L442.3 558.1M442.3 558.1L448.3 559.0M442.3 558.1L438.6 545.4M442.3 558.1L448.7 545.1M438.6 545.4L448.7 545.1M438.6 545.4L439.6 532.8M448.7 545.1L439.6 532.8M439.6 532.8L448.9 533.6M439.6 532.8L439.8 521.5M439.6 532.8L448.0 520.6M439.8 521.5L448.0 520.6M439.8 521.5L440.2 509.6M448.0 520.6L440.2 509.6M440.2 509.6L446.5 509.1M440.2 509.6L440.9 498.6M440.2 509.6L449.6 495.1M440.9 498.6L449.6 495.1M440.9 498.6L440.7 486.3M449.6 495.1L440.7 486.3M440.7 486.3L447.0 485.7M440.7 486.3L438.7 472.5M440.7 486.3L448.2 473.4M438.7 472.5L448.2 473.4M438.7 472.5L439.7 462.4M448.2 473.4L439.7 462.4M439.7 462.4L446.1 460.4M439.7 462.4L439.1 449.7M439.7 462.4L448.5 449.6M439.1 449.7L448.5 449.6M439.1 449.7L440.8 440.1M448.5 449.6L440.8 440.1M440.8 440.1L448.3 436.1M440.8 440.1L440.8 425.6M440.8 440.1L448.5 423.8M440.8 425.6L448.5 423.8M440.8 425.6L441.6 414.3M448.5 423.8L441.6 414.3M441.6 414.3L447.1 411.8M441.6 414.3L440.2 403.2M441.6 414.3L449.4 400.6M440.2 403.2L449.4 400.6M440.2 403.2L439.6 390.3M449.4 400.6L439.6 390.3M439.6 390.3L448.0 386.8M439.6 390.3L440.6 379.0M439.6 390.3L449.1 377.5M440.6 379.0L449.1 377.5M440.6 379.0L439.4 364.9M449.1 377.5L439.4 364.9M439.4 364.9L446.3 363.4M439.4 364.9L440.1 353.9M439.4 364.9L449.6 352.0M440.1 353.9L449.6 352.0M440.1 353.9L440.5 341.8M449.6 352.0L440.5 341.8M440.5 341.8L449.8 340.5M440.5 341.8L440.9 330.8M440.5 341.8L445.5 330.1M440.9 330.8L445.5 330.1M440.9 330.8L440.7 317.1M445.5 330.1L440.7 317.1M440.7 317.1L448.5 317.7M440.7 317.1L441.6 304.6M440.7 317.1L447.5 304.8M441.6 304.6L447.5 304.8M441.6 304.6L440.3 295.0M447.5 304.8L440.3 295.0M440.3 295.0L448.9 292.2M446.0 569.4L455.6 568.8M446.0 569.4L448.3 559.0M446.0 569.4L455.8 556.6M448.3 559.0L455.8 556.6M448.3 559.0L448.7 545.1M455.8 556.6L448.7 545.1M448.7 545.1L455.8 545.0M448.7 545.1L448.9 533.6M448.7 545.1L455.3 532.3M448.9 533.6L455.3 532.3M448.9 533.6L448.0 520.6M455.3 532.3L448.0 520.6M448.0 520.6L454.8 521.0M448.0 520.6L446.5 509.1M448.0 520.6L453.3 508.0M446.5 509.1L453.3 508.0M446.5 509.1L449.6 495.1M453.3 508.0L449.6 495.1M449.6 495.1L455.8 496.2M449.6 495.1L447.0 485.7M449.6 495.1L455.5 485.2M447.0 485.7L455.5 485.2M447.0 485.7L448.2 473.4M455.5 485.2L448.2 473.4M448.2 473.4L457.6 471.3M448.2 473.4L446.1 460.4M448.2 473.4L453.6 458.8M446.1 460.4L453.6 458.8M446.1 460.4L448.5 449.6M453.6 458.8L448.5 449.6M448.5 449.6L454.7 447.7M448.5 449.6L448.3 436.1M448.5 449.6L455.4 436.9M448.3 436.1L455.4 436.9M448.3 436.1L448.5 423.8M455.4 436.9L448.5 423.8M448.5 423.8L455.1 423.8M448.5 423.8L447.1 411.8M448.5 423.8L455.6 411.0M447.1 411.8L455.6 411.0M447.1 411.8L449.4 400.6M455.6 411.0L449.4 400.6M449.4 400.6L455.2 402.6M449.4 400.6L448.0 386.8M449.4 400.6L455.4 386.9M448.0 386.8L455.4 386.9M448.0 386.8L449.1 377.5M455.4 386.9L449.1 377.5M449.1 377.5L453.3 376.9M449.1 377.5L446.3 363.4M449.1 377.5L455.2 363.2M446.3 363.4L455.2 363.2M446.3 363.4L449.6 352.0M455.2 363.2L449.6 352.0M449.6 352.0L457.9 353.3M449.6 352.0L449.8 340.5M449.6 352.0L453.8 339.5M449.8 340.5L453.8 339.5M449.8 340.5L445.5 330.1M453.8 339.5L445.5 330.1M445.5 330.1L456.5 328.7M445.5 330.1L448.5 317.7M445.5 330.1L454.4 317.6M448.5 317.7L454.4 317.6M448.5 317.7L447.5 304.8M454.4 317.6L447.5 304.8M447.5 304.8L457.3 302.8M447.5 304.8L448.9 292.2M447.5 304.8L453.7 290.5M448.9 292.2L453.7 290.5M455.6 568.8L462.3 567.6M455.6 568.8L455.8 556.6M462.3 567.6L455.8 556.6M455.8 556.6L461.3 554.7M455.8 556.6L455.8 545.0M455.8 556.6L462.4 542.6M455.8 545.0L462.4 542.6M455.8 545.0L455.3 532.3M462.4 542.6L455.3 532.3M455.3 532.3L462.0 531.5M455.3 532.3L454.8 521.0M455.3 532.3L462.9 518.1M454.8 521.0L462.9 518.1M454.8 521.0L453.3 508.0M462.9 518.1L453.3 508.0M453.3 508.0L463.5 506.7M453.3 508.0L455.8 496.2M453.3 508.0L462.4 494.1M455.8 496.2L462.4 494.1M455.8 496.2L455.5 485.2M462.4 494.1L455.5 485.2M455.5 485.2L463.7 481.8M455.5 485.2L457.6 471.3M455.5 485.2L462.7 470.4M457.6 471.3L462.7 470.4M457.6 471.3L453.6 458.8M462.7 470.4L453.6 458.8M453.6 458.8L463.3 458.5M453.6 458.8L454.7 447.7M453.6 458.8L465.1 445.0M454.7 447.7L465.1 445.0M454.7 447.7L455.4 436.9M465.1 445.0L455.4 436.9M455.4 436.9L463.6 434.7M455.4 436.9L455.1 423.8M455.4 436.9L464.1 421.1M455.1 423.8L464.1 421.1M455.1 423.8L455.6 411.0M464.1 421.1L455.6 411.0M455.6 411.0L464.2 409.3M455.6 411.0L455.2 402.6M455.6 411.0L463.7 399.2M455.2 402.6L463.7 399.2M455.2 402.6L455.4 386.9M463.7 399.2L455.4 386.9M455.4 386.9L463.0 386.0M455.4 386.9L453.3 376.9M455.4 386.9L462.1 374.8M453.3 376.9L462.1 374.8M453.3 376.9L455.2 363.2M462.1 374.8L455.2 363.2M455.2 363.2L462.2 360.8M455.2 363.2L457.9 353.3M455.2 363.2L461.2 351.5M457.9 353.3L461.2 351.5M457.9 353.3L453.8 339.5M461.2 351.5L453.8 339.5M453.8 339.5L463.8 339.2M453.8 339.5L456.5 328.7M453.8 339.5L463.0 327.1M456.5 328.7L463.0 327.1M456.5 328.7L454.4 317.6M463.0 327.1L454.4 317.6M454.4 317.6L463.5 315.0M454.4 317.6L457.3 302.8M454.4 317.6L462.2 302.0M457.3 302.8L462.2 302.0M457.3 302.8L453.7 290.5M462.2 302.0L453.7 290.5M453.7 290.5L461.8 290.9M462.3 567.6L470.0 566.4M462.3 567.6L461.3 554.7M462.3 567.6L472.2 554.6M461.3 554.7L472.2 554.6M461.3 554.7L462.4 542.6M472.2 554.6L462.4 542.6M462.4 542.6L469.6 541.5M462.4 542.6L462.0 531.5M462.4 542.6L470.0 531.2M462.0 531.5L470.0 531.2M462.0 531.5L462.9 518.1M470.0 531.2L462.9 518.1M462.9 518.1L470.3 516.9M462.9 518.1L463.5 506.7M462.9 518.1L470.5 506.1M463.5 506.7L470.5 506.1M463.5 506.7L462.4 494.1M470.5 506.1L462.4 494.1M462.4 494.1L470.1 493.7M462.4 494.1L463.7 481.8M462.4 494.1L470.5 482.4M463.7 481.8L470.5 482.4M463.7 481.8L462.7 470.4M470.5 482.4L462.7 470.4M462.7 470.4L471.5 469.9M462.7 470.4L463.3 458.5M462.7 470.4L470.0 458.0M463.3 458.5L470.0 458.0M463.3 458.5L465.1 445.0M470.0 458.0L465.1 445.0M465.1 445.0L469.6 446.7M465.1 445.0L463.6 434.7M465.1 445.0L470.9 433.9M463.6 434.7L470.9 433.9M463.6 434.7L464.1 421.1M470.9 433.9L464.1 421.1M464.1 421.1L468.1 424.0M464.1 421.1L464.2 409.3M464.1 421.1L472.0 410.9M464.2 409.3L472.0 410.9M464.2 409.3L463.7 399.2M472.0 410.9L463.7 399.2M463.7 399.2L470.6 398.3M463.7 399.2L463.0 386.0M463.7 399.2L473.4 385.0M463.0 386.0L473.4 385.0M463.0 386.0L462.1 374.8M473.4 385.0L462.1 374.8M462.1 374.8L471.3 374.3M462.1 374.8L462.2 360.8M462.1 374.8L470.7 362.0M462.2 360.8L470.7 362.0M462.2 360.8L461.2 351.5M470.7 362.0L461.2 351.5M461.2 351.5L469.6 350.3M461.2 351.5L463.8 339.2M461.2 351.5L469.2 339.5M463.8 339.2L469.2 339.5M463.8 339.2L463.0 327.1M469.2 339.5L463.0 327.1M463.0 327.1L471.4 324.8M463.0 327.1L463.5 315.0M463.0 327.1L468.5 313.8M463.5 315.0L468.5 313.8M463.5 315.0L462.2 302.0M468.5 313.8L462.2 302.0M462.2 302.0L471.1 300.7M462.2 302.0L461.8 290.9M462.2 302.0L472.2 290.0M461.8 290.9L472.2 290.0M470.0 566.4L477.6 565.0M470.0 566.4L472.2 554.6M477.6 565.0L472.2 554.6M472.2 554.6L478.1 551.5M472.2 554.6L469.6 541.5M472.2 554.6L478.7 540.7M469.6 541.5L478.7 540.7M469.6 541.5L470.0 531.2M478.7 540.7L470.0 531.2M470.0 531.2L478.8 527.3M470.0 531.2L470.3 516.9M470.0 531.2L479.2 517.7M470.3 516.9L479.2 517.7M470.3 516.9L470.5 506.1M479.2 517.7L470.5 506.1M470.5 506.1L477.7 504.5M470.5 506.1L470.1 493.7M470.5 506.1L478.1 492.6M470.1 493.7L478.1 492.6M470.1 493.7L470.5 482.4M478.1 492.6L470.5 482.4M470.5 482.4L478.9 479.9M470.5 482.4L471.5 469.9M470.5 482.4L476.9 468.3M471.5 469.9L476.9 468.3M471.5 469.9L470.0 458.0M476.9 468.3L470.0 458.0M470.0 458.0L480.0 456.2M470.0 458.0L469.6 446.7M470.0 458.0L477.1 443.6M469.6 446.7L477.1 443.6M469.6 446.7L470.9 433.9M477.1 443.6L470.9 433.9M470.9 433.9L478.2 433.7M470.9 433.9L468.1 424.0M470.9 433.9L477.3 420.7M468.1 424.0L477.3 420.7M468.1 424.0L472.0 410.9M477.3 420.7L472.0 410.9M472.0 410.9L478.3 409.0M472.0 410.9L470.6 398.3M472.0 410.9L478.2 397.6M470.6 398.3L478.2 397.6M470.6 398.3L473.4 385.0M478.2 397.6L473.4 385.0M473.4 385.0L478.7 383.9M473.4 385.0L471.3 374.3M473.4 385.0L480.5 371.2M471.3 374.3L480.5 371.2M471.3 374.3L470.7 362.0M480.5 371.2L470.7 362.0M470.7 362.0L476.7 361.6M470.7 362.0L469.6 350.3M470.7 362.0L478.2 348.3M469.6 350.3L478.2 348.3M469.6 350.3L469.2 339.5M478.2 348.3L469.2 339.5M469.2 339.5L478.2 337.2M469.2 339.5L471.4 324.8M469.2 339.5L477.6 323.9M471.4 324.8L477.6 323.9M471.4 324.8L468.5 313.8M477.6 323.9L468.5 313.8M468.5 313.8L477.0 311.7M468.5 313.8L471.1 300.7M468.5 313.8L477.2 301.7M471.1 300.7L477.2 301.7M471.1 300.7L472.2 290.0M477.2 301.7L472.2 290.0M472.2 290.0L478.3 289.1M477.6 565.0L485.4 565.4M477.6 565.0L478.1 551.5M477.6 565.0L485.1 552.3M478.1 551.5L485.1 552.3M478.1 551.5L478.7 540.7M485.1 552.3L478.7 540.7M478.7 540.7L484.5 539.5M478.7 540.7L478.8 527.3M478.7 540.7L485.3 527.2M478.8 527.3L485.3 527.2M478.8 527.3L479.2 517.7M485.3 527.2L479.2 517.7M479.2 517.7L486.3 517.5M479.2 517.7L477.7 504.5M479.2 517.7L485.4 504.7M477.7 504.5L485.4 504.7M477.7 504.5L478.1 492.6M485.4 504.7L478.1 492.6M478.1 492.6L485.9 492.1M478.1 492.6L478.9 479.9M478.1 492.6L485.1 478.7M478.9 479.9L485.1 478.7M478.9 479.9L476.9 468.3M485.1 478.7L476.9 468.3M476.9 468.3L485.3 466.6M476.9 468.3L480.0 456.2M476.9 468.3L485.5 454.3M480.0 456.2L485.5 454.3M480.0 456.2L477.1 443.6M485.5 454.3L477.1 443.6M477.1 443.6L485.5 443.6M477.1 443.6L478.2 433.7M477.1 443.6L487.3 433.1M478.2 433.7L487.3 433.1M478.2 433.7L477.3 420.7M487.3 433.1L477.3 420.7M477.3 420.7L486.0 418.9M477.3 420.7L478.3 409.0M477.3 420.7L486.1 408.2M478.3 409.0L486.1 408.2M478.3 409.0L478.2 397.6M486.1 408.2L478.2 397.6M478.2 397.6L485.3 394.5M478.2 397.6L478.7 383.9M478.2 397.6L483.7 383.4M478.7 383.9L483.7 383.4M478.7 383.9L480.5 371.2M483.7 383.4L480.5 371.2M480.5 371.2L487.4 371.2M480.5 371.2L476.7 361.6M480.5 371.2L485.9 359.8M476.7 361.6L485.9 359.8M476.7 361.6L478.2 348.3M485.9 359.8L478.2 348.3M478.2 348.3L486.0 348.2M478.2 348.3L478.2 337.2M478.2 348.3L483.5 335.2M478.2 337.2L483.5 335.2M478.2 337.2L477.6 323.9M483.5 335.2L477.6 323.9M477.6 323.9L485.9 323.3M477.6 323.9L477.0 311.7M477.6 323.9L486.7 311.0M477.0 311.7L486.7 311.0M477.0 311.7L477.2 301.7M486.7 311.0L477.2 301.7M477.2 301.7L486.4 301.2M477.2 301.7L478.3 289.1M477.2 301.7L485.3 287.4M485.4 565.4L494.3 562.2M485.4 565.4L485.1 552.3M494.3 562.2L485.1 552.3M485.1 552.3L491.5 549.7M485.1 552.3L484.5 539.5M485.1 552.3L493.1 539.2M484.5 539.5L493.1 539.2M484.5 539.5L485.3 527.2M493.1 539.2L485.3 527.2M485.3 527.2L492.0 526.6M485.3 527.2L486.3 517.5M485.3 527.2L491.9 514.4M486.3 517.5L491.9 514.4M486.3 517.5L485.4 504.7M491.9 514.4L485.4 504.7M485.4 504.7L491.7 501.8M485.4 504.7L485.9 492.1M485.4 504.7L491.5 489.3M485.9 492.1L491.5 489.3M485.9 492.1L485.1 478.7M491.5 489.3L485.1 478.7M485.1 478.7L491.5 476.3M485.1 478.7L485.3 466.6M485.1 478.7L494.3 467.5M485.3 466.6L494.3 467.5M485.3 466.6L485.5 454.3M494.3 467.5L485.5 454.3M485.5 454.3L493.5 453.9M485.5 454.3L485.5 443.6M485.5 454.3L494.5 442.0M485.5 443.6L494.5 442.0M485.5 443.6L487.3 433.1M494.5 442.0L487.3 433.1M487.3 433.1L493.5 431.4M487.3 433.1L486.0 418.9M487.3 433.1L493.3 419.8M486.0 418.9L493.3 419.8M486.0 418.9L486.1 408.2M493.3 419.8L486.1 408.2M486.1 408.2L492.9 406.2M486.1 408.2L485.3 394.5M486.1 408.2L493.2 393.2M485.3 394.5L493.2 393.2M485.3 394.5L483.7 383.4M493.2 393.2L483.7 383.4M483.7 383.4L492.0 383.1M483.7 383.4L487.4 371.2M483.7 383.4L491.3 371.4M487.4 371.2L491.3 371.4M487.4 371.2L485.9 359.8M491.3 371.4L485.9 359.8M485.9 359.8L493.3 359.5M485.9 359.8L486.0 348.2M485.9 359.8L493.8 346.9M486.0 348.2L493.8 346.9M486.0 348.2L483.5 335.2M493.8 346.9L483.5 335.2M483.5 335.2L494.8 334.2M483.5 335.2L485.9 323.3M483.5 335.2L493.0 323.4M485.9 323.3L493.0 323.4M485.9 323.3L486.7 311.0M493.0 323.4L486.7 311.0M486.7 311.0L492.4 311.5M486.7 311.0L486.4 301.2M486.7 311.0L493.8 297.8M486.4 301.2L493.8 297.8M486.4 301.2L485.3 287.4M493.8 297.8L485.3 287.4M494.3 562.2L501.7 561.1M494.3 562.2L491.5 549.7M494.3 562.2L498.3 549.7M491.5 549.7L498.3 549.7M491.5 549.7L493.1 539.2M498.3 549.7L493.1 539.2M493.1 539.2L500.4 534.5M493.1 539.2L492.0 526.6M493.1 539.2L501.9 525.4M492.0 526.6L501.9 525.4M492.0 526.6L491.9 514.4M501.9 525.4L491.9 514.4M491.9 514.4L500.5 513.4M491.9 514.4L491.7 501.8M491.9 514.4L500.7 501.4M491.7 501.8L500.7 501.4M491.7 501.8L491.5 489.3M500.7 501.4L491.5 489.3M491.5 489.3L500.7 489.2M491.5 489.3L491.5 476.3M491.5 489.3L501.1 477.5M491.5 476.3L501.1 477.5M491.5 476.3L494.3 467.5M501.1 477.5L494.3 467.5M494.3 467.5L503.0 465.3M494.3 467.5L493.5 453.9M494.3 467.5L500.1 452.6M493.5 453.9L500.1 452.6M493.5 453.9L494.5 442.0M500.1 452.6L494.5 442.0M494.5 442.0L501.0 441.3M494.5 442.0L493.5 431.4M494.5 442.0L500.8 429.0M493.5 431.4L500.8 429.0M493.5 431.4L493.3 419.8M500.8 429.0L493.3 419.8M493.3 419.8L500.4 418.0M493.3 419.8L492.9 406.2M493.3 419.8L501.9 405.5M492.9 406.2L501.9 405.5M492.9 406.2L493.2 393.2M501.9 405.5L493.2 393.2M493.2 393.2L500.5 392.0M493.2 393.2L492.0 383.1M493.2 393.2L499.4 381.2M492.0 383.1L499.4 381.2M492.0 383.1L491.3 371.4M499.4 381.2L491.3 371.4M491.3 371.4L500.3 369.1M491.3 371.4L493.3 359.5M491.3 371.4L499.5 357.1M493.3 359.5L499.5 357.1M493.3 359.5L493.8 346.9M499.5 357.1L493.8 346.9M493.8 346.9L498.6 344.0M493.8 346.9L494.8 334.2M493.8 346.9L499.8 333.8M494.8 334.2L499.8 333.8M494.8 334.2L493.0 323.4M499.8 333.8L493.0 323.4M493.0 323.4L499.9 320.2M493.0 323.4L492.4 311.5M493.0 323.4L500.8 309.1M492.4 311.5L500.8 309.1M492.4 311.5L493.8 297.8M500.8 309.1L493.8 297.8M493.8 297.8L501.5 297.5M493.8 297.8L491.8 284.3M493.8 297.8L500.7 285.0M501.7 561.1L508.5 559.6M501.7 561.1L498.3 549.7M508.5 559.6L498.3 549.7M498.3 549.7L507.1 547.9M498.3 549.7L500.4 534.5M498.3 549.7L506.3 536.4M500.4 534.5L506.3 536.4M500.4 534.5L501.9 525.4M506.3 536.4L501.9 525.4M501.9 525.4L509.2 522.6M501.9 525.4L500.5 513.4M501.9 525.4L507.3 513.2M500.5 513.4L507.3 513.2M500.5 513.4L500.7 501.4M507.3 513.2L500.7 501.4M500.7 501.4L508.4 499.7M500.7 501.4L500.7 489.2M500.7 501.4L509.4 486.3M500.7 489.2L509.4 486.3M500.7 489.2L501.1 477.5M509.4 486.3L501.1 477.5M501.1 477.5L507.7 476.1M501.1 477.5L503.0 465.3M501.1 477.5L507.7 464.8M503.0 465.3L507.7 464.8M503.0 465.3L500.1 452.6M507.7 464.8L500.1 452.6M500.1 452.6L506.3 452.0M500.1 452.6L501.0 441.3M500.1 452.6L507.2 441.2M501.0 441.3L507.2 441.2M501.0 441.3L500.8 429.0M507.2 441.2L500.8 429.0M500.8 429.0L509.0 427.2M500.8 429.0L500.4 418.0M500.8 429.0L506.9 415.9M500.4 418.0L506.9 415.9M500.4 418.0L501.9 405.5M506.9 415.9L501.9 405.5M501.9 405.5L507.1 403.4M501.9 405.5L500.5 392.0M501.9 405.5L508.4 391.5M500.5 392.0L508.4 391.5M500.5 392.0L499.4 381.2M508.4 391.5L499.4 381.2M499.4 381.2L509.8 380.1M499.4 381.2L500.3 369.1M499.4 381.2L507.5 366.9M500.3 369.1L507.5 366.9M500.3 369.1L499.5 357.1M507.5 366.9L499.5 357.1M499.5 357.1L507.5 357.1M499.5 357.1L498.6 344.0M499.5 357.1L508.5 345.4M498.6 344.0L508.5 345.4M498.6 344.0L499.8 333.8M508.5 345.4L499.8 333.8M499.8 333.8L509.3 332.5M499.8 333.8L499.9 320.2M499.8 333.8L507.3 319.8M499.9 320.2L507.3 319.8M499.9 320.2L500.8 309.1M507.3 319.8L500.8 309.1M500.8 309.1L508.1 306.3M500.8 309.1L501.5 297.5M500.8 309.1L508.3 294.9M501.5 297.5L508.3 294.9M501.5 297.5L500.7 285.0M508.3 294.9L500.7 285.0M508.5 559.6L518.1 558.8M508.5 559.6L507.1 547.9M508.5 559.6L514.9 547.0M507.1 547.9L514.9 547.0M507.1 547.9L506.3 536.4M514.9 547.0L506.3 536.4M506.3 536.4L512.9 535.2M506.3 536.4L509.2 522.6M506.3 536.4L517.1 522.8M509.2 522.6L517.1 522.8M509.2 522.6L507.3 513.2M517.1 522.8L507.3 513.2M507.3 513.2L515.5 510.6M507.3 513.2L508.4 499.7M507.3 513.2L515.6 497.6M508.4 499.7L515.6 497.6M508.4 499.7L509.4 486.3M515.6 497.6L509.4 486.3M509.4 486.3L517.1 486.4M509.4 486.3L507.7 476.1M509.4 486.3L515.0 476.5M507.7 476.1L515.0 476.5M507.7 476.1L507.7 464.8M515.0 476.5L507.7 464.8M507.7 464.8L515.5 462.5M507.7 464.8L506.3 452.0M507.7 464.8L517.2 451.1M506.3 452.0L517.2 451.1M506.3 452.0L507.2 441.2M517.2 451.1L507.2 441.2M507.2 441.2L516.5 438.3M507.2 441.2L509.0 427.2M507.2 441.2L513.7 427.1M509.0 427.2L513.7 427.1M509.0 427.2L506.9 415.9M513.7 427.1L506.9 415.9M506.9 415.9L517.0 414.4M506.9 415.9L507.1 403.4M506.9 415.9L515.9 403.6M507.1 403.4L515.9 403.6M507.1 403.4L508.4 391.5M515.9 403.6L508.4 391.5M508.4 391.5L515.8 391.0M508.4 391.5L509.8 380.1M508.4 391.5L516.3 379.1M509.8 380.1L516.3 379.1M509.8 380.1L507.5 366.9M516.3 379.1L507.5 366.9M507.5 366.9L515.0 368.0M507.5 366.9L507.5 357.1M507.5 366.9L516.3 355.3M507.5 357.1L516.3 355.3M507.5 357.1L508.5 345.4M516.3 355.3L508.5 345.4M508.5 345.4L516.3 340.3M508.5 345.4L509.3 332.5M508.5 345.4L515.8 331.0M509.3 332.5L515.8 331.0M509.3 332.5L507.3 319.8M515.8 331.0L507.3 319.8M507.3 319.8L513.5 321.0M507.3 319.8L508.1 306.3M507.3 319.8L515.9 306.5M508.1 306.3L515.9 306.5M508.1 306.3L508.3 294.9M515.9 306.5L508.3 294.9M508.3 294.9L515.2 295.2M508.3 294.9L507.9 283.5M508.3 294.9L515.5 281.3M518.1 558.8L523.6 557.8M518.1 558.8L514.9 547.0M523.6 557.8L514.9 547.0M514.9 547.0L522.3 544.6M514.9 547.0L512.9 535.2M514.9 547.0L523.1 533.2M512.9 535.2L523.1 533.2M512.9 535.2L517.1 522.8M523.1 533.2L517.1 522.8M517.1 522.8L521.6 521.3M517.1 522.8L515.5 510.6M517.1 522.8L523.9 511.1M515.5 510.6L523.9 511.1M515.5 510.6L515.6 497.6M523.9 511.1L515.6 497.6M515.6 497.6L523.8 499.2M515.6 497.6L517.1 486.4M515.6 497.6L522.7 485.7M517.1 486.4L522.7 485.7M517.1 486.4L515.0 476.5M522.7 485.7L515.0 476.5M515.0 476.5L522.1 473.1M515.0 476.5L515.5 462.5M515.0 476.5L524.7 462.3M515.5 462.5L524.7 462.3M515.5 462.5L517.2 451.1M524.7 462.3L517.2 451.1M517.2 451.1L523.7 452.5M517.2 451.1L516.5 438.3M517.2 451.1L525.0 437.0M516.5 438.3L525.0 437.0M516.5 438.3L513.7 427.1M525.0 437.0L513.7 427.1M513.7 427.1L524.1 425.1M513.7 427.1L517.0 414.4M513.7 427.1L524.1 411.9M517.0 414.4L524.1 411.9M517.0 414.4L515.9 403.6M524.1 411.9L515.9 403.6M515.9 403.6L522.1 400.9M515.9 403.6L515.8 391.0M515.9 403.6L525.1 388.1M515.8 391.0L525.1 388.1M515.8 391.0L516.3 379.1M525.1 388.1L516.3 379.1M516.3 379.1L524.2 378.9M516.3 379.1L515.0 368.0M516.3 379.1L523.2 366.7M515.0 368.0L523.2 366.7M515.0 368.0L516.3 355.3M523.2 366.7L516.3 355.3M516.3 355.3L525.7 354.1M516.3 355.3L516.3 340.3M516.3 355.3L522.8 343.2M516.3 340.3L522.8 343.2M516.3 340.3L515.8 331.0M522.8 343.2L515.8 331.0M515.8 331.0L523.9 328.7M515.8 331.0L513.5 321.0M515.8 331.0L523.3 318.1M513.5 321.0L523.3 318.1M513.5 321.0L515.9 306.5M523.3 318.1L515.9 306.5M515.9 306.5L521.9 304.9M515.9 306.5L515.2 295.2M515.9 306.5L522.4 292.6M515.2 295.2L522.4 292.6M515.2 295.2L515.5 281.3M523.6 557.8L528.7 555.0M523.6 557.8L522.3 544.6M523.6 557.8L531.8 543.8M522.3 544.6L531.8 543.8M522.3 544.6L523.1 533.2M531.8 543.8L523.1 533.2M523.1 533.2L530.0 532.3M523.1 533.2L521.6 521.3M523.1 533.2L529.0 521.4M521.6 521.3L529.0 521.4M521.6 521.3L523.9 511.1M529.0 521.4L523.9 511.1M523.9 511.1L528.0 509.6M523.9 511.1L523.8 499.2M523.9 511.1L529.8 496.7M523.8 499.2L529.8 496.7M523.8 499.2L522.7 485.7M529.8 496.7L522.7 485.7M522.7 485.7L530.8 485.5M522.7 485.7L522.1 473.1M522.7 485.7L529.3 473.3M522.1 473.1L529.3 473.3M522.1 473.1L524.7 462.3M529.3 473.3L524.7 462.3M524.7 462.3L530.5 460.5M524.7 462.3L523.7 452.5M524.7 462.3L530.2 449.8M523.7 452.5L530.2 449.8M523.7 452.5L525.0 437.0M530.2 449.8L525.0 437.0M525.0 437.0L531.0 437.9M525.0 437.0L524.1 425.1M525.0 437.0L531.4 422.6M524.1 425.1L531.4 422.6M524.1 425.1L524.1 411.9M531.4 422.6L524.1 411.9M524.1 411.9L530.4 413.7M524.1 411.9L522.1 400.9M524.1 411.9L529.6 398.9M522.1 400.9L529.6 398.9M522.1 400.9L525.1 388.1M529.6 398.9L525.1 388.1M525.1 388.1L528.2 390.6M525.1 388.1L524.2 378.9M525.1 388.1L529.6 376.8M524.2 378.9L529.6 376.8M524.2 378.9L523.2 366.7M529.6 376.8L523.2 366.7M523.2 366.7L529.4 365.1M523.2 366.7L525.7 354.1M523.2 366.7L532.2 351.1M525.7 354.1L532.2 351.1M525.7 354.1L522.8 343.2M532.2 351.1L522.8 343.2M522.8 343.2L530.4 339.8M522.8 343.2L523.9 328.7M522.8 343.2L528.6 327.7M523.9 328.7L528.6 327.7M523.9 328.7L523.3 318.1M528.6 327.7L523.3 318.1M523.3 318.1L530.5 317.9M523.3 318.1L521.9 304.9M523.3 318.1L531.8 304.6M521.9 304.9L531.8 304.6M521.9 304.9L522.4 292.6M531.8 304.6L522.4 292.6M522.4 292.6L528.8 293.3M522.4 292.6L523.6 282.1M528.7 555.0L539.1 555.1M528.7 555.0L531.8 543.8M539.1 555.1L531.8 543.8M531.8 543.8L538.9 543.3M531.8 543.8L530.0 532.3M531.8 543.8L538.7 532.0M530.0 532.3L538.7 532.0M530.0 532.3L529.0 521.4M538.7 532.0L529.0 521.4M529.0 521.4L538.8 520.2M529.0 521.4L528.0 509.6M529.0 521.4L537.0 506.1M528.0 509.6L537.0 506.1M528.0 509.6L529.8 496.7M537.0 506.1L529.8 496.7M529.8 496.7L538.0 497.2M529.8 496.7L530.8 485.5M529.8 496.7L537.2 482.6M530.8 485.5L537.2 482.6M530.8 485.5L529.3 473.3M537.2 482.6L529.3 473.3M529.3 473.3L540.3 469.9M529.3 473.3L530.5 460.5M529.3 473.3L537.4 459.1M530.5 460.5L537.4 459.1M530.5 460.5L530.2 449.8M537.4 459.1L530.2 449.8M530.2 449.8L537.3 446.8M530.2 449.8L531.0 437.9M530.2 449.8L539.1 435.7M531.0 437.9L539.1 435.7M531.0 437.9L531.4 422.6M539.1 435.7L531.4 422.6M531.4 422.6L538.2 421.8M531.4 422.6L530.4 413.7M531.4 422.6L538.8 411.7M530.4 413.7L538.8 411.7M530.4 413.7L529.6 398.9M538.8 411.7L529.6 398.9M529.6 398.9L538.2 400.3M529.6 398.9L528.2 390.6M529.6 398.9L538.3 387.5M528.2 390.6L538.3 387.5M528.2 390.6L529.6 376.8M538.3 387.5L529.6 376.8M529.6 376.8L538.4 374.8M529.6 376.8L529.4 365.1M529.6 376.8L537.1 362.1M529.4 365.1L537.1 362.1M529.4 365.1L532.2 351.1M537.1 362.1L532.2 351.1M532.2 351.1L539.0 350.8M532.2 351.1L530.4 339.8M532.2 351.1L538.2 340.6M530.4 339.8L538.2 340.6M530.4 339.8L528.6 327.7M538.2 340.6L528.6 327.7M528.6 327.7L539.8 327.1M528.6 327.7L530.5 317.9M528.6 327.7L538.2 315.6M530.5 317.9L538.2 315.6M530.5 317.9L531.8 304.6M538.2 315.6L531.8 304.6M531.8 304.6L536.7 303.0M531.8 304.6L528.8 293.3M531.8 304.6L540.9 291.4M528.8 293.3L540.9 291.4M528.8 293.3L530.5 280.6M539.1 555.1L544.3 554.3M539.1 555.1L538.9 543.3M539.1 555.1L543.2 543.1M538.9 543.3L543.2 543.1M538.9 543.3L538.7 532.0M543.2 543.1L538.7 532.0M538.7 532.0L546.3 530.3M538.7 532.0L538.8 520.2M538.7 532.0L545.8 516.5M538.8 520.2L545.8 516.5M538.8 520.2L537.0 506.1M545.8 516.5L537.0 506.1M537.0 506.1L545.7 507.1M537.0 506.1L538.0 497.2M537.0 506.1L546.0 495.3M538.0 497.2L546.0 495.3M538.0 497.2L537.2 482.6M546.0 495.3L537.2 482.6M537.2 482.6L545.4 484.4M537.2 482.6L540.3 469.9M537.2 482.6L545.9 471.2M540.3 469.9L545.9 471.2M540.3 469.9L537.4 459.1M545.9 471.2L537.4 459.1M537.4 459.1L546.6 457.6M537.4 459.1L537.3 446.8M537.4 459.1L544.4 447.2M537.3 446.8L544.4 447.2M537.3 446.8L539.1 435.7M544.4 447.2L539.1 435.7M539.1 435.7L544.2 433.8M539.1 435.7L538.2 421.8M539.1 435.7L546.5 421.3M538.2 421.8L546.5 421.3M538.2 421.8L538.8 411.7M546.5 421.3L538.8 411.7M538.8 411.7L544.5 409.1M538.8 411.7L538.2 400.3M538.8 411.7L544.4 400.3M538.2 400.3L544.4 400.3M538.2 400.3L538.3 387.5M544.4 400.3L538.3 387.5M538.3 387.5L546.1 387.3M538.3 387.5L538.4 374.8M538.3 387.5L543.5 371.9M538.4 374.8L543.5 371.9M538.4 374.8L537.1 362.1M543.5 371.9L537.1 362.1M537.1 362.1L544.3 363.4M537.1 362.1L539.0 350.8M537.1 362.1L546.7 348.4M539.0 350.8L546.7 348.4M539.0 350.8L538.2 340.6M546.7 348.4L538.2 340.6M538.2 340.6L543.7 339.0M538.2 340.6L539.8 327.1M538.2 340.6L545.7 326.8M539.8 327.1L545.7 326.8M539.8 327.1L538.2 315.6M545.7 326.8L538.2 315.6M538.2 315.6L546.2 313.3M538.2 315.6L536.7 303.0M538.2 315.6L545.6 302.1M536.7 303.0L545.6 302.1M536.7 303.0L540.9 291.4M545.6 302.1L540.9 291.4M540.9 291.4L546.7 290.0M544.3 554.3L551.4 553.2M544.3 554.3L543.2 543.1M551.4 553.2L543.2 543.1M543.2 543.1L553.1 541.1M543.2 543.1L546.3 530.3M543.2 543.1L553.6 527.3M546.3 530.3L553.6 527.3M546.3 530.3L545.8 516.5M553.6 527.3L545.8 516.5M545.8 516.5L553.6 518.9M545.8 516.5L545.7 507.1M545.8 516.5L552.9 504.7M545.7 507.1L552.9 504.7M545.7 507.1L546.0 495.3M552.9 504.7L546.0 495.3M546.0 495.3L552.8 494.5M546.0 495.3L545.4 484.4M546.0 495.3L552.8 480.4M545.4 484.4L552.8 480.4M545.4 484.4L545.9 471.2M552.8 480.4L545.9 471.2M545.9 471.2L551.2 470.7M545.9 471.2L546.6 457.6M545.9 471.2L554.4 457.2M546.6 457.6L554.4 457.2M546.6 457.6L544.4 447.2M554.4 457.2L544.4 447.2M544.4 447.2L555.1 444.8M544.4 447.2L544.2 433.8M544.4 447.2L553.7 431.9M544.2 433.8L553.7 431.9M544.2 433.8L546.5 421.3M546.5 421.3L544.5 409.1M546.5 421.3L553.5 409.9M544.5 409.1L553.5 409.9M544.5 409.1L544.4 400.3M553.5 409.9L544.4 400.3M544.4 400.3L552.1 396.7M544.4 400.3L546.1 387.3M544.4 400.3L552.9 384.9M546.1 387.3L552.9 384.9M546.1 387.3L543.5 371.9M552.9 384.9L543.5 371.9M543.5 371.9L552.7 374.1M543.5 371.9L544.3 363.4M543.5 371.9L554.2 359.4M544.3 363.4L554.2 359.4M544.3 363.4L546.7 348.4M554.2 359.4L546.7 348.4M546.7 348.4L554.3 349.4M546.7 348.4L543.7 339.0M546.7 348.4L553.3 337.6M543.7 339.0L553.3 337.6M543.7 339.0L545.7 326.8M553.3 337.6L545.7 326.8M545.7 326.8L553.9 325.9M545.7 326.8L546.2 313.3M545.7 326.8L551.4 314.1M546.2 313.3L551.4 314.1M546.2 313.3L545.6 302.1M551.4 314.1L545.6 302.1M545.6 302.1L551.8 301.6M545.6 302.1L546.7 290.0M545.6 302.1L553.2 287.7M546.7 290.0L553.2 287.7M551.4 553.2L561.6 553.5M551.4 553.2L553.1 541.1M551.4 553.2L561.2 540.1M553.1 541.1L561.2 540.1M553.1 541.1L553.6 527.3M561.2 540.1L553.6 527.3M553.6 527.3L558.8 528.3M553.6 527.3L553.6 518.9M553.6 527.3L559.9 514.4M553.6 518.9L559.9 514.4M553.6 518.9L552.9 504.7M559.9 514.4L552.9 504.7M552.9 504.7L561.1 504.0M552.9 504.7L552.8 494.5M552.9 504.7L560.3 494.1M552.8 494.5L560.3 494.1M552.8 494.5L552.8 480.4M560.3 494.1L552.8 480.4M552.8 480.4L560.0 478.0M552.8 480.4L551.2 470.7M552.8 480.4L558.2 468.7M551.2 470.7L558.2 468.7M551.2 470.7L554.4 457.2M558.2 468.7L554.4 457.2M554.4 457.2L560.3 455.3M554.4 457.2L555.1 444.8M554.4 457.2L558.3 443.3M552.0 421.2L553.5 409.9M559.6 419.2L553.5 409.9M553.5 409.9L560.4 407.3M553.5 409.9L552.1 396.7M553.5 409.9L560.8 392.6M552.1 396.7L560.8 392.6M552.1 396.7L552.9 384.9M560.8 392.6L552.9 384.9M552.9 384.9L559.2 385.3M552.9 384.9L552.7 374.1M552.9 384.9L560.7 371.0M552.7 374.1L560.7 371.0M552.7 374.1L554.2 359.4M560.7 371.0L554.2 359.4M554.2 359.4L560.3 359.5M554.2 359.4L554.3 349.4M554.2 359.4L560.1 349.5M554.3 349.4L560.1 349.5M554.3 349.4L553.3 337.6M560.1 349.5L553.3 337.6M553.3 337.6L560.0 336.3M553.3 337.6L553.9 325.9M553.3 337.6L559.6 323.3M553.9 325.9L559.6 323.3M553.9 325.9L551.4 314.1M559.6 323.3L551.4 314.1M551.4 314.1L558.9 311.4M551.4 314.1L551.8 301.6M551.4 314.1L560.0 299.8M551.8 301.6L560.0 299.8M551.8 301.6L553.2 287.7M560.0 299.8L553.2 287.7M553.2 287.7L560.5 288.2M561.6 553.5L570.3 551.3M561.6 553.5L561.2 540.1M570.3 551.3L561.2 540.1M561.2 540.1L569.8 539.9M561.2 540.1L558.8 528.3M561.2 540.1L569.1 527.8M558.8 528.3L569.1 527.8M558.8 528.3L559.9 514.4M569.1 527.8L559.9 514.4M559.9 514.4L566.5 516.2M559.9 514.4L561.1 504.0M559.9 514.4L567.0 503.4M561.1 504.0L567.0 503.4M561.1 504.0L560.3 494.1M567.0 503.4L560.3 494.1M560.3 494.1L567.9 492.6M560.3 494.1L560.0 478.0M560.3 494.1L569.2 480.8M560.0 478.0L569.2 480.8M560.0 478.0L558.2 468.7M569.2 480.8L558.2 468.7M558.2 468.7L568.5 467.0M558.2 468.7L560.3 455.3M558.2 468.7L568.8 457.4M559.6 419.2L560.4 407.3M559.6 419.2L568.6 406.9M560.4 407.3L568.6 406.9M560.4 407.3L560.8 392.6M568.6 406.9L560.8 392.6M560.8 392.6L568.1 396.5M560.8 392.6L559.2 385.3M560.8 392.6L569.9 384.2M559.2 385.3L569.9 384.2M559.2 385.3L560.7 371.0M569.9 384.2L560.7 371.0M560.7 371.0L569.5 372.3M560.7 371.0L560.3 359.5M560.7 371.0L569.8 357.7M560.3 359.5L569.8 357.7M560.3 359.5L560.1 349.5M569.8 357.7L560.1 349.5M560.1 349.5L567.5 347.2M560.1 349.5L560.0 336.3M560.1 349.5L568.4 336.3M560.0 336.3L568.4 336.3M560.0 336.3L559.6 323.3M568.4 336.3L559.6 323.3M559.6 323.3L566.2 323.2M559.6 323.3L558.9 311.4M559.6 323.3L568.3 310.3M558.9 311.4L568.3 310.3M558.9 311.4L560.0 299.8M568.3 310.3L560.0 299.8M560.0 299.8L567.9 300.0M560.0 299.8L560.5 288.2M560.0 299.8L568.5 286.9M560.5 288.2L568.5 286.9M570.3 551.3L576.4 548.6M570.3 551.3L569.8 539.9M570.3 551.3L576.4 539.2M569.8 539.9L576.4 539.2M569.8 539.9L569.1 527.8M576.4 539.2L569.1 527.8M569.1 527.8L577.2 525.8M569.1 527.8L566.5 516.2M569.1 527.8L574.7 512.3M566.5 516.2L574.7 512.3M566.5 516.2L567.0 503.4M574.7 512.3L567.0 503.4M567.0 503.4L576.2 502.7M567.0 503.4L567.9 492.6M567.0 503.4L575.8 490.2M567.9 492.6L575.8 490.2M567.9 492.6L569.2 480.8M575.8 490.2L569.2 480.8M569.2 480.8L576.2 477.5M569.2 480.8L568.5 467.0M568.6 406.9L574.2 404.8M568.6 406.9L568.1 396.5M568.6 406.9L573.9 394.2M568.1 396.5L573.9 394.2M568.1 396.5L569.9 384.2M573.9 394.2L569.9 384.2M569.9 384.2L578.7 382.1M569.9 384.2L569.5 372.3M569.9 384.2L575.1 370.1M569.5 372.3L575.1 370.1M569.5 372.3L569.8 357.7M575.1 370.1L569.8 357.7M569.8 357.7L575.5 358.9M569.8 357.7L567.5 347.2M569.8 357.7L575.5 345.0M567.5 347.2L575.5 345.0M567.5 347.2L568.4 336.3M575.5 345.0L568.4 336.3M568.4 336.3L573.6 334.3M568.4 336.3L566.2 323.2M568.4 336.3L576.5 322.0M566.2 323.2L576.5 322.0M566.2 323.2L568.3 310.3M576.5 322.0L568.3 310.3M568.3 310.3L574.6 309.5M568.3 310.3L567.9 300.0M568.3 310.3L575.2 298.5M567.9 300.0L575.2 298.5M567.9 300.0L568.5 286.9M575.2 298.5L568.5 286.9M568.5 286.9L575.5 287.1M576.4 548.6L582.1 549.2M576.4 548.6L576.4 539.2M582.1 549.2L576.4 539.2M576.4 539.2L586.3 536.0M576.4 539.2L577.2 525.8M576.4 539.2L585.4 525.4M577.2 525.8L585.4 525.4M577.2 525.8L574.7 512.3M585.4 525.4L574.7 512.3M574.7 512.3L584.1 511.8M574.7 512.3L576.2 502.7M574.7 512.3L583.6 499.9M576.2 502.7L583.6 499.9M576.2 502.7L575.8 490.2M583.6 499.9L575.8 490.2M575.8 490.2L581.8 490.1M574.2 404.8L582.9 404.8M574.2 404.8L573.9 394.2M582.9 404.8L573.9 394.2M573.9 394.2L582.0 391.4M573.9 394.2L578.7 382.1M573.9 394.2L583.7 379.7M578.7 382.1L583.7 379.7M578.7 382.1L575.1 370.1M583.7 379.7L575.1 370.1M575.1 370.1L582.0 369.6M575.1 370.1L575.5 358.9M575.1 370.1L582.5 356.4M575.5 358.9L582.5 356.4M575.5 358.9L575.5 345.0M582.5 356.4L575.5 345.0M575.5 345.0L581.6 343.5M575.5 345.0L573.6 334.3M575.5 345.0L581.6 331.4M573.6 334.3L581.6 331.4M573.6 334.3L576.5 322.0M581.6 331.4L576.5 322.0M576.5 322.0L584.3 319.8M576.5 322.0L574.6 309.5M576.5 322.0L580.7 307.6M574.6 309.5L580.7 307.6M574.6 309.5L575.2 298.5M580.7 307.6L575.2 298.5M575.2 298.5L583.7 295.6M575.2 298.5L575.5 287.1M575.2 298.5L582.9 283.8M575.5 287.1L582.9 283.8M582.1 549.2L591.5 547.6M582.1 549.2L586.3 536.0M582.1 549.2L589.1 535.0M586.3 536.0L589.1 535.0M586.3 536.0L585.4 525.4M589.1 535.0L585.4 525.4M585.4 525.4L590.8 524.8M585.4 525.4L584.1 511.8M585.4 525.4L589.8 511.7M584.1 511.8L589.8 511.7M584.1 511.8L583.6 499.9M589.8 511.7L583.6 499.9M582.9 404.8L582.0 391.4M582.9 404.8L589.5 391.0M582.0 391.4L589.5 391.0M582.0 391.4L583.7 379.7M589.5 391.0L583.7 379.7M583.7 379.7L590.7 379.4M583.7 379.7L582.0 369.6M583.7 379.7L589.7 367.2M582.0 369.6L589.7 367.2M582.0 369.6L582.5 356.4M589.7 367.2L582.5 356.4M582.5 356.4L589.5 356.3M582.5 356.4L581.6 343.5M582.5 356.4L590.8 344.4M581.6 343.5L590.8 344.4M581.6 343.5L581.6 331.4M590.8 344.4L581.6 331.4M581.6 331.4L592.7 332.8M581.6 331.4L584.3 319.8M581.6 331.4L590.9 319.5M584.3 319.8L590.9 319.5M584.3 319.8L580.7 307.6M590.9 319.5L580.7 307.6M580.7 307.6L592.7 307.8M580.7 307.6L583.7 295.6M580.7 307.6L590.2 296.9M583.7 295.6L590.2 296.9M583.7 295.6L582.9 283.8M590.2 296.9L582.9 283.8M591.5 547.6L597.3 545.1M591.5 547.6L589.1 535.0M597.3 545.1L589.1 535.0M589.1 535.0L598.6 534.6M589.1 535.0L590.8 524.8M589.1 535.0L599.5 521.9M590.8 524.8L599.5 521.9M590.8 524.8L589.8 511.7M590.0 404.1L589.5 391.0M599.5 403.3L589.5 391.0M589.5 391.0L597.9 390.2M589.5 391.0L590.7 379.4M589.5 391.0L601.0 377.5M590.7 379.4L601.0 377.5M590.7 379.4L589.7 367.2M601.0 377.5L589.7 367.2M589.7 367.2L599.9 367.5M589.7 367.2L589.5 356.3M589.7 367.2L598.8 352.6M589.5 356.3L598.8 352.6M589.5 356.3L590.8 344.4M598.8 352.6L590.8 344.4M590.8 344.4L598.9 342.0M590.8 344.4L592.7 332.8M590.8 344.4L597.1 331.1M592.7 332.8L597.1 331.1M592.7 332.8L590.9 319.5M597.1 331.1L590.9 319.5M590.9 319.5L597.3 319.1M590.9 319.5L592.7 307.8M590.9 319.5L597.1 307.1M592.7 307.8L597.1 307.1M592.7 307.8L590.2 296.9M597.1 307.1L590.2 296.9M590.2 296.9L598.5 293.7M590.2 296.9L590.9 283.4M590.2 296.9L597.1 281.8M597.3 545.1L604.6 545.9M597.3 545.1L598.6 534.6M597.3 545.1L605.2 533.9M598.6 534.6L605.2 533.9M599.5 403.3L597.9 390.2M597.9 390.2L604.0 391.2M597.9 390.2L601.0 377.5M604.0 391.2L601.0 377.5M601.0 377.5L604.3 376.7M601.0 377.5L599.9 367.5M601.0 377.5L606.1 365.5M599.9 367.5L606.1 365.5M599.9 367.5L598.8 352.6M606.1 365.5L598.8 352.6M598.8 352.6L605.5 353.5M598.8 352.6L598.9 342.0M598.8 352.6L605.9 342.4M598.9 342.0L605.9 342.4M598.9 342.0L597.1 331.1M605.9 342.4L597.1 331.1M597.1 331.1L605.9 328.1M597.1 331.1L597.3 319.1M597.1 331.1L604.8 318.8M597.3 319.1L604.8 318.8M597.3 319.1L597.1 307.1M604.8 318.8L597.1 307.1M597.1 307.1L607.5 306.3M597.1 307.1L598.5 293.7M597.1 307.1L606.6 293.7M598.5 293.7L606.6 293.7M598.5 293.7L597.1 281.8M606.6 293.7L597.1 281.8M604.6 545.9L605.2 533.9M604.0 391.2L613.6 389.0M604.0 391.2L604.3 376.7M604.0 391.2L613.9 377.4M604.3 376.7L613.9 377.4M604.3 376.7L606.1 365.5M613.9 377.4L606.1 365.5M606.1 365.5L613.4 364.0M606.1 365.5L605.5 353.5M606.1 365.5L612.4 351.8M605.5 353.5L612.4 351.8M605.5 353.5L605.9 342.4M612.4 351.8L605.9 342.4M605.9 342.4L612.0 339.3M605.9 342.4L605.9 328.1M605.9 342.4L612.9 326.0M605.9 328.1L612.9 326.0M605.9 328.1L604.8 318.8M612.9 326.0L604.8 318.8M604.8 318.8L611.8 315.5M604.8 318.8L607.5 306.3M604.8 318.8L613.5 305.3M607.5 306.3L613.5 305.3M607.5 306.3L606.6 293.7M613.5 305.3L606.6 293.7M606.6 293.7L613.3 292.2M606.6 293.7L607.6 280.8M606.6 293.7L612.5 281.4M613.6 389.0L620.7 388.4M613.6 389.0L613.9 377.4M620.7 388.4L613.9 377.4M613.9 377.4L620.9 373.0M613.9 377.4L613.4 364.0M613.9 377.4L621.0 363.6M613.4 364.0L621.0 363.6M613.4 364.0L612.4 351.8M621.0 363.6L612.4 351.8M612.4 351.8L621.2 351.5M612.4 351.8L612.0 339.3M612.4 351.8L620.5 339.7M612.0 339.3L620.5 339.7M612.0 339.3L612.9 326.0M620.5 339.7L612.9 326.0M612.9 326.0L619.9 325.5M612.9 326.0L611.8 315.5M612.9 326.0L620.3 314.1M611.8 315.5L620.3 314.1M611.8 315.5L613.5 305.3M620.3 314.1L613.5 305.3M613.5 305.3L622.3 303.1M613.5 305.3L613.3 292.2M613.5 305.3L622.1 289.9M613.3 292.2L622.1 289.9M613.3 292.2L612.5 281.4M622.1 289.9L612.5 281.4M620.7 388.4L620.9 373.0M620.7 388.4L628.5 374.6M620.9 373.0L628.5 374.6M620.9 373.0L621.0 363.6M628.5 374.6L621.0 363.6M621.0 363.6L628.5 361.3M621.0 363.6L621.2 351.5M621.0 363.6L628.3 350.2M621.2 351.5L628.3 350.2M621.2 351.5L620.5 339.7M628.3 350.2L620.5 339.7M620.5 339.7L629.2 337.3M620.5 339.7L619.9 325.5M620.5 339.7L629.0 326.5M619.9 325.5L629.0 326.5M619.9 325.5L620.3 314.1M629.0 326.5L620.3 314.1M620.3 314.1L628.1 315.9M620.3 314.1L622.3 303.1M620.3 314.1L628.8 301.5M622.3 303.1L628.8 301.5M622.3 303.1L622.1 289.9M628.8 301.5L622.1 289.9M622.1 289.9L628.3 289.3M622.1 289.9L619.4 279.6M622.1 289.9L626.8 277.5M629.0 385.8L628.5 374.6M635.0 383.8L628.5 374.6M628.5 374.6L636.2 373.9M628.5 374.6L628.5 361.3M628.5 374.6L635.7 362.2M628.5 361.3L635.7 362.2M628.5 361.3L628.3 350.2M635.7 362.2L628.3 350.2M628.3 350.2L636.7 349.2M628.3 350.2L629.2 337.3M628.3 350.2L635.6 336.3M629.2 337.3L635.6 336.3M629.2 337.3L629.0 326.5M635.6 336.3L629.0 326.5M629.0 326.5L635.7 324.5M629.0 326.5L628.1 315.9M629.0 326.5L637.0 313.6M628.1 315.9L637.0 313.6M628.1 315.9L628.8 301.5M637.0 313.6L628.8 301.5M628.8 301.5L635.3 300.5M628.8 301.5L628.3 289.3M628.8 301.5L635.9 289.9M628.3 289.3L635.9 289.9M628.3 289.3L626.8 277.5M635.9 289.9L626.8 277.5M635.0 383.8L636.2 373.9M635.0 383.8L642.3 373.3M636.2 373.9L642.3 373.3M636.2 373.9L635.7 362.2M642.3 373.3L635.7 362.2M635.7 362.2L645.0 360.8M635.7 362.2L636.7 349.2M635.7 362.2L643.4 347.4M636.7 349.2L643.4 347.4M636.7 349.2L635.6 336.3M643.4 347.4L635.6 336.3M635.6 336.3L643.8 337.9M635.6 336.3L635.7 324.5M635.6 336.3L642.6 322.7M635.7 324.5L642.6 322.7M635.7 324.5L637.0 313.6M642.6 322.7L637.0 313.6M637.0 313.6L644.9 311.6M637.0 313.6L635.3 300.5M637.0 313.6L643.8 300.0M635.3 300.5L643.8 300.0M635.3 300.5L635.9 289.9M643.8 300.0L635.9 289.9M635.9 289.9L643.3 287.6M635.9 289.9L635.8 277.9M642.3 373.3L645.0 360.8M645.0 360.8L643.4 347.4M643.4 347.4L643.8 337.9M643.8 337.9L642.6 322.7M642.6 322.7L644.9 311.6M644.9 311.6L643.8 300.0M643.8 300.0L643.3 287.6M545.5 424.2L553.4 420.9M545.5 424.2L550.0 433.1M545.5 424.2L558.8 430.8M550.0 433.1L558.8 430.8M550.0 433.1L554.4 443.1M558.8 430.8L554.4 443.1M554.4 443.1L563.5 437.9M554.4 443.1L568.2 447.6M558.6 451.3L568.2 447.6M558.6 451.3L564.0 460.4M568.2 447.6L564.0 460.4M564.0 460.4L571.9 454.6M564.0 460.4L577.7 465.2M567.5 470.4L577.7 465.2M577.7 465.2L573.4 478.6M573.4 478.6L581.5 474.0M573.4 478.6L577.7 487.8M573.4 478.6L587.3 484.0M577.7 487.8L587.3 484.0M587.3 484.0L582.1 496.5M582.1 496.5L590.9 492.8M582.1 496.5L586.9 504.5M582.1 496.5L595.8 500.7M586.9 504.5L595.8 500.7M586.9 504.5L592.0 513.9M595.8 500.7L592.0 513.9M592.0 513.9L600.4 509.6M592.0 513.9L595.5 522.4M592.0 513.9L605.0 518.1M595.5 522.4L605.0 518.1M605.0 518.1L599.2 530.5M599.2 530.5L609.7 526.7M599.2 530.5L614.7 535.8M604.4 540.8L614.7 535.8M614.7 535.8L610.3 549.9M610.3 549.9L619.2 545.0M610.3 549.9L622.5 554.7M614.8 559.1L622.5 554.7M622.5 554.7L618.9 566.5M618.9 566.5L628.4 562.8M618.9 566.5L632.6 572.8M623.2 575.9L632.6 572.8M553.4 420.9L563.7 415.9M553.4 420.9L558.8 430.8M563.7 415.9L558.8 430.8M558.8 430.8L568.1 425.9M558.8 430.8L563.5 437.9M558.8 430.8L572.6 434.1M563.5 437.9L572.6 434.1M563.5 437.9L568.2 447.6M572.6 434.1L568.2 447.6M568.2 447.6L578.0 444.5M568.2 447.6L571.9 454.6M568.2 447.6L581.2 452.1M571.9 454.6L581.2 452.1M571.9 454.6L577.7 465.2M581.2 452.1L577.7 465.2M577.7 465.2L587.4 460.9M577.7 465.2L581.5 474.0M577.7 465.2L591.6 469.4M581.5 474.0L591.6 469.4M581.5 474.0L587.3 484.0M591.6 469.4L587.3 484.0M587.3 484.0L595.3 479.0M587.3 484.0L590.9 492.8M587.3 484.0L600.6 486.9M590.9 492.8L600.6 486.9M590.9 492.8L595.8 500.7M600.6 486.9L595.8 500.7M595.8 500.7L604.3 496.9M595.8 500.7L600.4 509.6M595.8 500.7L610.3 505.8M600.4 509.6L610.3 505.8M600.4 509.6L605.0 518.1M610.3 505.8L605.0 518.1M605.0 518.1L614.4 514.6M605.0 518.1L609.7 526.7M605.0 518.1L618.1 523.5M609.7 526.7L618.1 523.5M609.7 526.7L614.7 535.8M618.1 523.5L614.7 535.8M614.7 535.8L624.0 532.5M614.7 535.8L619.2 545.0M614.7 535.8L627.4 540.4M619.2 545.0L627.4 540.4M619.2 545.0L622.5 554.7M627.4 540.4L622.5 554.7M622.5 554.7L633.4 549.0M622.5 554.7L628.4 562.8M622.5 554.7L636.7 559.7M628.4 562.8L636.7 559.7M628.4 562.8L632.6 572.8M636.7 559.7L632.6 572.8M632.6 572.8L641.4 567.2M563.7 415.9L572.0 412.8M563.7 415.9L568.1 425.9M563.7 415.9L576.4 421.0M568.1 425.9L576.4 421.0M568.1 425.9L572.6 434.1M576.4 421.0L572.6 434.1M572.6 434.1L582.4 430.8M572.6 434.1L578.0 444.5M572.6 434.1L586.7 439.8M578.0 444.5L586.7 439.8M578.0 444.5L581.2 452.1M586.7 439.8L581.2 452.1M581.2 452.1L590.3 448.5M581.2 452.1L587.4 460.9M581.2 452.1L596.2 457.5M587.4 460.9L596.2 457.5M587.4 460.9L591.6 469.4M596.2 457.5L591.6 469.4M591.6 469.4L599.4 465.0M591.6 469.4L595.3 479.0M591.6 469.4L604.3 475.1M595.3 479.0L604.3 475.1M595.3 479.0L600.6 486.9M604.3 475.1L600.6 486.9M600.6 486.9L609.3 483.8M600.6 486.9L604.3 496.9M600.6 486.9L613.3 493.0M604.3 496.9L613.3 493.0M604.3 496.9L610.3 505.8M613.3 493.0L610.3 505.8M610.3 505.8L618.2 502.1M610.3 505.8L614.4 514.6M610.3 505.8L623.3 508.5M614.4 514.6L623.3 508.5M614.4 514.6L618.1 523.5M623.3 508.5L618.1 523.5M618.1 523.5L627.8 518.6M618.1 523.5L624.0 532.5M618.1 523.5L632.0 527.9M624.0 532.5L632.0 527.9M624.0 532.5L627.4 540.4M632.0 527.9L627.4 540.4M627.4 540.4L637.8 537.4M627.4 540.4L633.4 549.0M627.4 540.4L642.6 545.7M633.4 549.0L642.6 545.7M633.4 549.0L636.7 559.7M642.6 545.7L636.7 559.7M636.7 559.7L645.3 554.3M636.7 559.7L641.4 567.2M636.7 559.7L650.5 563.1M641.4 567.2L650.5 563.1M572.0 412.8L581.3 407.8M572.0 412.8L576.4 421.0M581.3 407.8L576.4 421.0M576.4 421.0L586.8 417.2M576.4 421.0L582.4 430.8M576.4 421.0L590.8 427.7M582.4 430.8L590.8 427.7M582.4 430.8L586.7 439.8M590.8 427.7L586.7 439.8M586.7 439.8L594.8 435.8M586.7 439.8L590.3 448.5M586.7 439.8L599.8 443.4M590.3 448.5L599.8 443.4M590.3 448.5L596.2 457.5M599.8 443.4L596.2 457.5M596.2 457.5L604.5 453.1M596.2 457.5L599.4 465.0M596.2 457.5L609.4 460.9M599.4 465.0L609.4 460.9M599.4 465.0L604.3 475.1M609.4 460.9L604.3 475.1M604.3 475.1L614.4 470.2M604.3 475.1L609.3 483.8M604.3 475.1L618.7 479.7M609.3 483.8L618.7 479.7M609.3 483.8L613.3 493.0M618.7 479.7L613.3 493.0M613.3 493.0L622.8 488.8M613.3 493.0L618.2 502.1M613.3 493.0L627.3 496.7M618.2 502.1L627.3 496.7M618.2 502.1L623.3 508.5M627.3 496.7L623.3 508.5M623.3 508.5L631.6 505.0M623.3 508.5L627.8 518.6M623.3 508.5L636.6 513.7M627.8 518.6L636.6 513.7M627.8 518.6L632.0 527.9M636.6 513.7L632.0 527.9M632.0 527.9L641.4 523.6M632.0 527.9L637.8 537.4M632.0 527.9L647.3 532.1M637.8 537.4L647.3 532.1M637.8 537.4L642.6 545.7M647.3 532.1L642.6 545.7M642.6 545.7L651.6 541.9M642.6 545.7L645.3 554.3M642.6 545.7L655.7 550.1M645.3 554.3L655.7 550.1M645.3 554.3L650.5 563.1M655.7 550.1L650.5 563.1M650.5 563.1L659.7 559.2M581.3 407.8L591.6 403.0M581.3 407.8L586.8 417.2M581.3 407.8L595.3 413.3M586.8 417.2L595.3 413.3M586.8 417.2L590.8 427.7M595.3 413.3L590.8 427.7M590.8 427.7L599.3 420.6M590.8 427.7L594.8 435.8M590.8 427.7L603.4 431.0M594.8 435.8L603.4 431.0M594.8 435.8L599.8 443.4M603.4 431.0L599.8 443.4M599.8 443.4L609.5 440.2M599.8 443.4L604.5 453.1M599.8 443.4L614.1 448.7M604.5 453.1L614.1 448.7M604.5 453.1L609.4 460.9M614.1 448.7L609.4 460.9M609.4 460.9L619.0 458.0M609.4 460.9L614.4 470.2M609.4 460.9L623.7 466.5M614.4 470.2L623.7 466.5M614.4 470.2L618.7 479.7M623.7 466.5L618.7 479.7M618.7 479.7L627.2 474.5M618.7 479.7L622.8 488.8M618.7 479.7L633.2 484.0M622.8 488.8L633.2 484.0M622.8 488.8L627.3 496.7M633.2 484.0L627.3 496.7M627.3 496.7L636.3 491.9M627.3 496.7L631.6 505.0M627.3 496.7L641.9 501.2M631.6 505.0L641.9 501.2M631.6 505.0L636.6 513.7M641.9 501.2L636.6 513.7M636.6 513.7L646.2 511.1M636.6 513.7L641.4 523.6M636.6 513.7L651.6 519.4M641.4 523.6L651.6 519.4M641.4 523.6L647.3 532.1M651.6 519.4L647.3 532.1M647.3 532.1L654.3 529.2M647.3 532.1L651.6 541.9M647.3 532.1L660.2 537.2M651.6 541.9L660.2 537.2M651.6 541.9L655.7 550.1M660.2 537.2L655.7 550.1M655.7 550.1L664.7 547.6M655.7 550.1L659.7 559.2M655.7 550.1L669.3 554.9M659.7 559.2L669.3 554.9M591.6 403.0L599.9 399.7M591.6 403.0L595.3 413.3M599.9 399.7L595.3 413.3M595.3 413.3L604.7 409.9M595.3 413.3L599.3 420.6M595.3 413.3L609.4 418.1M599.3 420.6L609.4 418.1M599.3 420.6L603.4 431.0M609.4 418.1L603.4 431.0M603.4 431.0L613.6 427.1M603.4 431.0L609.5 440.2M603.4 431.0L618.3 434.9M609.5 440.2L618.3 434.9M609.5 440.2L614.1 448.7M618.3 434.9L614.1 448.7M614.1 448.7L622.8 445.5M614.1 448.7L619.0 458.0M614.1 448.7L627.3 453.3M619.0 458.0L627.3 453.3M619.0 458.0L623.7 466.5M627.3 453.3L623.7 466.5M623.7 466.5L632.5 462.5M623.7 466.5L627.2 474.5M623.7 466.5L636.3 471.5M627.2 474.5L636.3 471.5M627.2 474.5L633.2 484.0M636.3 471.5L633.2 484.0M633.2 484.0L642.4 481.3M633.2 484.0L636.3 491.9M633.2 484.0L646.1 489.0M636.3 491.9L646.1 489.0M636.3 491.9L641.9 501.2M646.1 489.0L641.9 501.2M641.9 501.2L651.4 498.3M641.9 501.2L646.2 511.1M641.9 501.2L655.6 506.8M646.2 511.1L655.6 506.8M646.2 511.1L651.6 519.4M655.6 506.8L651.6 519.4M651.6 519.4L659.1 514.9M651.6 519.4L654.3 529.2M651.6 519.4L664.5 523.9M654.3 529.2L664.5 523.9M654.3 529.2L660.2 537.2M664.5 523.9L660.2 537.2M660.2 537.2L669.7 534.0M660.2 537.2L664.7 547.6M660.2 537.2L674.7 542.4M664.7 547.6L674.7 542.4M664.7 547.6L669.3 554.9M674.7 542.4L669.3 554.9M669.3 554.9L679.6 552.0M599.9 399.7L609.5 396.6M599.9 399.7L604.7 409.9M599.9 399.7L614.5 405.5M604.7 409.9L614.5 405.5M604.7 409.9L609.4 418.1M614.5 405.5L609.4 418.1M609.4 418.1L618.0 413.8M609.4 418.1L613.6 427.1M609.4 418.1L622.4 423.0M613.6 427.1L622.4 423.0M613.6 427.1L618.3 434.9M622.4 423.0L618.3 434.9M618.3 434.9L626.3 431.1M618.3 434.9L622.8 445.5M618.3 434.9L632.5 439.4M622.8 445.5L632.5 439.4M622.8 445.5L627.3 453.3M632.5 439.4L627.3 453.3M627.3 453.3L635.7 449.2M627.3 453.3L632.5 462.5M627.3 453.3L641.0 458.4M632.5 462.5L641.0 458.4M632.5 462.5L636.3 471.5M641.0 458.4L636.3 471.5M636.3 471.5L646.4 467.5M636.3 471.5L642.4 481.3M636.3 471.5L650.9 475.8M642.4 481.3L650.9 475.8M642.4 481.3L646.1 489.0M650.9 475.8L646.1 489.0M646.1 489.0L655.2 484.6M646.1 489.0L651.4 498.3M646.1 489.0L659.7 494.2M651.4 498.3L659.7 494.2M651.4 498.3L655.6 506.8M659.7 494.2L655.6 506.8M655.6 506.8L664.7 501.6M655.6 506.8L659.1 514.9M655.6 506.8L668.4 512.8M659.1 514.9L668.4 512.8M659.1 514.9L664.5 523.9M668.4 512.8L664.5 523.9M664.5 523.9L672.4 520.5M664.5 523.9L669.7 534.0M664.5 523.9L677.6 529.2M669.7 534.0L677.6 529.2M669.7 534.0L674.7 542.4M677.6 529.2L674.7 542.4M674.7 542.4L682.6 538.3M674.7 542.4L679.6 552.0M674.7 542.4L686.9 547.7M679.6 552.0L686.9 547.7M609.5 396.6L618.0 393.1M609.5 396.6L614.5 405.5M618.0 393.1L614.5 405.5M614.5 405.5L623.4 401.9M614.5 405.5L618.0 413.8M614.5 405.5L627.4 409.6M618.0 413.8L627.4 409.6M618.0 413.8L622.4 423.0M627.4 409.6L622.4 423.0M622.4 423.0L632.5 418.5M622.4 423.0L626.3 431.1M622.4 423.0L636.0 427.7M626.3 431.1L636.0 427.7M626.3 431.1L632.5 439.4M636.0 427.7L632.5 439.4M632.5 439.4L640.4 436.4M632.5 439.4L635.7 449.2M632.5 439.4L645.2 445.5M635.7 449.2L645.2 445.5M635.7 449.2L641.0 458.4M645.2 445.5L641.0 458.4M641.0 458.4L651.0 454.0M641.0 458.4L646.4 467.5M641.0 458.4L655.3 463.8M646.4 467.5L655.3 463.8M646.4 467.5L650.9 475.8M655.3 463.8L650.9 475.8M650.9 475.8L659.2 472.0M650.9 475.8L655.2 484.6M650.9 475.8L664.1 482.0M655.2 484.6L664.1 482.0M655.2 484.6L659.7 494.2M664.1 482.0L659.7 494.2M659.7 494.2L668.6 489.9M659.7 494.2L664.7 501.6M659.7 494.2L672.7 498.1M664.7 501.6L672.7 498.1M664.7 501.6L668.4 512.8M672.7 498.1L668.4 512.8M668.4 512.8L678.5 507.4M668.4 512.8L672.4 520.5M668.4 512.8L683.2 516.4M672.4 520.5L683.2 516.4M672.4 520.5L677.6 529.2M683.2 516.4L677.6 529.2M677.6 529.2L689.0 525.1M677.6 529.2L682.6 538.3M677.6 529.2L692.6 533.7M682.6 538.3L692.6 533.7M682.6 538.3L686.9 547.7M692.6 533.7L686.9 547.7M686.9 547.7L696.4 542.1M618.0 393.1L627.6 387.8M618.0 393.1L623.4 401.9M618.0 393.1L632.9 397.7M623.4 401.9L632.9 397.7M623.4 401.9L627.4 409.6M632.9 397.7L627.4 409.6M627.4 409.6L636.7 406.2M627.4 409.6L632.5 418.5M627.4 409.6L641.6 415.0M632.5 418.5L641.6 415.0M632.5 418.5L636.0 427.7M641.6 415.0L636.0 427.7M636.0 427.7L646.6 424.2M636.0 427.7L640.4 436.4M636.0 427.7L650.2 432.8M640.4 436.4L650.2 432.8M640.4 436.4L645.2 445.5M650.2 432.8L645.2 445.5M645.2 445.5L655.0 442.1M645.2 445.5L651.0 454.0M645.2 445.5L659.4 450.3M651.0 454.0L659.4 450.3M651.0 454.0L655.3 463.8M659.4 450.3L655.3 463.8M655.3 463.8L663.4 459.5M655.3 463.8L659.2 472.0M655.3 463.8L669.0 467.6M659.2 472.0L669.0 467.6M659.2 472.0L664.1 482.0M669.0 467.6L664.1 482.0M664.1 482.0L674.5 476.9M664.1 482.0L668.6 489.9M664.1 482.0L677.4 486.4M668.6 489.9L677.4 486.4M668.6 489.9L672.7 498.1M677.4 486.4L672.7 498.1M672.7 498.1L682.6 492.7M672.7 498.1L678.5 507.4M672.7 498.1L687.5 503.5M678.5 507.4L687.5 503.5M678.5 507.4L683.2 516.4M687.5 503.5L683.2 516.4M683.2 516.4L692.0 512.2M683.2 516.4L689.0 525.1M683.2 516.4L696.1 521.3M689.0 525.1L696.1 521.3M689.0 525.1L692.6 533.7M696.1 521.3L692.6 533.7M692.6 533.7L700.2 530.0M692.6 533.7L696.4 542.1M692.6 533.7L706.4 539.5M696.4 542.1L706.4 539.5M627.6 387.8L636.4 383.6M627.6 387.8L632.9 397.7M636.4 383.6L632.9 397.7M632.9 397.7L641.4 392.4M632.9 397.7L636.7 406.2M632.9 397.7L645.1 401.1M636.7 406.2L645.1 401.1M636.7 406.2L641.6 415.0M645.1 401.1L641.6 415.0M641.6 415.0L649.7 410.5M641.6 415.0L646.6 424.2M641.6 415.0L655.9 419.7M646.6 424.2L655.9 419.7M646.6 424.2L650.2 432.8M655.9 419.7L650.2 432.8M650.2 432.8L660.1 428.4M650.2 432.8L655.0 442.1M650.2 432.8L664.6 436.6M655.0 442.1L664.6 436.6M655.0 442.1L659.4 450.3M664.6 436.6L659.4 450.3M659.4 450.3L668.0 447.3M659.4 450.3L663.4 459.5M659.4 450.3L673.5 454.1M663.4 459.5L673.5 454.1M663.4 459.5L669.0 467.6M673.5 454.1L669.0 467.6M669.0 467.6L678.3 463.8M669.0 467.6L674.5 476.9M669.0 467.6L682.4 473.2M674.5 476.9L682.4 473.2M674.5 476.9L677.4 486.4M682.4 473.2L677.4 486.4M677.4 486.4L686.4 482.4M677.4 486.4L682.6 492.7M677.4 486.4L692.0 490.2M682.6 492.7L692.0 490.2M682.6 492.7L687.5 503.5M692.0 490.2L687.5 503.5M687.5 503.5L695.6 500.4M687.5 503.5L692.0 512.2M687.5 503.5L700.8 507.4M692.0 512.2L700.8 507.4M692.0 512.2L696.1 521.3M700.8 507.4L696.1 521.3M696.1 521.3L705.6 517.4M696.1 521.3L700.2 530.0M696.1 521.3L710.7 526.9M700.2 530.0L710.7 526.9M700.2 530.0L706.4 539.5M710.7 526.9L706.4 539.5M706.4 539.5L715.3 534.8M636.4 383.6L645.0 380.9M636.4 383.6L641.4 392.4M636.4 383.6L649.4 389.0M641.4 392.4L649.4 389.0M641.4 392.4L645.1 401.1M649.4 389.0L645.1 401.1M645.1 401.1L655.6 397.9M645.1 401.1L649.7 410.5M645.1 401.1L659.9 406.1M649.7 410.5L659.9 406.1M649.7 410.5L655.9 419.7M659.9 406.1L655.9 419.7M655.9 419.7L663.1 414.7M655.9 419.7L660.1 428.4M655.9 419.7L668.9 423.9M660.1 428.4L668.9 423.9M660.1 428.4L664.6 436.6M668.9 423.9L664.6 436.6M664.6 436.6L674.0 433.0M664.6 436.6L668.0 447.3M664.6 436.6L678.6 442.3M668.0 447.3L678.6 442.3M668.0 447.3L673.5 454.1M678.6 442.3L673.5 454.1M673.5 454.1L681.8 450.9M673.5 454.1L678.3 463.8M673.5 454.1L687.3 460.1M678.3 463.8L687.3 460.1M678.3 463.8L682.4 473.2M687.3 460.1L682.4 473.2M682.4 473.2L691.6 469.3M682.4 473.2L686.4 482.4M682.4 473.2L696.9 478.1M686.4 482.4L696.9 478.1M686.4 482.4L692.0 490.2M696.9 478.1L692.0 490.2M692.0 490.2L700.5 485.1M692.0 490.2L695.6 500.4M692.0 490.2L705.9 494.8M695.6 500.4L705.9 494.8M695.6 500.4L700.8 507.4M705.9 494.8L700.8 507.4M700.8 507.4L709.9 504.0M700.8 507.4L705.6 517.4M700.8 507.4L715.0 511.9M705.6 517.4L715.0 511.9M705.6 517.4L710.7 526.9M715.0 511.9L710.7 526.9M710.7 526.9L719.4 522.7M710.7 526.9L715.3 534.8M710.7 526.9L723.2 530.6M715.3 534.8L723.2 530.6M645.0 380.9L653.6 375.9M645.0 380.9L649.4 389.0M653.6 375.9L649.4 389.0M649.4 389.0L658.5 384.8M649.4 389.0L655.6 397.9M649.4 389.0L663.3 392.9M655.6 397.9L663.3 392.9M655.6 397.9L659.9 406.1M663.3 392.9L659.9 406.1M659.9 406.1L668.4 403.1M659.9 406.1L663.1 414.7M659.9 406.1L672.7 411.4M663.1 414.7L672.7 411.4M663.1 414.7L668.9 423.9M672.7 411.4L668.9 423.9M668.9 423.9L678.1 420.5M668.9 423.9L674.0 433.0M668.9 423.9L681.5 428.7M674.0 433.0L681.5 428.7M674.0 433.0L678.6 442.3M681.5 428.7L678.6 442.3M678.6 442.3L687.1 438.0M678.6 442.3L681.8 450.9M678.6 442.3L692.6 447.2M681.8 450.9L692.6 447.2M681.8 450.9L687.3 460.1M692.6 447.2L687.3 460.1M687.3 460.1L695.6 456.1M687.3 460.1L691.6 469.3M687.3 460.1L701.5 464.9M691.6 469.3L701.5 464.9M691.6 469.3L696.9 478.1M701.5 464.9L696.9 478.1M696.9 478.1L705.7 472.6M696.9 478.1L700.5 485.1M696.9 478.1L710.0 482.6M700.5 485.1L710.0 482.6M700.5 485.1L705.9 494.8M710.0 482.6L705.9 494.8M705.9 494.8L714.4 491.0M705.9 494.8L709.9 504.0M705.9 494.8L719.6 499.6M709.9 504.0L719.6 499.6M709.9 504.0L715.0 511.9M719.6 499.6L715.0 511.9M715.0 511.9L723.4 508.8M715.0 511.9L719.4 522.7M715.0 511.9L728.5 518.3M719.4 522.7L728.5 518.3M719.4 522.7L723.2 530.6M728.5 518.3L723.2 530.6M723.2 530.6L733.1 525.9M653.6 375.9L663.9 371.9M653.6 375.9L658.5 384.8M653.6 375.9L668.1 379.8M658.5 384.8L668.1 379.8M658.5 384.8L663.3 392.9M668.1 379.8L663.3 392.9M663.3 392.9L672.6 390.3M663.3 392.9L668.4 403.1M663.3 392.9L677.6 399.0M668.4 403.1L677.6 399.0M668.4 403.1L672.7 411.4M677.6 399.0L672.7 411.4M672.7 411.4L682.2 407.2M672.7 411.4L678.1 420.5M672.7 411.4L686.2 416.3M678.1 420.5L686.2 416.3M678.1 420.5L681.5 428.7M686.2 416.3L681.5 428.7M681.5 428.7L690.9 424.5M681.5 428.7L687.1 438.0M681.5 428.7L696.6 433.2M687.1 438.0L696.6 433.2M687.1 438.0L692.6 447.2M696.6 433.2L692.6 447.2M692.6 447.2L702.0 442.7M692.6 447.2L695.6 456.1M692.6 447.2L704.9 452.4M695.6 456.1L704.9 452.4M695.6 456.1L701.5 464.9M704.9 452.4L701.5 464.9M701.5 464.9L709.3 460.5M701.5 464.9L705.7 472.6M701.5 464.9L714.6 469.9M705.7 472.6L714.6 469.9M705.7 472.6L710.0 482.6M714.6 469.9L710.0 482.6M710.0 482.6L720.2 478.4M710.0 482.6L714.4 491.0M710.0 482.6L723.0 486.3M714.4 491.0L723.0 486.3M714.4 491.0L719.6 499.6M723.0 486.3L719.6 499.6M719.6 499.6L728.1 496.4M719.6 499.6L723.4 508.8M719.6 499.6L733.1 505.0M723.4 508.8L733.1 505.0M723.4 508.8L728.5 518.3M733.1 505.0L728.5 518.3M728.5 518.3L737.5 514.5M728.5 518.3L733.1 525.9M728.5 518.3L741.6 523.7M733.1 525.9L741.6 523.7M663.9 371.9L672.7 367.3M663.9 371.9L668.1 379.8M672.7 367.3L668.1 379.8M668.1 379.8L677.1 376.0M668.1 379.8L672.6 390.3M668.1 379.8L682.4 385.4M672.6 390.3L682.4 385.4M672.6 390.3L677.6 399.0M682.4 385.4L677.6 399.0M677.6 399.0L686.9 393.8M677.6 399.0L682.2 407.2M677.6 399.0L690.5 402.6M682.2 407.2L690.5 402.6M682.2 407.2L686.2 416.3M690.5 402.6L686.2 416.3M686.2 416.3L696.0 411.3M686.2 416.3L690.9 424.5M686.2 416.3L700.8 420.3M690.9 424.5L700.8 420.3M690.9 424.5L696.6 433.2M700.8 420.3L696.6 433.2M696.6 433.2L704.8 429.9M696.6 433.2L702.0 442.7M696.6 433.2L709.0 437.3M702.0 442.7L709.0 437.3M702.0 442.7L704.9 452.4M709.0 437.3L704.9 452.4M704.9 452.4L715.1 447.3M704.9 452.4L709.3 460.5M704.9 452.4L718.6 457.3M709.3 460.5L718.6 457.3M709.3 460.5L714.6 469.9M718.6 457.3L714.6 469.9M714.6 469.9L724.9 465.2M714.6 469.9L720.2 478.4M714.6 469.9L728.4 475.6M720.2 478.4L728.4 475.6M720.2 478.4L723.0 486.3M728.4 475.6L723.0 486.3M723.0 486.3L732.5 483.6M723.0 486.3L728.1 496.4M723.0 486.3L738.1 491.5M728.1 496.4L738.1 491.5M728.1 496.4L733.1 505.0M738.1 491.5L733.1 505.0M733.1 505.0L741.6 500.2M733.1 505.0L737.5 514.5M733.1 505.0L746.9 509.7M737.5 514.5L746.9 509.7M737.5 514.5L741.6 523.7M746.9 509.7L741.6 523.7M741.6 523.7L753.0 517.8M672.7 367.3L681.0 363.3M672.7 367.3L677.1 376.0M672.7 367.3L686.5 372.8M677.1 376.0L686.5 372.8M677.1 376.0L682.4 385.4M686.5 372.8L682.4 385.4M682.4 385.4L691.4 381.7M682.4 385.4L686.9 393.8M682.4 385.4L695.7 390.5M686.9 393.8L695.7 390.5M686.9 393.8L690.5 402.6M695.7 390.5L690.5 402.6M690.5 402.6L700.4 399.6M690.5 402.6L696.0 411.3M690.5 402.6L705.3 407.4M696.0 411.3L705.3 407.4M696.0 411.3L700.8 420.3M705.3 407.4L700.8 420.3M700.8 420.3L709.6 416.3M700.8 420.3L704.8 429.9M700.8 420.3L714.2 426.0M704.8 429.9L714.2 426.0M704.8 429.9L709.0 437.3M714.2 426.0L709.0 437.3M709.0 437.3L718.9 434.4M709.0 437.3L715.1 447.3M709.0 437.3L723.1 444.3M715.1 447.3L723.1 444.3M715.1 447.3L718.6 457.3M723.1 444.3L718.6 457.3M718.6 457.3L728.1 451.7M718.6 457.3L724.9 465.2M718.6 457.3L732.5 461.7M724.9 465.2L732.5 461.7M724.9 465.2L728.4 475.6M732.5 461.7L728.4 475.6M728.4 475.6L738.6 470.7M728.4 475.6L732.5 483.6M728.4 475.6L741.8 479.4M732.5 483.6L741.8 479.4M732.5 483.6L738.1 491.5M741.8 479.4L738.1 491.5M738.1 491.5L745.7 488.2M738.1 491.5L741.6 500.2M738.1 491.5L751.2 496.8M741.6 500.2L751.2 496.8M741.6 500.2L746.9 509.7M751.2 496.8L746.9 509.7M746.9 509.7L755.2 505.7M746.9 509.7L753.0 517.8M746.9 509.7L759.8 513.4M753.0 517.8L759.8 513.4M681.0 363.3L690.9 359.4M681.0 363.3L686.5 372.8M690.9 359.4L686.5 372.8M686.5 372.8L696.3 368.6M686.5 372.8L691.4 381.7M686.5 372.8L699.7 376.9M691.4 381.7L699.7 376.9M691.4 381.7L695.7 390.5M699.7 376.9L695.7 390.5M695.7 390.5L705.6 386.9M695.7 390.5L700.4 399.6M695.7 390.5L709.2 395.5M700.4 399.6L709.2 395.5M700.4 399.6L705.3 407.4M709.2 395.5L705.3 407.4M705.3 407.4L714.1 404.4M705.3 407.4L709.6 416.3M705.3 407.4L718.1 413.1M709.6 416.3L718.1 413.1M709.6 416.3L714.2 426.0M718.1 413.1L714.2 426.0M714.2 426.0L723.0 420.8M714.2 426.0L718.9 434.4M714.2 426.0L728.4 430.7M718.9 434.4L728.4 430.7M718.9 434.4L723.1 444.3M728.4 430.7L723.1 444.3M723.1 444.3L731.7 437.9M723.1 444.3L728.1 451.7M723.1 444.3L737.2 448.4M728.1 451.7L737.2 448.4M728.1 451.7L732.5 461.7M737.2 448.4L732.5 461.7M732.5 461.7L741.6 457.1M732.5 461.7L738.6 470.7M732.5 461.7L746.3 465.5M738.6 470.7L746.3 465.5M738.6 470.7L741.8 479.4M746.3 465.5L741.8 479.4M741.8 479.4L751.4 475.5M741.8 479.4L745.7 488.2M741.8 479.4L756.0 483.4M745.7 488.2L756.0 483.4M745.7 488.2L751.2 496.8M756.0 483.4L751.2 496.8M751.2 496.8L760.0 492.6M751.2 496.8L755.2 505.7M751.2 496.8L763.7 501.4M755.2 505.7L763.7 501.4M755.2 505.7L759.8 513.4M763.7 501.4L759.8 513.4M759.8 513.4L769.6 510.2M690.9 359.4L699.9 355.3M690.9 359.4L696.3 368.6M690.9 359.4L704.4 363.3M696.3 368.6L704.4 363.3M696.3 368.6L699.7 376.9M704.4 363.3L699.7 376.9M699.7 376.9L709.7 372.9M699.7 376.9L705.6 386.9M699.7 376.9L713.8 382.2M705.6 386.9L713.8 382.2M705.6 386.9L709.2 395.5M713.8 382.2L709.2 395.5M709.2 395.5L719.6 390.8M709.2 395.5L714.1 404.4M709.2 395.5L723.5 400.8M714.1 404.4L723.5 400.8M714.1 404.4L718.1 413.1M723.5 400.8L718.1 413.1M718.1 413.1L727.7 409.3M718.1 413.1L723.0 420.8M718.1 413.1L732.5 418.0M723.0 420.8L732.5 418.0M723.0 420.8L728.4 430.7M732.5 418.0L728.4 430.7M728.4 430.7L737.2 426.9M728.4 430.7L731.7 437.9M728.4 430.7L741.3 434.9M731.7 437.9L741.3 434.9M731.7 437.9L737.2 448.4M741.3 434.9L737.2 448.4M737.2 448.4L746.0 443.8M737.2 448.4L741.6 457.1M737.2 448.4L751.7 453.2M741.6 457.1L751.7 453.2M741.6 457.1L746.3 465.5M751.7 453.2L746.3 465.5M746.3 465.5L756.0 461.6M746.3 465.5L751.4 475.5M746.3 465.5L760.3 470.9M751.4 475.5L760.3 470.9M751.4 475.5L756.0 483.4M760.3 470.9L756.0 483.4M756.0 483.4L765.1 479.2M756.0 483.4L760.0 492.6M756.0 483.4L769.3 487.7M760.0 492.6L769.3 487.7M760.0 492.6L763.7 501.4M769.3 487.7L763.7 501.4M763.7 501.4L774.6 497.9M763.7 501.4L769.6 510.2M763.7 501.4L779.9 504.3M769.6 510.2L779.9 504.3M699.9 355.3L708.7 351.4M699.9 355.3L704.4 363.3M708.7 351.4L704.4 363.3M704.4 363.3L713.0 359.3M704.4 363.3L709.7 372.9M704.4 363.3L718.8 368.0M709.7 372.9L718.8 368.0M709.7 372.9L713.8 382.2M718.8 368.0L713.8 382.2M713.8 382.2L722.4 378.5M713.8 382.2L719.6 390.8M713.8 382.2L728.0 385.9M719.6 390.8L728.0 385.9M719.6 390.8L723.5 400.8M728.0 385.9L723.5 400.8M723.5 400.8L733.2 395.6M723.5 400.8L727.7 409.3M723.5 400.8L736.7 404.5M727.7 409.3L736.7 404.5M727.7 409.3L732.5 418.0M736.7 404.5L732.5 418.0M732.5 418.0L741.5 414.0M732.5 418.0L737.2 426.9M732.5 418.0L746.6 421.6M737.2 426.9L746.6 421.6M737.2 426.9L741.3 434.9M746.6 421.6L741.3 434.9M741.3 434.9L750.5 431.5M741.3 434.9L746.0 443.8M741.3 434.9L755.1 439.3M746.0 443.8L755.1 439.3M746.0 443.8L751.7 453.2M755.1 439.3L751.7 453.2M751.7 453.2L758.7 449.3M751.7 453.2L756.0 461.6M751.7 453.2L764.7 457.5M756.0 461.6L764.7 457.5M756.0 461.6L760.3 470.9M764.7 457.5L760.3 470.9M760.3 470.9L768.8 466.2M760.3 470.9L765.1 479.2M760.3 470.9L774.0 474.7M765.1 479.2L774.0 474.7M765.1 479.2L769.3 487.7M774.0 474.7L769.3 487.7M769.3 487.7L778.7 485.3M769.3 487.7L774.6 497.9M769.3 487.7L782.9 493.1M774.6 497.9L782.9 493.1M774.6 497.9L779.9 504.3M782.9 493.1L779.9 504.3M779.9 504.3L788.8 502.1M708.7 351.4L718.0 347.9M708.7 351.4L713.0 359.3M708.7 351.4L723.0 355.9M713.0 359.3L723.0 355.9M713.0 359.3L718.8 368.0M723.0 355.9L718.8 368.0M718.8 368.0L726.2 364.8M718.8 368.0L722.4 378.5M718.8 368.0L733.7 374.1M722.4 378.5L733.7 374.1M722.4 378.5L728.0 385.9M733.7 374.1L728.0 385.9M728.0 385.9L737.9 382.7M728.0 385.9L733.2 395.6M728.0 385.9L740.6 391.6M733.2 395.6L740.6 391.6M733.2 395.6L736.7 404.5M740.6 391.6L736.7 404.5M736.7 404.5L747.2 400.5M736.7 404.5L741.5 414.0M736.7 404.5L750.5 409.1M741.5 414.0L750.5 409.1M741.5 414.0L746.6 421.6M750.5 409.1L746.6 421.6M746.6 421.6L754.6 417.9M746.6 421.6L750.5 431.5M746.6 421.6L760.1 427.5M750.5 431.5L760.1 427.5M750.5 431.5L755.1 439.3M760.1 427.5L755.1 439.3M755.1 439.3L765.1 435.2M755.1 439.3L758.7 449.3M755.1 439.3L768.1 444.5M758.7 449.3L768.1 444.5M758.7 449.3L764.7 457.5M768.1 444.5L764.7 457.5M764.7 457.5L773.4 454.1M764.7 457.5L768.8 466.2M764.7 457.5L777.9 462.8M768.8 466.2L777.9 462.8M768.8 466.2L774.0 474.7M777.9 462.8L774.0 474.7M774.0 474.7L782.9 472.0M774.0 474.7L778.7 485.3M774.0 474.7L787.8 479.0M778.7 485.3L787.8 479.0M778.7 485.3L782.9 493.1M787.8 479.0L782.9 493.1M782.9 493.1L791.0 489.2M782.9 493.1L788.8 502.1M782.9 493.1L796.4 498.5M788.8 502.1L796.4 498.5M718.0 347.9L723.0 355.9M723.0 355.9L726.2 364.8M726.2 364.8L733.7 374.1M733.7 374.1L737.9 382.7M737.9 382.7L740.6 391.6M740.6 391.6L747.2 400.5M747.2 400.5L750.5 409.1M750.5 409.1L754.6 417.9M754.6 417.9L760.1 427.5M760.1 427.5L765.1 435.2M765.1 435.2L768.1 444.5M768.1 444.5L773.4 454.1M773.4 454.1L777.9 462.8M777.9 462.8L782.9 472.0M782.9 472.0L787.8 479.0M787.8 479.0L791.0 489.2M791.0 489.2L796.4 498.5M359 251L337.3 188.5M359 251L347.4 184.7M359 251L357.4 180.9M359 251L367.5 177.1M359 251L377.6 173.3M359 251L387.7 169.4M359 251L397.8 165.6M359 251L407.9 161.8M359 251L418.0 158.0M359 251L428.1 154.1M359 251L438.2 150.3M359 251L448.3 146.5M394.0 167.1L466.0 240.0M404.8 163.0L463.0 236.0M415.7 158.8L460.0 232.0M426.6 154.7L457.0 228.0M437.4 150.6L454.0 224.0M448.3 146.5L451.0 220.0M341 190L359 251M429 167L466 240M448 146.5L462 228M448 147L359 251M429 167L380 246M359 251L470 238M359 251L451.1 160.0M400.0 246.0L451.1 160.0M359 251L454.3 173.0M410.0 244.5L454.3 173.0M359 251L457.4 186.0M420.0 243.0L457.4 186.0M359 251L460.6 199.0M430.0 241.5L460.6 199.0M359 251L463.7 212.0M440.0 240.0L463.7 212.0M359 251L466.9 225.0M450.0 238.5L466.9 225.0" stroke="#000" stroke-width="0.65" stroke-opacity="0.8" fill="none"/>
<path d="M587.4 427.5L583.6 430.9L588.6 430.5ZM587.4 427.5L593.5 431.0L588.6 430.5ZM587.9 428.8L586.2 434.7L589.2 431.7ZM587.9 428.8L591.8 430.9L589.2 431.7ZM588.4 430.0L575.7 440.6L589.7 432.9ZM588.4 430.0L593.4 429.5L589.7 432.9ZM589.0 431.2L577.4 433.2L590.2 434.2ZM589.0 431.2L592.0 429.9L590.2 434.2ZM589.5 432.5L578.9 439.0L590.7 435.4ZM589.5 432.5L596.2 430.8L590.7 435.4ZM590.0 433.7L574.0 434.0L591.3 436.7ZM590.0 433.7L595.9 433.1L591.3 436.7ZM590.5 435.0L584.4 440.5L591.8 437.9ZM590.5 435.0L593.8 433.2L591.8 437.9ZM591.1 436.2L576.9 434.8L592.3 439.1ZM591.1 436.2L596.9 437.4L592.3 439.1ZM591.6 437.4L590.1 442.5L592.8 440.4ZM591.6 437.4L597.2 439.7L592.8 440.4ZM592.1 438.7L580.4 439.2L593.4 441.6ZM592.1 438.7L600.0 440.5L593.4 441.6ZM592.6 439.9L589.8 441.1L593.9 442.8ZM592.6 439.9L597.6 439.8L593.9 442.8ZM593.2 441.1L582.0 452.9L594.4 444.1ZM593.2 441.1L598.1 444.3L594.4 444.1ZM593.7 442.4L592.4 448.7L594.9 445.3ZM593.7 442.4L598.3 440.5L594.9 445.3ZM594.2 443.6L591.3 443.8L595.5 446.6ZM594.2 443.6L600.9 441.4L595.5 446.6ZM594.7 444.8L588.1 447.1L596.0 447.8ZM594.7 444.8L598.8 446.7L596.0 447.8ZM595.3 446.1L593.9 450.3L596.5 449.0ZM595.3 446.1L601.0 448.6L596.5 449.0ZM595.8 447.3L583.2 447.7L597.0 450.3ZM595.8 447.3L599.2 447.0L597.0 450.3ZM596.3 448.6L582.4 444.7L597.6 451.5ZM596.3 448.6L603.8 450.7L597.6 451.5ZM596.8 449.8L593.5 449.7L598.1 452.7ZM596.8 449.8L600.6 448.2L598.1 452.7ZM597.4 451.0L592.4 460.6L598.6 454.0ZM597.4 451.0L602.0 452.1L598.6 454.0ZM597.9 452.3L595.9 459.8L599.1 455.2ZM597.9 452.3L605.9 452.6L599.1 455.2ZM598.4 453.5L590.0 455.9L599.7 456.5ZM598.4 453.5L605.3 457.1L599.7 456.5ZM598.9 454.7L595.7 457.2L600.2 457.7ZM598.9 454.7L602.0 452.8L600.2 457.7ZM599.5 456.0L588.2 463.5L600.7 458.9ZM599.5 456.0L604.8 453.4L600.7 458.9ZM600.0 457.2L594.1 471.0L601.2 460.2ZM600.0 457.2L603.7 456.6L601.2 460.2ZM600.5 458.5L596.4 461.5L601.8 461.4ZM600.5 458.5L604.6 454.1L601.8 461.4ZM601.0 459.7L588.9 456.6L602.3 462.6ZM601.0 459.7L606.3 461.8L602.3 462.6ZM601.6 460.9L585.5 459.6L602.8 463.9ZM601.6 460.9L606.3 461.7L602.8 463.9ZM602.1 462.2L600.6 466.9L603.3 465.1ZM602.1 462.2L608.7 464.5L603.3 465.1ZM602.6 463.4L593.7 462.2L603.9 466.4ZM602.6 463.4L609.2 465.0L603.9 466.4ZM603.1 464.6L600.3 465.4L604.4 467.6ZM603.1 464.6L608.4 462.8L604.4 467.6ZM603.7 465.9L598.2 471.8L604.9 468.8ZM603.7 465.9L608.9 468.2L604.9 468.8ZM604.2 467.1L597.6 470.3L605.4 470.1ZM604.2 467.1L612.0 470.2L605.4 470.1ZM604.7 468.4L601.7 471.8L606.0 471.3ZM604.7 468.4L609.1 463.2L606.0 471.3ZM605.2 469.6L593.7 467.4L606.5 472.5ZM605.2 469.6L611.1 466.7L606.5 472.5ZM605.8 470.8L601.7 474.0L607.0 473.8ZM605.8 470.8L608.4 469.8L607.0 473.8ZM606.3 472.1L598.7 483.6L607.5 475.0ZM606.3 472.1L613.6 473.3L607.5 475.0ZM606.8 473.3L593.5 474.8L608.1 476.3ZM606.8 473.3L611.0 474.0L608.1 476.3ZM607.3 474.5L598.1 476.6L608.6 477.5ZM607.3 474.5L613.0 472.9L608.6 477.5ZM607.9 475.8L603.3 480.8L609.1 478.7ZM607.9 475.8L611.9 473.9L609.1 478.7ZM608.4 477.0L604.5 483.9L609.6 480.0ZM608.4 477.0L613.4 476.2L609.6 480.0ZM608.9 478.3L598.3 484.9L610.2 481.2ZM608.9 478.3L611.2 475.8L610.2 481.2ZM609.4 479.5L605.8 481.5L610.7 482.4ZM609.4 479.5L615.4 482.9L610.7 482.4ZM610.0 480.7L607.3 486.2L611.2 483.7ZM610.0 480.7L616.1 478.3L611.2 483.7ZM610.5 482.0L600.4 494.7L611.7 484.9ZM610.5 482.0L614.7 480.8L611.7 484.9ZM611.0 483.2L606.3 490.2L612.3 486.2ZM611.0 483.2L616.4 485.4L612.3 486.2ZM611.5 484.4L600.6 495.8L612.8 487.4ZM611.5 484.4L617.9 482.8L612.8 487.4ZM612.1 485.7L599.5 491.5L613.3 488.6ZM612.1 485.7L618.2 488.8L613.3 488.6ZM612.6 486.9L606.6 496.8L613.8 489.9ZM612.6 486.9L617.3 483.4L613.8 489.9ZM613.1 488.2L608.5 498.0L614.4 491.1ZM613.1 488.2L615.6 486.7L614.4 491.1ZM613.6 489.4L606.4 488.8L614.9 492.3ZM613.6 489.4L619.9 488.9L614.9 492.3ZM614.2 490.6L609.7 499.5L615.4 493.6ZM614.2 490.6L617.8 490.1L615.4 493.6ZM614.7 491.9L607.4 497.1L615.9 494.8ZM614.7 491.9L620.6 494.3L615.9 494.8ZM615.2 493.1L610.2 503.0L616.5 496.0ZM615.2 493.1L619.4 496.0L616.5 496.0ZM615.7 494.3L612.7 497.1L617.0 497.3ZM615.7 494.3L623.6 498.3L617.0 497.3ZM616.3 495.6L601.9 504.5L617.5 498.5ZM616.3 495.6L620.3 496.1L617.5 498.5ZM616.8 496.8L613.1 502.3L618.0 499.8ZM616.8 496.8L623.0 497.9L618.0 499.8ZM617.3 498.1L614.3 505.0L618.6 501.0ZM617.3 498.1L624.3 497.6L618.6 501.0ZM617.8 499.3L612.3 506.8L619.1 502.2ZM617.8 499.3L625.9 502.8L619.1 502.2ZM618.4 500.5L613.9 502.9L619.6 503.5ZM618.4 500.5L624.2 503.5L619.6 503.5ZM663.5 413.5L660.7 414.6L664.5 416.5ZM663.5 413.5L669.6 410.3L664.5 416.5ZM663.9 414.8L658.4 413.5L664.9 417.9ZM663.9 414.8L667.9 415.5L664.9 417.9ZM664.4 416.2L660.2 424.6L665.4 419.2ZM664.4 416.2L669.1 412.0L665.4 419.2ZM664.8 417.5L656.8 420.5L665.8 420.6ZM664.8 417.5L676.7 417.9L665.8 420.6ZM665.3 418.9L662.2 422.1L666.3 421.9ZM665.3 418.9L669.1 418.3L666.3 421.9ZM665.7 420.3L661.8 428.4L666.7 423.3ZM665.7 420.3L673.9 424.1L666.7 423.3ZM666.1 421.6L661.4 429.8L667.1 424.7ZM666.1 421.6L679.1 416.9L667.1 424.7ZM666.6 423.0L660.0 425.3L667.6 426.0ZM666.6 423.0L672.2 424.6L667.6 426.0ZM667.0 424.3L660.1 426.1L668.0 427.4ZM667.0 424.3L677.8 422.5L668.0 427.4ZM667.5 425.7L665.2 432.2L668.5 428.7ZM667.5 425.7L672.6 425.8L668.5 428.7ZM667.9 427.0L666.3 431.9L668.9 430.1ZM667.9 427.0L676.9 428.2L668.9 430.1ZM668.4 428.4L665.2 431.7L669.3 431.4ZM668.4 428.4L676.1 432.0L669.3 431.4ZM668.8 429.7L666.1 431.7L669.8 432.8ZM668.8 429.7L678.3 428.0L669.8 432.8ZM669.2 431.1L664.9 439.6L670.2 434.1ZM669.2 431.1L679.3 422.9L670.2 434.1ZM669.7 432.5L664.6 436.0L670.7 435.5ZM669.7 432.5L677.6 432.8L670.7 435.5ZM670.1 433.8L668.3 437.7L671.1 436.9ZM670.1 433.8L675.8 437.8L671.1 436.9ZM670.6 435.2L666.4 440.3L671.5 438.2ZM670.6 435.2L678.9 435.9L671.5 438.2ZM671.0 436.5L664.7 436.5L672.0 439.6ZM671.0 436.5L674.3 436.7L672.0 439.6ZM671.4 437.9L668.1 444.3L672.4 440.9ZM671.4 437.9L677.4 434.0L672.4 440.9ZM671.9 439.2L669.6 439.4L672.9 442.3ZM671.9 439.2L682.1 442.0L672.9 442.3ZM672.3 440.6L669.5 441.2L673.3 443.6ZM672.3 440.6L680.0 441.7L673.3 443.6ZM672.8 442.0L669.4 448.7L673.7 445.0ZM672.8 442.0L680.3 444.8L673.7 445.0ZM673.2 443.3L667.9 441.8L674.2 446.4ZM673.2 443.3L681.0 444.7L674.2 446.4ZM673.6 444.7L669.2 444.1L674.6 447.7ZM673.6 444.7L682.2 441.6L674.6 447.7ZM674.1 446.0L670.8 454.1L675.1 449.1ZM674.1 446.0L680.5 443.8L675.1 449.1ZM674.5 447.4L669.4 448.1L675.5 450.4ZM674.5 447.4L684.9 440.4L675.5 450.4ZM675.0 448.7L669.5 456.7L676.0 451.8ZM675.0 448.7L688.3 454.0L676.0 451.8ZM675.4 450.1L672.8 451.1L676.4 453.1ZM675.4 450.1L682.2 447.2L676.4 453.1ZM675.8 451.4L671.0 454.8L676.8 454.5ZM675.8 451.4L687.1 457.2L676.8 454.5ZM676.3 452.8L670.2 451.5L677.3 455.8ZM676.3 452.8L681.3 450.7L677.3 455.8ZM676.7 454.2L670.1 456.8L677.7 457.2ZM676.7 454.2L681.4 451.0L677.7 457.2ZM677.2 455.5L673.4 455.1L678.2 458.6ZM677.2 455.5L682.9 459.6L678.2 458.6ZM677.6 456.9L670.5 456.1L678.6 459.9ZM677.6 456.9L692.0 460.4L678.6 459.9ZM678.0 458.2L674.2 461.9L679.0 461.3ZM678.0 458.2L685.0 459.0L679.0 461.3ZM678.5 459.6L675.4 461.6L679.5 462.6ZM678.5 459.6L682.2 461.5L679.5 462.6ZM678.9 460.9L670.9 462.1L679.9 464.0ZM678.9 460.9L684.4 459.0L679.9 464.0ZM679.4 462.3L671.5 463.7L680.4 465.3ZM679.4 462.3L685.6 459.4L680.4 465.3ZM679.8 463.6L673.4 468.9L680.8 466.7ZM679.8 463.6L685.2 466.2L680.8 466.7ZM680.3 465.0L674.7 471.1L681.2 468.0ZM680.3 465.0L690.2 457.5L681.2 468.0ZM680.7 466.4L675.8 466.4L681.7 469.4ZM680.7 466.4L691.8 460.2L681.7 469.4ZM681.1 467.7L676.3 472.9L682.1 470.8ZM681.1 467.7L689.0 468.8L682.1 470.8ZM681.6 469.1L675.8 472.4L682.6 472.1ZM681.6 469.1L687.9 461.3L682.6 472.1ZM682.0 470.4L674.4 473.0L683.0 473.5ZM682.0 470.4L686.4 465.9L683.0 473.5ZM682.5 471.8L679.2 477.2L683.4 474.8ZM682.5 471.8L686.9 472.4L683.4 474.8ZM682.9 473.1L679.1 479.1L683.9 476.2ZM682.9 473.1L695.9 477.8L683.9 476.2ZM683.3 474.5L678.0 479.4L684.3 477.5ZM683.3 474.5L686.9 472.5L684.3 477.5ZM683.8 475.9L681.1 482.9L684.8 478.9ZM683.8 475.9L689.1 475.6L684.8 478.9ZM684.2 477.2L680.5 481.3L685.2 480.3ZM684.2 477.2L694.0 475.5L685.2 480.3ZM684.7 478.6L680.4 481.7L685.6 481.6ZM684.7 478.6L689.4 474.3L685.6 481.6ZM685.1 479.9L680.0 483.0L686.1 483.0ZM685.1 479.9L691.5 481.9L686.1 483.0ZM685.5 481.3L677.2 482.9L686.5 484.3ZM685.5 481.3L697.5 477.0L686.5 484.3ZM686.0 482.6L677.7 482.2L687.0 485.7ZM686.0 482.6L696.5 474.9L687.0 485.7ZM686.4 484.0L681.8 489.4L687.4 487.0ZM686.4 484.0L697.8 482.9L687.4 487.0ZM686.9 485.3L680.5 486.0L687.9 488.4ZM686.9 485.3L690.0 485.0L687.9 488.4ZM687.3 486.7L684.4 493.1L688.3 489.7ZM687.3 486.7L691.9 483.8L688.3 489.7ZM687.7 488.1L683.0 496.9L688.7 491.1ZM687.7 488.1L701.8 492.8L688.7 491.1ZM688.2 489.4L684.7 490.5L689.2 492.5ZM688.2 489.4L695.4 493.0L689.2 492.5ZM688.6 490.8L685.6 490.6L689.6 493.8ZM688.6 490.8L702.6 491.0L689.6 493.8ZM689.1 492.1L682.9 495.3L690.1 495.2ZM689.1 492.1L697.5 485.4L690.1 495.2ZM689.5 493.5L685.0 496.9L690.5 496.5ZM689.5 493.5L694.1 495.1L690.5 496.5Z" fill="#061208" fill-opacity="0.75"/><path d="M588.0 429.0L619.0 502.0M664.0 415.0L690.0 495.0" stroke="#061208" stroke-width="2.6" stroke-opacity="0.85"/><path d="M361.0 300.0L360.0 302.5M361.0 300.0L358.3 298.7M360.7 303.8L359.3 306.4M360.7 303.8L365.2 304.1M360.5 307.5L362.4 308.2M360.5 307.5L357.4 304.1M360.2 311.3L364.3 310.2M360.2 311.3L362.5 310.0M360.0 315.1L357.2 314.8M360.0 315.1L361.1 311.2M359.7 318.8L357.0 319.2M359.7 318.8L359.2 320.9M359.4 322.6L363.5 319.8M359.4 322.6L360.3 319.0M359.2 326.4L356.9 330.5M359.2 326.4L354.5 328.0M358.9 330.1L356.5 329.7M358.9 330.1L357.6 326.6M358.7 333.9L362.5 334.9M358.7 333.9L362.1 332.1M358.4 337.7L362.4 337.0M358.4 337.7L359.7 334.4M358.1 341.4L360.0 340.0M358.1 341.4L360.5 339.1M357.9 345.2L355.8 343.1M357.9 345.2L356.8 340.8M357.6 349.0L361.4 348.3M357.6 349.0L359.4 350.3M357.3 352.8L360.9 351.7M357.3 352.8L355.9 356.5M357.1 356.5L354.9 357.3M357.1 356.5L353.7 357.2M356.8 360.3L356.3 364.1M356.8 360.3L355.7 364.8M356.6 364.1L355.2 365.9M356.6 364.1L359.2 368.1M356.3 367.8L358.8 366.6M356.3 367.8L358.0 365.3M356.0 371.6L357.7 370.2M356.0 371.6L357.2 374.1M355.8 375.4L360.0 375.1M355.8 375.4L355.8 370.5M355.5 379.1L360.2 378.7M355.5 379.1L357.8 382.0M355.3 382.9L351.7 385.7M355.3 382.9L352.3 382.9M355.0 386.7L357.1 386.9M355.0 386.7L352.7 385.1M354.7 390.4L358.8 389.3M354.7 390.4L358.9 388.8M354.5 394.2L354.1 390.3M354.5 394.2L357.8 396.0M354.2 398.0L354.4 395.8M354.2 398.0L354.9 395.4M354.0 401.7L357.3 401.9M354.0 401.7L350.5 403.0M353.7 405.5L353.5 407.7M353.7 405.5L352.0 407.9M353.4 409.3L355.5 412.9M353.4 409.3L350.8 407.2M353.2 413.0L356.8 416.2M353.2 413.0L354.0 415.1M352.9 416.8L354.3 419.1M352.9 416.8L353.5 419.0M352.7 420.6L350.0 420.9M352.7 420.6L350.1 423.6M352.4 424.3L354.5 425.8M352.4 424.3L353.7 426.8M352.1 428.1L354.5 425.6M352.1 428.1L353.3 432.1M351.9 431.9L353.8 432.8M351.9 431.9L349.7 434.4M351.6 435.7L355.1 437.7M351.6 435.7L350.5 433.1M351.3 439.4L347.7 439.0M351.3 439.4L354.9 442.5M351.1 443.2L348.7 442.2M351.1 443.2L354.8 442.7M350.8 447.0L346.6 444.4M350.8 447.0L349.4 442.9M350.6 450.7L348.6 449.3M350.6 450.7L348.7 453.0M350.3 454.5L352.8 454.6M350.3 454.5L349.4 450.0M350.0 458.3L349.0 462.4M350.0 458.3L351.5 461.2M349.8 462.0L351.8 458.8M349.8 462.0L353.7 460.3M349.5 465.8L348.7 463.1M349.5 465.8L347.2 465.3M349.3 469.6L347.0 469.0M349.3 469.6L347.2 472.5M349.0 473.3L348.3 470.4M349.0 473.3L346.1 475.2M348.7 477.1L348.3 479.4M348.7 477.1L353.2 476.3M348.5 480.9L350.6 478.6M348.5 480.9L349.4 485.4M348.2 484.6L347.3 482.0M348.2 484.6L351.0 483.8M348.0 488.4L347.6 485.3M348.0 488.4L348.9 492.4M347.7 492.2L345.5 496.2M347.7 492.2L349.9 492.9M347.4 495.9L345.2 493.5M347.4 495.9L349.0 493.6M347.2 499.7L348.8 497.4M347.2 499.7L347.0 501.8M346.9 503.5L344.6 504.3M346.9 503.5L344.5 505.4M346.7 507.2L342.7 505.1M346.7 507.2L343.7 509.7M346.4 511.0L342.0 511.0M346.4 511.0L350.0 508.8M346.1 514.8L342.6 516.3M346.1 514.8L348.5 513.3M345.9 518.6L347.2 514.5M345.9 518.6L343.4 519.6M345.6 522.3L345.7 527.0M345.6 522.3L341.3 521.3M345.3 526.1L343.5 528.0M345.3 526.1L344.3 524.1M345.1 529.9L349.2 530.6M345.1 529.9L345.4 527.0M344.8 533.6L342.3 533.0M344.8 533.6L340.8 531.8M344.6 537.4L346.6 536.1M344.6 537.4L340.7 535.7M344.3 541.2L341.7 539.7M344.3 541.2L346.6 543.3M344.0 544.9L346.3 545.6M344.0 544.9L344.1 547.4M343.8 548.7L340.4 546.8M343.8 548.7L345.4 545.3M343.5 552.5L341.8 553.9M343.5 552.5L341.6 553.6M343.3 556.2L345.3 557.1M343.3 556.2L341.5 557.7M343.0 560.0L342.1 564.2M343.0 560.0L343.4 564.2" stroke="#000" stroke-width="0.6" stroke-opacity="0.85"/><path d="M361,300 L343,560" stroke="#000" stroke-width="0.8" stroke-opacity="0.4"/>
<path d="M550,430 L605,540" stroke="#1a5a18" stroke-width="3" stroke-opacity="0.5" fill="none"/>
<path d="M556,418 L584,408" stroke="#c04020" stroke-width="1.5" fill="none"/>
</g>
<g fill="#000">
<path d="M376.0,297.5 L468.0,295.5 A4.8,4.8 0 0 1 468.0,305.0 L376.0,318.5 A10.5,10.5 0 0 1 376.0,297.5 Z"/>
<path d="M375.0,329.5 L477.0,314.0 A8.2,8.2 0 0 1 477.0,330.5 L375.0,347.5 A9.0,9.0 0 0 1 375.0,329.5 Z"/>
<path d="M372.0,359.5 L488.0,341.0 A9.0,9.0 0 0 1 488.0,359.0 L372.0,377.5 A9.0,9.0 0 0 1 372.0,359.5 Z"/>
</g>
<path d="M367,581 L568,545.5" stroke="#c040c0" stroke-width="0.8"/>
</svg>
</body></html>
